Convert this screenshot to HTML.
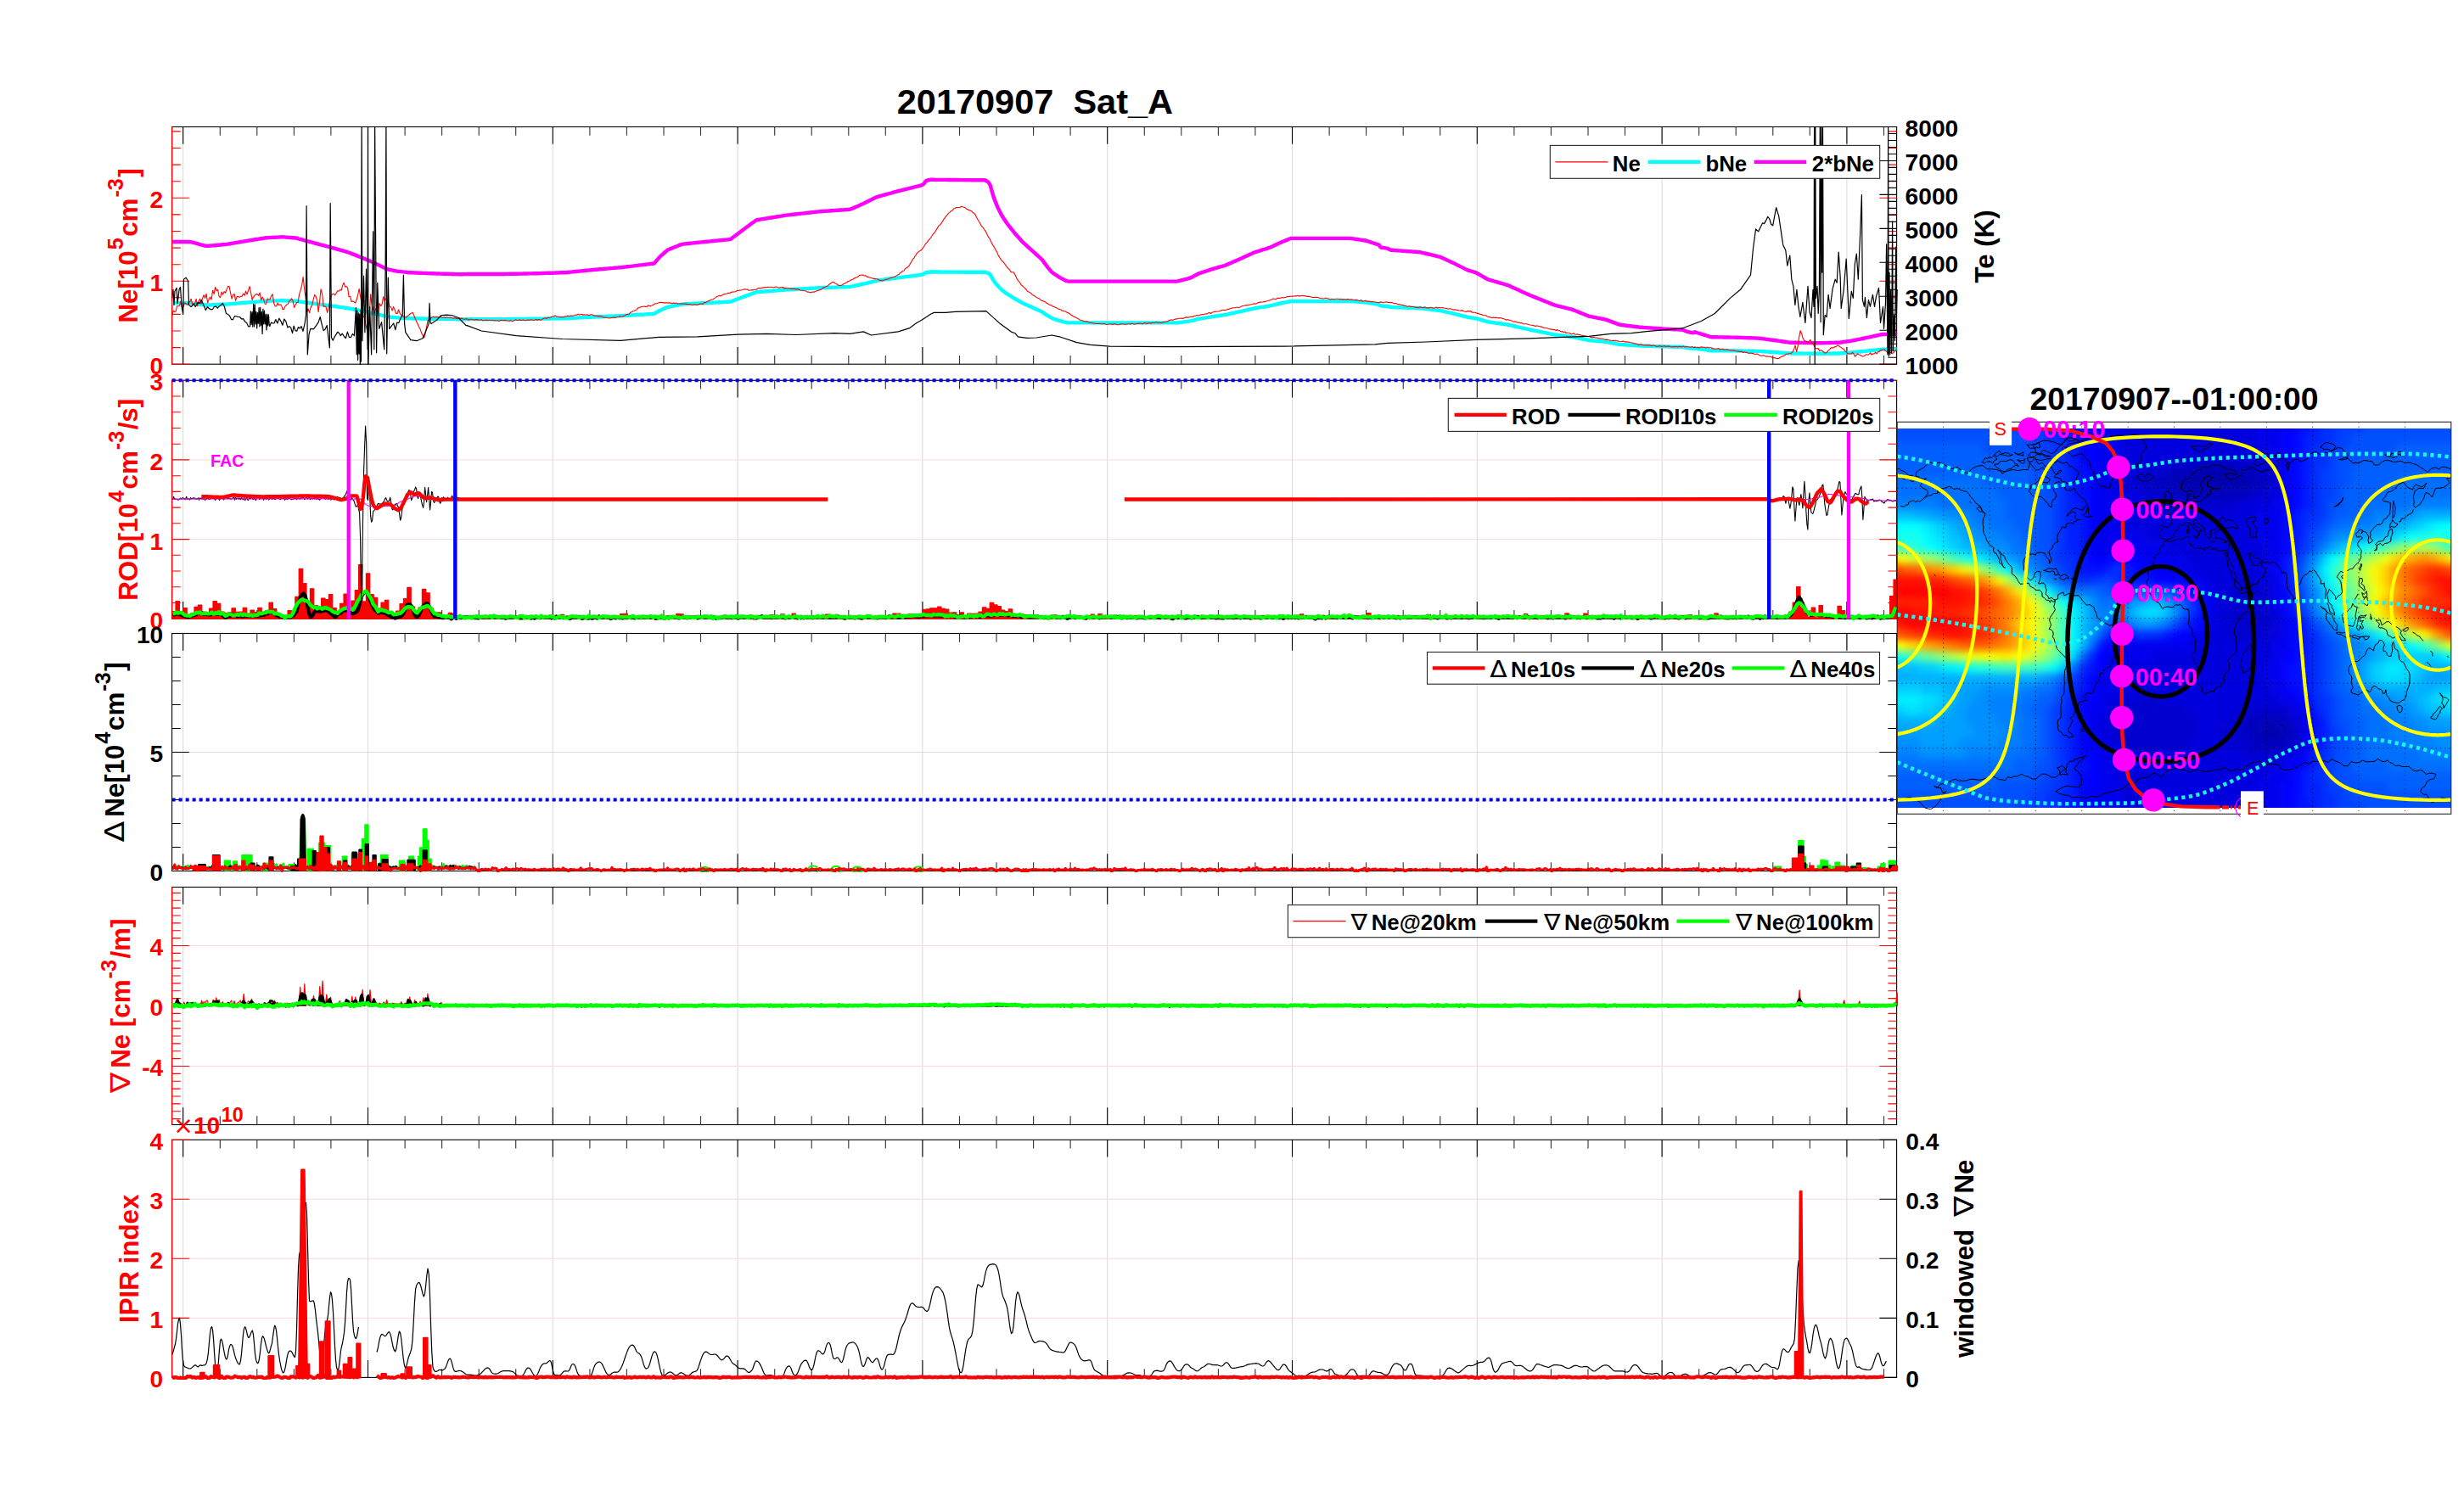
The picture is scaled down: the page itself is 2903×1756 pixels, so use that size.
<!DOCTYPE html>
<html><head><meta charset="utf-8"><title>20170907 Sat_A</title><style>
html,body{margin:0;padding:0;background:#fff;}
svg{display:block}
text{font-family:"Liberation Sans", "DejaVu Sans", sans-serif;font-weight:bold;}
.tk{font-size:28.2px}
.yl{font-size:31.3px}
.sp{font-size:25.2px}
.sp2{font-size:23.3px}
.lg{font-size:25.8px}
.ti{font-size:41.5px}
.mt{font-size:37.3px}
.tm{font-family:"DejaVu Sans", "Liberation Sans", sans-serif;font-weight:normal}
.nb{font-family:"DejaVu Sans", "Liberation Sans", sans-serif;font-weight:normal;font-size:32px}
.nb2{font-family:"DejaVu Sans", "Liberation Sans", sans-serif;font-weight:normal;font-size:26.4px}
.dl{font-family:"DejaVu Sans", "Liberation Sans", sans-serif;font-weight:normal;font-size:32.1px}
.dl2{font-family:"DejaVu Sans", "Liberation Sans", sans-serif;font-weight:normal;font-size:26.5px}
.ml{font-size:28.6px;fill:#ff00ff}
.se{font-weight:normal;font-size:21.6px;fill:#ff0000}
.fac{font-size:19.8px;fill:#ff00ff}
</style></head><body>
<svg width="2903" height="1756" viewBox="0 0 2903 1756">
<rect width="2903" height="1756" fill="#fff"/>
<defs>
<clipPath id="c0"><rect x="202.6" y="149.5" width="2033.5" height="280.2"/></clipPath>
<clipPath id="c1"><rect x="202.6" y="448.3" width="2033.5" height="283.5"/></clipPath>
<clipPath id="c2"><rect x="202.6" y="746.5" width="2033.5" height="281.6"/></clipPath>
<clipPath id="c3"><rect x="202.6" y="1045.5" width="2033.5" height="280.5"/></clipPath>
<clipPath id="c4"><rect x="202.6" y="1343.3" width="2033.5" height="282.7"/></clipPath>
<clipPath id="mc"><rect x="2235.2" y="505.1" width="652.6" height="447"/></clipPath>
<clipPath id="mf"><rect x="2235.2" y="497.3" width="652.6" height="462"/></clipPath>
<clipPath id="me"><rect x="2235.2" y="477.3" width="652.6" height="485.4"/></clipPath>
<filter id="bl" x="-5%" y="-5%" width="110%" height="110%" color-interpolation-filters="sRGB"><feGaussianBlur stdDeviation="4.2 4.2"/></filter>
</defs>
<path d="M215.7 149.5V429.2M433.5 149.5V429.2M651.3 149.5V429.2M869.1 149.5V429.2M1086.9 149.5V429.2M1304.7 149.5V429.2M1522.5 149.5V429.2M1740.3 149.5V429.2M1958.1 149.5V429.2M2175.9 149.5V429.2" stroke="#d9d9d9" stroke-width="1" fill="none"/>
<path d="M215.7 448.3V729.2M433.5 448.3V729.2M651.3 448.3V729.2M869.1 448.3V729.2M1086.9 448.3V729.2M1304.7 448.3V729.2M1522.5 448.3V729.2M1740.3 448.3V729.2M1958.1 448.3V729.2M2175.9 448.3V729.2" stroke="#d9d9d9" stroke-width="1" fill="none"/>
<path d="M215.7 746.5V1026.5M433.5 746.5V1026.5M651.3 746.5V1026.5M869.1 746.5V1026.5M1086.9 746.5V1026.5M1304.7 746.5V1026.5M1522.5 746.5V1026.5M1740.3 746.5V1026.5M1958.1 746.5V1026.5M2175.9 746.5V1026.5" stroke="#d9d9d9" stroke-width="1" fill="none"/>
<path d="M215.7 1045.5V1325.5M433.5 1045.5V1325.5M651.3 1045.5V1325.5M869.1 1045.5V1325.5M1086.9 1045.5V1325.5M1304.7 1045.5V1325.5M1522.5 1045.5V1325.5M1740.3 1045.5V1325.5M1958.1 1045.5V1325.5M2175.9 1045.5V1325.5" stroke="#d9d9d9" stroke-width="1" fill="none"/>
<path d="M215.7 1343.3V1623.4M433.5 1343.3V1623.4M651.3 1343.3V1623.4M869.1 1343.3V1623.4M1086.9 1343.3V1623.4M1304.7 1343.3V1623.4M1522.5 1343.3V1623.4M1740.3 1343.3V1623.4M1958.1 1343.3V1623.4M2175.9 1343.3V1623.4" stroke="#d9d9d9" stroke-width="1" fill="none"/>
<path d="M202.6 635.6H2234.6M202.6 541.9H2234.6" stroke="#ffd9d9" stroke-width="1" fill="none"/>
<path d="M202.6 886.5H2234.6" stroke="#d9d9d9" stroke-width="1" fill="none"/>
<path d="M202.6 1114.5H2234.6M202.6 1185.5H2234.6M202.6 1256.5H2234.6" stroke="#ffd9d9" stroke-width="1" fill="none"/>
<path d="M202.6 1553.4H2234.6M202.6 1483.3H2234.6M202.6 1413.3H2234.6" stroke="#ffd9d9" stroke-width="1" fill="none"/>
<rect x="202.6" y="149.5" width="2032" height="279.7" fill="none" stroke="#000" stroke-width="1.1"/>
<line x1="202.6" y1="149.5" x2="202.6" y2="429.2" stroke="#ff0000" stroke-width="1.3" />
<rect x="202.6" y="448.3" width="2032" height="280.9" fill="none" stroke="#000" stroke-width="1.1"/>
<line x1="202.6" y1="448.3" x2="202.6" y2="729.2" stroke="#ff0000" stroke-width="1.3" />
<rect x="202.6" y="746.5" width="2032" height="280" fill="none" stroke="#000" stroke-width="1.1"/>
<rect x="202.6" y="1045.5" width="2032" height="280" fill="none" stroke="#000" stroke-width="1.1"/>
<line x1="202.6" y1="1045.5" x2="202.6" y2="1325.5" stroke="#ff0000" stroke-width="1.3" />
<rect x="202.6" y="1343.3" width="2032" height="280.1" fill="none" stroke="#000" stroke-width="1.1"/>
<line x1="202.6" y1="1343.3" x2="202.6" y2="1623.4" stroke="#ff0000" stroke-width="1.3" />
<path d="M215.7 149.5v20.3 M215.7 429.2v-20.3M433.5 149.5v20.3 M433.5 429.2v-20.3M651.3 149.5v20.3 M651.3 429.2v-20.3M869.1 149.5v20.3 M869.1 429.2v-20.3M1086.9 149.5v20.3 M1086.9 429.2v-20.3M1304.7 149.5v20.3 M1304.7 429.2v-20.3M1522.5 149.5v20.3 M1522.5 429.2v-20.3M1740.3 149.5v20.3 M1740.3 429.2v-20.3M1958.1 149.5v20.3 M1958.1 429.2v-20.3M2175.9 149.5v20.3 M2175.9 429.2v-20.3" stroke="#000" stroke-width="1.1" fill="none"/>
<path d="M259.3 149.5v10.2 M259.3 429.2v-10.2M302.8 149.5v10.2 M302.8 429.2v-10.2M346.4 149.5v10.2 M346.4 429.2v-10.2M389.9 149.5v10.2 M389.9 429.2v-10.2M477.1 149.5v10.2 M477.1 429.2v-10.2M520.6 149.5v10.2 M520.6 429.2v-10.2M564.2 149.5v10.2 M564.2 429.2v-10.2M607.7 149.5v10.2 M607.7 429.2v-10.2M694.9 149.5v10.2 M694.9 429.2v-10.2M738.4 149.5v10.2 M738.4 429.2v-10.2M782 149.5v10.2 M782 429.2v-10.2M825.5 149.5v10.2 M825.5 429.2v-10.2M912.7 149.5v10.2 M912.7 429.2v-10.2M956.2 149.5v10.2 M956.2 429.2v-10.2M999.8 149.5v10.2 M999.8 429.2v-10.2M1043.3 149.5v10.2 M1043.3 429.2v-10.2M1130.5 149.5v10.2 M1130.5 429.2v-10.2M1174 149.5v10.2 M1174 429.2v-10.2M1217.6 149.5v10.2 M1217.6 429.2v-10.2M1261.1 149.5v10.2 M1261.1 429.2v-10.2M1348.3 149.5v10.2 M1348.3 429.2v-10.2M1391.8 149.5v10.2 M1391.8 429.2v-10.2M1435.4 149.5v10.2 M1435.4 429.2v-10.2M1478.9 149.5v10.2 M1478.9 429.2v-10.2M1566.1 149.5v10.2 M1566.1 429.2v-10.2M1609.6 149.5v10.2 M1609.6 429.2v-10.2M1653.2 149.5v10.2 M1653.2 429.2v-10.2M1696.7 149.5v10.2 M1696.7 429.2v-10.2M1783.9 149.5v10.2 M1783.9 429.2v-10.2M1827.4 149.5v10.2 M1827.4 429.2v-10.2M1871 149.5v10.2 M1871 429.2v-10.2M1914.5 149.5v10.2 M1914.5 429.2v-10.2M2001.7 149.5v10.2 M2001.7 429.2v-10.2M2045.2 149.5v10.2 M2045.2 429.2v-10.2M2088.8 149.5v10.2 M2088.8 429.2v-10.2M2132.3 149.5v10.2 M2132.3 429.2v-10.2M2219.5 149.5v10.2 M2219.5 429.2v-10.2" stroke="#333" stroke-width="1.1" fill="none"/>
<path d="M215.7 448.3v20.3 M215.7 729.2v-20.3M433.5 448.3v20.3 M433.5 729.2v-20.3M651.3 448.3v20.3 M651.3 729.2v-20.3M869.1 448.3v20.3 M869.1 729.2v-20.3M1086.9 448.3v20.3 M1086.9 729.2v-20.3M1304.7 448.3v20.3 M1304.7 729.2v-20.3M1522.5 448.3v20.3 M1522.5 729.2v-20.3M1740.3 448.3v20.3 M1740.3 729.2v-20.3M1958.1 448.3v20.3 M1958.1 729.2v-20.3M2175.9 448.3v20.3 M2175.9 729.2v-20.3" stroke="#000" stroke-width="1.1" fill="none"/>
<path d="M259.3 448.3v10.2 M259.3 729.2v-10.2M302.8 448.3v10.2 M302.8 729.2v-10.2M346.4 448.3v10.2 M346.4 729.2v-10.2M389.9 448.3v10.2 M389.9 729.2v-10.2M477.1 448.3v10.2 M477.1 729.2v-10.2M520.6 448.3v10.2 M520.6 729.2v-10.2M564.2 448.3v10.2 M564.2 729.2v-10.2M607.7 448.3v10.2 M607.7 729.2v-10.2M694.9 448.3v10.2 M694.9 729.2v-10.2M738.4 448.3v10.2 M738.4 729.2v-10.2M782 448.3v10.2 M782 729.2v-10.2M825.5 448.3v10.2 M825.5 729.2v-10.2M912.7 448.3v10.2 M912.7 729.2v-10.2M956.2 448.3v10.2 M956.2 729.2v-10.2M999.8 448.3v10.2 M999.8 729.2v-10.2M1043.3 448.3v10.2 M1043.3 729.2v-10.2M1130.5 448.3v10.2 M1130.5 729.2v-10.2M1174 448.3v10.2 M1174 729.2v-10.2M1217.6 448.3v10.2 M1217.6 729.2v-10.2M1261.1 448.3v10.2 M1261.1 729.2v-10.2M1348.3 448.3v10.2 M1348.3 729.2v-10.2M1391.8 448.3v10.2 M1391.8 729.2v-10.2M1435.4 448.3v10.2 M1435.4 729.2v-10.2M1478.9 448.3v10.2 M1478.9 729.2v-10.2M1566.1 448.3v10.2 M1566.1 729.2v-10.2M1609.6 448.3v10.2 M1609.6 729.2v-10.2M1653.2 448.3v10.2 M1653.2 729.2v-10.2M1696.7 448.3v10.2 M1696.7 729.2v-10.2M1783.9 448.3v10.2 M1783.9 729.2v-10.2M1827.4 448.3v10.2 M1827.4 729.2v-10.2M1871 448.3v10.2 M1871 729.2v-10.2M1914.5 448.3v10.2 M1914.5 729.2v-10.2M2001.7 448.3v10.2 M2001.7 729.2v-10.2M2045.2 448.3v10.2 M2045.2 729.2v-10.2M2088.8 448.3v10.2 M2088.8 729.2v-10.2M2132.3 448.3v10.2 M2132.3 729.2v-10.2M2219.5 448.3v10.2 M2219.5 729.2v-10.2" stroke="#333" stroke-width="1.1" fill="none"/>
<path d="M215.7 746.5v20.3 M215.7 1026.5v-20.3M433.5 746.5v20.3 M433.5 1026.5v-20.3M651.3 746.5v20.3 M651.3 1026.5v-20.3M869.1 746.5v20.3 M869.1 1026.5v-20.3M1086.9 746.5v20.3 M1086.9 1026.5v-20.3M1304.7 746.5v20.3 M1304.7 1026.5v-20.3M1522.5 746.5v20.3 M1522.5 1026.5v-20.3M1740.3 746.5v20.3 M1740.3 1026.5v-20.3M1958.1 746.5v20.3 M1958.1 1026.5v-20.3M2175.9 746.5v20.3 M2175.9 1026.5v-20.3" stroke="#000" stroke-width="1.1" fill="none"/>
<path d="M259.3 746.5v10.2 M259.3 1026.5v-10.2M302.8 746.5v10.2 M302.8 1026.5v-10.2M346.4 746.5v10.2 M346.4 1026.5v-10.2M389.9 746.5v10.2 M389.9 1026.5v-10.2M477.1 746.5v10.2 M477.1 1026.5v-10.2M520.6 746.5v10.2 M520.6 1026.5v-10.2M564.2 746.5v10.2 M564.2 1026.5v-10.2M607.7 746.5v10.2 M607.7 1026.5v-10.2M694.9 746.5v10.2 M694.9 1026.5v-10.2M738.4 746.5v10.2 M738.4 1026.5v-10.2M782 746.5v10.2 M782 1026.5v-10.2M825.5 746.5v10.2 M825.5 1026.5v-10.2M912.7 746.5v10.2 M912.7 1026.5v-10.2M956.2 746.5v10.2 M956.2 1026.5v-10.2M999.8 746.5v10.2 M999.8 1026.5v-10.2M1043.3 746.5v10.2 M1043.3 1026.5v-10.2M1130.5 746.5v10.2 M1130.5 1026.5v-10.2M1174 746.5v10.2 M1174 1026.5v-10.2M1217.6 746.5v10.2 M1217.6 1026.5v-10.2M1261.1 746.5v10.2 M1261.1 1026.5v-10.2M1348.3 746.5v10.2 M1348.3 1026.5v-10.2M1391.8 746.5v10.2 M1391.8 1026.5v-10.2M1435.4 746.5v10.2 M1435.4 1026.5v-10.2M1478.9 746.5v10.2 M1478.9 1026.5v-10.2M1566.1 746.5v10.2 M1566.1 1026.5v-10.2M1609.6 746.5v10.2 M1609.6 1026.5v-10.2M1653.2 746.5v10.2 M1653.2 1026.5v-10.2M1696.7 746.5v10.2 M1696.7 1026.5v-10.2M1783.9 746.5v10.2 M1783.9 1026.5v-10.2M1827.4 746.5v10.2 M1827.4 1026.5v-10.2M1871 746.5v10.2 M1871 1026.5v-10.2M1914.5 746.5v10.2 M1914.5 1026.5v-10.2M2001.7 746.5v10.2 M2001.7 1026.5v-10.2M2045.2 746.5v10.2 M2045.2 1026.5v-10.2M2088.8 746.5v10.2 M2088.8 1026.5v-10.2M2132.3 746.5v10.2 M2132.3 1026.5v-10.2M2219.5 746.5v10.2 M2219.5 1026.5v-10.2" stroke="#333" stroke-width="1.1" fill="none"/>
<path d="M215.7 1045.5v20.3 M215.7 1325.5v-20.3M433.5 1045.5v20.3 M433.5 1325.5v-20.3M651.3 1045.5v20.3 M651.3 1325.5v-20.3M869.1 1045.5v20.3 M869.1 1325.5v-20.3M1086.9 1045.5v20.3 M1086.9 1325.5v-20.3M1304.7 1045.5v20.3 M1304.7 1325.5v-20.3M1522.5 1045.5v20.3 M1522.5 1325.5v-20.3M1740.3 1045.5v20.3 M1740.3 1325.5v-20.3M1958.1 1045.5v20.3 M1958.1 1325.5v-20.3M2175.9 1045.5v20.3 M2175.9 1325.5v-20.3" stroke="#000" stroke-width="1.1" fill="none"/>
<path d="M259.3 1045.5v10.2 M259.3 1325.5v-10.2M302.8 1045.5v10.2 M302.8 1325.5v-10.2M346.4 1045.5v10.2 M346.4 1325.5v-10.2M389.9 1045.5v10.2 M389.9 1325.5v-10.2M477.1 1045.5v10.2 M477.1 1325.5v-10.2M520.6 1045.5v10.2 M520.6 1325.5v-10.2M564.2 1045.5v10.2 M564.2 1325.5v-10.2M607.7 1045.5v10.2 M607.7 1325.5v-10.2M694.9 1045.5v10.2 M694.9 1325.5v-10.2M738.4 1045.5v10.2 M738.4 1325.5v-10.2M782 1045.5v10.2 M782 1325.5v-10.2M825.5 1045.5v10.2 M825.5 1325.5v-10.2M912.7 1045.5v10.2 M912.7 1325.5v-10.2M956.2 1045.5v10.2 M956.2 1325.5v-10.2M999.8 1045.5v10.2 M999.8 1325.5v-10.2M1043.3 1045.5v10.2 M1043.3 1325.5v-10.2M1130.5 1045.5v10.2 M1130.5 1325.5v-10.2M1174 1045.5v10.2 M1174 1325.5v-10.2M1217.6 1045.5v10.2 M1217.6 1325.5v-10.2M1261.1 1045.5v10.2 M1261.1 1325.5v-10.2M1348.3 1045.5v10.2 M1348.3 1325.5v-10.2M1391.8 1045.5v10.2 M1391.8 1325.5v-10.2M1435.4 1045.5v10.2 M1435.4 1325.5v-10.2M1478.9 1045.5v10.2 M1478.9 1325.5v-10.2M1566.1 1045.5v10.2 M1566.1 1325.5v-10.2M1609.6 1045.5v10.2 M1609.6 1325.5v-10.2M1653.2 1045.5v10.2 M1653.2 1325.5v-10.2M1696.7 1045.5v10.2 M1696.7 1325.5v-10.2M1783.9 1045.5v10.2 M1783.9 1325.5v-10.2M1827.4 1045.5v10.2 M1827.4 1325.5v-10.2M1871 1045.5v10.2 M1871 1325.5v-10.2M1914.5 1045.5v10.2 M1914.5 1325.5v-10.2M2001.7 1045.5v10.2 M2001.7 1325.5v-10.2M2045.2 1045.5v10.2 M2045.2 1325.5v-10.2M2088.8 1045.5v10.2 M2088.8 1325.5v-10.2M2132.3 1045.5v10.2 M2132.3 1325.5v-10.2M2219.5 1045.5v10.2 M2219.5 1325.5v-10.2" stroke="#333" stroke-width="1.1" fill="none"/>
<path d="M215.7 1343.3v20.3 M215.7 1623.4v-20.3M433.5 1343.3v20.3 M433.5 1623.4v-20.3M651.3 1343.3v20.3 M651.3 1623.4v-20.3M869.1 1343.3v20.3 M869.1 1623.4v-20.3M1086.9 1343.3v20.3 M1086.9 1623.4v-20.3M1304.7 1343.3v20.3 M1304.7 1623.4v-20.3M1522.5 1343.3v20.3 M1522.5 1623.4v-20.3M1740.3 1343.3v20.3 M1740.3 1623.4v-20.3M1958.1 1343.3v20.3 M1958.1 1623.4v-20.3M2175.9 1343.3v20.3 M2175.9 1623.4v-20.3" stroke="#000" stroke-width="1.1" fill="none"/>
<path d="M259.3 1343.3v10.2 M259.3 1623.4v-10.2M302.8 1343.3v10.2 M302.8 1623.4v-10.2M346.4 1343.3v10.2 M346.4 1623.4v-10.2M389.9 1343.3v10.2 M389.9 1623.4v-10.2M477.1 1343.3v10.2 M477.1 1623.4v-10.2M520.6 1343.3v10.2 M520.6 1623.4v-10.2M564.2 1343.3v10.2 M564.2 1623.4v-10.2M607.7 1343.3v10.2 M607.7 1623.4v-10.2M694.9 1343.3v10.2 M694.9 1623.4v-10.2M738.4 1343.3v10.2 M738.4 1623.4v-10.2M782 1343.3v10.2 M782 1623.4v-10.2M825.5 1343.3v10.2 M825.5 1623.4v-10.2M912.7 1343.3v10.2 M912.7 1623.4v-10.2M956.2 1343.3v10.2 M956.2 1623.4v-10.2M999.8 1343.3v10.2 M999.8 1623.4v-10.2M1043.3 1343.3v10.2 M1043.3 1623.4v-10.2M1130.5 1343.3v10.2 M1130.5 1623.4v-10.2M1174 1343.3v10.2 M1174 1623.4v-10.2M1217.6 1343.3v10.2 M1217.6 1623.4v-10.2M1261.1 1343.3v10.2 M1261.1 1623.4v-10.2M1348.3 1343.3v10.2 M1348.3 1623.4v-10.2M1391.8 1343.3v10.2 M1391.8 1623.4v-10.2M1435.4 1343.3v10.2 M1435.4 1623.4v-10.2M1478.9 1343.3v10.2 M1478.9 1623.4v-10.2M1566.1 1343.3v10.2 M1566.1 1623.4v-10.2M1609.6 1343.3v10.2 M1609.6 1623.4v-10.2M1653.2 1343.3v10.2 M1653.2 1623.4v-10.2M1696.7 1343.3v10.2 M1696.7 1623.4v-10.2M1783.9 1343.3v10.2 M1783.9 1623.4v-10.2M1827.4 1343.3v10.2 M1827.4 1623.4v-10.2M1871 1343.3v10.2 M1871 1623.4v-10.2M1914.5 1343.3v10.2 M1914.5 1623.4v-10.2M2001.7 1343.3v10.2 M2001.7 1623.4v-10.2M2045.2 1343.3v10.2 M2045.2 1623.4v-10.2M2088.8 1343.3v10.2 M2088.8 1623.4v-10.2M2132.3 1343.3v10.2 M2132.3 1623.4v-10.2M2219.5 1343.3v10.2 M2219.5 1623.4v-10.2" stroke="#333" stroke-width="1.1" fill="none"/>
<path d="M202.6 429.2h20.3M202.6 331.2h20.3M202.6 233.3h20.3M202.6 409.6h10.2M202.6 390h10.2M202.6 370.4h10.2M202.6 350.8h10.2M202.6 311.7h10.2M202.6 292.1h10.2M202.6 272.5h10.2M202.6 252.9h10.2M202.6 213.7h10.2M202.6 194.1h10.2M202.6 174.5h10.2M202.6 154.9h10.2" stroke="#ff0000" stroke-width="1.1" fill="none"/>
<path d="M2234.6 429.2h-20.3M2234.6 331.2h-20.3M2234.6 233.3h-20.3M2234.6 409.6h-10.2M2234.6 390h-10.2M2234.6 370.4h-10.2M2234.6 350.8h-10.2M2234.6 311.7h-10.2M2234.6 292.1h-10.2M2234.6 272.5h-10.2M2234.6 252.9h-10.2M2234.6 213.7h-10.2M2234.6 194.1h-10.2M2234.6 174.5h-10.2M2234.6 154.9h-10.2" stroke="#ff0000" stroke-width="1.1" fill="none"/>
<path d="M2234.6 429.2h-20.3M2234.6 389.2h-20.3M2234.6 349.3h-20.3M2234.6 309.3h-20.3M2234.6 269.4h-20.3M2234.6 229.4h-20.3M2234.6 189.5h-20.3M2234.6 149.5h-20.3M2234.6 421.2h-10.2M2234.6 413.2h-10.2M2234.6 405.2h-10.2M2234.6 397.2h-10.2M2234.6 381.3h-10.2M2234.6 373.3h-10.2M2234.6 365.3h-10.2M2234.6 357.3h-10.2M2234.6 341.3h-10.2M2234.6 333.3h-10.2M2234.6 325.3h-10.2M2234.6 317.3h-10.2M2234.6 301.3h-10.2M2234.6 293.3h-10.2M2234.6 285.4h-10.2M2234.6 277.4h-10.2M2234.6 261.4h-10.2M2234.6 253.4h-10.2M2234.6 245.4h-10.2M2234.6 237.4h-10.2M2234.6 221.4h-10.2M2234.6 213.4h-10.2M2234.6 205.4h-10.2M2234.6 197.4h-10.2M2234.6 181.5h-10.2M2234.6 173.5h-10.2M2234.6 165.5h-10.2M2234.6 157.5h-10.2" stroke="#000" stroke-width="1.1" fill="none"/>
<text x="192.3" y="441.1" fill="#ff0000" text-anchor="end" class="tk">0</text>
<text x="192.3" y="343.1" fill="#ff0000" text-anchor="end" class="tk">1</text>
<text x="192.3" y="245.2" fill="#ff0000" text-anchor="end" class="tk">2</text>
<text x="2244.6" y="441.1" fill="#000" text-anchor="start" class="tk">1000</text>
<text x="2244.6" y="401.1" fill="#000" text-anchor="start" class="tk">2000</text>
<text x="2244.6" y="361.2" fill="#000" text-anchor="start" class="tk">3000</text>
<text x="2244.6" y="321.2" fill="#000" text-anchor="start" class="tk">4000</text>
<text x="2244.6" y="281.3" fill="#000" text-anchor="start" class="tk">5000</text>
<text x="2244.6" y="241.3" fill="#000" text-anchor="start" class="tk">6000</text>
<text x="2244.6" y="201.4" fill="#000" text-anchor="start" class="tk">7000</text>
<text x="2244.6" y="161.4" fill="#000" text-anchor="start" class="tk">8000</text>
<text transform="translate(161.6,289.4) rotate(-90)" fill="#ff0000" text-anchor="middle" class="yl">Ne[10<tspan dy="-16.5" dx="1" class="sp">5</tspan><tspan dy="16.5" dx="1.5">&#8203;</tspan>cm<tspan dy="-16.5" dx="1" class="sp">-3</tspan><tspan dy="16.5" dx="1.5">&#8203;</tspan>]</text>
<text transform="translate(2348.6,290.4) rotate(-90)" fill="#000" text-anchor="middle" class="yl">Te (K)</text>
<path d="M202.6 729.2h20.3M202.6 635.6h20.3M202.6 541.9h20.3M202.6 448.3h20.3M202.6 710.5h10.2M202.6 691.7h10.2M202.6 673h10.2M202.6 654.3h10.2M202.6 616.8h10.2M202.6 598.1h10.2M202.6 579.4h10.2M202.6 560.7h10.2M202.6 523.2h10.2M202.6 504.5h10.2M202.6 485.8h10.2M202.6 467h10.2" stroke="#ff0000" stroke-width="1.1" fill="none"/>
<path d="M2234.6 729.2h-20.3M2234.6 635.6h-20.3M2234.6 541.9h-20.3M2234.6 448.3h-20.3M2234.6 710.5h-10.2M2234.6 691.7h-10.2M2234.6 673h-10.2M2234.6 654.3h-10.2M2234.6 616.8h-10.2M2234.6 598.1h-10.2M2234.6 579.4h-10.2M2234.6 560.7h-10.2M2234.6 523.2h-10.2M2234.6 504.5h-10.2M2234.6 485.8h-10.2M2234.6 467h-10.2" stroke="#ff0000" stroke-width="1.1" fill="none"/>
<text x="192.3" y="741.1" fill="#ff0000" text-anchor="end" class="tk">0</text>
<text x="192.3" y="647.5" fill="#ff0000" text-anchor="end" class="tk">1</text>
<text x="192.3" y="553.8" fill="#ff0000" text-anchor="end" class="tk">2</text>
<text x="192.3" y="460.2" fill="#ff0000" text-anchor="end" class="tk">3</text>
<text transform="translate(162.4,588.8) rotate(-90)" fill="#ff0000" text-anchor="middle" class="yl">ROD[10<tspan dy="-16.5" dx="1" class="sp">4</tspan><tspan dy="16.5" dx="1.5">&#8203;</tspan>cm<tspan dy="-16.5" dx="1" class="sp">-3</tspan><tspan dy="16.5" dx="1.5">&#8203;</tspan>/s]</text>
<path d="M202.6 1026.5h20.3M202.6 886.5h20.3M202.6 746.5h20.3M202.6 998.5h10.2M202.6 970.5h10.2M202.6 942.5h10.2M202.6 914.5h10.2M202.6 858.5h10.2M202.6 830.5h10.2M202.6 802.5h10.2M202.6 774.5h10.2" stroke="#000" stroke-width="1.1" fill="none"/>
<path d="M2234.6 1026.5h-20.3M2234.6 886.5h-20.3M2234.6 746.5h-20.3M2234.6 998.5h-10.2M2234.6 970.5h-10.2M2234.6 942.5h-10.2M2234.6 914.5h-10.2M2234.6 858.5h-10.2M2234.6 830.5h-10.2M2234.6 802.5h-10.2M2234.6 774.5h-10.2" stroke="#000" stroke-width="1.1" fill="none"/>
<text x="192.3" y="1038.4" fill="#000" text-anchor="end" class="tk">0</text>
<text x="192.3" y="898.4" fill="#000" text-anchor="end" class="tk">5</text>
<text x="192.3" y="758.4" fill="#000" text-anchor="end" class="tk">10</text>
<text transform="translate(146.4,886.5) rotate(-90)" fill="#000" text-anchor="middle" class="yl"><tspan class="dl" textLength="24.9" lengthAdjust="spacingAndGlyphs">&#916;</tspan><tspan dx="5">&#8203;</tspan>Ne[10<tspan dy="-16.5" dx="1" class="sp">4</tspan><tspan dy="16.5" dx="1.5">&#8203;</tspan>cm<tspan dy="-16.5" dx="1" class="sp">-3</tspan><tspan dy="16.5" dx="1.5">&#8203;</tspan>]</text>
<path d="M202.6 1114.5h20.3M202.6 1185.5h20.3M202.6 1256.5h20.3M202.6 1052.4h10.2M202.6 1061.2h10.2M202.6 1070.1h10.2M202.6 1079h10.2M202.6 1087.9h10.2M202.6 1096.8h10.2M202.6 1105.6h10.2M202.6 1123.4h10.2M202.6 1132.2h10.2M202.6 1141.1h10.2M202.6 1150h10.2M202.6 1158.9h10.2M202.6 1167.8h10.2M202.6 1176.6h10.2M202.6 1194.4h10.2M202.6 1203.2h10.2M202.6 1212.1h10.2M202.6 1221h10.2M202.6 1229.9h10.2M202.6 1238.8h10.2M202.6 1247.6h10.2M202.6 1265.4h10.2M202.6 1274.2h10.2M202.6 1283.1h10.2M202.6 1292h10.2M202.6 1300.9h10.2M202.6 1309.8h10.2M202.6 1318.6h10.2" stroke="#ff0000" stroke-width="1.1" fill="none"/>
<path d="M2234.6 1114.5h-20.3M2234.6 1185.5h-20.3M2234.6 1256.5h-20.3M2234.6 1052.4h-10.2M2234.6 1061.2h-10.2M2234.6 1070.1h-10.2M2234.6 1079h-10.2M2234.6 1087.9h-10.2M2234.6 1096.8h-10.2M2234.6 1105.6h-10.2M2234.6 1123.4h-10.2M2234.6 1132.2h-10.2M2234.6 1141.1h-10.2M2234.6 1150h-10.2M2234.6 1158.9h-10.2M2234.6 1167.8h-10.2M2234.6 1176.6h-10.2M2234.6 1194.4h-10.2M2234.6 1203.2h-10.2M2234.6 1212.1h-10.2M2234.6 1221h-10.2M2234.6 1229.9h-10.2M2234.6 1238.8h-10.2M2234.6 1247.6h-10.2M2234.6 1265.4h-10.2M2234.6 1274.2h-10.2M2234.6 1283.1h-10.2M2234.6 1292h-10.2M2234.6 1300.9h-10.2M2234.6 1309.8h-10.2M2234.6 1318.6h-10.2" stroke="#ff0000" stroke-width="1.1" fill="none"/>
<text x="192.3" y="1126.4" fill="#ff0000" text-anchor="end" class="tk">4</text>
<text x="192.3" y="1197.4" fill="#ff0000" text-anchor="end" class="tk">0</text>
<text x="192.3" y="1268.4" fill="#ff0000" text-anchor="end" class="tk">-4</text>
<text transform="translate(153.3,1185.5) rotate(-90)" fill="#ff0000" text-anchor="middle" class="yl"><tspan class="nb" textLength="24.5" lengthAdjust="spacingAndGlyphs">&#8711;</tspan><tspan dx="5">&#8203;</tspan>Ne [cm<tspan dy="-16.5" dx="1" class="sp">-3</tspan><tspan dy="16.5" dx="1.5">&#8203;</tspan>/m]</text>
<path d="M202.6 1623.4h20.3M202.6 1553.4h20.3M202.6 1483.3h20.3M202.6 1413.3h20.3M202.6 1343.3h20.3" stroke="#ff0000" stroke-width="1.1" fill="none"/>
<path d="M2234.6 1623.4h-20.3M2234.6 1553.4h-20.3M2234.6 1483.3h-20.3M2234.6 1413.3h-20.3M2234.6 1343.3h-20.3" stroke="#000" stroke-width="1.1" fill="none"/>
<text x="192.3" y="1635.3" fill="#ff0000" text-anchor="end" class="tk">0</text>
<text x="192.3" y="1565.3" fill="#ff0000" text-anchor="end" class="tk">1</text>
<text x="192.3" y="1495.2" fill="#ff0000" text-anchor="end" class="tk">2</text>
<text x="192.3" y="1425.2" fill="#ff0000" text-anchor="end" class="tk">3</text>
<text x="192.3" y="1355.2" fill="#ff0000" text-anchor="end" class="tk">4</text>
<text x="2245.2" y="1635.3" fill="#000" text-anchor="start" class="tk">0</text>
<text x="2245.2" y="1565.3" fill="#000" text-anchor="start" class="tk">0.1</text>
<text x="2245.2" y="1495.2" fill="#000" text-anchor="start" class="tk">0.2</text>
<text x="2245.2" y="1425.2" fill="#000" text-anchor="start" class="tk">0.3</text>
<text x="2245.2" y="1355.2" fill="#000" text-anchor="start" class="tk">0.4</text>
<text transform="translate(162.7,1483.3) rotate(-90)" fill="#ff0000" text-anchor="middle" class="yl">IPIR index</text>
<text transform="translate(2325.3,1483.3) rotate(-90)" fill="#000" text-anchor="middle" class="yl">windowed <tspan class="nb" dx="6" textLength="24.5" lengthAdjust="spacingAndGlyphs">&#8711;</tspan><tspan dx="3">&#8203;</tspan>Ne</text>
<text x="204.3" y="1336.3" fill="#ff0000" class="tk"><tspan class="tm">&#215;</tspan>10<tspan dy="-14" dx="1.5" class="sp2">10</tspan></text>
<g clip-path="url(#c0)">
<polyline points="202.6,357.1 204.6,357.1 206.6,357.1 208.6,357.1 210.6,357.1 212.6,357.1 214.6,357.1 216.6,357.1 218.6,357.1 220.6,357.1 222.6,357.1 224.6,357.2 226.6,357.4 228.6,357.7 230.6,358 232.6,358.2 234.6,358.5 236.6,358.7 238.6,359 240.6,359.2 242.6,359.5 244.6,359.5 246.6,359.5 248.6,359.4 250.6,359.3 252.6,359.2 254.6,359.1 256.6,359 258.6,358.9 260.6,358.8 262.6,358.8 264.6,358.7 266.6,358.6 268.6,358.4 270.6,358.2 272.6,358.1 274.6,357.9 276.6,357.7 278.6,357.6 280.6,357.4 282.6,357.2 284.6,357.1 286.6,356.9 288.6,356.7 290.6,356.6 292.6,356.4 294.6,356.2 296.6,356.1 298.6,355.9 300.6,355.8 302.6,355.6 304.6,355.4 306.6,355.3 308.6,355.1 310.6,354.9 312.6,354.8 314.6,354.7 316.6,354.7 318.6,354.6 320.6,354.6 322.6,354.5 324.6,354.5 326.6,354.4 328.6,354.4 330.6,354.3 332.6,354.3 334.6,354.3 336.6,354.4 338.6,354.5 340.6,354.5 342.6,354.6 344.6,354.7 346.6,354.8 348.6,354.8 350.6,355.1 352.6,355.4 354.6,355.7 356.6,355.9 358.6,356.2 360.6,356.5 362.6,356.8 364.6,357 366.6,357.3 368.6,357.6 370.6,357.8 372.6,358.1 374.6,358.4 376.6,358.6 378.6,358.9 380.6,359.2 382.6,359.4 384.6,359.7 386.6,359.9 388.6,360.2 390.6,360.5 392.6,360.8 394.6,361 396.6,361.3 398.6,361.6 400.6,361.9 402.6,362.2 404.6,362.4 406.6,362.7 408.6,363 410.6,363.4 412.6,363.7 414.6,364.1 416.6,364.5 418.6,364.9 420.6,365.3 422.6,365.7 424.6,366.1 426.6,366.5 428.6,366.9 430.6,367.3 432.6,367.7 434.6,368.2 436.6,368.6 438.6,369 440.6,369.4 442.6,369.9 444.6,370.4 446.6,370.9 448.6,371.4 450.6,371.9 452.6,372.4 454.6,372.9 456.6,373.3 458.6,373.5 460.6,373.7 462.6,373.9 464.6,374.1 466.6,374.3 468.6,374.4 470.6,374.6 472.6,374.7 474.6,374.8 476.6,374.9 478.6,375 480.6,375.1 482.6,375.2 484.6,375.3 486.6,375.3 488.6,375.3 490.6,375.4 492.6,375.4 494.6,375.5 496.6,375.5 498.6,375.5 500.6,375.6 502.6,375.6 504.6,375.7 506.6,375.7 508.6,375.7 510.6,375.8 512.6,375.8 514.6,375.8 516.6,375.9 518.6,375.9 520.6,375.9 522.6,375.9 524.6,376 526.6,376 528.6,376 530.6,376 532.6,376.1 534.6,376.1 536.6,376.1 538.6,376.2 540.6,376.2 542.6,376.2 544.6,376.2 546.6,376.2 548.6,376.1 550.6,376.1 552.6,376.1 554.6,376.1 556.6,376.1 558.6,376.1 560.6,376.1 562.6,376.1 564.6,376.1 566.6,376.1 568.6,376.1 570.6,376.1 572.6,376.1 574.6,376.1 576.6,376.1 578.6,376.1 580.6,376.1 582.6,376.1 584.6,376.1 586.6,376.1 588.6,376.1 590.6,376.1 592.6,376.1 594.6,376.1 596.6,376.1 598.6,376 600.6,376 602.6,376 604.6,376 606.6,376 608.6,375.9 610.6,375.9 612.6,375.9 614.6,375.9 616.6,375.9 618.6,375.9 620.6,375.8 622.6,375.8 624.6,375.8 626.6,375.8 628.6,375.8 630.6,375.7 632.6,375.7 634.6,375.7 636.6,375.6 638.6,375.6 640.6,375.6 642.6,375.6 644.6,375.5 646.6,375.5 648.6,375.5 650.6,375.4 652.6,375.4 654.6,375.4 656.6,375.3 658.6,375.3 660.6,375.3 662.6,375.2 664.6,375.2 666.6,375.2 668.6,375.1 670.6,375 672.6,374.9 674.6,374.8 676.6,374.7 678.6,374.6 680.6,374.5 682.6,374.4 684.6,374.3 686.6,374.2 688.6,374.1 690.6,374 692.6,373.9 694.6,373.8 696.6,373.7 698.6,373.6 700.6,373.5 702.6,373.4 704.6,373.3 706.6,373.3 708.6,373.2 710.6,373.1 712.6,373 714.6,372.9 716.6,372.8 718.6,372.7 720.6,372.6 722.6,372.6 724.6,372.5 726.6,372.4 728.6,372.3 730.6,372.2 732.6,372.1 734.6,372 736.6,371.9 738.6,371.8 740.6,371.7 742.6,371.5 744.6,371.4 746.6,371.3 748.6,371.2 750.6,371 752.6,370.9 754.6,370.8 756.6,370.7 758.6,370.6 760.6,370.4 762.6,370.3 764.6,370.2 766.6,370.1 768.6,370 770.6,369.8 772.6,368.7 774.6,367.5 776.6,366.4 778.6,365.4 780.6,364.5 782.6,363.6 784.6,362.7 786.6,361.9 788.6,361.5 790.6,361.1 792.6,360.7 794.6,360.3 796.6,359.9 798.6,359.5 800.6,359.1 802.6,358.7 804.6,358.4 806.6,358.3 808.6,358.2 810.6,358.1 812.6,358 814.6,357.9 816.6,357.8 818.6,357.7 820.6,357.6 822.6,357.5 824.6,357.4 826.6,357.3 828.6,357.2 830.6,357.1 832.6,357 834.6,356.9 836.6,356.8 838.6,356.7 840.6,356.6 842.6,356.5 844.6,356.4 846.6,356.3 848.6,356.2 850.6,356.1 852.6,356 854.6,355.9 856.6,355.8 858.6,355.7 860.6,355.6 862.6,354.8 864.6,354.1 866.6,353.3 868.6,352.6 870.6,351.8 872.6,351.1 874.6,350.3 876.6,349.6 878.6,348.9 880.6,348.1 882.6,347.4 884.6,346.7 886.6,345.9 888.6,345.2 890.6,344.5 892.6,344.1 894.6,344 896.6,343.8 898.6,343.7 900.6,343.5 902.6,343.3 904.6,343.2 906.6,343 908.6,342.9 910.6,342.7 912.6,342.5 914.6,342.4 916.6,342.2 918.6,342 920.6,341.9 922.6,341.7 924.6,341.6 926.6,341.4 928.6,341.3 930.6,341.2 932.6,341.1 934.6,341 936.6,340.8 938.6,340.7 940.6,340.6 942.6,340.5 944.6,340.4 946.6,340.3 948.6,340.2 950.6,340.1 952.6,340 954.6,339.8 956.6,339.7 958.6,339.6 960.6,339.5 962.6,339.4 964.6,339.3 966.6,339.2 968.6,339.1 970.6,339 972.6,339 974.6,338.9 976.6,338.8 978.6,338.8 980.6,338.7 982.6,338.6 984.6,338.6 986.6,338.5 988.6,338.4 990.6,338.4 992.6,338.3 994.6,338.2 996.6,338.2 998.6,338.1 1000.6,338 1002.6,337.7 1004.6,337.3 1006.6,336.9 1008.6,336.5 1010.6,336 1012.6,335.6 1014.6,335.2 1016.6,334.7 1018.6,334.3 1020.6,333.8 1022.6,333.3 1024.6,332.8 1026.6,332.3 1028.6,331.8 1030.6,331.3 1032.6,330.8 1034.6,330.4 1036.6,330.2 1038.6,329.9 1040.6,329.6 1042.6,329.3 1044.6,329.1 1046.6,328.8 1048.6,328.5 1050.6,328.2 1052.6,328 1054.6,327.7 1056.6,327.4 1058.6,327.2 1060.6,326.9 1062.6,326.7 1064.6,326.4 1066.6,326.2 1068.6,325.9 1070.6,325.7 1072.6,325.4 1074.6,325.2 1076.6,324.9 1078.6,324.7 1080.6,324.4 1082.6,324.2 1084.6,323.9 1086.6,323.5 1088.6,322.8 1090.6,321.3 1092.6,320.8 1094.6,320.7 1096.6,320.5 1098.6,320.5 1100.6,320.5 1102.6,320.5 1104.6,320.5 1106.6,320.5 1108.6,320.6 1110.6,320.6 1112.6,320.6 1114.6,320.6 1116.6,320.6 1118.6,320.6 1120.6,320.6 1122.6,320.6 1124.6,320.6 1126.6,320.6 1128.6,320.6 1130.6,320.6 1132.6,320.6 1134.6,320.6 1136.6,320.7 1138.6,320.7 1140.6,320.7 1142.6,320.7 1144.6,320.7 1146.6,320.7 1148.6,320.7 1150.6,320.7 1152.6,320.7 1154.6,320.7 1156.6,320.7 1158.6,320.7 1160.6,320.7 1162.6,321.4 1164.6,322 1166.6,323.6 1168.6,327.2 1170.6,330.6 1172.6,333.3 1174.6,335.8 1176.6,338 1178.6,340 1180.6,341.9 1182.6,343.4 1184.6,344.9 1186.6,346.4 1188.6,347.6 1190.6,348.9 1192.6,350.1 1194.6,351.4 1196.6,352.6 1198.6,353.7 1200.6,354.9 1202.6,356 1204.6,357.1 1206.6,358 1208.6,358.9 1210.6,359.8 1212.6,360.7 1214.6,361.6 1216.6,362.5 1218.6,363.4 1220.6,364.3 1222.6,365.2 1224.6,366.1 1226.6,367 1228.6,368.2 1230.6,369.6 1232.6,371 1234.6,372.2 1236.6,373.4 1238.6,374.6 1240.6,375.5 1242.6,376.1 1244.6,376.8 1246.6,377.5 1248.6,378.1 1250.6,378.6 1252.6,379.2 1254.6,379.7 1256.6,380.2 1258.6,380.4 1260.6,380.4 1262.6,380.4 1264.6,380.4 1266.6,380.4 1268.6,380.4 1270.6,380.4 1272.6,380.4 1274.6,380.4 1276.6,380.4 1278.6,380.4 1280.6,380.4 1282.6,380.4 1284.6,380.4 1286.6,380.4 1288.6,380.4 1290.6,380.4 1292.6,380.4 1294.6,380.4 1296.6,380.4 1298.6,380.4 1300.6,380.4 1302.6,380.4 1304.6,380.4 1306.6,380.4 1308.6,380.4 1310.6,380.4 1312.6,380.4 1314.6,380.4 1316.6,380.4 1318.6,380.4 1320.6,380.4 1322.6,380.4 1324.6,380.4 1326.6,380.4 1328.6,380.4 1330.6,380.4 1332.6,380.4 1334.6,380.4 1336.6,380.4 1338.6,380.4 1340.6,380.4 1342.6,380.4 1344.6,380.4 1346.6,380.4 1348.6,380.4 1350.6,380.4 1352.6,380.4 1354.6,380.4 1356.6,380.4 1358.6,380.4 1360.6,380.4 1362.6,380.4 1364.6,380.4 1366.6,380.4 1368.6,380.4 1370.6,380.4 1372.6,380.4 1374.6,380.4 1376.6,380.4 1378.6,380.4 1380.6,380.4 1382.6,380.4 1384.6,380.4 1386.6,380.4 1388.6,380.2 1390.6,379.9 1392.6,379.7 1394.6,379.4 1396.6,379.1 1398.6,378.9 1400.6,378.6 1402.6,378.4 1404.6,377.8 1406.6,377.3 1408.6,376.7 1410.6,376.2 1412.6,375.7 1414.6,375.4 1416.6,375.1 1418.6,374.7 1420.6,374.4 1422.6,374.1 1424.6,373.8 1426.6,373.4 1428.6,373.1 1430.6,372.8 1432.6,372.5 1434.6,372.3 1436.6,372 1438.6,371.7 1440.6,371.4 1442.6,371.1 1444.6,370.8 1446.6,370.3 1448.6,369.9 1450.6,369.4 1452.6,369 1454.6,368.6 1456.6,368.1 1458.6,367.7 1460.6,367.3 1462.6,366.8 1464.6,366.4 1466.6,365.9 1468.6,365.4 1470.6,365 1472.6,364.5 1474.6,364.1 1476.6,363.6 1478.6,363.2 1480.6,362.9 1482.6,362.6 1484.6,362.3 1486.6,362 1488.6,361.7 1490.6,361.3 1492.6,361 1494.6,360.7 1496.6,360.3 1498.6,359.9 1500.6,359.4 1502.6,358.9 1504.6,358.5 1506.6,358 1508.6,357.5 1510.6,357.1 1512.6,356.7 1514.6,356.3 1516.6,355.9 1518.6,355.5 1520.6,355.1 1522.6,355.1 1524.6,355.1 1526.6,355.1 1528.6,355.1 1530.6,355.1 1532.6,355.1 1534.6,355.1 1536.6,355.1 1538.6,355.1 1540.6,355.1 1542.6,355.1 1544.6,355.1 1546.6,355.1 1548.6,355.1 1550.6,355.1 1552.6,355.1 1554.6,355.1 1556.6,355.1 1558.6,355.1 1560.6,355.1 1562.6,355.1 1564.6,355.1 1566.6,355.1 1568.6,355.1 1570.6,355.1 1572.6,355.1 1574.6,355.1 1576.6,355.1 1578.6,355.1 1580.6,355.1 1582.6,355.1 1584.6,355.1 1586.6,355.1 1588.6,355.1 1590.6,355.1 1592.6,355.1 1594.6,355.3 1596.6,355.4 1598.6,355.6 1600.6,355.7 1602.6,355.9 1604.6,356 1606.6,356.2 1608.6,356.3 1610.6,356.6 1612.6,356.9 1614.6,357.2 1616.6,357.6 1618.6,357.9 1620.6,358.2 1622.6,358.6 1624.6,358.9 1626.6,360.4 1628.6,360.5 1630.6,360.7 1632.6,360.8 1634.6,361 1636.6,361.5 1638.6,361.9 1640.6,362 1642.6,362.1 1644.6,362.2 1646.6,362.2 1648.6,362.3 1650.6,362.4 1652.6,362.5 1654.6,362.5 1656.6,362.6 1658.6,362.7 1660.6,362.7 1662.6,362.8 1664.6,362.9 1666.6,362.9 1668.6,363 1670.6,363.1 1672.6,363.2 1674.6,363.4 1676.6,363.6 1678.6,363.9 1680.6,364.1 1682.6,364.3 1684.6,364.6 1686.6,364.8 1688.6,365 1690.6,365.3 1692.6,365.5 1694.6,365.7 1696.6,366 1698.6,366.4 1700.6,366.9 1702.6,367.4 1704.6,367.8 1706.6,368.3 1708.6,368.7 1710.6,369.2 1712.6,369.7 1714.6,370.2 1716.6,370.7 1718.6,371.2 1720.6,371.7 1722.6,372.2 1724.6,372.7 1726.6,373.2 1728.6,373.7 1730.6,374 1732.6,374.3 1734.6,374.6 1736.6,374.9 1738.6,375.2 1740.6,375.7 1742.6,376.3 1744.6,376.9 1746.6,377.4 1748.6,378 1750.6,378.6 1752.6,379.2 1754.6,379.5 1756.6,379.8 1758.6,380.1 1760.6,380.4 1762.6,380.7 1764.6,380.9 1766.6,381.2 1768.6,381.5 1770.6,381.8 1772.6,382.1 1774.6,382.4 1776.6,382.7 1778.6,383.1 1780.6,383.6 1782.6,384 1784.6,384.5 1786.6,385 1788.6,385.4 1790.6,385.9 1792.6,386.3 1794.6,386.8 1796.6,387.2 1798.6,387.7 1800.6,388.2 1802.6,388.6 1804.6,389 1806.6,389.4 1808.6,389.8 1810.6,390.2 1812.6,390.6 1814.6,391 1816.6,391.4 1818.6,391.8 1820.6,392.2 1822.6,392.6 1824.6,393 1826.6,393.4 1828.6,393.8 1830.6,394.2 1832.6,394.5 1834.6,394.7 1836.6,395 1838.6,395.2 1840.6,395.5 1842.6,395.7 1844.6,396 1846.6,396.2 1848.6,396.5 1850.6,396.7 1852.6,397.1 1854.6,397.5 1856.6,397.9 1858.6,398.3 1860.6,398.7 1862.6,399.1 1864.6,399.5 1866.6,399.9 1868.6,400.3 1870.6,400.7 1872.6,401 1874.6,401.2 1876.6,401.4 1878.6,401.6 1880.6,401.8 1882.6,402 1884.6,402.2 1886.6,402.4 1888.6,402.6 1890.6,402.8 1892.6,403 1894.6,403.4 1896.6,403.8 1898.6,404.2 1900.6,404.5 1902.6,404.9 1904.6,405.3 1906.6,405.7 1908.6,406 1910.6,406.1 1912.6,406.2 1914.6,406.3 1916.6,406.5 1918.6,406.6 1920.6,406.7 1922.6,406.8 1924.6,407 1926.6,407.1 1928.6,407.2 1930.6,407.3 1932.6,407.5 1934.6,407.5 1936.6,407.6 1938.6,407.7 1940.6,407.7 1942.6,407.8 1944.6,407.9 1946.6,407.9 1948.6,408 1950.6,408.1 1952.6,408.1 1954.6,408.2 1956.6,408.3 1958.6,408.3 1960.6,408.4 1962.6,408.4 1964.6,408.5 1966.6,408.5 1968.6,408.6 1970.6,408.6 1972.6,408.7 1974.6,408.7 1976.6,408.8 1978.6,408.8 1980.6,408.9 1982.6,409 1984.6,409.4 1986.6,409.8 1988.6,410.2 1990.6,410.4 1992.6,410.6 1994.6,410.8 1996.6,410.3 1998.6,410.6 2000.6,410.9 2002.6,411.2 2004.6,411.5 2006.6,411.8 2008.6,412.1 2010.6,412.4 2012.6,412.7 2014.6,413 2016.6,413.2 2018.6,413.2 2020.6,413.3 2022.6,413.3 2024.6,413.3 2026.6,413.3 2028.6,413.3 2030.6,413.3 2032.6,413.3 2034.6,413.4 2036.6,413.4 2038.6,413.4 2040.6,413.4 2042.6,413.4 2044.6,413.4 2046.6,413.5 2048.6,413.5 2050.6,413.5 2052.6,413.6 2054.6,413.6 2056.6,413.6 2058.6,413.7 2060.6,413.7 2062.6,413.7 2064.6,413.8 2066.6,413.8 2068.6,413.9 2070.6,413.9 2072.6,413.9 2074.6,414.1 2076.6,414.2 2078.6,414.3 2080.6,414.4 2082.6,414.6 2084.6,414.7 2086.6,414.8 2088.6,415 2090.6,415.1 2092.6,415.2 2094.6,415.4 2096.6,415.5 2098.6,415.7 2100.6,415.8 2102.6,416 2104.6,416.1 2106.6,416.3 2108.6,416.4 2110.6,416.5 2112.6,416.5 2114.6,416.5 2116.6,416.5 2118.6,416.5 2120.6,416.5 2122.6,416.6 2124.6,416.6 2126.6,416.6 2128.6,416.6 2130.6,416.6 2132.6,416.6 2134.6,416.7 2136.6,416.7 2138.6,416.7 2140.6,416.7 2142.6,416.7 2144.6,416.7 2146.6,416.7 2148.6,416.7 2150.6,416.7 2152.6,416.6 2154.6,416.6 2156.6,416.6 2158.6,416.6 2160.6,416.5 2162.6,416.5 2164.6,416.5 2166.6,416.5 2168.6,416.3 2170.6,416.2 2172.6,416.1 2174.6,415.9 2176.6,415.8 2178.6,415.6 2180.6,415.5 2182.6,415.3 2184.6,415.1 2186.6,414.9 2188.6,414.7 2190.6,414.5 2192.6,414.3 2194.6,414.1 2196.6,413.9 2198.6,413.7 2200.6,413.4 2202.6,413.2 2204.6,413 2206.6,412.8 2208.6,412.6 2210.6,412.4 2212.6,412.1 2214.6,411.9 2216.6,411.7 2218.6,411.6 2220.6,411.6 2222.6,411.6 2224.6,411.5 2226.6,411.5 2228.6,411.5 2230.6,411.5 2232.6,411.4 2234.6,411.4" fill="none" stroke="#00ffff" stroke-width="4.4" stroke-linejoin="round"/>
<polyline points="202.6,285 204.6,285 206.6,285 208.6,285 210.6,285 212.6,285 214.6,285 216.6,285 218.6,285 220.6,285 222.6,285 224.6,285.2 226.6,285.7 228.6,286.2 230.6,286.7 232.6,287.2 234.6,287.8 236.6,288.3 238.6,288.8 240.6,289.3 242.6,289.8 244.6,289.9 246.6,289.7 248.6,289.5 250.6,289.4 252.6,289.2 254.6,289 256.6,288.8 258.6,288.7 260.6,288.5 262.6,288.3 264.6,288.1 266.6,287.9 268.6,287.6 270.6,287.3 272.6,286.9 274.6,286.6 276.6,286.3 278.6,285.9 280.6,285.6 282.6,285.3 284.6,284.9 286.6,284.6 288.6,284.3 290.6,283.9 292.6,283.6 294.6,283.3 296.6,283 298.6,282.6 300.6,282.3 302.6,282 304.6,281.7 306.6,281.3 308.6,281 310.6,280.7 312.6,280.3 314.6,280.2 316.6,280.1 318.6,280 320.6,279.9 322.6,279.8 324.6,279.7 326.6,279.6 328.6,279.5 330.6,279.4 332.6,279.3 334.6,279.4 336.6,279.6 338.6,279.7 340.6,279.9 342.6,280 344.6,280.2 346.6,280.3 348.6,280.5 350.6,281 352.6,281.6 354.6,282.1 356.6,282.7 358.6,283.3 360.6,283.8 362.6,284.4 364.6,284.9 366.6,285.4 368.6,285.9 370.6,286.5 372.6,287 374.6,287.5 376.6,288.1 378.6,288.6 380.6,289.1 382.6,289.6 384.6,290.2 386.6,290.7 388.6,291.2 390.6,291.8 392.6,292.3 394.6,292.9 396.6,293.5 398.6,294 400.6,294.6 402.6,295.1 404.6,295.7 406.6,296.3 408.6,296.8 410.6,297.5 412.6,298.3 414.6,299.1 416.6,299.8 418.6,300.6 420.6,301.4 422.6,302.2 424.6,303 426.6,303.7 428.6,304.6 430.6,305.4 432.6,306.3 434.6,307.1 436.6,308 438.6,308.8 440.6,309.7 442.6,310.6 444.6,311.6 446.6,312.6 448.6,313.6 450.6,314.6 452.6,315.6 454.6,316.6 456.6,317.4 458.6,317.8 460.6,318.2 462.6,318.6 464.6,319 466.6,319.4 468.6,319.7 470.6,319.9 472.6,320.1 474.6,320.4 476.6,320.6 478.6,320.8 480.6,321.1 482.6,321.2 484.6,321.3 486.6,321.4 488.6,321.5 490.6,321.5 492.6,321.6 494.6,321.7 496.6,321.8 498.6,321.9 500.6,321.9 502.6,322 504.6,322.1 506.6,322.2 508.6,322.3 510.6,322.3 512.6,322.4 514.6,322.5 516.6,322.5 518.6,322.6 520.6,322.6 522.6,322.7 524.6,322.7 526.6,322.8 528.6,322.8 530.6,322.9 532.6,323 534.6,323 536.6,323.1 538.6,323.1 540.6,323.2 542.6,323.2 544.6,323.2 546.6,323.1 548.6,323.1 550.6,323 552.6,323 554.6,323 556.6,323 558.6,323 560.6,323 562.6,323 564.6,323 566.6,323 568.6,323 570.6,323 572.6,323 574.6,323 576.6,323 578.6,323 580.6,323 582.6,323 584.6,323 586.6,323 588.6,323 590.6,323 592.6,323 594.6,323 596.6,322.9 598.6,322.9 600.6,322.8 602.6,322.8 604.6,322.8 606.6,322.7 608.6,322.7 610.6,322.7 612.6,322.6 614.6,322.6 616.6,322.5 618.6,322.5 620.6,322.5 622.6,322.4 624.6,322.4 626.6,322.4 628.6,322.3 630.6,322.3 632.6,322.2 634.6,322.2 636.6,322.1 638.6,322 640.6,322 642.6,321.9 644.6,321.8 646.6,321.8 648.6,321.7 650.6,321.7 652.6,321.6 654.6,321.5 656.6,321.5 658.6,321.4 660.6,321.3 662.6,321.3 664.6,321.2 666.6,321.2 668.6,321 670.6,320.8 672.6,320.6 674.6,320.4 676.6,320.2 678.6,320 680.6,319.8 682.6,319.6 684.6,319.4 686.6,319.2 688.6,319 690.6,318.8 692.6,318.6 694.6,318.4 696.6,318.2 698.6,318 700.6,317.8 702.6,317.7 704.6,317.5 706.6,317.3 708.6,317.1 710.6,317 712.6,316.8 714.6,316.6 716.6,316.4 718.6,316.3 720.6,316.1 722.6,315.9 724.6,315.7 726.6,315.6 728.6,315.4 730.6,315.2 732.6,315.1 734.6,314.8 736.6,314.6 738.6,314.3 740.6,314.1 742.6,313.9 744.6,313.6 746.6,313.4 748.6,313.1 750.6,312.9 752.6,312.6 754.6,312.4 756.6,312.2 758.6,311.9 760.6,311.7 762.6,311.4 764.6,311.2 766.6,310.9 768.6,310.7 770.6,310.5 772.6,308.2 774.6,305.9 776.6,303.5 778.6,301.5 780.6,299.8 782.6,298 784.6,296.3 786.6,294.5 788.6,293.7 790.6,292.9 792.6,292.1 794.6,291.3 796.6,290.5 798.6,289.7 800.6,288.9 802.6,288.1 804.6,287.6 806.6,287.4 808.6,287.2 810.6,287 812.6,286.8 814.6,286.6 816.6,286.4 818.6,286.2 820.6,286 822.6,285.8 824.6,285.6 826.6,285.4 828.6,285.2 830.6,285 832.6,284.8 834.6,284.6 836.6,284.4 838.6,284.2 840.6,284 842.6,283.8 844.6,283.6 846.6,283.4 848.6,283.2 850.6,283 852.6,282.8 854.6,282.6 856.6,282.4 858.6,282.2 860.6,281.9 862.6,280.4 864.6,278.9 866.6,277.4 868.6,275.9 870.6,274.4 872.6,272.9 874.6,271.4 876.6,270 878.6,268.5 880.6,267 882.6,265.6 884.6,264.1 886.6,262.6 888.6,261.2 890.6,259.7 892.6,259.1 894.6,258.8 896.6,258.4 898.6,258.1 900.6,257.8 902.6,257.5 904.6,257.1 906.6,256.8 908.6,256.5 910.6,256.2 912.6,255.9 914.6,255.5 916.6,255.2 918.6,254.9 920.6,254.6 922.6,254.2 924.6,253.9 926.6,253.6 928.6,253.4 930.6,253.2 932.6,252.9 934.6,252.7 936.6,252.5 938.6,252.3 940.6,252.1 942.6,251.8 944.6,251.6 946.6,251.4 948.6,251.2 950.6,250.9 952.6,250.7 954.6,250.5 956.6,250.3 958.6,250.1 960.6,249.8 962.6,249.6 964.6,249.4 966.6,249.2 968.6,249 970.6,248.9 972.6,248.7 974.6,248.6 976.6,248.5 978.6,248.3 980.6,248.2 982.6,248.1 984.6,247.9 986.6,247.8 988.6,247.7 990.6,247.5 992.6,247.4 994.6,247.3 996.6,247.1 998.6,247 1000.6,246.9 1002.6,246.3 1004.6,245.4 1006.6,244.6 1008.6,243.7 1010.6,242.9 1012.6,242 1014.6,241.1 1016.6,240.3 1018.6,239.3 1020.6,238.3 1022.6,237.3 1024.6,236.3 1026.6,235.3 1028.6,234.3 1030.6,233.3 1032.6,232.3 1034.6,231.7 1036.6,231.1 1038.6,230.6 1040.6,230 1042.6,229.5 1044.6,228.9 1046.6,228.4 1048.6,227.8 1050.6,227.3 1052.6,226.7 1054.6,226.2 1056.6,225.7 1058.6,225.1 1060.6,224.6 1062.6,224.1 1064.6,223.6 1066.6,223.1 1068.6,222.6 1070.6,222.1 1072.6,221.6 1074.6,221.1 1076.6,220.6 1078.6,220.1 1080.6,219.6 1082.6,219.1 1084.6,218.6 1086.6,217.9 1088.6,216.4 1090.6,213.5 1092.6,212.5 1094.6,212.1 1096.6,211.8 1098.6,211.8 1100.6,211.8 1102.6,211.9 1104.6,211.9 1106.6,211.9 1108.6,211.9 1110.6,211.9 1112.6,211.9 1114.6,211.9 1116.6,212 1118.6,212 1120.6,212 1122.6,212 1124.6,212 1126.6,212 1128.6,212 1130.6,212.1 1132.6,212.1 1134.6,212.1 1136.6,212.1 1138.6,212.1 1140.6,212.1 1142.6,212.1 1144.6,212.2 1146.6,212.2 1148.6,212.2 1150.6,212.2 1152.6,212.2 1154.6,212.2 1156.6,212.2 1158.6,212.3 1160.6,212.3 1162.6,213.5 1164.6,214.8 1166.6,218.1 1168.6,225.1 1170.6,232.1 1172.6,237.4 1174.6,242.4 1176.6,246.8 1178.6,250.8 1180.6,254.5 1182.6,257.5 1184.6,260.5 1186.6,263.5 1188.6,266.1 1190.6,268.6 1192.6,271.1 1194.6,273.6 1196.6,276 1198.6,278.3 1200.6,280.5 1202.6,282.8 1204.6,285 1206.6,286.9 1208.6,288.7 1210.6,290.5 1212.6,292.3 1214.6,294.1 1216.6,295.9 1218.6,297.7 1220.6,299.5 1222.6,301.3 1224.6,303.1 1226.6,304.9 1228.6,307.1 1230.6,309.9 1232.6,312.7 1234.6,315.3 1236.6,317.7 1238.6,320.1 1240.6,321.7 1242.6,323.1 1244.6,324.4 1246.6,325.8 1248.6,327 1250.6,328.1 1252.6,329.1 1254.6,330.2 1256.6,331.2 1258.6,331.6 1260.6,331.6 1262.6,331.6 1264.6,331.6 1266.6,331.6 1268.6,331.6 1270.6,331.6 1272.6,331.6 1274.6,331.6 1276.6,331.6 1278.6,331.6 1280.6,331.6 1282.6,331.6 1284.6,331.6 1286.6,331.6 1288.6,331.6 1290.6,331.6 1292.6,331.6 1294.6,331.6 1296.6,331.6 1298.6,331.6 1300.6,331.6 1302.6,331.6 1304.6,331.6 1306.6,331.6 1308.6,331.6 1310.6,331.6 1312.6,331.6 1314.6,331.6 1316.6,331.6 1318.6,331.6 1320.6,331.6 1322.6,331.6 1324.6,331.6 1326.6,331.6 1328.6,331.6 1330.6,331.6 1332.6,331.6 1334.6,331.6 1336.6,331.6 1338.6,331.6 1340.6,331.6 1342.6,331.6 1344.6,331.6 1346.6,331.6 1348.6,331.6 1350.6,331.6 1352.6,331.6 1354.6,331.6 1356.6,331.6 1358.6,331.6 1360.6,331.6 1362.6,331.6 1364.6,331.6 1366.6,331.6 1368.6,331.6 1370.6,331.6 1372.6,331.6 1374.6,331.6 1376.6,331.6 1378.6,331.6 1380.6,331.6 1382.6,331.6 1384.6,331.6 1386.6,331.6 1388.6,331.1 1390.6,330.6 1392.6,330.1 1394.6,329.6 1396.6,329.1 1398.6,328.6 1400.6,328 1402.6,327.5 1404.6,326.5 1406.6,325.4 1408.6,324.3 1410.6,323.2 1412.6,322.2 1414.6,321.6 1416.6,320.9 1418.6,320.3 1420.6,319.6 1422.6,319 1424.6,318.3 1426.6,317.6 1428.6,317 1430.6,316.5 1432.6,315.9 1434.6,315.3 1436.6,314.7 1438.6,314.2 1440.6,313.6 1442.6,313 1444.6,312.3 1446.6,311.4 1448.6,310.6 1450.6,309.7 1452.6,308.8 1454.6,307.9 1456.6,307.1 1458.6,306.2 1460.6,305.3 1462.6,304.4 1464.6,303.5 1466.6,302.6 1468.6,301.7 1470.6,300.8 1472.6,299.8 1474.6,298.9 1476.6,298 1478.6,297.2 1480.6,296.6 1482.6,296 1484.6,295.4 1486.6,294.7 1488.6,294.1 1490.6,293.5 1492.6,292.9 1494.6,292.2 1496.6,291.5 1498.6,290.6 1500.6,289.6 1502.6,288.7 1504.6,287.8 1506.6,286.8 1508.6,285.9 1510.6,285 1512.6,284.2 1514.6,283.4 1516.6,282.6 1518.6,281.8 1520.6,281 1522.6,280.9 1524.6,280.9 1526.6,280.9 1528.6,280.9 1530.6,280.9 1532.6,280.9 1534.6,280.9 1536.6,280.9 1538.6,280.9 1540.6,280.9 1542.6,280.9 1544.6,280.9 1546.6,280.9 1548.6,280.9 1550.6,280.9 1552.6,280.9 1554.6,280.9 1556.6,280.9 1558.6,280.9 1560.6,280.9 1562.6,280.9 1564.6,280.9 1566.6,280.9 1568.6,280.9 1570.6,280.9 1572.6,280.9 1574.6,280.9 1576.6,280.9 1578.6,280.9 1580.6,280.9 1582.6,280.9 1584.6,280.9 1586.6,280.9 1588.6,280.9 1590.6,280.9 1592.6,281.1 1594.6,281.4 1596.6,281.7 1598.6,282 1600.6,282.3 1602.6,282.6 1604.6,282.9 1606.6,283.2 1608.6,283.5 1610.6,284 1612.6,284.6 1614.6,285.3 1616.6,286 1618.6,286.6 1620.6,287.3 1622.6,287.9 1624.6,288.6 1626.6,291.5 1628.6,291.8 1630.6,292.1 1632.6,292.4 1634.6,292.8 1636.6,293.8 1638.6,294.7 1640.6,294.8 1642.6,295 1644.6,295.1 1646.6,295.3 1648.6,295.4 1650.6,295.6 1652.6,295.7 1654.6,295.9 1656.6,296 1658.6,296.2 1660.6,296.3 1662.6,296.4 1664.6,296.6 1666.6,296.7 1668.6,296.8 1670.6,297 1672.6,297.1 1674.6,297.6 1676.6,298.1 1678.6,298.5 1680.6,299 1682.6,299.5 1684.6,299.9 1686.6,300.4 1688.6,300.9 1690.6,301.3 1692.6,301.8 1694.6,302.3 1696.6,302.7 1698.6,303.7 1700.6,304.6 1702.6,305.5 1704.6,306.4 1706.6,307.4 1708.6,308.3 1710.6,309.2 1712.6,310.1 1714.6,311.1 1716.6,312.1 1718.6,313.1 1720.6,314.1 1722.6,315.1 1724.6,316.1 1726.6,317.1 1728.6,318.1 1730.6,318.8 1732.6,319.4 1734.6,320 1736.6,320.6 1738.6,321.2 1740.6,322.3 1742.6,323.4 1744.6,324.5 1746.6,325.7 1748.6,326.8 1750.6,328 1752.6,329.1 1754.6,329.8 1756.6,330.4 1758.6,330.9 1760.6,331.5 1762.6,332.1 1764.6,332.7 1766.6,333.3 1768.6,333.9 1770.6,334.4 1772.6,335 1774.6,335.6 1776.6,336.2 1778.6,337 1780.6,338 1782.6,338.9 1784.6,339.8 1786.6,340.7 1788.6,341.6 1790.6,342.5 1792.6,343.5 1794.6,344.4 1796.6,345.3 1798.6,346.2 1800.6,347.1 1802.6,348 1804.6,348.8 1806.6,349.6 1808.6,350.4 1810.6,351.2 1812.6,352 1814.6,352.8 1816.6,353.6 1818.6,354.4 1820.6,355.2 1822.6,356 1824.6,356.8 1826.6,357.6 1828.6,358.4 1830.6,359.2 1832.6,359.8 1834.6,360.3 1836.6,360.8 1838.6,361.3 1840.6,361.8 1842.6,362.3 1844.6,362.8 1846.6,363.3 1848.6,363.8 1850.6,364.3 1852.6,364.9 1854.6,365.7 1856.6,366.5 1858.6,367.3 1860.6,368.1 1862.6,368.9 1864.6,369.7 1866.6,370.5 1868.6,371.3 1870.6,372.1 1872.6,372.8 1874.6,373.2 1876.6,373.6 1878.6,374 1880.6,374.4 1882.6,374.8 1884.6,375.2 1886.6,375.6 1888.6,376 1890.6,376.4 1892.6,376.9 1894.6,377.6 1896.6,378.4 1898.6,379.1 1900.6,379.9 1902.6,380.6 1904.6,381.4 1906.6,382.1 1908.6,382.7 1910.6,383 1912.6,383.2 1914.6,383.5 1916.6,383.7 1918.6,384 1920.6,384.2 1922.6,384.5 1924.6,384.7 1926.6,385 1928.6,385.2 1930.6,385.5 1932.6,385.7 1934.6,385.8 1936.6,386 1938.6,386.1 1940.6,386.2 1942.6,386.4 1944.6,386.5 1946.6,386.6 1948.6,386.8 1950.6,386.9 1952.6,387 1954.6,387.2 1956.6,387.3 1958.6,387.4 1960.6,387.6 1962.6,387.7 1964.6,387.8 1966.6,387.9 1968.6,388 1970.6,388.1 1972.6,388.2 1974.6,388.3 1976.6,388.4 1978.6,388.5 1980.6,388.6 1982.6,388.7 1984.6,389.6 1986.6,390.4 1988.6,391.1 1990.6,391.5 1992.6,391.9 1994.6,392.3 1996.6,391.3 1998.6,391.9 2000.6,392.5 2002.6,393.1 2004.6,393.7 2006.6,394.3 2008.6,394.9 2010.6,395.5 2012.6,396.2 2014.6,396.8 2016.6,397.3 2018.6,397.3 2020.6,397.3 2022.6,397.3 2024.6,397.4 2026.6,397.4 2028.6,397.4 2030.6,397.5 2032.6,397.5 2034.6,397.5 2036.6,397.5 2038.6,397.6 2040.6,397.6 2042.6,397.6 2044.6,397.7 2046.6,397.7 2048.6,397.8 2050.6,397.9 2052.6,397.9 2054.6,398 2056.6,398.1 2058.6,398.2 2060.6,398.2 2062.6,398.3 2064.6,398.4 2066.6,398.4 2068.6,398.5 2070.6,398.6 2072.6,398.7 2074.6,398.9 2076.6,399.2 2078.6,399.4 2080.6,399.7 2082.6,400 2084.6,400.2 2086.6,400.5 2088.6,400.7 2090.6,401 2092.6,401.3 2094.6,401.6 2096.6,401.9 2098.6,402.2 2100.6,402.5 2102.6,402.8 2104.6,403.1 2106.6,403.4 2108.6,403.7 2110.6,403.7 2112.6,403.8 2114.6,403.8 2116.6,403.8 2118.6,403.9 2120.6,403.9 2122.6,403.9 2124.6,404 2126.6,404 2128.6,404 2130.6,404.1 2132.6,404.1 2134.6,404.1 2136.6,404.2 2138.6,404.2 2140.6,404.2 2142.6,404.3 2144.6,404.3 2146.6,404.2 2148.6,404.2 2150.6,404.1 2152.6,404.1 2154.6,404 2156.6,404 2158.6,403.9 2160.6,403.9 2162.6,403.8 2164.6,403.8 2166.6,403.7 2168.6,403.5 2170.6,403.2 2172.6,402.9 2174.6,402.6 2176.6,402.3 2178.6,402.1 2180.6,401.8 2182.6,401.4 2184.6,401 2186.6,400.6 2188.6,400.2 2190.6,399.8 2192.6,399.4 2194.6,399 2196.6,398.5 2198.6,398.1 2200.6,397.7 2202.6,397.3 2204.6,396.8 2206.6,396.4 2208.6,396 2210.6,395.5 2212.6,395.1 2214.6,394.7 2216.6,394.2 2218.6,394 2220.6,394 2222.6,393.9 2224.6,393.9 2226.6,393.8 2228.6,393.8 2230.6,393.7 2232.6,393.7 2234.6,393.6" fill="none" stroke="#ff00ff" stroke-width="4.4" stroke-linejoin="round"/>
<polyline points="202.6,372.6 204.1,366.1 205.6,367.6 207.1,366.9 208.6,360.7 210.1,360.5 211.6,360.2 213.1,354.7 214.6,362.8 216.1,361.3 217.6,357 219.1,357.8 220.6,359.3 222.1,356.4 223.6,355.9 225.1,352.2 226.6,358.5 228.1,357.5 229.6,358.2 231.1,352.2 232.6,360.6 234.1,355 235.6,352.2 237.1,358.3 238.6,351.4 240.1,347.7 241.6,351.4 243.1,346.3 244.6,356.9 246.1,353.1 247.6,350 249.1,353 250.6,342.3 252.1,346.4 253.6,338.3 255.1,342.7 256.6,341.3 258.1,349.5 259.6,350.6 261.1,344.1 262.6,347.1 264.1,343.6 265.6,345.3 267.1,340.9 268.6,337.5 270.1,337.5 271.6,345.3 273.1,352.2 274.6,347.6 276.1,346.5 277.6,354.3 279.1,349.6 280.6,349.5 282.1,350.3 283.6,349.4 285.1,349.2 286.6,346 288.1,348.3 289.6,343.1 291.1,346.9 292.6,342.2 294.1,337.6 295.6,345 297.1,353.4 298.6,350.1 300.1,348.2 301.6,346.7 303.1,346.6 304.6,348.3 306.1,345.1 307.6,353.8 309.1,349.9 310.6,352.6 312.1,358.1 313.6,358.3 315.1,352.1 316.6,352.7 318.1,352.8 319.6,348.9 321.1,346.7 322.6,357 324.1,360.7 325.6,360.9 327.1,357.1 328.6,359.6 330.1,358.7 331.6,359.9 333.1,364.8 334.6,364.3 336.1,360.6 337.6,359.1 339.1,358.4 340.6,355.2 342.1,353.8 343.6,351.8 345.1,354.6 346.6,362.5 348.1,359.2 349.6,356.5 351.1,356.4 352.6,346.8 354.1,342.1 355.6,336.7 357.1,326.3 358.6,340.3 360.1,351.2 361.6,367.8 363.1,363.9 364.6,368.6 366.1,362.1 367.6,359.9 369.1,353.4 370.6,347.4 372.1,349.3 373.6,353.7 375.1,367.7 376.6,355.1 378.1,340.7 379.6,346.5 381.1,361.2 382.6,360.9 384.1,361.8 385.6,368.5 387.1,363.1 388.6,354.2 390.1,348.6 391.6,346.7 393.1,346.1 394.6,347.8 396.1,345.6 397.6,342.7 399.1,343.3 400.6,341.5 402.1,342.2 403.6,336.8 405.1,333.1 406.6,338.1 408.1,337.5 409.6,339.2 411.1,349.8 412.6,349.3 414.1,355.5 415.6,355 417.1,355.8 418.6,357.1 420.1,353.3 421.6,348 423.1,340.4 424.6,349.5 426.1,357.7 427.6,373.8 429.1,372.4 430.6,381.2 432.1,387.9 433.6,392.2 435.1,375 436.6,346.9 438.1,358.6 439.6,364.7 441.1,368.9 442.6,363.7 444.1,366.2 445.6,369.1 447.1,357.5 448.6,360.5 450.1,358.6 451.6,349.5 453.1,354.9 454.6,351.9 456.1,354.5 457.6,356.4 459.1,361.3 460.6,361.9 462.1,366.1 463.6,361.6 465.1,365.1 466.6,369.5 468.1,369.4 469.6,364.8 471.1,369.2 472.6,371 474.1,372.4 475.6,373 477.1,373.9 478.6,374 480.1,372.4 481.6,371.5 483.1,369.9 484.6,369.1 486.1,368.2 487.6,371.2 489.1,375.2 490.6,378.8 492.1,381.8 493.6,385.2 495.1,387.9 496.6,392.4 498.1,395.3 499.6,398.1 501.1,392.9 502.6,385.2 504.1,377.8 505.6,376.5 507.1,375.7 508.6,374.1 510.1,373.1 511.6,373.9 513.1,373.7 514.6,373.5 516.1,374 517.6,373.2 519.1,373.4 520.6,373.9 522.1,374.2 523.6,373.7 525.1,374.4 526.6,373.8 528.1,374.3 529.6,374.2 531.1,373.9 532.6,374.7 534.1,375.1 535.6,374.8 537.1,375 538.6,375.7 540.1,374.9 541.6,375 543.1,375.4 544.6,375.3 546.1,376.3 547.6,376.1 549.1,375.8 550.6,375.9 552.1,377.3 553.6,376.2 555.1,376.2 556.6,376.7 558.1,376.9 559.6,376.9 561.1,376.6 562.6,376.6 564.1,377.3 565.6,377.1 567.1,376.6 568.6,377.7 570.1,377.6 571.6,377.3 573.1,377.4 574.6,377.6 576.1,377.3 577.6,377.2 579.1,377.8 580.6,377.3 582.1,378 583.6,377.4 585.1,377.9 586.6,377.9 588.1,378.5 589.6,377.5 591.1,377.4 592.6,377.6 594.1,377.4 595.6,377.6 597.1,377.9 598.6,378 600.1,378.3 601.6,377.4 603.1,378.6 604.6,378.3 606.1,377.5 607.6,376.7 609.1,377.5 610.6,377.5 612.1,376.7 613.6,377.5 615.1,377.3 616.6,377.1 618.1,377.6 619.6,377.7 621.1,377.1 622.6,377.4 624.1,377 625.6,376.9 627.1,377.2 628.6,377.4 630.1,376.9 631.6,376.3 633.1,377.3 634.6,376.5 636.1,376.9 637.6,377.1 639.1,376.1 640.6,375.3 642.1,374.8 643.6,375.4 645.1,374.6 646.6,374.4 648.1,374.1 649.6,373.4 651.1,372.9 652.6,372.7 654.1,372 655.6,372.7 657.1,373.3 658.6,373.3 660.1,373.6 661.6,373.5 663.1,373.6 664.6,373.6 666.1,372.8 667.6,372.7 669.1,372 670.6,372.7 672.1,372.1 673.6,372 675.1,372.2 676.6,371.8 678.1,371.1 679.6,371.2 681.1,370.2 682.6,370.9 684.1,370.8 685.6,370.2 687.1,371.3 688.6,370.7 690.1,371.2 691.6,370.8 693.1,371.4 694.6,371.5 696.1,370.8 697.6,370.8 699.1,371.5 700.6,372.2 702.1,372.1 703.6,372.3 705.1,373 706.6,372.1 708.1,373.2 709.6,373.2 711.1,374.1 712.6,374 714.1,374.2 715.6,374.8 717.1,374.7 718.6,375 720.1,374.5 721.6,374.4 723.1,374 724.6,374.4 726.1,373.8 727.6,373.7 729.1,373.5 730.6,372.8 732.1,373 733.6,372.7 735.1,372.4 736.6,371.5 738.1,370.7 739.6,370.4 741.1,370.1 742.6,368.3 744.1,367.9 745.6,366.8 747.1,366.5 748.6,365.6 750.1,365 751.6,362.9 753.1,362.8 754.6,361.9 756.1,361.5 757.6,361.2 759.1,361 760.6,361.4 762.1,361.6 763.6,359.8 765.1,360.6 766.6,360.6 768.1,360.1 769.6,359.3 771.1,358.3 772.6,357.7 774.1,357.6 775.6,357.1 777.1,356.4 778.6,356.2 780.1,356.6 781.6,356.6 783.1,356.9 784.6,356.9 786.1,356.7 787.6,357.1 789.1,356.7 790.6,357.4 792.1,357.7 793.6,356.9 795.1,357.6 796.6,357.1 798.1,358 799.6,358 801.1,357.8 802.6,358.3 804.1,357.9 805.6,358 807.1,358.1 808.6,358.4 810.1,358.4 811.6,358.7 813.1,358.6 814.6,359.2 816.1,359.4 817.6,359 819.1,358.8 820.6,359.4 822.1,359.3 823.6,358.6 825.1,357.9 826.6,358.2 828.1,358.4 829.6,356.6 831.1,356.7 832.6,355.7 834.1,354.8 835.6,354.6 837.1,353.3 838.6,353.1 840.1,352.7 841.6,351.6 843.1,350.6 844.6,349.5 846.1,349 847.6,348.2 849.1,349 850.6,347.9 852.1,347.1 853.6,346.6 855.1,346.2 856.6,346 858.1,345.3 859.6,345.8 861.1,344.5 862.6,344.1 864.1,344 865.6,344 867.1,343.5 868.6,342.4 870.1,342.3 871.6,342.1 873.1,342 874.6,341.7 876.1,341.1 877.6,340.8 879.1,341.3 880.6,341 882.1,342.2 883.6,342 885.1,341.9 886.6,341.9 888.1,341.5 889.6,341.2 891.1,341.2 892.6,340 894.1,339.5 895.6,339.9 897.1,339.4 898.6,339.1 900.1,338.9 901.6,338.4 903.1,338.7 904.6,338.2 906.1,338.5 907.6,338.3 909.1,338.2 910.6,338.8 912.1,338.8 913.6,338 915.1,338.3 916.6,338.8 918.1,339.2 919.6,338.6 921.1,338.8 922.6,338.4 924.1,340 925.6,339.4 927.1,339.7 928.6,339.8 930.1,340 931.6,340.1 933.1,339.9 934.6,340.4 936.1,340.3 937.6,340.9 939.1,340.5 940.6,340.9 942.1,341.7 943.6,342.2 945.1,342.2 946.6,342.2 948.1,342.7 949.6,343 951.1,344.1 952.6,344.1 954.1,344.6 955.6,344.6 957.1,344 958.6,344.1 960.1,343.9 961.6,343 963.1,342.4 964.6,342.3 966.1,341.4 967.6,341.2 969.1,339.8 970.6,338.7 972.1,338.4 973.6,337.4 975.1,337 976.6,335.3 978.1,334.5 979.6,333.1 981.1,332.2 982.6,332.8 984.1,334.2 985.6,334.3 987.1,335.8 988.6,336.5 990.1,336.4 991.6,336.3 993.1,335.1 994.6,334.6 996.1,333.4 997.6,333 999.1,331.5 1000.6,331.3 1002.1,330.2 1003.6,329.5 1005.1,329 1006.6,328 1008.1,327.2 1009.6,326.7 1011.1,325.9 1012.6,324.4 1014.1,324.3 1015.6,324.1 1017.1,324.1 1018.6,325 1020.1,324.9 1021.6,326.4 1023.1,326.3 1024.6,326.9 1026.1,327.8 1027.6,327.8 1029.1,328.4 1030.6,328.2 1032.1,328.7 1033.6,328.8 1035.1,329.6 1036.6,330.4 1038.1,330.5 1039.6,331.1 1041.1,330.2 1042.6,329.7 1044.1,329.3 1045.6,329.1 1047.1,328.5 1048.6,327.8 1050.1,327.5 1051.6,326.7 1053.1,326.2 1054.6,326.2 1056.1,324.9 1057.6,324 1059.1,323.4 1060.6,321.7 1062.1,320.8 1063.6,319.2 1065.1,319 1066.6,316.4 1068.1,315.7 1069.6,314.5 1071.1,313.2 1072.6,310.5 1074.1,308 1075.6,305.3 1077.1,303.6 1078.6,301.3 1080.1,298.8 1081.6,297.2 1083.1,296.1 1084.6,295.3 1086.1,293.8 1087.6,291.8 1089.1,289.7 1090.6,287.2 1092.1,285.9 1093.6,283.6 1095.1,282 1096.6,280.2 1098.1,277.7 1099.6,275.5 1101.1,274.1 1102.6,271.8 1104.1,269.4 1105.6,266.5 1107.1,265.4 1108.6,263.6 1110.1,261.6 1111.6,258.9 1113.1,256.8 1114.6,254.8 1116.1,253.2 1117.6,251.1 1119.1,250.2 1120.6,248.7 1122.1,247.9 1123.6,246 1125.1,245.4 1126.6,244.6 1128.1,244.5 1129.6,244.5 1131.1,244.4 1132.6,243.2 1134.1,243.8 1135.6,244.2 1137.1,244.8 1138.6,246.2 1140.1,246.7 1141.6,247.9 1143.1,248.1 1144.6,248.8 1146.1,250.3 1147.6,251.4 1149.1,253.1 1150.6,256.3 1152.1,259 1153.6,261.3 1155.1,263.9 1156.6,266.8 1158.1,267.9 1159.6,270.6 1161.1,272.3 1162.6,275.6 1164.1,278.6 1165.6,280.7 1167.1,283.8 1168.6,287.1 1170.1,289.4 1171.6,291.8 1173.1,294.6 1174.6,297.1 1176.1,300.9 1177.6,303.1 1179.1,305.7 1180.6,307.5 1182.1,308.9 1183.6,310.8 1185.1,313.1 1186.6,314.8 1188.1,316.7 1189.6,317.9 1191.1,320.7 1192.6,320.8 1194.1,320.8 1195.6,323.1 1197.1,326.2 1198.6,329.4 1200.1,331.3 1201.6,332.9 1203.1,335.8 1204.6,336.8 1206.1,338.3 1207.6,339.7 1209.1,341.4 1210.6,343.5 1212.1,344 1213.6,344.9 1215.1,346 1216.6,347.8 1218.1,348.1 1219.6,349.5 1221.1,350.4 1222.6,351.3 1224.1,351.7 1225.6,353.1 1227.1,354.3 1228.6,354.6 1230.1,355.2 1231.6,355.9 1233.1,357.3 1234.6,358 1236.1,358.9 1237.6,359.7 1239.1,359.8 1240.6,361.3 1242.1,361.7 1243.6,362.3 1245.1,363.1 1246.6,364 1248.1,364.4 1249.6,364.7 1251.1,366.1 1252.6,366.2 1254.1,366.7 1255.6,367.1 1257.1,368.3 1258.6,368.8 1260.1,369.8 1261.6,371 1263.1,371.8 1264.6,373 1266.1,373.6 1267.6,374.2 1269.1,375.1 1270.6,375.8 1272.1,377.1 1273.6,377.6 1275.1,377.8 1276.6,378.6 1278.1,378.7 1279.6,378.9 1281.1,378.9 1282.6,379.9 1284.1,380.2 1285.6,380.5 1287.1,380.7 1288.6,381 1290.1,381.3 1291.6,381.5 1293.1,381.5 1294.6,381.5 1296.1,381.5 1297.6,381.8 1299.1,381.8 1300.6,381.5 1302.1,382.1 1303.6,382.2 1305.1,382.3 1306.6,382 1308.1,382 1309.6,381.7 1311.1,382.5 1312.6,381.5 1314.1,382.2 1315.6,382.3 1317.1,382.7 1318.6,382.5 1320.1,382.1 1321.6,381.8 1323.1,382 1324.6,382.2 1326.1,382.1 1327.6,382 1329.1,381.7 1330.6,381.8 1332.1,382.1 1333.6,381.3 1335.1,381.7 1336.6,382.1 1338.1,381.7 1339.6,381.2 1341.1,381.6 1342.6,381 1344.1,381.2 1345.6,381.6 1347.1,381.7 1348.6,380.3 1350.1,381.1 1351.6,381.5 1353.1,380.5 1354.6,380.7 1356.1,381.1 1357.6,380.3 1359.1,380.5 1360.6,380.3 1362.1,379.6 1363.6,380.3 1365.1,380 1366.6,380.3 1368.1,380.7 1369.6,380.1 1371.1,379.6 1372.6,379.5 1374.1,379 1375.6,379 1377.1,377.7 1378.6,377.4 1380.1,376.8 1381.6,377.3 1383.1,376.7 1384.6,376.1 1386.1,375.9 1387.6,375.7 1389.1,375.3 1390.6,375.3 1392.1,375 1393.6,375.4 1395.1,374.7 1396.6,374.1 1398.1,373.9 1399.6,374.3 1401.1,373.8 1402.6,373.5 1404.1,373.4 1405.6,373.5 1407.1,372.2 1408.6,372.2 1410.1,371.5 1411.6,372 1413.1,371.4 1414.6,371 1416.1,370.6 1417.6,370.8 1419.1,370.2 1420.6,369.7 1422.1,370 1423.6,368.9 1425.1,368.5 1426.6,369.5 1428.1,368.2 1429.6,367.8 1431.1,367.4 1432.6,367.3 1434.1,367.3 1435.6,367 1437.1,366.6 1438.6,366 1440.1,365.2 1441.6,365.5 1443.1,365.6 1444.6,365.2 1446.1,364.4 1447.6,364.5 1449.1,363.7 1450.6,363.5 1452.1,362.8 1453.6,362.8 1455.1,362.7 1456.6,362.3 1458.1,362.3 1459.6,362.4 1461.1,361.9 1462.6,361 1464.1,360.5 1465.6,360.2 1467.1,359.8 1468.6,359.9 1470.1,359.7 1471.6,359.3 1473.1,359 1474.6,358.7 1476.1,358.3 1477.6,357.7 1479.1,358.3 1480.6,357.8 1482.1,356.8 1483.6,356.4 1485.1,356.1 1486.6,356 1488.1,356 1489.6,355.6 1491.1,355.2 1492.6,354.8 1494.1,354.5 1495.6,354 1497.1,353.5 1498.6,352.9 1500.1,352 1501.6,352.3 1503.1,352.7 1504.6,351.6 1506.1,351.3 1507.6,351.6 1509.1,351.1 1510.6,350.6 1512.1,351.1 1513.6,350.5 1515.1,350.3 1516.6,349.6 1518.1,349.7 1519.6,349.4 1521.1,349.3 1522.6,349.1 1524.1,349 1525.6,348.7 1527.1,348.9 1528.6,348.2 1530.1,348.9 1531.6,348.9 1533.1,348.5 1534.6,348.4 1536.1,348.8 1537.6,348.6 1539.1,349.3 1540.6,349.4 1542.1,349.2 1543.6,349.7 1545.1,350.2 1546.6,350.4 1548.1,350.5 1549.6,350.3 1551.1,350.4 1552.6,350.5 1554.1,351.1 1555.6,351.8 1557.1,351.7 1558.6,351.9 1560.1,352 1561.6,351.1 1563.1,351.8 1564.6,351.9 1566.1,352.6 1567.6,353 1569.1,352.3 1570.6,352.5 1572.1,352.7 1573.6,352.3 1575.1,352.3 1576.6,352.3 1578.1,352.8 1579.6,352.2 1581.1,352.9 1582.6,352.5 1584.1,352.8 1585.6,353.1 1587.1,352.5 1588.6,352.6 1590.1,353.2 1591.6,352.8 1593.1,353.1 1594.6,353.5 1596.1,353.7 1597.6,353.4 1599.1,353.8 1600.6,354.3 1602.1,354.7 1603.6,353.7 1605.1,355 1606.6,355 1608.1,354.4 1609.6,354.4 1611.1,355.2 1612.6,355 1614.1,355.4 1615.6,355.8 1617.1,355.5 1618.6,355.8 1620.1,356 1621.6,356.2 1623.1,356.5 1624.6,356.5 1626.1,356.1 1627.6,355.9 1629.1,356.9 1630.6,356.3 1632.1,356.2 1633.6,355.7 1635.1,356.5 1636.6,356.2 1638.1,356.6 1639.6,356.5 1641.1,357.1 1642.6,357.7 1644.1,357.5 1645.6,358 1647.1,358.7 1648.6,358.6 1650.1,359 1651.6,359.5 1653.1,359.5 1654.6,360.5 1656.1,360.2 1657.6,361 1659.1,361.3 1660.6,360.8 1662.1,361.5 1663.6,361.5 1665.1,361.5 1666.6,362 1668.1,362.1 1669.6,362.4 1671.1,362.6 1672.6,361.9 1674.1,362.2 1675.6,362.5 1677.1,362.8 1678.6,361.6 1680.1,362.9 1681.6,362.5 1683.1,363.1 1684.6,362.5 1686.1,362.3 1687.6,362.7 1689.1,363.1 1690.6,362.8 1692.1,362 1693.6,363.1 1695.1,362.3 1696.6,362.6 1698.1,362.7 1699.6,362.6 1701.1,363 1702.6,363.2 1704.1,363.5 1705.6,363.9 1707.1,364 1708.6,363.7 1710.1,364.3 1711.6,364.9 1713.1,365.1 1714.6,365 1716.1,365.3 1717.6,365.6 1719.1,366 1720.6,366.3 1722.1,365.9 1723.6,366.1 1725.1,367 1726.6,367.2 1728.1,367.4 1729.6,366.3 1731.1,367.3 1732.6,366.5 1734.1,368.1 1735.6,368.1 1737.1,368.3 1738.6,368.5 1740.1,369.4 1741.6,369.3 1743.1,370.3 1744.6,370.5 1746.1,370.9 1747.6,371.5 1749.1,371.8 1750.6,371.8 1752.1,372.9 1753.6,373.4 1755.1,373.6 1756.6,374.3 1758.1,374.6 1759.6,373.9 1761.1,374.4 1762.6,374.4 1764.1,374.4 1765.6,374.9 1767.1,374.6 1768.6,374.8 1770.1,375.4 1771.6,375.8 1773.1,376.2 1774.6,377.2 1776.1,376.6 1777.6,377.3 1779.1,377.2 1780.6,378.1 1782.1,378.7 1783.6,379.2 1785.1,378.9 1786.6,379.4 1788.1,380.3 1789.6,380.1 1791.1,380.8 1792.6,380.4 1794.1,381.5 1795.6,381.7 1797.1,381.8 1798.6,381.7 1800.1,382.2 1801.6,382.7 1803.1,383 1804.6,383.2 1806.1,383.5 1807.6,383.9 1809.1,384.6 1810.6,383.8 1812.1,384.3 1813.6,384.5 1815.1,385.1 1816.6,385.1 1818.1,386.2 1819.6,386.3 1821.1,386.5 1822.6,386.7 1824.1,387.3 1825.6,387.7 1827.1,388.1 1828.6,388 1830.1,388.8 1831.6,388.4 1833.1,389.7 1834.6,388.5 1836.1,389.7 1837.6,389.8 1839.1,390.9 1840.6,390.4 1842.1,391.9 1843.6,391 1845.1,392.5 1846.6,392.2 1848.1,392.3 1849.6,392.8 1851.1,393.7 1852.6,393.5 1854.1,392.7 1855.6,394.2 1857.1,394.1 1858.6,393.7 1860.1,394.8 1861.6,394.4 1863.1,395.2 1864.6,395.5 1866.1,395.5 1867.6,396.2 1869.1,395.9 1870.6,396.6 1872.1,396.6 1873.6,397 1875.1,398 1876.6,397.6 1878.1,397.4 1879.6,398 1881.1,398 1882.6,398.6 1884.1,398.9 1885.6,399.1 1887.1,399.3 1888.6,399.4 1890.1,400 1891.6,400.4 1893.1,400.1 1894.6,400.5 1896.1,400.8 1897.6,401.5 1899.1,401.7 1900.6,401.3 1902.1,401.8 1903.6,401.4 1905.1,401.7 1906.6,402.1 1908.1,402.5 1909.6,402.7 1911.1,402.4 1912.6,402.1 1914.1,402.9 1915.6,402.8 1917.1,403.1 1918.6,403.1 1920.1,403.5 1921.6,403.8 1923.1,404.3 1924.6,404.2 1926.1,405.1 1927.6,405 1929.1,405.6 1930.6,406.5 1932.1,406.1 1933.6,405.7 1935.1,406.8 1936.6,406.7 1938.1,406.9 1939.6,406.7 1941.1,406.9 1942.6,406.9 1944.1,406.8 1945.6,407.8 1947.1,407.2 1948.6,407.3 1950.1,407.5 1951.6,408.4 1953.1,408.2 1954.6,407.8 1956.1,407.9 1957.6,408.2 1959.1,408.4 1960.6,407.5 1962.1,408.5 1963.6,408.1 1965.1,408 1966.6,408.1 1968.1,408.6 1969.6,409 1971.1,408.5 1972.6,408.7 1974.1,408.2 1975.6,408.7 1977.1,408.9 1978.6,408.2 1980.1,408.5 1981.6,408.9 1983.1,408 1984.6,408.6 1986.1,409 1987.6,408.2 1989.1,408.8 1990.6,409 1992.1,409.3 1993.6,408.6 1995.1,409.5 1996.6,409.3 1998.1,409.7 1999.6,409.7 2001.1,409.5 2002.6,409.6 2004.1,408.9 2005.6,409.1 2007.1,409.3 2008.6,409.5 2010.1,410 2011.6,409.2 2013.1,409.9 2014.6,409.7 2016.1,409.8 2017.6,411 2019.1,410.7 2020.6,411.3 2022.1,411.3 2023.6,410.7 2025.1,410.6 2026.6,412.1 2028.1,411.4 2029.6,411.3 2031.1,412.1 2032.6,412 2034.1,411.9 2035.6,412.1 2037.1,412.5 2038.6,412.6 2040.1,413 2041.6,412.8 2043.1,413.1 2044.6,413.7 2046.1,413.8 2047.6,414.3 2049.1,414.1 2050.6,414.4 2052.1,414.3 2053.6,415.5 2055.1,414.7 2056.6,415.5 2058.1,415.4 2059.6,416.1 2061.1,416.5 2062.6,415.9 2064.1,416.6 2065.6,416.3 2067.1,417.7 2068.6,417.3 2070.1,417.1 2071.6,417.7 2073.1,418.7 2074.6,419.1 2076.1,419.3 2077.6,418.8 2079.1,419.4 2080.6,420.3 2082.1,419.7 2083.6,420.2 2085.1,420.2 2086.6,420.4 2088.1,421.6 2089.6,421.6 2091.1,421.9 2092.6,422.2 2094.1,422.6 2095.6,422.5 2097.1,421.3 2098.6,420.5 2100.1,419.6 2101.6,419.6 2103.1,418.4 2104.6,417.3 2106.1,417.2 2107.6,416.7 2109.1,416.5 2110.6,416.1 2112.1,414.7 2113.6,411.7 2115.1,407 2116.6,414.5 2118.1,408.1 2119.6,397.6 2121.1,389.7 2122.6,392.9 2124.1,398.6 2125.6,401.2 2127.1,402.1 2128.6,402.7 2130.1,404.1 2131.6,402 2133.1,400.4 2134.6,404.6 2136.1,404.3 2137.6,408.3 2139.1,410.5 2140.6,410.9 2142.1,410.4 2143.6,413.6 2145.1,412.6 2146.6,413.2 2148.1,414.5 2149.6,415.9 2151.1,416 2152.6,415.2 2154.1,412.9 2155.6,411.9 2157.1,409.9 2158.6,409.9 2160.1,409.9 2161.6,408.6 2163.1,408.6 2164.6,407.1 2166.1,407.3 2167.6,408.7 2169.1,409.3 2170.6,410.8 2172.1,411.3 2173.6,413.7 2175.1,414.4 2176.6,416.6 2178.1,416.7 2179.6,417 2181.1,417 2182.6,415.4 2184.1,417.3 2185.6,420.2 2187.1,418.3 2188.6,416.9 2190.1,418 2191.6,418.3 2193.1,419.5 2194.6,420.1 2196.1,419.8 2197.6,418.3 2199.1,417.8 2200.6,418.2 2202.1,417.5 2203.6,415.8 2205.1,418.1 2206.6,416.8 2208.1,417 2209.6,415.2 2211.1,416.9 2212.6,414.7 2214.1,414.4 2215.6,412.6 2217.1,412.8 2218.6,412 2220.1,412 2221.6,413.6 2223.1,414.5 2224.6,415.9 2226.1,415.2 2227.6,415.3 2229.1,416.6 2230.6,415.9 2232.1,414.4 2233.6,412" fill="none" stroke="#ff0000" stroke-width="1.1" stroke-linejoin="round"/>
<polyline points="202.4,351.4 204,341.3 205,359.4 206,343.3 208.1,339.3 209.1,357.4 211.1,341.3 212.5,338.3 214.1,361.5 215.7,370.5 216.5,329.2 219.1,327.2 221.7,331.3 222.5,359.4 225.2,361.5 228.2,358.4 230.2,361.5 233.2,356.4 235.2,357.5 237.2,353.4 240.3,360.5 242.3,365.6 244.3,361.7 246.3,363.5 248.3,364.6 250.3,364.7 252.3,361.5 254.4,361.2 256.4,363 258.4,360.9 260.4,359.4 262.4,357.5 264.4,361.5 266.4,369.3 268.5,370.5 270.5,372.1 272.5,376.6 274.5,376.6 276.5,372.6 278.5,372.7 280.5,373.5 282.5,373.5 284.6,376 286.6,375.6 288.6,379.1 290.6,380.6 292.6,384.8 294.6,384.6 295.4,366.9 296.2,382.5 297,367.6 297.8,385.1 298.7,358.3 299.5,385 300.3,358.9 301.1,382 301.9,367.3 302.7,387 303.5,368.6 304.3,381.3 305.1,362.5 305.9,384.9 306.7,362.3 307.5,383.3 308.3,367.3 309.1,393.5 309.9,364 310.7,382 311.5,366.1 312.3,381.9 313.1,370.6 314,389 314.8,370.2 315.6,383.9 316.4,370.8 317.2,382.5 317.8,384.6 319.5,380 321.3,381 323.1,380.8 324.8,376.6 326.8,381 328.9,375.2 330.9,378.6 332.9,383.2 334.9,376 336.9,378.9 338.9,386 340.9,384.6 342.7,386.1 344.5,392.6 346.2,384.2 348,389.6 349.7,390.2 351.5,385.5 353.3,387 355,384.6 357,390.3 359,381.6 360.5,371.5 361.1,242.7 362.3,417.8 364.1,393.7 365.8,387.3 367.6,387.6 369.4,387.9 371.1,385.6 373.1,382.8 375.2,379.6 377.2,373.5 379.2,382.3 381.2,389.6 383.2,388.1 385.2,383.6 388.4,409.8 389.2,239.7 390.5,397.7 392.3,401.2 394.1,397.1 395.9,394.4 397.7,391.2 399.5,392.5 401.3,395.7 403.3,393.1 405.4,396.5 407.4,398.7 409.4,391.1 411.4,397.7 413.4,397.4 415.4,393.4 417.4,395.7 419.4,362.7 420.2,417.8 420.9,365.9 421.6,424.3 422.3,368.9 423,417.1 423.7,370 424.4,436.5 425.1,365.1 425.5,425.9 426.1,144 426.9,401.7 428.5,325.2 429.9,391.7 431.5,317.2 433.1,411.8 433.5,144 433.9,429.9 435.6,361.5 437.6,417.8 439.6,272.9 440.8,411.8 441.6,144 442.4,254.8 443.6,415.8 444.8,333.3 446.6,387.6 449.6,379.6 452.7,411.8 454.1,317.2 454.9,144 455.7,416.8 457.3,327.2 458.7,387.6 461.7,383.6 463.7,381 465.8,388.6 467.8,380.1 469.8,380.6 472,375 474.2,371.5 475.4,324.2 476.6,381.6 477.8,391.7 483.9,400.7 490.9,401.7 498,398.7 502,389.6 505.2,381.6 506,357.4 507,379.6 508,381.6 514.1,377.6 520.1,371.5 526.2,371.1 532.2,371.5 540.2,374.5 549.1,383.6 550.3,383.6 567.3,390 608.2,395.7 662.7,399.5 730.9,401.4 776.4,397.3 821.8,396.8 869.5,394.1 903.6,393.4 937.7,394.5 983.2,392.7 1001.4,393.4 1017.3,390.9 1026.4,395 1058.2,390.9 1071.8,386.6 1080,380.5 1085.5,377.5 1096.8,370 1100.5,368.4 1114.1,368.4 1125.5,367.3 1161.8,366.6 1177.7,380.9 1191.4,391.1 1195.9,392.7 1199.3,396.8 1209.5,398.4 1220.9,398 1239.1,395 1248.2,396.8 1268.6,403.6 1284.5,406.4 1307.3,408.2 1375.5,408.6 1511.8,408.2 1620,405.8 1634.5,404.3 1680.4,403 1738.8,400.4 1801.2,398.8 1841.5,397.3 1871.7,396.3 1897.9,393.3 1922.1,392.7 1942.2,390.3 1962.3,388.7 1980,387.2 1982.5,386.7 2004.2,378.5 2020.3,369.5 2038.4,351.4 2050.5,341.3 2062.5,324.2 2065.5,293 2068.6,269.8 2071.6,272.9 2076.6,262.8 2078.6,263.6 2080.6,259.9 2082.7,255.4 2084.7,257.8 2086.7,264.3 2088.7,265.8 2090.7,254.9 2092.7,244.7 2095.7,254.7 2098.3,272.4 2100.8,289 2103.8,295 2105.8,313.1 2108.8,301 2110.8,329.2 2112.9,337.3 2114.9,359.4 2116.9,341.3 2118.9,361.2 2120.9,373.5 2123.9,356.4 2126.9,380.5 2130,337.3 2132,367.5 2134,374.5 2136,341.3 2137,361.4 2137.6,144 2138.2,429.9 2138.8,144 2139.4,351.4 2141,337.3 2142.2,369.5 2143.4,341.3 2144.3,144 2145.1,379.5 2145.9,144 2146.7,321.2 2147.5,144 2148.3,394.6 2150.1,371.5 2152.1,373.5 2154.1,347.3 2156.1,363.4 2159.1,340.3 2162.2,329.2 2164.2,333.2 2166.2,297 2168.2,327.2 2169.2,363.4 2172.2,341.3 2175.2,305.1 2178.3,375.5 2181.3,343.3 2183.3,351.4 2185.3,311.1 2187.3,299 2189.3,329.2 2191.4,280.9 2193.4,229.6 2194.4,353.4 2196.4,361.4 2197.4,350.3 2199.4,374.5 2201.4,353.4 2203.4,361.4 2206.4,347.3 2208.5,361.4 2210.5,349.3 2213.5,339.3 2215.5,380.5 2218.5,361.4 2219.5,387.6 2221.5,357.4 2222.6,287.9 2224,417.8 2224.6,144 2225.2,419.8 2226,321.2 2226.8,417.8 2227.6,341.3 2228.6,415.8 2229.6,260.8 2230.4,413.8 2231.6,371.5 2232.6,401.7 2233.6,291 2234.4,371.5 2235.2,341.3" fill="none" stroke="#000" stroke-width="1.2" stroke-linejoin="round"/>
</g>
<g clip-path="url(#c1)">
<path d="M202.6 729.2V720.5H207V708.7H211.4V721.5H215.8V716.5H220.2V728.2H224.6V722.8H229V715.3H233.4V713.1H237.8V721.2H242.2V723.5H246.6V717H251V708.5H255.4V711.4H259.8V721.2H264.2V722.5H268.6V721.7H273V716.8H277.4V721.3H281.8V721.2H286.2V716.3H290.6V723H295V719H299.4V721.6H303.8V716.3H308.2V724.6H312.6V719.8H317V710.2H321.4V717.5H325.8V724H330.2V725.7H334.6V725.4H339V719.7H343.4V725.2H347.8V703.3H352.2V670.3H356.6V687.6H361V708.5H365.4V693.8H369.8V713.5H374.2V716.6H378.6V705.1H383V706.6H387.4V700.7H391.8V716.5H396.2V723.5H400.6V711.3H405V700H409.4V715.5H413.8V708H418.2V695.5H422.6V665.6H427V708.9H431.4V675.9H435.8V700.7H440.2V704.4H444.6V717.2H449V710.2H453.4V707.3H457.8V721.9H462.2V726.5H466.6V720.1H471V711.7H475.4V705.5H479.8V692.4H484.2V715.2H488.6V724.6H493V716H497.4V694.4H501.8V698.8H506.2V717H510.6V725.8H515V721.9H519.4V725.6H523.8V726H528.2V722.3H532.6V723.7H537V725.6H541.4V727.9H545.8V726.7H550.2V727.9H554.6V726.7H559V727.8H563.4V728H567.8V726.7H572.2V728.3H576.6V727.9H581V727.1H585.4V727.8H589.8V728.5H594.2V727.3H598.6V728.4H603V726.7H607.4V727H611.8V724.6H616.2V728.1H620.6V728.5H625V728.4H629.4V727.5H633.8V728.1H638.2V728.4H642.6V728.5H647V728.1H651.4V727.8H655.8V727.6H660.2V724.3H664.6V728.3H669V728.1H673.4V728.4H677.8V728.3H682.2V727H686.6V728.1H691V728.4H695.4V728.2H699.8V728.5H704.2V728.1H708.6V728.3H713V727.6H717.4V727.9H721.8V727.4H726.2V727.8H730.6V723.6H735V723.3H739.4V727.9H743.8V726.7H748.2V728.5H752.6V727.6H757V728.2H761.4V728.1H765.8V728.3H770.2V728.4H774.6V727.1H779V727.1H783.4V728.5H787.8V727H792.2V727H796.6V723.7H801V723.9H805.4V726.4H809.8V728.2H814.2V727H818.6V726.9H823V726.8H827.4V727.4H831.8V727.2H836.2V727.2H840.6V727.4H845V727H849.4V728.6H853.8V728.2H858.2V728.2H862.6V728.2H867V726.4H871.4V728.2H875.8V727H880.2V727.9H884.6V728.3H889V727.9H893.4V727.5H897.8V727.6H902.2V727.9H906.6V724.7H911V728.4H915.4V727.8H919.8V723.8H924.2V727.6H928.6V727.8H933V723.2H937.4V728.5H941.8V726.2H946.2V727.7H950.6V728.1H955V725.8H959.4V728.3H963.8V727H968.2V726.8H972.6V724.2H977V726.5H981.4V726.6H985.8V728H990.2V726.9H994.6V728H999V727.6H1003.4V726.2H1007.8V728.5H1012.2V727.7H1016.6V725.9H1021V726.9H1025.4V727.1H1029.8V728H1034.2V726H1038.6V728H1043V726.7H1047.4V724.6H1051.8V723.1H1056.2V723.2H1060.6V724.3H1065V725.1H1069.4V723.9H1073.8V725.4H1078.2V724.2H1082.6V723.4H1087V718.4H1091.4V717.9H1095.8V716.8H1100.2V716.8H1104.6V715.2H1109V717.4H1113.4V718.1H1117.8V722.2H1122.2V721.8H1126.6V725.5H1131V721.8H1135.4V726.9H1139.8V723H1144.2V723.4H1148.6V723.2H1153V721H1157.4V715.8H1161.8V717.4H1166.2V710.3H1170.6V712.9H1175V714.7H1179.4V719H1183.8V720.6H1188.2V717.9H1192.6V723.4H1197V723.6H1201.4V723.7H1205.8V725H1210.2V724.6H1214.6V724.6H1219V724.9H1223.4V727.6H1227.8V726.8H1232.2V727.2H1236.6V727.4H1241V724.9H1245.4V727.8H1249.8V728.1H1254.2V726.9H1258.6V727.4H1263V727.9H1267.4V727H1271.8V728.3H1276.2V728.5H1280.6V728H1285V724.1H1289.4V728.3H1293.8V723.6H1298.2V728.1H1302.6V728.6H1307V727.9H1311.4V725.1H1315.8V728.5H1320.2V728H1324.6V727.9H1329V728.1H1333.4V727.9H1337.8V725.5H1342.2V728.6H1346.6V727.5H1351V728.6H1355.4V727.6H1359.8V727.2H1364.2V728.3H1368.6V727.3H1373V727.7H1377.4V727.2H1381.8V726.9H1386.2V728.3H1390.6V728.2H1395V727.4H1399.4V728.2H1403.8V728.3H1408.2V727.7H1412.6V726.8H1417V727.5H1421.4V728.5H1425.8V728.5H1430.2V727.4H1434.6V727.8H1439V727.4H1443.4V727.6H1447.8V728.5H1452.2V727.9H1456.6V727H1461V728.1H1465.4V728.4H1469.8V728.3H1474.2V728.3H1478.6V727.7H1483V728.4H1487.4V726.7H1491.8V728.4H1496.2V727.5H1500.6V728.3H1505V727.7H1509.4V728H1513.8V728.2H1518.2V728.3H1522.6V727H1527V725H1531.4V723.9H1535.8V728.1H1540.2V727.7H1544.6V728.2H1549V728.5H1553.4V725.8H1557.8V728.4H1562.2V727.7H1566.6V728.1H1571V728.5H1575.4V727.5H1579.8V728.3H1584.2V728H1588.6V727.7H1593V725.9H1597.4V728.3H1601.8V727.1H1606.2V726.5H1610.6V722.6H1615V728H1619.4V727.3H1623.8V728.1H1628.2V726.9H1632.6V728.1H1637V728.5H1641.4V727.3H1645.8V728.5H1650.2V726.1H1654.6V728.1H1659V727.6H1663.4V727.6H1667.8V728.1H1672.2V726.9H1676.6V727.4H1681V724.4H1685.4V727.3H1689.8V728.2H1694.2V728.1H1698.6V728.3H1703V728.5H1707.4V727.7H1711.8V726.3H1716.2V728.4H1720.6V728H1725V727.5H1729.4V728.1H1733.8V727.8H1738.2V728.1H1742.6V728.1H1747V728.4H1751.4V728.3H1755.8V727.9H1760.2V728H1764.6V726.5H1769V728.4H1773.4V728.2H1777.8V727.8H1782.2V728.3H1786.6V728.5H1791V727.9H1795.4V723.6H1799.8V728.6H1804.2V728.6H1808.6V728.4H1813V727.9H1817.4V727.6H1821.8V727.8H1826.2V727.9H1830.6V728.1H1835V727.3H1839.4V727.6H1843.8V722.9H1848.2V727.8H1852.6V727.9H1857V727.3H1861.4V727.1H1865.8V723H1870.2V727.2H1874.6V728.5H1879V727.2H1883.4V727.9H1887.8V727.9H1892.2V728.3H1896.6V728.5H1901V726.8H1905.4V727.8H1909.8V728H1914.2V728H1918.6V728.3H1923V727.8H1927.4V727.8H1931.8V727.8H1936.2V728.2H1940.6V727H1945V727.6H1949.4V728.3H1953.8V727.9H1958.2V727.9H1962.6V728.5H1967V728H1971.4V728.4H1975.8V727.6H1980.2V727.8H1984.6V728.3H1989V724.5H1993.4V728.6H1997.8V728.3H2002.2V727.8H2006.6V728.4H2011V728.6H2015.4V726.2H2019.8V722.9H2024.2V728.5H2028.6V727.5H2033V726.5H2037.4V728.6H2041.8V728.3H2046.2V727.8H2050.6V727.8H2055V727.3H2059.4V727.4H2063.8V728.4H2068.2V727.9H2072.6V726.9H2077V728.3H2081.4V726.4H2085.8V728.1H2090.2V726.2H2094.6V727.7H2099V727.7H2103.4V725.8H2107.8V721H2112.2V710H2116.6V691.7H2121V710H2125.4V721H2129.8V727.4H2134.2V716.1H2138.6V727.9H2143V713.7H2147.4V726.8H2151.8V725.9H2156.2V727.2H2160.6V727.1H2165V714.4H2169.4V719.7H2173.8V726.9H2178.2V727.6H2182.6V726.8H2187V725.8H2191.4V726.8H2195.8V727.1H2200.2V728H2204.6V725.7H2209V728.1H2213.4V727.6H2217.8V727.4H2222.2V725.9H2226.6V702.7H2231V683.2H2235.4V729.2Z" fill="#ff0000" stroke="#ff0000" stroke-width="1.2" stroke-linejoin="round"/>
<polyline points="203.6,725.5 205.6,724.3 207.6,723.6 209.6,722.7 211.6,724.2 213.6,724.9 215.6,725.7 217.6,725.9 219.6,726.8 221.6,727.1 223.6,725.9 225.6,726.1 227.6,725.2 229.6,724.8 231.6,723.6 233.6,722.9 235.6,722.5 237.6,722.1 239.6,724 241.6,723.5 243.6,724.1 245.6,724.3 247.6,724.7 249.6,723.7 251.6,722.8 253.6,723 255.6,723.8 257.6,723.5 259.6,723.7 261.6,724.9 263.6,726.3 265.6,727.9 267.6,726.1 269.6,726.1 271.6,725.7 273.6,724.6 275.6,725.1 277.6,725.1 279.6,726.3 281.6,725.8 283.6,725.1 285.6,726.4 287.6,726 289.6,725.3 291.6,725.9 293.6,725.9 295.6,725.8 297.6,726.2 299.6,725 301.6,725.7 303.6,725.9 305.6,725.5 307.6,725.2 309.6,724.8 311.6,724.6 313.6,722.8 315.6,723.3 317.6,721.4 319.6,721.6 321.6,721.8 323.6,724.2 325.6,725.4 327.6,725.3 329.6,727 331.6,726.4 333.6,727.5 335.6,728.2 337.6,727.3 339.6,727.6 341.6,727.9 343.6,725.9 345.6,725.7 347.6,723.2 349.6,720.5 351.6,711.8 353.6,704.3 355.6,701.1 357.6,699.4 359.6,701.8 361.6,710.2 363.6,720.9 365.6,727.1 367.6,726.4 369.6,722.7 371.6,720.2 373.6,720.1 375.6,720.5 377.6,721.1 379.6,719.7 381.6,719.7 383.6,718.9 385.6,719.8 387.6,721 389.6,723.2 391.6,724.6 393.6,726.9 395.6,726.9 397.6,724.4 399.6,723 401.6,722.5 403.6,720.2 405.6,718.5 407.6,719.6 409.6,720.4 411.6,721.7 413.6,722.4 415.6,723.3 417.6,722.5 419.6,721.4 421.6,719.5 423.6,712 425.6,703.4 427.6,700.1 429.6,697.9 431.6,696.9 433.6,701.3 435.6,706.1 437.6,711 439.6,715.5 441.6,718.9 443.6,720.1 445.6,722.8 447.6,722 449.6,721.3 451.6,722.1 453.6,722.5 455.6,723.7 457.6,725.2 459.6,726 461.6,727.3 463.6,727.6 465.6,728.6 467.6,728 469.6,726.7 471.6,726.7 473.6,725.6 475.6,722.7 477.6,717.7 479.6,712.8 481.6,712.2 483.6,712.6 485.6,715.4 487.6,722.2 489.6,726.7 491.6,726.9 493.6,724.9 495.6,720.3 497.6,715.5 499.6,713.4 501.6,711.2 503.6,711.1 505.6,714.4 507.6,717.9 509.6,723.9 511.6,726.4 513.6,726.8 515.6,726.5 517.6,727.1 519.6,727.4 521.6,728.2 523.6,727.4 525.6,727.9 527.6,727.8 529.6,727.4 531.6,729.5 533.6,728.2 535.6,727.5 537.6,729 539.6,727.7 541.6,727.9 543.6,728.1 545.6,727.4 547.6,727.5 549.6,727.4 551.6,727.6 553.6,726.9 555.6,727.1 557.6,727.6 559.6,728.2 561.6,728 563.6,728.6 565.6,728 567.6,727.4 569.6,727.6 571.6,726.7 573.6,727.2 575.6,727.2 577.6,727.8 579.6,728 581.6,727.4 583.6,727.4 585.6,726.9 587.6,727.6 589.6,727.8 591.6,727.9 593.6,727.3 595.6,728.7 597.6,728.3 599.6,727.7 601.6,727.4 603.6,727.5 605.6,727.8 607.6,727.7 609.6,727.9 611.6,728.1 613.6,728.4 615.6,728.3 617.6,727.6 619.6,727.9 621.6,727.5 623.6,727.4 625.6,728.7 627.6,727.5 629.6,728.7 631.6,727.5 633.6,727.8 635.6,728.2 637.6,727.7 639.6,727.9 641.6,727.6 643.6,727.5 645.6,727.6 647.6,727.4 649.6,728.5 651.6,727.6 653.6,728.6 655.6,726.4 657.6,727.7 659.6,728 661.6,727.6 663.6,728.2 665.6,728 667.6,727.6 669.6,727.9 671.6,729.1 673.6,727.8 675.6,727.8 677.6,727.5 679.6,727.8 681.6,727.1 683.6,727.6 685.6,728.9 687.6,728.2 689.6,728 691.6,728.3 693.6,728.6 695.6,728 697.6,728.7 699.6,728.2 701.6,727.8 703.6,728.6 705.6,726.5 707.6,727.4 709.6,727.8 711.6,727.2 713.6,727.6 715.6,727.4 717.6,727.4 719.6,729.1 721.6,728 723.6,727.7 725.6,728.4 727.6,727.6 729.6,728.1 731.6,727.9 733.6,728.5 735.6,727 737.6,728.1 739.6,727.8 741.6,727.1 743.6,728.2 745.6,727.3 747.6,728.5 749.6,728 751.6,728 753.6,727.7 755.6,728.2 757.6,726.8 759.6,727.7 761.6,727.4 763.6,727.8 765.6,727.7 767.6,728 769.6,727.3 771.6,728.6 773.6,728.9 775.6,727.6 777.6,727.7 779.6,727.8 781.6,728.3 783.6,728.6 785.6,727.1 787.6,727.4 789.6,727.2 791.6,727.1 793.6,726.9 795.6,727.9 797.6,727.1 799.6,728.5 801.6,728.2 803.6,727.2 805.6,727.2 807.6,727.4 809.6,728.4 811.6,727.3 813.6,727 815.6,727.7 817.6,727.9 819.6,727.4 821.6,728.5 823.6,727.8 825.6,727.9 827.6,727.3 829.6,727.7 831.6,727.6 833.6,726.6 835.6,727.8 837.6,726.8 839.6,727.7 841.6,727 843.6,728.7 845.6,727.9 847.6,728.1 849.6,728.2 851.6,727 853.6,726.6 855.6,727.5 857.6,728.1 859.6,727.7 861.6,728.1 863.6,728.2 865.6,727 867.6,727.8 869.6,728.7 871.6,727.4 873.6,726.7 875.6,727.6 877.6,727.5 879.6,727.9 881.6,727.3 883.6,727.7 885.6,726.6 887.6,728.1 889.6,728.5 891.6,728.3 893.6,726.9 895.6,727.9 897.6,726.2 899.6,727.8 901.6,727.7 903.6,727.2 905.6,727.9 907.6,727.8 909.6,728.2 911.6,727.8 913.6,727.8 915.6,726.7 917.6,727.1 919.6,727.5 921.6,727.8 923.6,727.7 925.6,728.5 927.6,727.3 929.6,727.6 931.6,727.8 933.6,727.6 935.6,727.9 937.6,727.4 939.6,728.4 941.6,727.5 943.6,728.3 945.6,727.7 947.6,728.4 949.6,727 951.6,728 953.6,727.5 955.6,727.8 957.6,728.3 959.6,727.1 961.6,727 963.6,727.2 965.6,727.8 967.6,726.8 969.6,727.7 971.6,727.1 973.6,727.1 975.6,727.5 977.6,727.9 979.6,727.4 981.6,727.5 983.6,727.7 985.6,727.6 987.6,726.4 989.6,727.5 991.6,727.7 993.6,728.2 995.6,728.7 997.6,728 999.6,727.7 1001.6,727.2 1003.6,727.7 1005.6,728.1 1007.6,728.3 1009.6,727.3 1011.6,727.8 1013.6,728.1 1015.6,728.6 1017.6,727.8 1019.6,727.4 1021.6,727.4 1023.6,727.5 1025.6,727.4 1027.6,728.1 1029.6,728.2 1031.6,728 1033.6,728.3 1035.6,727.4 1037.6,727.8 1039.6,727.4 1041.6,727.6 1043.6,728.2 1045.6,727.6 1047.6,726.6 1049.6,727.4 1051.6,727.1 1053.6,726.7 1055.6,727 1057.6,727.8 1059.6,728 1061.6,726.9 1063.6,727.5 1065.6,727.5 1067.6,726.2 1069.6,726.6 1071.6,726.5 1073.6,726.4 1075.6,725.4 1077.6,725.9 1079.6,726.4 1081.6,726.4 1083.6,726.6 1085.6,725.3 1087.6,726.3 1089.6,725.6 1091.6,724.5 1093.6,725.5 1095.6,724.9 1097.6,725.4 1099.6,725.1 1101.6,725.7 1103.6,725.3 1105.6,725.1 1107.6,725.8 1109.6,725.6 1111.6,725.4 1113.6,726.3 1115.6,725.6 1117.6,725.7 1119.6,725.9 1121.6,725.5 1123.6,726.1 1125.6,727.5 1127.6,726.2 1129.6,726.8 1131.6,726.3 1133.6,726.6 1135.6,727.7 1137.6,727.5 1139.6,726.7 1141.6,727 1143.6,726.6 1145.6,726.5 1147.6,726.4 1149.6,726.3 1151.6,726.8 1153.6,726.8 1155.6,726.6 1157.6,726 1159.6,725.3 1161.6,725.7 1163.6,725.1 1165.6,725.8 1167.6,725.4 1169.6,725.3 1171.6,724.6 1173.6,723.8 1175.6,725.1 1177.6,725.1 1179.6,723.8 1181.6,724.6 1183.6,725.2 1185.6,724.1 1187.6,725.6 1189.6,724.7 1191.6,724.5 1193.6,726 1195.6,725.6 1197.6,725.3 1199.6,726.3 1201.6,725.1 1203.6,727.2 1205.6,726.1 1207.6,726.8 1209.6,726.6 1211.6,727.2 1213.6,727.5 1215.6,726.8 1217.6,727.7 1219.6,727.2 1221.6,727.1 1223.6,727.4 1225.6,727.1 1227.6,727.2 1229.6,728.1 1231.6,727.6 1233.6,728.2 1235.6,727.9 1237.6,727.2 1239.6,726.7 1241.6,727.3 1243.6,727.8 1245.6,727.7 1247.6,727.3 1249.6,728.2 1251.6,726.8 1253.6,727.1 1255.6,727.8 1257.6,728.8 1259.6,727.9 1261.6,727.2 1263.6,728 1265.6,728 1267.6,728.2 1269.6,727.5 1271.6,727.3 1273.6,727.8 1275.6,727.9 1277.6,728.5 1279.6,728.7 1281.6,727.3 1283.6,727.4 1285.6,727.7 1287.6,727.6 1289.6,727.9 1291.6,727.9 1293.6,727.8 1295.6,728.4 1297.6,727.6 1299.6,727.2 1301.6,726.9 1303.6,727.2 1305.6,727.2 1307.6,726.8 1309.6,728 1311.6,727.8 1313.6,727.5 1315.6,727.3 1317.6,726.9 1319.6,727.2 1321.6,728.6 1323.6,726.6 1325.6,727.8 1327.6,728.1 1329.6,727.8 1331.6,727.5 1333.6,728.1 1335.6,727.1 1337.6,728 1339.6,728.4 1341.6,727.2 1343.6,727.3 1345.6,727.8 1347.6,728.2 1349.6,728.4 1351.6,728 1353.6,727.4 1355.6,727.1 1357.6,727.8 1359.6,727.9 1361.6,727.1 1363.6,727.7 1365.6,727.9 1367.6,728.2 1369.6,727.2 1371.6,728 1373.6,727.1 1375.6,727.5 1377.6,727.7 1379.6,728.5 1381.6,729.4 1383.6,727.8 1385.6,727.9 1387.6,728.2 1389.6,727 1391.6,728.1 1393.6,727.1 1395.6,728.5 1397.6,728.4 1399.6,728 1401.6,727.3 1403.6,728.5 1405.6,727.8 1407.6,727.8 1409.6,728 1411.6,726.8 1413.6,727.9 1415.6,728.2 1417.6,727.9 1419.6,727.8 1421.6,727.2 1423.6,728 1425.6,727.8 1427.6,727.7 1429.6,727.4 1431.6,728.1 1433.6,728.3 1435.6,727.9 1437.6,728.1 1439.6,728.4 1441.6,728.5 1443.6,727.8 1445.6,727.6 1447.6,727.5 1449.6,727.7 1451.6,728 1453.6,728.2 1455.6,727.5 1457.6,727.8 1459.6,727.2 1461.6,728.3 1463.6,727.5 1465.6,727.9 1467.6,727.3 1469.6,727.6 1471.6,727.4 1473.6,728.6 1475.6,727.9 1477.6,727.6 1479.6,727.2 1481.6,727.4 1483.6,728 1485.6,728.5 1487.6,727 1489.6,727.2 1491.6,727.6 1493.6,727.4 1495.6,726.9 1497.6,727.7 1499.6,728.1 1501.6,726.9 1503.6,727.8 1505.6,728.2 1507.6,728.2 1509.6,727.5 1511.6,728.9 1513.6,728 1515.6,727.3 1517.6,728.2 1519.6,727.1 1521.6,728.1 1523.6,727.1 1525.6,728.1 1527.6,727.4 1529.6,728.3 1531.6,728.1 1533.6,727.9 1535.6,727.7 1537.6,728.2 1539.6,726.8 1541.6,727.9 1543.6,727.9 1545.6,728 1547.6,728.1 1549.6,729.6 1551.6,727.8 1553.6,728.1 1555.6,727.8 1557.6,728.5 1559.6,726.7 1561.6,728.5 1563.6,727.4 1565.6,726.6 1567.6,727.2 1569.6,727.6 1571.6,727.8 1573.6,727.7 1575.6,728.1 1577.6,727.7 1579.6,727.7 1581.6,726.6 1583.6,727.9 1585.6,728.2 1587.6,727.5 1589.6,726.8 1591.6,727 1593.6,728.5 1595.6,727.4 1597.6,727.4 1599.6,727.3 1601.6,728 1603.6,727.4 1605.6,727.3 1607.6,726.9 1609.6,727.6 1611.6,728.2 1613.6,727.6 1615.6,728.1 1617.6,727.8 1619.6,727.8 1621.6,727.8 1623.6,727.7 1625.6,728.2 1627.6,727.9 1629.6,727.4 1631.6,727.8 1633.6,727.7 1635.6,727.9 1637.6,727.8 1639.6,727.9 1641.6,727 1643.6,727.9 1645.6,728.4 1647.6,727 1649.6,728.5 1651.6,727.8 1653.6,727.6 1655.6,726.8 1657.6,728.2 1659.6,727.2 1661.6,727.4 1663.6,728 1665.6,727.2 1667.6,727.2 1669.6,727.1 1671.6,727.6 1673.6,728 1675.6,727.9 1677.6,727.9 1679.6,727.5 1681.6,727.8 1683.6,727.4 1685.6,728.7 1687.6,727.8 1689.6,726.7 1691.6,727.2 1693.6,728.5 1695.6,727 1697.6,727.5 1699.6,727.9 1701.6,727.2 1703.6,728.2 1705.6,728.5 1707.6,727.3 1709.6,728.3 1711.6,727.3 1713.6,727.2 1715.6,727.8 1717.6,727.8 1719.6,727.4 1721.6,728.1 1723.6,727 1725.6,727.3 1727.6,727.2 1729.6,728.1 1731.6,728.1 1733.6,728 1735.6,727.1 1737.6,727.8 1739.6,727.9 1741.6,726.9 1743.6,727.3 1745.6,728 1747.6,728.1 1749.6,727.8 1751.6,728 1753.6,727.9 1755.6,727.8 1757.6,727.6 1759.6,727.3 1761.6,727.6 1763.6,727.5 1765.6,728.9 1767.6,727.8 1769.6,727.7 1771.6,727.6 1773.6,727.6 1775.6,727.6 1777.6,728 1779.6,727.7 1781.6,728.1 1783.6,727.4 1785.6,727.9 1787.6,728.1 1789.6,727.1 1791.6,727.8 1793.6,727.8 1795.6,727.5 1797.6,727.5 1799.6,726.8 1801.6,728.3 1803.6,727.2 1805.6,727.1 1807.6,728 1809.6,726.8 1811.6,728.2 1813.6,727.9 1815.6,728 1817.6,727.6 1819.6,727.1 1821.6,726.8 1823.6,728.4 1825.6,727.5 1827.6,727.4 1829.6,728.5 1831.6,727.4 1833.6,727.6 1835.6,727.6 1837.6,727.6 1839.6,727.2 1841.6,727.4 1843.6,728.3 1845.6,728.1 1847.6,726.2 1849.6,726.7 1851.6,727.9 1853.6,727.6 1855.6,727.5 1857.6,728.2 1859.6,726.8 1861.6,728.3 1863.6,727.8 1865.6,728 1867.6,727.8 1869.6,728.1 1871.6,727.6 1873.6,727.4 1875.6,728.1 1877.6,727.8 1879.6,727.1 1881.6,728.4 1883.6,728.3 1885.6,728.4 1887.6,727.7 1889.6,727.9 1891.6,727.5 1893.6,727.2 1895.6,727.7 1897.6,727.8 1899.6,727.4 1901.6,728.6 1903.6,726.9 1905.6,727.3 1907.6,727.4 1909.6,728.3 1911.6,727.6 1913.6,727.5 1915.6,727.3 1917.6,727.3 1919.6,727 1921.6,728.2 1923.6,728 1925.6,728.2 1927.6,727.4 1929.6,729 1931.6,727.2 1933.6,726.7 1935.6,727.6 1937.6,727.8 1939.6,728.1 1941.6,727.2 1943.6,728 1945.6,728.6 1947.6,727.3 1949.6,727.3 1951.6,726.8 1953.6,727.8 1955.6,728.1 1957.6,728.1 1959.6,728.1 1961.6,728.4 1963.6,727.8 1965.6,728.2 1967.6,727.2 1969.6,727.3 1971.6,727.8 1973.6,727.3 1975.6,728 1977.6,728.4 1979.6,727.9 1981.6,727.3 1983.6,727.3 1985.6,728.4 1987.6,727.3 1989.6,727.7 1991.6,727.6 1993.6,727.7 1995.6,728.2 1997.6,727.4 1999.6,727 2001.6,728.4 2003.6,727.8 2005.6,728.1 2007.6,727.7 2009.6,728.1 2011.6,728.3 2013.6,728.4 2015.6,727.6 2017.6,727.5 2019.6,727.9 2021.6,727.8 2023.6,728 2025.6,727.3 2027.6,726.5 2029.6,727.9 2031.6,728.1 2033.6,728 2035.6,728.5 2037.6,728.1 2039.6,727.5 2041.6,728.2 2043.6,727.7 2045.6,728.3 2047.6,727.8 2049.6,727.9 2051.6,727.8 2053.6,727.7 2055.6,727 2057.6,727.7 2059.6,726.6 2061.6,727.9 2063.6,728.2 2065.6,728.7 2067.6,727.9 2069.6,727.3 2071.6,726.9 2073.6,728.7 2075.6,727 2077.6,728.1 2079.6,726.5 2081.6,727.7 2083.6,728 2085.6,727.9 2087.6,727.7 2089.6,727.3 2091.6,727.2 2093.6,728.2 2095.6,727.9 2097.6,727.6 2099.6,727.7 2101.6,727.1 2103.6,727.9 2105.6,727.7 2107.6,725.9 2109.6,724.8 2111.6,722.5 2113.6,717.3 2115.6,713 2117.6,707.4 2119.6,704 2121.6,706.3 2123.6,711.4 2125.6,715.2 2127.6,720.3 2129.6,722.5 2131.6,723.8 2133.6,724.8 2135.6,724.4 2137.6,724 2139.6,724 2141.6,724.7 2143.6,725.1 2145.6,724.9 2147.6,725 2149.6,725.3 2151.6,726.2 2153.6,726.1 2155.6,725.7 2157.6,726.2 2159.6,727.2 2161.6,726.5 2163.6,726.8 2165.6,727.1 2167.6,726.7 2169.6,727.8 2171.6,726.4 2173.6,728.2 2175.6,727.4 2177.6,727 2179.6,727.8 2181.6,726.8 2183.6,727.9 2185.6,728.1 2187.6,727.4 2189.6,727.5 2191.6,728.2 2193.6,727.4 2195.6,727.7 2197.6,727.9 2199.6,728.5 2201.6,727.4 2203.6,727.7 2205.6,728.3 2207.6,726.4 2209.6,727.6 2211.6,726.7 2213.6,726.8 2215.6,728.7 2217.6,727.8 2219.6,728.4 2221.6,727.6 2223.6,727.9 2225.6,727.3 2227.6,726.6 2229.6,724.9 2231.6,721.3 2233.6,717.3" fill="none" stroke="#000" stroke-width="4.2" stroke-linejoin="round"/>
<polyline points="203.6,723.2 205.6,723 207.6,721.4 209.6,722.5 211.6,722.2 213.6,721.9 215.6,723.2 217.6,724.9 219.6,725.5 221.6,725.3 223.6,725.9 225.6,724.5 227.6,724 229.6,723.2 231.6,721.8 233.6,722.5 235.6,721.5 237.6,723.2 239.6,723.1 241.6,723.1 243.6,722.8 245.6,723.3 247.6,722.9 249.6,721.6 251.6,723.7 253.6,722.3 255.6,723.1 257.6,721.1 259.6,723.5 261.6,722.4 263.6,723.9 265.6,725.8 267.6,725.2 269.6,723.3 271.6,723.9 273.6,724.9 275.6,725.5 277.6,724.8 279.6,724 281.6,724.9 283.6,723.7 285.6,725 287.6,723.8 289.6,724.8 291.6,724.8 293.6,725.5 295.6,724.7 297.6,725.8 299.6,724.8 301.6,725.1 303.6,724.7 305.6,722.4 307.6,723.3 309.6,722.9 311.6,721.9 313.6,722 315.6,720.4 317.6,721.3 319.6,720.8 321.6,721.2 323.6,723.5 325.6,722.8 327.6,723.6 329.6,724 331.6,725.7 333.6,725.9 335.6,728.4 337.6,726.5 339.6,726.2 341.6,726.7 343.6,725.3 345.6,721.6 347.6,716.9 349.6,712.6 351.6,709.8 353.6,708 355.6,706.5 357.6,707 359.6,708.2 361.6,708.2 363.6,709.8 365.6,713 367.6,714.5 369.6,716.1 371.6,715.5 373.6,717.4 375.6,716.2 377.6,716.1 379.6,717.7 381.6,716.5 383.6,716.1 385.6,716.9 387.6,717.9 389.6,718.5 391.6,720.6 393.6,721.5 395.6,721.9 397.6,722.9 399.6,720.5 401.6,719.6 403.6,718.1 405.6,717 407.6,716.8 409.6,716 411.6,717.7 413.6,717.4 415.6,718.6 417.6,716 419.6,712.3 421.6,708 423.6,705.6 425.6,701.2 427.6,698.3 429.6,697.6 431.6,696.7 433.6,700.3 435.6,703.2 437.6,706.6 439.6,712 441.6,714.2 443.6,717.3 445.6,720.8 447.6,719.2 449.6,718.4 451.6,719.5 453.6,719.7 455.6,720.8 457.6,722 459.6,721.8 461.6,721.6 463.6,724.3 465.6,723.9 467.6,723.8 469.6,722.6 471.6,723 473.6,721.1 475.6,719.2 477.6,716.6 479.6,715.5 481.6,715.2 483.6,715.4 485.6,716.1 487.6,719.1 489.6,721.2 491.6,722.3 493.6,719.4 495.6,717.2 497.6,715.9 499.6,715.5 501.6,714.6 503.6,713.9 505.6,715.3 507.6,716.6 509.6,720.1 511.6,723 513.6,723.2 515.6,724.8 517.6,724.7 519.6,725.5 521.6,726.4 523.6,726.2 525.6,727.3 527.6,725.8 529.6,726.6 531.6,727.3 533.6,726.8 535.6,727.9 537.6,726.6 539.6,727.7 541.6,726 543.6,726.9 545.6,727.4 547.6,728.5 549.6,727.8 551.6,728.1 553.6,727 555.6,728.5 557.6,726.8 559.6,726.8 561.6,726.1 563.6,727.2 565.6,727.7 567.6,726.6 569.6,726.7 571.6,726.7 573.6,726.8 575.6,726.6 577.6,726.1 579.6,728 581.6,725.6 583.6,726.4 585.6,727.2 587.6,727.7 589.6,726.9 591.6,726.8 593.6,727 595.6,726.8 597.6,727.6 599.6,726.7 601.6,726.3 603.6,726.7 605.6,727.1 607.6,727.9 609.6,728.1 611.6,726.7 613.6,726 615.6,726 617.6,728.5 619.6,726.7 621.6,727.3 623.6,728.3 625.6,726.5 627.6,726.9 629.6,726.6 631.6,726.2 633.6,727.6 635.6,727.7 637.6,725.7 639.6,727.7 641.6,726.8 643.6,727.1 645.6,727.1 647.6,726.1 649.6,726.8 651.6,726.3 653.6,728.3 655.6,728.5 657.6,727.1 659.6,726.2 661.6,727.8 663.6,726.9 665.6,728.2 667.6,728.4 669.6,728.2 671.6,726.7 673.6,726.3 675.6,726.5 677.6,726.9 679.6,726.4 681.6,727.8 683.6,727.5 685.6,727 687.6,726.7 689.6,727.5 691.6,728 693.6,725.6 695.6,727.2 697.6,726.8 699.6,726.5 701.6,726.8 703.6,727.1 705.6,728.3 707.6,727 709.6,726.7 711.6,726.1 713.6,727.5 715.6,726.5 717.6,726.9 719.6,727.5 721.6,727 723.6,726.7 725.6,726.9 727.6,727.6 729.6,727 731.6,727.2 733.6,727.3 735.6,726.8 737.6,727.2 739.6,726.8 741.6,727.8 743.6,727.4 745.6,725.8 747.6,726.9 749.6,727.8 751.6,726.9 753.6,726.7 755.6,727.7 757.6,726.2 759.6,727 761.6,727.4 763.6,727.6 765.6,726.3 767.6,726.1 769.6,728 771.6,726.5 773.6,726.9 775.6,728.7 777.6,726.7 779.6,725.5 781.6,729 783.6,727.7 785.6,727.3 787.6,728.9 789.6,726.9 791.6,728 793.6,727 795.6,726.8 797.6,727.4 799.6,727.6 801.6,727.9 803.6,727.8 805.6,726.7 807.6,726.9 809.6,728.4 811.6,727.4 813.6,727.1 815.6,727.9 817.6,728 819.6,727.9 821.6,726.6 823.6,726.7 825.6,727.5 827.6,727.8 829.6,726.2 831.6,726.7 833.6,726.8 835.6,727.7 837.6,726.2 839.6,728.9 841.6,727.1 843.6,727.4 845.6,728.6 847.6,727.4 849.6,727.5 851.6,726.9 853.6,727.3 855.6,726.3 857.6,727 859.6,727 861.6,726.3 863.6,727.7 865.6,727.3 867.6,725.7 869.6,727.6 871.6,726.4 873.6,727.4 875.6,726.4 877.6,726.8 879.6,727.3 881.6,728.4 883.6,725.9 885.6,726.8 887.6,726.8 889.6,727.8 891.6,726.8 893.6,727.3 895.6,727.9 897.6,727.5 899.6,726.7 901.6,726.7 903.6,726.8 905.6,727.1 907.6,726.4 909.6,727 911.6,727.4 913.6,726.7 915.6,726.7 917.6,727.2 919.6,727.6 921.6,726.1 923.6,726.3 925.6,727.9 927.6,727 929.6,726.2 931.6,727.1 933.6,728.1 935.6,726.6 937.6,726.3 939.6,726.8 941.6,728.1 943.6,726.5 945.6,727.4 947.6,727.7 949.6,727.4 951.6,726.8 953.6,727.5 955.6,727.1 957.6,727.6 959.6,727.3 961.6,727.1 963.6,725.8 965.6,727.5 967.6,726.9 969.6,725.6 971.6,727 973.6,727.2 975.6,726.9 977.6,725.3 979.6,726.5 981.6,726.3 983.6,726.8 985.6,725.4 987.6,727.2 989.6,727.4 991.6,727.4 993.6,727 995.6,726.9 997.6,727.7 999.6,727.3 1001.6,726.7 1003.6,727.2 1005.6,727.5 1007.6,727.8 1009.6,727.3 1011.6,726.5 1013.6,726.7 1015.6,727.2 1017.6,727.2 1019.6,727.7 1021.6,725.7 1023.6,726.5 1025.6,726.2 1027.6,727.7 1029.6,727.5 1031.6,727.2 1033.6,727.5 1035.6,726.6 1037.6,727.3 1039.6,727 1041.6,727 1043.6,726.8 1045.6,727.6 1047.6,727.6 1049.6,725.8 1051.6,726.4 1053.6,726.8 1055.6,727.1 1057.6,725.5 1059.6,725.9 1061.6,726.2 1063.6,727.5 1065.6,725.6 1067.6,725.8 1069.6,725.9 1071.6,725.7 1073.6,725.8 1075.6,725.5 1077.6,725.2 1079.6,725.4 1081.6,725.3 1083.6,725.2 1085.6,725.1 1087.6,723.9 1089.6,724.7 1091.6,724.6 1093.6,725 1095.6,724.9 1097.6,725.5 1099.6,723.9 1101.6,724.4 1103.6,724.6 1105.6,724.1 1107.6,724.5 1109.6,724.5 1111.6,724.6 1113.6,726.6 1115.6,725.1 1117.6,726.3 1119.6,724.9 1121.6,725.8 1123.6,725.3 1125.6,726.1 1127.6,727.1 1129.6,727.4 1131.6,726.7 1133.6,726.6 1135.6,726.3 1137.6,726.6 1139.6,727.3 1141.6,725.2 1143.6,726.1 1145.6,725.6 1147.6,726.9 1149.6,725.2 1151.6,726.5 1153.6,725 1155.6,724.9 1157.6,726.5 1159.6,726 1161.6,724.4 1163.6,723.6 1165.6,724 1167.6,724.9 1169.6,724.3 1171.6,723.5 1173.6,724.4 1175.6,724.9 1177.6,723.1 1179.6,723.8 1181.6,723.3 1183.6,724.6 1185.6,724 1187.6,723.6 1189.6,723.1 1191.6,724.9 1193.6,724.4 1195.6,724.9 1197.6,724.9 1199.6,725.5 1201.6,724.2 1203.6,725 1205.6,726 1207.6,727.2 1209.6,726.4 1211.6,726.2 1213.6,726 1215.6,726.1 1217.6,726.5 1219.6,726.2 1221.6,726.9 1223.6,726.8 1225.6,728.2 1227.6,726.8 1229.6,727.7 1231.6,726.7 1233.6,727.6 1235.6,728.7 1237.6,726.6 1239.6,726.2 1241.6,727.8 1243.6,727.1 1245.6,726.8 1247.6,727.3 1249.6,727.2 1251.6,727.9 1253.6,727.3 1255.6,726.6 1257.6,726.3 1259.6,725.8 1261.6,726.3 1263.6,727.8 1265.6,726 1267.6,727.1 1269.6,727.9 1271.6,727.4 1273.6,728.1 1275.6,727.5 1277.6,728.1 1279.6,726.6 1281.6,726.5 1283.6,728.4 1285.6,727.3 1287.6,727.1 1289.6,726.6 1291.6,728.1 1293.6,727.4 1295.6,727.4 1297.6,726.6 1299.6,727.1 1301.6,726.7 1303.6,727 1305.6,727.3 1307.6,726.7 1309.6,726.4 1311.6,727.6 1313.6,726.3 1315.6,728 1317.6,728.1 1319.6,726.1 1321.6,728.1 1323.6,726.5 1325.6,727.9 1327.6,726.6 1329.6,727.6 1331.6,726.3 1333.6,727.5 1335.6,727.1 1337.6,728.1 1339.6,727.5 1341.6,726.4 1343.6,727.2 1345.6,726.6 1347.6,727.2 1349.6,728.1 1351.6,728.1 1353.6,727.1 1355.6,726.5 1357.6,727.1 1359.6,728.5 1361.6,726.9 1363.6,726 1365.6,726.1 1367.6,726.2 1369.6,727.8 1371.6,726.8 1373.6,726.5 1375.6,727.3 1377.6,727.7 1379.6,726.9 1381.6,726.5 1383.6,727.2 1385.6,727.6 1387.6,725.9 1389.6,726.1 1391.6,728.4 1393.6,727.3 1395.6,727.3 1397.6,726.1 1399.6,726.3 1401.6,726.8 1403.6,727.9 1405.6,727.1 1407.6,725.9 1409.6,728.1 1411.6,728.1 1413.6,727.6 1415.6,726.3 1417.6,726.6 1419.6,726.8 1421.6,727.1 1423.6,728.3 1425.6,726.1 1427.6,726.5 1429.6,727 1431.6,726.6 1433.6,726.7 1435.6,726 1437.6,727 1439.6,726.8 1441.6,727.1 1443.6,727.6 1445.6,726.8 1447.6,726.9 1449.6,727.2 1451.6,726.7 1453.6,727.1 1455.6,725.8 1457.6,726.4 1459.6,727.4 1461.6,727.1 1463.6,727.6 1465.6,726.1 1467.6,726.6 1469.6,726.9 1471.6,726.9 1473.6,726.8 1475.6,728 1477.6,726.7 1479.6,726.8 1481.6,727.4 1483.6,727.3 1485.6,727.1 1487.6,728.2 1489.6,727.4 1491.6,726.8 1493.6,726.3 1495.6,727.8 1497.6,726.6 1499.6,727.3 1501.6,726.6 1503.6,728.5 1505.6,727.5 1507.6,725.8 1509.6,727.2 1511.6,726 1513.6,726.6 1515.6,727.6 1517.6,726.1 1519.6,727.2 1521.6,726.9 1523.6,727.5 1525.6,726.3 1527.6,727.4 1529.6,726.7 1531.6,727.7 1533.6,727 1535.6,727.4 1537.6,727.9 1539.6,727.7 1541.6,727 1543.6,727.5 1545.6,727 1547.6,727.3 1549.6,728.1 1551.6,726.4 1553.6,726.2 1555.6,727.3 1557.6,726.6 1559.6,727.8 1561.6,727.6 1563.6,727.4 1565.6,727 1567.6,726.7 1569.6,726.4 1571.6,726.6 1573.6,727 1575.6,726.3 1577.6,727.7 1579.6,727.4 1581.6,726.1 1583.6,725.1 1585.6,727.7 1587.6,726.1 1589.6,725 1591.6,725.8 1593.6,727.1 1595.6,727.9 1597.6,727.6 1599.6,728 1601.6,728.2 1603.6,728.3 1605.6,726.3 1607.6,726.9 1609.6,726.6 1611.6,727 1613.6,726.8 1615.6,727.2 1617.6,728.3 1619.6,726.5 1621.6,727.5 1623.6,726.3 1625.6,726.1 1627.6,727.7 1629.6,726.9 1631.6,727 1633.6,728 1635.6,726.1 1637.6,727.1 1639.6,728 1641.6,726.3 1643.6,727.2 1645.6,727.6 1647.6,727.6 1649.6,727.5 1651.6,727.7 1653.6,727.3 1655.6,727.5 1657.6,727.3 1659.6,726.4 1661.6,727.1 1663.6,726.9 1665.6,727.8 1667.6,727.4 1669.6,727.4 1671.6,727.1 1673.6,727.5 1675.6,726.6 1677.6,727.2 1679.6,726.5 1681.6,726.8 1683.6,726.2 1685.6,728.6 1687.6,727.4 1689.6,726.3 1691.6,726.8 1693.6,727.2 1695.6,726.7 1697.6,727.5 1699.6,727.3 1701.6,727.8 1703.6,725 1705.6,727.5 1707.6,727.2 1709.6,727.7 1711.6,726.6 1713.6,726.5 1715.6,726.2 1717.6,727.3 1719.6,727.1 1721.6,725.8 1723.6,726.6 1725.6,727 1727.6,726.2 1729.6,726.8 1731.6,726.9 1733.6,726.6 1735.6,725.9 1737.6,727.8 1739.6,727.2 1741.6,727.2 1743.6,726.6 1745.6,727.1 1747.6,726.5 1749.6,726.9 1751.6,727.1 1753.6,727.4 1755.6,726.6 1757.6,726.5 1759.6,727.9 1761.6,726 1763.6,727.1 1765.6,726.9 1767.6,727.5 1769.6,726.7 1771.6,726.3 1773.6,727.1 1775.6,726.1 1777.6,726.3 1779.6,727 1781.6,727.1 1783.6,726 1785.6,727.9 1787.6,727 1789.6,727.9 1791.6,727.8 1793.6,727 1795.6,726.7 1797.6,726 1799.6,727.7 1801.6,728.1 1803.6,727.1 1805.6,727 1807.6,726.4 1809.6,726.3 1811.6,726.9 1813.6,727.8 1815.6,726.8 1817.6,727.6 1819.6,727.3 1821.6,726.9 1823.6,726.4 1825.6,726.8 1827.6,726.2 1829.6,727.6 1831.6,727.4 1833.6,726.3 1835.6,726.5 1837.6,726.1 1839.6,727.1 1841.6,727.4 1843.6,726.4 1845.6,726.7 1847.6,727.3 1849.6,725.9 1851.6,727.2 1853.6,728.1 1855.6,728.1 1857.6,726.9 1859.6,727 1861.6,727.5 1863.6,727.5 1865.6,728 1867.6,727.2 1869.6,727.3 1871.6,727.3 1873.6,728.2 1875.6,726.4 1877.6,727.9 1879.6,727.2 1881.6,727.3 1883.6,726.5 1885.6,727.1 1887.6,726.5 1889.6,725.3 1891.6,727.2 1893.6,726.2 1895.6,727.1 1897.6,726.2 1899.6,726.8 1901.6,726.8 1903.6,725.9 1905.6,727.1 1907.6,726.7 1909.6,725.4 1911.6,728.3 1913.6,727.4 1915.6,727.3 1917.6,727.1 1919.6,727.7 1921.6,726.7 1923.6,727.6 1925.6,727.7 1927.6,726.7 1929.6,727.1 1931.6,727.2 1933.6,726.1 1935.6,727.3 1937.6,727 1939.6,727.9 1941.6,727.2 1943.6,726.5 1945.6,727.2 1947.6,726.7 1949.6,725.5 1951.6,726.9 1953.6,726.2 1955.6,727.9 1957.6,727.3 1959.6,727.7 1961.6,727.3 1963.6,726.9 1965.6,727.5 1967.6,726 1969.6,727.6 1971.6,727 1973.6,725.7 1975.6,726.9 1977.6,727.5 1979.6,726.7 1981.6,728 1983.6,727.9 1985.6,726.6 1987.6,726.5 1989.6,726.9 1991.6,726.7 1993.6,727.5 1995.6,727.8 1997.6,727.5 1999.6,727.5 2001.6,727 2003.6,727 2005.6,726.6 2007.6,728.7 2009.6,727.7 2011.6,727.5 2013.6,726.6 2015.6,726 2017.6,726.5 2019.6,726.8 2021.6,726.8 2023.6,727.5 2025.6,726.8 2027.6,727.5 2029.6,727.4 2031.6,727.5 2033.6,727 2035.6,727.6 2037.6,727.2 2039.6,727.2 2041.6,726.9 2043.6,727 2045.6,727.2 2047.6,727.5 2049.6,726.6 2051.6,726.8 2053.6,727.1 2055.6,727.8 2057.6,727.1 2059.6,727.5 2061.6,727.7 2063.6,727.1 2065.6,728.1 2067.6,726.4 2069.6,726.1 2071.6,726.3 2073.6,726.5 2075.6,726.6 2077.6,726.9 2079.6,727.3 2081.6,726.7 2083.6,726.7 2085.6,727.4 2087.6,726.9 2089.6,727.2 2091.6,726.7 2093.6,726.1 2095.6,727 2097.6,726.9 2099.6,727.2 2101.6,726.9 2103.6,726.2 2105.6,727.4 2107.6,724.8 2109.6,722.9 2111.6,721.3 2113.6,718.1 2115.6,715.2 2117.6,711.4 2119.6,710.4 2121.6,711.3 2123.6,714.1 2125.6,715.7 2127.6,720 2129.6,721.1 2131.6,724 2133.6,723.3 2135.6,723.5 2137.6,724.3 2139.6,724 2141.6,723.9 2143.6,724.6 2145.6,723.9 2147.6,724 2149.6,725.3 2151.6,724.5 2153.6,725.2 2155.6,724.5 2157.6,725.6 2159.6,725.6 2161.6,726.3 2163.6,727.8 2165.6,725.1 2167.6,725.9 2169.6,726.4 2171.6,726.8 2173.6,725.8 2175.6,726.8 2177.6,726.3 2179.6,727 2181.6,726.3 2183.6,728.9 2185.6,727.1 2187.6,727.5 2189.6,725.4 2191.6,726.4 2193.6,726.9 2195.6,728.2 2197.6,726.4 2199.6,727.3 2201.6,726.4 2203.6,726.9 2205.6,725.7 2207.6,725.7 2209.6,726.5 2211.6,727.6 2213.6,727.6 2215.6,726.9 2217.6,726.1 2219.6,727.8 2221.6,726.7 2223.6,726.3 2225.6,726.5 2227.6,726 2229.6,725.5 2231.6,720.5 2233.6,715.5" fill="none" stroke="#00ff00" stroke-width="4.4" stroke-linejoin="round"/>
<polyline points="202.6,587.1 203.6,588.4 204.6,585.5 205.6,588.5 206.6,587.9 207.6,588.3 208.6,588.4 209.6,589.1 210.6,589 211.6,588.4 212.6,587.1 213.6,588.2 214.6,587 215.6,586.5 216.6,588 217.6,587.9 218.6,588.7 219.6,585.3 220.6,588.1 221.6,588.2 222.6,587.6 223.6,589 224.6,586.6 225.6,587.9 226.6,587.2 227.6,587.5 228.6,586.5 229.6,587.4 230.6,588.2 231.6,587.7 232.6,587.9 233.6,586.8 234.6,589.2 235.6,586.8 236.6,587.6 237.6,588.1 238.6,587.4 239.6,588.3 240.6,587.7 241.6,589.3 242.6,588.1 243.6,587.9 244.6,586.7 245.6,588 246.6,588.6 247.6,588 248.6,586.6 249.6,587 250.6,587.3 251.6,587.6 252.6,586.1 253.6,589.4 254.6,587.4 255.6,587.6 256.6,587.1 257.6,587.5 258.6,589.5 259.6,586.6 260.6,587 261.6,586.5 262.6,587 263.6,589.1 264.6,586.9 265.6,587.1 266.6,585.7 267.6,587.2 268.6,587.7 269.6,587 270.6,587.1 271.6,588.3 272.6,588.1 273.6,587.4 274.6,586.7 275.6,586 276.6,589.2 277.6,586 278.6,588.2 279.6,587.3 280.6,586.8 281.6,588.4 282.6,586.8 283.6,588.8 284.6,586.5 285.6,588 286.6,588.8 287.6,586.5 288.6,589.6 289.6,588.4 290.6,585.3 291.6,588.9 292.6,589.4 293.6,587.3 294.6,587.3 295.6,587.9 296.6,585.6 297.6,587.7 298.6,588.5 299.6,587 300.6,588.6 301.6,589.7 302.6,585.6 303.6,585.7 304.6,586.8 305.6,588.2 306.6,587.9 307.6,586.6 308.6,586.4 309.6,586.8 310.6,589.2 311.6,586.6 312.6,586.9 313.6,588.5 314.6,587.2 315.6,586.5 316.6,589 317.6,587.9 318.6,586.8 319.6,587.1 320.6,588.5 321.6,587.2 322.6,587.8 323.6,588.4 324.6,588.5 325.6,585.7 326.6,587 327.6,587.2 328.6,587.6 329.6,588.3 330.6,588.7 331.6,587.1 332.6,586.4 333.6,587.7 334.6,586.9 335.6,589.3 336.6,587.9 337.6,587.6 338.6,588.6 339.6,586.9 340.6,587.2 341.6,587.4 342.6,588.2 343.6,588.9 344.6,588.3 345.6,588.3 346.6,587.3 347.6,587.9 348.6,587.3 349.6,588.7 350.6,586.9 351.6,587.5 352.6,587.8 353.6,588.3 354.6,586.8 355.6,587.3 356.6,586.7 357.6,586.2 358.6,588.6 359.6,588 360.6,586 361.6,586.6 362.6,588.1 363.6,586.9 364.6,586.5 365.6,588.8 366.6,587.1 367.6,587.2 368.6,588.1 369.6,586.8 370.6,587.6 371.6,587.7 372.6,588.3 373.6,586.8 374.6,588.6 375.6,587.9 376.6,589.3 377.6,587.8 378.6,587 379.6,587 380.6,586.4 381.6,587.5 382.6,587.5 383.6,588.4 384.6,587.6 385.6,586.7 386.6,588.6 387.6,587.1 388.6,587.8 389.6,589 390.6,588.8 391.6,586.8 392.6,587.4 393.6,588.9 394.6,588.5 395.6,588.1 396.6,588.4 397.6,585.3 398.6,587.2 399.6,586.1 400.6,586.9 401.6,587.1 402.6,588 403.6,587.1 404.6,586.5 405.6,585 406.6,583.7 407.6,582.2 408.6,578.9 409.6,581.9 410.6,584.3 411.6,587.3 412.6,588.5 413.6,588.3 414.6,586.6 415.6,588.8 416.6,589 417.6,592.2 418.6,595.7 419.6,597.2 420.6,596.3 421.6,594.4 422.6,600.5 423.6,604.5 424.6,635.3 425.6,709.2 426.6,672.4 427.6,609.5 428.6,554.5 429.6,526.4 430.6,502.1 431.6,521.9 432.6,587.8 433.6,589.5 434.6,562.1 435.6,581.6 436.6,607.6 437.6,615.2 438.6,613.5 439.6,602.7 440.6,601.9 441.6,600.5 442.6,599.8 443.6,598.3 444.6,594.9 445.6,593.4 446.6,593.9 447.6,594 448.6,594 449.6,593.5 450.6,593.1 451.6,591.6 452.6,590.7 453.6,587.9 454.6,586.7 455.6,589.3 456.6,591 457.6,590.6 458.6,590.8 459.6,586.2 460.6,591 461.6,599 462.6,600.9 463.6,599.9 464.6,595.5 465.6,594.1 466.6,594.4 467.6,593.3 468.6,596.7 469.6,597.9 470.6,605.2 471.6,613.3 472.6,610.3 473.6,602.2 474.6,594.3 475.6,592.7 476.6,588.1 477.6,586.2 478.6,582.4 479.6,582.2 480.6,580.7 481.6,577.8 482.6,577.8 483.6,581.7 484.6,589.5 485.6,587.6 486.6,584.8 487.6,579 488.6,577 489.6,574.1 490.6,575.7 491.6,584.9 492.6,587.5 493.6,581.4 494.6,581 495.6,586 496.6,591.2 497.6,595.4 498.6,598.4 499.6,591.3 500.6,574.4 501.6,582.7 502.6,591.7 503.6,584.2 504.6,574.6 505.6,587.7 506.6,601 507.6,590.9 508.6,579.2 509.6,580.7 510.6,590.8 511.6,592.4 512.6,590.5 513.6,587.3 514.6,587.3 515.6,585.2 516.6,585.4 517.6,590.5 518.6,593.2 519.6,591.4 520.6,586.7 521.6,587.6 522.6,585.9 523.6,587.6 524.6,587.3 525.6,588.8 526.6,587.7 527.6,586.2 528.6,589.1 529.6,587.8 530.6,588.6 531.6,586.6 532.6,584.1 533.6,586.7 534.6,586.4 535.6,587.7 536.6,585.9 537.6,586.6 538.6,586.1 539.6,587.6 540.6,586.5 541.6,588.9" fill="none" stroke="#000" stroke-width="1.1" stroke-linejoin="round"/>
<polyline points="202.4,588.1 391.3,587.7 412.1,589.8 418.4,587.7 424.6,588.1 430.8,594.4 435,596.5 453.7,596.5 466.2,595.4 470.4,591.9 480.8,588.1 487,585 493.3,584.4 499.5,587.7 524.5,588.6" fill="none" stroke="#ff00ff" stroke-width="1.1" />
<polyline points="237.3,585 238.8,585.1 240.3,585.1 241.8,585.2 243.3,585.3 244.8,585.3 246.3,585.4 247.8,585.5 249.3,585.5 250.8,585.6 252.3,585.6 253.8,585.7 255.3,585.8 256.8,585.8 258.3,585.9 259.8,586 261.3,586 262.8,585.9 264.3,585.6 265.8,585.3 267.3,585 268.8,584.6 270.3,584.3 271.8,584 273.3,583.7 274.8,583.4 276.3,583.5 277.8,583.6 279.3,583.7 280.8,583.9 282.3,584 283.8,584.1 285.3,584.2 286.8,584.4 288.3,584.4 289.8,584.5 291.3,584.6 292.8,584.7 294.3,584.7 295.8,584.8 297.3,584.9 298.8,585 300.3,585 301.8,585.1 303.3,585.2 304.8,585.3 306.3,585.3 307.8,585.4 309.3,585.4 310.8,585.4 312.3,585.4 313.8,585.3 315.3,585.3 316.8,585.3 318.3,585.3 319.8,585.2 321.3,585.2 322.8,585.2 324.3,585.2 325.8,585.1 327.3,585.1 328.8,585.1 330.3,585.1 331.8,585 333.3,585 334.8,585 336.3,584.9 337.8,584.9 339.3,584.9 340.8,584.8 342.3,584.8 343.8,584.7 345.3,584.7 346.8,584.7 348.3,584.6 349.8,584.6 351.3,584.6 352.8,584.5 354.3,584.5 355.8,584.4 357.3,584.4 358.8,584.4 360.3,584.4 361.8,584.5 363.3,584.5 364.8,584.5 366.3,584.6 367.8,584.6 369.3,584.6 370.8,584.7 372.3,584.7 373.8,584.7 375.3,584.8 376.8,584.8 378.3,584.8 379.8,584.9 381.3,584.9 382.8,584.9 384.3,585 385.8,585 387.3,585.1 388.8,585.4 390.3,585.8 391.8,586.2 393.3,586.6 394.8,586.9 396.3,587.4 397.8,587.9 399.3,588.4 400.8,588.9 402.3,589 403.8,588.7 405.3,588.3 406.8,588 408.3,587.4 409.8,586.2 411.3,585 412.8,584.4 414.3,584.4 415.8,584.4 417.3,584.4 418.8,584.4 420.3,584.4 421.8,589.7 423.3,595.6 424.8,600 426.3,596.1 427.8,586.8 429.3,570.5 430.8,561.1 432.3,562.6 433.8,567.7 435.3,575.8 436.8,583.5 438.3,590.5 439.8,595.2 441.3,597.1 442.8,599 444.3,599 445.8,598.1 447.3,597.2 448.8,596.3 450.3,595.4 451.8,594.5 453.3,593.6 454.8,593.5 456.3,593.8 457.8,594 459.3,594.3 460.8,595.1 462.3,596.5 463.8,597.8 465.3,599.1 466.8,600 468.3,601 469.8,601.2 471.3,599.7 472.8,597.8 474.3,594.8 475.8,591.8 477.3,588.8 478.8,585.8 480.3,582.8 481.8,581.2 483.3,580.2 484.8,580.5 486.3,581.6 487.8,582.8 489.3,582.4 490.8,581.8 492.3,581.2 493.8,581.4 495.3,582.9 496.8,584.4 498.3,585.9 499.8,587.1 501.3,587 502.8,586.8 504.3,586.7 505.8,586.6 507.3,586.5 508.8,586.8 510.3,587.3 511.8,587.8 513.3,588.3 514.8,588.7 516.3,589.2 517.8,589 519.3,588.9 520.8,588.8 522.3,588.7 523.8,588.6 525.3,588.6 526.8,588.6 528.3,588.6 529.8,588.6 531.3,588.6 532.8,588.6 534.3,588.6 535.8,588.6" fill="none" stroke="#ff0000" stroke-width="4.4" stroke-linejoin="round" stroke-linecap="butt"/>
<line x1="536.3" y1="588.5" x2="975.3" y2="588.5" stroke="#ff0000" stroke-width="4.4" />
<line x1="1324.8" y1="588.5" x2="2084.2" y2="588.3" stroke="#ff0000" stroke-width="4.4" />
<polyline points="2084.9,589.2 2085.9,590.3 2086.9,589.7 2087.9,589.6 2088.9,590.1 2089.9,589.2 2090.9,588.7 2091.9,589.7 2092.9,588.6 2093.9,587.9 2094.9,587.5 2095.9,588.6 2096.9,589.5 2097.9,588.7 2098.9,587.7 2099.9,587.4 2100.9,584.8 2101.9,584.9 2102.9,589.1 2103.9,593.2 2104.9,588.9 2105.9,586.9 2106.9,589.7 2107.9,594.2 2108.9,599.2 2109.9,593.8 2110.9,584.8 2111.9,573.8 2112.9,576.5 2113.9,597.2 2114.9,614 2115.9,600.5 2116.9,588 2117.9,586.6 2118.9,592.2 2119.9,595.5 2120.9,589.1 2121.9,582.6 2122.9,589.8 2123.9,598.9 2124.9,582.5 2125.9,567.3 2126.9,581.6 2127.9,602.8 2128.9,617.6 2129.9,624.1 2130.9,590.8 2131.9,580.8 2132.9,594.6 2133.9,603.8 2134.9,605 2135.9,605.4 2136.9,602.4 2137.9,598.2 2138.9,594.3 2139.9,589.7 2140.9,588.9 2141.9,587.5 2142.9,586 2143.9,583.6 2144.9,580.8 2145.9,576.4 2146.9,572 2147.9,571.2 2148.9,584.1 2149.9,594.7 2150.9,601.2 2151.9,607.5 2152.9,606.8 2153.9,600.5 2154.9,594.6 2155.9,589.1 2156.9,588.4 2157.9,587.5 2158.9,586.4 2159.9,585.7 2160.9,583.5 2161.9,584 2162.9,583.9 2163.9,581.2 2164.9,576.5 2165.9,571.9 2166.9,567.5 2167.9,568.2 2168.9,588 2169.9,607 2170.9,596.7 2171.9,587.3 2172.9,583.1 2173.9,579.6 2174.9,581.6 2175.9,582.4 2176.9,584.5 2177.9,586.1 2178.9,588.1 2179.9,588.6 2180.9,589.2 2181.9,588.6 2182.9,586.4 2183.9,584.7 2184.9,583.4 2185.9,581.2 2186.9,581.7 2187.9,582.7 2188.9,582.6 2189.9,582.4 2190.9,577.6 2191.9,575.2 2192.9,572.9 2193.9,586.9 2194.9,612.4 2195.9,600 2196.9,585.3 2197.9,587.5 2198.9,588.5 2199.9,590.5 2200.9,590 2201.9,590.1 2202.9,589.3 2203.9,588.7 2204.9,589.2 2205.9,588.1 2206.9,588.6 2207.9,591 2208.9,590 2209.9,590.4 2210.9,590.8 2211.9,589.7 2212.9,590.3 2213.9,589.1 2214.9,589.3 2215.9,589.5 2216.9,591.2 2217.9,591.2 2218.9,592.5 2219.9,592.9 2220.9,590.9 2221.9,590.8 2222.9,589.5 2223.9,588.6 2224.9,589 2225.9,589.6 2226.9,589.3 2227.9,590 2228.9,590.4 2229.9,590.9 2230.9,590.7 2231.9,589.6 2232.9,590.4 2233.9,589.4 2234.9,588.8" fill="none" stroke="#000" stroke-width="1.1" stroke-linejoin="round"/>
<polyline points="2084.9,589.5 2122.6,588.8 2132.4,588.3 2144.5,585.8 2154.3,582.2 2164,583.4 2173.8,585.8 2183.5,585.8 2193.2,587 2203,589.5 2220,590 2235.1,590" fill="none" stroke="#ff00ff" stroke-width="1.1" />
<polyline points="2084.2,589.5 2085.7,589.7 2087.2,590 2088.7,590.2 2090.2,589.8 2091.7,589.4 2093.2,589 2094.7,588.6 2096.2,588.3 2097.7,588.2 2099.2,588.1 2100.7,588.1 2102.2,588 2103.7,588 2105.2,587.9 2106.7,587.8 2108.2,587.8 2109.7,588.2 2111.2,588.5 2112.7,588.9 2114.2,589.2 2115.7,589.4 2117.2,589 2118.7,588.7 2120.2,588.3 2121.7,589 2123.2,589.7 2124.7,590.5 2126.2,592.5 2127.7,595 2129.2,596.9 2130.7,597.4 2132.2,597.9 2133.7,595.9 2135.2,593.4 2136.7,590.5 2138.2,587.1 2139.7,583.7 2141.2,580.7 2142.7,579.2 2144.2,577.7 2145.7,576.2 2147.2,578.4 2148.7,580.9 2150.2,583.9 2151.7,587.4 2153.2,590.8 2154.7,591.6 2156.2,592.4 2157.7,590.9 2159.2,588.1 2160.7,585.4 2162.2,582.9 2163.7,580.4 2165.2,578.9 2166.7,578.7 2168.2,579.3 2169.7,581.8 2171.2,584.3 2172.7,585.9 2174.2,587.4 2175.7,588.9 2177.2,590 2178.7,590.7 2180.2,591.5 2181.7,591.5 2183.2,590.3 2184.7,589.2 2186.2,588.2 2187.7,588 2189.2,587.8 2190.7,588.7 2192.2,590 2193.7,591.2 2195.2,592.2 2196.7,592.9 2198.2,593.6 2199.7,592.4 2201.2,591.2" fill="none" stroke="#ff0000" stroke-width="4.4" stroke-linejoin="round"/>
<line x1="410.7" y1="448.3" x2="410.7" y2="729.2" stroke="#ff00ff" stroke-width="4.2" />
<line x1="536.3" y1="448.3" x2="536.3" y2="729.2" stroke="#0000ff" stroke-width="4.4" />
<line x1="2084.2" y1="448.3" x2="2084.2" y2="729.2" stroke="#0000ff" stroke-width="4.4" />
<line x1="2178.1" y1="448.3" x2="2178.1" y2="729.2" stroke="#ff00ff" stroke-width="4.2" />
</g>
<g clip-path="url(#c2)">
<polyline points="202.6,1023.4 204.2,1023.3 205.8,1021.4 207.4,1021 209,1022 210.6,1020.1 212.2,1023.1 213.8,1023 215.4,1021.2 217,1023.5 218.6,1022.3 220.2,1020.8 221.8,1020.3 223.4,1022.1 225,1022.1 226.6,1022.6 228.2,1023.2 229.8,1023 231.4,1020.9 233,1023.4 234.6,1021.4 236.2,1021.5 237.8,1022.6 239.4,1019.5 241,1020.5 242.6,1023 244.2,1022.2 245.8,1021.8 247.4,1022.6 249,1022.1 250.6,1020.4 252.2,1021.1 253.8,1020.7 255.4,1020 257,1022.7 258.6,1021 260.2,1023.5 261.8,1021.6 263.4,1023 265,1023.1 266.6,1022.9 268.2,1023.1 269.8,1022.7 271.4,1019.8 273,1021.7 274.6,1022.4 276.2,1022.9 277.8,1021.4 279.4,1022.5 281,1020.6 282.6,1022.8 284.2,1022 285.8,1022.4 287.4,1022.4 289,1021.1 290.6,1022 292.2,1023.2 293.8,1020.9 295.4,1022.9 297,1020.1 298.6,1022.7 300.2,1022 301.8,1022.7 303.4,1022.7 305,1022.7 306.6,1021.5 308.2,1022.6 309.8,1023.3 311.4,1021.2 313,1022.5 314.6,1023 316.2,1022.9 317.8,1020.7 319.4,1020.5 321,1022.6 322.6,1018 324.2,1019.5 325.8,1018.5 327.4,1022.4 329,1022.4 330.6,1021.4 332.2,1021.1 333.8,1017.8 335.4,1022.7 337,1021.4 338.6,1022.1 340.2,1020.4 341.8,1022 343.4,1022.8 345,1021.4 346.6,1023.2 348.2,1021.1 349.8,1022.8 351.4,1019.7 353,1023.1 354.6,1022.7 356.2,1022.1 357.8,1018.3 359.4,1019.5 361,1021.6 362.6,1021.6 364.2,1022 365.8,1021.9 367.4,1022.5 369,1022 370.6,1022.1 372.2,1021.8 373.8,1022 375.4,1021.1 377,1021.7 378.6,1021.5 380.2,1022.8 381.8,1022.8 383.4,1021.6 385,1023.4 386.6,1021.5 388.2,1022.5 389.8,1022.9 391.4,1022.4 393,1021.5 394.6,1021 396.2,1021.3 397.8,1019.4 399.4,1022.9 401,1021.9 402.6,1022.1 404.2,1019.9 405.8,1023.4 407.4,1022.4 409,1021.4 410.6,1022.4 412.2,1021.3 413.8,1021.1 415.4,1021.6 417,1022.4 418.6,1022.8 420.2,1020.2 421.8,1023 423.4,1022.9 425,1022.5 426.6,1021.3 428.2,1023.3 429.8,1021.2 431.4,1022.3 433,1022.2 434.6,1023.3 436.2,1021.3 437.8,1022.1 439.4,1022.4 441,1023.3 442.6,1021.2 444.2,1022.1 445.8,1020.1 447.4,1017.3 449,1023.3 450.6,1022.5 452.2,1020.1 453.8,1021.4 455.4,1020.5 457,1020.2 458.6,1021.2 460.2,1023.1 461.8,1022.7 463.4,1021.6 465,1021.4 466.6,1023.2 468.2,1022.8 469.8,1023.2 471.4,1022.3 473,1021.6 474.6,1022.9 476.2,1022.7 477.8,1023.4 479.4,1020.4 481,1019.8 482.6,1022.8 484.2,1020.7 485.8,1021.9 487.4,1023.1 489,1022.8 490.6,1021.9 492.2,1021.7 493.8,1023.4 495.4,1020.6 497,1020.1 498.6,1023 500.2,1021.6 501.8,1023 503.4,1022.3 505,1023.4 506.6,1022.7 508.2,1021.5 509.8,1020.3 511.4,1021.8 513,1022.9 514.6,1022.6 516.2,1023 517.8,1022.7 519.4,1021.7 521,1022.6 522.6,1018.4 524.2,1022.2 525.8,1022.8 527.4,1020.6 529,1022.3 530.6,1023 532.2,1023.2 533.8,1021.2 535.4,1019.6 537,1022.7 538.6,1021.8 540.2,1020.8 541.8,1022.8 543.4,1022.5 545,1020 546.6,1022.3 548.2,1021.4 549.8,1020.4 551.4,1023.1 553,1023.3 554.6,1023.3 556.2,1022.9 557.8,1022.9 559.4,1020.9" fill="none" stroke="#00ff00" stroke-width="2.5" stroke-linejoin="round"/>
<path d="M264.8 1025.5V1014.6H271.1V1025.5ZM275 1025.5V1015.3H279.1V1025.5ZM285.2 1025.5V1008H296.7V1025.5ZM310.1 1025.5V1017.5H314.9V1025.5ZM340.8 1025.5V1019H348.5V1025.5ZM353.2 1025.5L354.3 966Q356.7 955 359.1 966L360.2 1025.5ZM362.7 1025.5V1000.7H369V1025.5ZM375.8 1025.5V993.4H382.1V1025.5ZM383.1 1025.5V997H389.4V1025.5ZM403.6 1025.5V1009.5H408.4V1025.5ZM414.6 1025.5V1006.5H421.6V1025.5ZM426.7 1025.5V989H429.6V1025.5ZM430.2 1025.5V972.2H433.7V1025.5ZM448.9 1025.5V1008H456.7V1025.5ZM470.8 1025.5V1014.6H476.4V1025.5ZM481.8 1025.5V1009.5H487.3V1025.5ZM492.7 1025.5V1009.5H494.6V1025.5ZM494.9 1025.5V999.2H497.6V1025.5ZM498.6 1025.5V977.3H502.7V1025.5ZM503 1025.5V990.5H504.9V1025.5ZM505.9 1025.5V1012.4H507.8V1025.5Z" fill="#00ff00" stroke="#00ff00" stroke-width="2.0" stroke-linejoin="round"/>
<polyline points="202.6,1023.9 204.2,1021.7 205.8,1022.3 207.4,1023.6 209,1023.2 210.6,1022.4 212.2,1022.5 213.8,1022.2 215.4,1023 217,1023.1 218.6,1024 220.2,1023.6 221.8,1023.1 223.4,1022.8 225,1022.3 226.6,1022.3 228.2,1022.8 229.8,1022.3 231.4,1021.6 233,1021.6 234.6,1021 236.2,1021.4 237.8,1023 239.4,1023.5 241,1022.3 242.6,1023 244.2,1023.4 245.8,1023.1 247.4,1022.3 249,1024 250.6,1020 252.2,1020 253.8,1023.6 255.4,1023.8 257,1022.6 258.6,1023.8 260.2,1023.8 261.8,1023.6 263.4,1023.9 265,1022.3 266.6,1023 268.2,1023 269.8,1022.2 271.4,1020.6 273,1023.1 274.6,1023.2 276.2,1020.9 277.8,1023.4 279.4,1022.3 281,1022.9 282.6,1022.8 284.2,1023.1 285.8,1022.8 287.4,1023.1 289,1023.3 290.6,1023.8 292.2,1022.5 293.8,1023.2 295.4,1021.5 297,1023.4 298.6,1024 300.2,1022 301.8,1022.3 303.4,1020 305,1020.7 306.6,1023.8 308.2,1023.5 309.8,1023.2 311.4,1023.4 313,1022.5 314.6,1022.8 316.2,1024 317.8,1021.8 319.4,1023.6 321,1023.1 322.6,1023.1 324.2,1022.1 325.8,1023.7 327.4,1022.1 329,1023.1 330.6,1023.6 332.2,1022.4 333.8,1022.4 335.4,1022.7 337,1022 338.6,1023.3 340.2,1023.1 341.8,1023.5 343.4,1022.6 345,1022 346.6,1023 348.2,1019.6 349.8,1023.2 351.4,1023.9 353,1023.4 354.6,1022.6 356.2,1023.7 357.8,1024 359.4,1022.9 361,1022.6 362.6,1021.6 364.2,1023 365.8,1023 367.4,1023.7 369,1023.3 370.6,1023.8 372.2,1023.5 373.8,1023.3 375.4,1020.5 377,1022.4 378.6,1024 380.2,1022.2 381.8,1023.2 383.4,1022.3 385,1021.5 386.6,1023.6 388.2,1023.9 389.8,1022 391.4,1022.7 393,1023.9 394.6,1021 396.2,1023.4 397.8,1023.3 399.4,1023.9 401,1022.1 402.6,1021 404.2,1022.7 405.8,1023.1 407.4,1023.8 409,1024 410.6,1020.6 412.2,1023.8 413.8,1022.6 415.4,1019.5 417,1023.6 418.6,1022.3 420.2,1023.1 421.8,1023.6 423.4,1022.6 425,1022.6 426.6,1021.9 428.2,1022 429.8,1023.2 431.4,1022.7 433,1021.8 434.6,1023.2 436.2,1021.5 437.8,1022.3 439.4,1023.4 441,1023.5 442.6,1023.8 444.2,1022 445.8,1022.9 447.4,1019.1 449,1023.9 450.6,1023.1 452.2,1021.8 453.8,1023.3 455.4,1023.6 457,1021.6 458.6,1021.4 460.2,1021.9 461.8,1023.7 463.4,1021.8 465,1023.1 466.6,1021 468.2,1023.9 469.8,1023 471.4,1023.4 473,1022.5 474.6,1024 476.2,1023.2 477.8,1023.6 479.4,1022 481,1022.7 482.6,1023.9 484.2,1023.3 485.8,1021.3 487.4,1023.8 489,1023.6 490.6,1022.6 492.2,1023.4 493.8,1022.3 495.4,1020.7 497,1022.5 498.6,1023.5 500.2,1023 501.8,1023.7 503.4,1020.7 505,1020.6 506.6,1023.1 508.2,1021.8 509.8,1023.1 511.4,1021.4 513,1022.8 514.6,1022.4 516.2,1023.2 517.8,1021.7 519.4,1023.4 521,1022.7 522.6,1023.5 524.2,1022 525.8,1020.6 527.4,1023.5 529,1022 530.6,1020.2 532.2,1021.5 533.8,1020.2 535.4,1022.5 537,1022.6 538.6,1022.7 540.2,1023.6 541.8,1021.6 543.4,1023.5 545,1022.9 546.6,1023.7 548.2,1023.7 549.8,1022.8 551.4,1022.3 553,1021.1 554.6,1021.7 556.2,1021.8 557.8,1023.7 559.4,1022.7" fill="none" stroke="#000" stroke-width="2.5" stroke-linejoin="round"/>
<path d="M250.9 1025.5V1008H258.7V1025.5ZM234.1 1025.5V1019H241.9V1025.5ZM295.5 1025.5V1017.5H299.6V1025.5ZM317.4 1025.5V1010.2H321.5V1025.5ZM343 1025.5V1021.2H350V1025.5ZM351 1025.5V1012.4H352.6V1025.5ZM353.6 1025.5L354.7 965.3Q356.8 954.3 358.8 965.3L359.9 1025.5ZM368.5 1025.5V1002.9H371.9V1025.5ZM383.9 1025.5V999.2H388V1025.5ZM405.1 1025.5V1014.6H408.4V1025.5ZM415.3 1025.5V1004.4H420.1V1025.5ZM423.3 1025.5V1001.4H426V1025.5ZM430.6 1025.5V994.9H434V1025.5ZM439.4 1025.5V1008H442.8V1025.5ZM446 1025.5V1018.2H448.6V1025.5ZM450.4 1025.5V1013.1H456.7V1025.5ZM480.3 1025.5V1013.8H488.8V1025.5ZM498.6 1025.5V1002.2H502.7V1025.5Z" fill="#000" stroke="#000" stroke-width="2.0" stroke-linejoin="round"/>
<path d="M2089.8 1025.5V1021.4H2098.1V1025.5ZM2119.1 1025.5V991H2124.7V1025.5ZM2125.7 1025.5V1009.8H2127V1025.5ZM2128 1025.5V1019.1H2128.9V1025.5ZM2141.5 1025.5V1020.6H2144.3V1025.5ZM2145.3 1025.5V1013.7H2148.9V1025.5ZM2149.9 1025.5V1014.5H2153.2V1025.5ZM2154.2 1025.5V1019.9H2155.9V1025.5ZM2158.4 1025.5V1021.4H2161.3V1025.5ZM2162.3 1025.5V1016.4H2167.4V1025.5ZM2168.4 1025.5V1020.6H2173.6V1025.5ZM2181.5 1025.5V1020.6H2185.9V1025.5ZM2193.1 1025.5V1023H2198.3V1025.5ZM2212.4 1025.5V1021.4H2215.2V1025.5ZM2216.2 1025.5V1017.9H2220.6V1025.5ZM2225.5 1025.5V1014.5H2233V1025.5Z" fill="#00ff00" stroke="#00ff00" stroke-width="2.0" stroke-linejoin="round"/>
<path d="M2119.1 1025.5V997.5H2124.7V1025.5ZM2125.7 1025.5V1017.6H2127.3V1025.5ZM2147.6 1025.5V1021.4H2152.8V1025.5ZM2180.8 1025.5V1021.8H2185.9V1025.5ZM2187.7 1025.5V1017.6H2192.1V1025.5ZM2226.3 1025.5V1019.9H2232.2V1025.5Z" fill="#000" stroke="#000" stroke-width="2.0" stroke-linejoin="round"/>
<ellipse cx="958" cy="1025" rx="6" ry="4.5" fill="none" stroke="#00ff00" stroke-width="2"/>
<ellipse cx="985" cy="1025" rx="6" ry="4" fill="none" stroke="#00ff00" stroke-width="2"/>
<ellipse cx="1010" cy="1025" rx="6" ry="3.5" fill="none" stroke="#00ff00" stroke-width="2"/>
<ellipse cx="1082" cy="1025" rx="6" ry="3.5" fill="none" stroke="#00ff00" stroke-width="2"/>
<ellipse cx="830" cy="1025" rx="6" ry="3" fill="none" stroke="#00ff00" stroke-width="2"/>
<path d="M250.9 1025.5V1009H258.7V1025.5ZM227.5 1025.5V1021.2H233.8V1025.5ZM235.6 1025.5V1020.9H241.9V1025.5ZM276.5 1025.5V1019H279.1V1025.5ZM285.2 1025.5V1014.6H288.6V1025.5ZM295.5 1025.5V1019.7H298.9V1025.5ZM302.8 1025.5V1021.9H306.2V1025.5ZM317.4 1025.5V1014.6H321.5V1025.5ZM352.5 1025.5V1012.4H360.2V1025.5ZM368.5 1025.5V1021.9H371.9V1025.5ZM373.6 1025.5V1005.1H376.3V1025.5ZM377.3 1025.5V985.4H380.7V1025.5ZM381.7 1025.5V999.2H384.3V1025.5ZM385.3 1025.5V1006.5H388V1025.5ZM389 1025.5V1021.2H390.9V1025.5ZM397.8 1025.5V1015.3H401.1V1025.5ZM404.3 1025.5V1016.8H408.4V1025.5ZM415.3 1025.5V1012.4H421.6V1025.5ZM423.3 1025.5V1005.1H426V1025.5ZM430.6 1025.5V1009.5H433.3V1025.5ZM435.7 1025.5V1016.8H438.4V1025.5ZM439.4 1025.5V1013.8H442.8V1025.5ZM450.4 1025.5V1018.2H456.7V1025.5ZM472.3 1025.5V1019H476.4V1025.5ZM480.3 1025.5V1018.2H485.9V1025.5ZM498.6 1025.5V1013.8H503.4V1025.5ZM504.4 1025.5V1018.2H507.8V1025.5Z" fill="#ff0000" stroke="#ff0000" stroke-width="2.0" stroke-linejoin="round"/>
<path d="M2111.8 1025.5V1011.4H2118.1V1025.5ZM2119.1 1025.5V1006.8H2124.7V1025.5ZM2132.2 1025.5V1020.6H2136.6V1025.5ZM2163 1025.5V1021.8H2178.2V1025.5ZM2188.1 1025.5V1019.9H2191.7V1025.5ZM2217 1025.5V1023.3H2220.6V1025.5ZM2230.1 1025.5V1021H2236.8V1025.5Z" fill="#ff0000" stroke="#ff0000" stroke-width="2.0" stroke-linejoin="round"/>
<polyline points="202.6,1023.3 204.2,1023.6 205.8,1019 207.4,1023.7 209,1024.1 210.6,1020.8 212.2,1022.3 213.8,1023 215.4,1023.9 217,1023.6 218.6,1021.7 220.2,1023.8 221.8,1023.5 223.4,1023 225,1020.6 226.6,1022.8 228.2,1021.8 229.8,1020.2 231.4,1021 233,1025.9 234.6,1022.1 236.2,1022.4 237.8,1022.4 239.4,1023.4 241,1022.1 242.6,1022.7 244.2,1024.2 245.8,1023.5 247.4,1024.3 249,1024.1 250.6,1022.6 252.2,1022.9 253.8,1024.3 255.4,1024.1 257,1024.2 258.6,1023.8 260.2,1023.9 261.8,1021.4 263.4,1024.1 265,1020.9 266.6,1023.6 268.2,1023.2 269.8,1024.1 271.4,1023.5 273,1023.7 274.6,1021.5 276.2,1021.8 277.8,1023.2 279.4,1023.6 281,1024.1 282.6,1021.2 284.2,1023.8 285.8,1021.4 287.4,1022.8 289,1023 290.6,1021.8 292.2,1024.1 293.8,1019.3 295.4,1022.9 297,1024 298.6,1023.3 300.2,1022.2 301.8,1023.8 303.4,1022.5 305,1023.1 306.6,1024.3 308.2,1021.7 309.8,1024.1 311.4,1018 313,1022.6 314.6,1020.2 316.2,1020.9 317.8,1020.3 319.4,1023.4 321,1021.7 322.6,1021.2 324.2,1022.4 325.8,1023.9 327.4,1023 329,1023.8 330.6,1019.7 332.2,1026.5 333.8,1022.7 335.4,1022.6 337,1022.1 338.6,1022 340.2,1022.7 341.8,1023.8 343.4,1022.6 345,1022.7 346.6,1021.8 348.2,1023.2 349.8,1024.1 351.4,1022.8 353,1023 354.6,1022.6 356.2,1023.3 357.8,1023.2 359.4,1023.2 361,1023.2 362.6,1022.6 364.2,1023.9 365.8,1020.4 367.4,1022.9 369,1023.2 370.6,1022.1 372.2,1022.4 373.8,1018.8 375.4,1024.6 377,1025.7 378.6,1024.2 380.2,1023.2 381.8,1022.5 383.4,1023.7 385,1019.2 386.6,1021.7 388.2,1023.3 389.8,1019.4 391.4,1021 393,1024.3 394.6,1021.1 396.2,1023 397.8,1023.5 399.4,1021.2 401,1020.4 402.6,1022.7 404.2,1023.5 405.8,1019.4 407.4,1020.6 409,1023.6 410.6,1023.4 412.2,1022.6 413.8,1023.4 415.4,1022.5 417,1022.3 418.6,1020.7 420.2,1019.7 421.8,1022.7 423.4,1022.7 425,1021.1 426.6,1020.5 428.2,1021.1 429.8,1024.6 431.4,1022.9 433,1020.8 434.6,1022.4 436.2,1024.1 437.8,1024.2 439.4,1022.3 441,1021.4 442.6,1021.2 444.2,1023.3 445.8,1022 447.4,1023.4 449,1023.6 450.6,1023.2 452.2,1019.4 453.8,1024.2 455.4,1021.5 457,1024.2 458.6,1022.9 460.2,1026.1 461.8,1023.8 463.4,1023.5 465,1023.1 466.6,1023.4 468.2,1023.2 469.8,1023.2 471.4,1023.6 473,1021.8 474.6,1023.2 476.2,1022.7 477.8,1021.1 479.4,1023.3 481,1023.3 482.6,1024.1 484.2,1024.2 485.8,1019 487.4,1021.6 489,1022.5 490.6,1022.2 492.2,1022.9 493.8,1024 495.4,1026.8 497,1022 498.6,1023.9 500.2,1023.3 501.8,1023.4 503.4,1021.5 505,1023 506.6,1023.8 508.2,1021.8 509.8,1022.5 511.4,1023.7 513,1022.1 514.6,1022.3 516.2,1024.2 517.8,1023.8 519.4,1022.3 521,1023.3 522.6,1023.5 524.2,1022.5 525.8,1023.3 527.4,1021.6 529,1024 530.6,1024.3 532.2,1022.8 533.8,1024 535.4,1023.7 537,1020.9 538.6,1022.7 540.2,1022.2 541.8,1023.3 543.4,1023.5 545,1023.7 546.6,1023.6 548.2,1022.5 549.8,1021.9 551.4,1023.3 553,1022.6 554.6,1024.1 556.2,1023 557.8,1023.9 559.4,1022.2 561,1024.8 562.6,1025.4 564.2,1027.9 565.8,1025.2 567.4,1024.2 569,1024.6 570.6,1025 572.2,1024 573.8,1025.3 575.4,1024.2 577,1025.5 578.6,1025.3 580.2,1022.6 581.8,1023.9 583.4,1023.1 585,1023.4 586.6,1027.9 588.2,1025.4 589.8,1025.4 591.4,1024.3 593,1025 594.6,1024.5 596.2,1022.6 597.8,1025.1 599.4,1024.4 601,1024.8 602.6,1025.3 604.2,1024 605.8,1024.4 607.4,1024.1 609,1023.6 610.6,1024.4 612.2,1025.2 613.8,1023.3 615.4,1024 617,1025.4 618.6,1024.1 620.2,1025.2 621.8,1024.8 623.4,1024.7 625,1025 626.6,1025 628.2,1024.8 629.8,1024.3 631.4,1025.4 633,1025.2 634.6,1024.9 636.2,1025 637.8,1024.2 639.4,1024.9 641,1024.1 642.6,1024.3 644.2,1024.9 645.8,1025.1 647.4,1024.5 649,1024.7 650.6,1025.5 652.2,1023.5 653.8,1025.5 655.4,1024.4 657,1024 658.6,1024.3 660.2,1024.8 661.8,1025.4 663.4,1022.7 665,1024.4 666.6,1024.6 668.2,1025 669.8,1027.2 671.4,1024.5 673,1024.4 674.6,1025 676.2,1024.6 677.8,1025.3 679.4,1025.2 681,1025 682.6,1025.1 684.2,1022.9 685.8,1024.8 687.4,1025 689,1025 690.6,1024.5 692.2,1024.1 693.8,1023.8 695.4,1024.1 697,1023.4 698.6,1025.1 700.2,1025.4 701.8,1024.9 703.4,1024.4 705,1024.7 706.6,1025.3 708.2,1026.4 709.8,1025.5 711.4,1024.6 713,1024.9 714.6,1025.4 716.2,1025.1 717.8,1025.3 719.4,1025.2 721,1022.2 722.6,1024.7 724.2,1024.5 725.8,1024.9 727.4,1024.8 729,1024.9 730.6,1024.4 732.2,1025.3 733.8,1025 735.4,1026.6 737,1025.1 738.6,1024.8 740.2,1025.5 741.8,1025.4 743.4,1024.6 745,1024.7 746.6,1024.2 748.2,1024.4 749.8,1025.2 751.4,1024.3 753,1025.3 754.6,1025.5 756.2,1023.9 757.8,1024.4 759.4,1025.3 761,1024.3 762.6,1024.6 764.2,1024.6 765.8,1023.2 767.4,1025.3 769,1024.9 770.6,1025 772.2,1028.4 773.8,1025.3 775.4,1025.4 777,1024.9 778.6,1025.1 780.2,1025.1 781.8,1024.6 783.4,1024.7 785,1025.3 786.6,1022.9 788.2,1025.3 789.8,1024.8 791.4,1025 793,1025.1 794.6,1024.8 796.2,1024.2 797.8,1023.9 799.4,1024.3 801,1027 802.6,1025.4 804.2,1024.4 805.8,1023.8 807.4,1028.3 809,1024.5 810.6,1025.4 812.2,1024.2 813.8,1024.8 815.4,1024.7 817,1023.7 818.6,1025.3 820.2,1025.1 821.8,1025.3 823.4,1024 825,1025.4 826.6,1023.9 828.2,1023.8 829.8,1024.2 831.4,1025.2 833,1024.6 834.6,1025.4 836.2,1023.7 837.8,1024.9 839.4,1024.7 841,1027.4 842.6,1024.6 844.2,1024.9 845.8,1025 847.4,1025 849,1024.8 850.6,1025.1 852.2,1024.9 853.8,1024.3 855.4,1025.1 857,1025.1 858.6,1024.9 860.2,1024.4 861.8,1024.1 863.4,1024.7 865,1024.8 866.6,1024.7 868.2,1024.1 869.8,1028.1 871.4,1025.3 873,1024.3 874.6,1023.5 876.2,1024.1 877.8,1025 879.4,1023.8 881,1025.3 882.6,1024.8 884.2,1025.5 885.8,1024.6 887.4,1024.1 889,1024.9 890.6,1024.4 892.2,1024.8 893.8,1025.3 895.4,1024.2 897,1025.3 898.6,1023.3 900.2,1024.4 901.8,1027.3 903.4,1024.6 905,1025.2 906.6,1025.4 908.2,1024 909.8,1025.4 911.4,1024.2 913,1024.8 914.6,1024.8 916.2,1024.7 917.8,1025.4 919.4,1025.3 921,1027.8 922.6,1024.2 924.2,1024.5 925.8,1023.8 927.4,1025.2 929,1025.2 930.6,1024.3 932.2,1028.4 933.8,1025.3 935.4,1024.3 937,1025.2 938.6,1025.4 940.2,1025.1 941.8,1024.7 943.4,1024.5 945,1027.6 946.6,1025.3 948.2,1025.1 949.8,1023.7 951.4,1025.4 953,1025.4 954.6,1024.6 956.2,1024.3 957.8,1024.1 959.4,1024.4 961,1024.2 962.6,1024.9 964.2,1024.7 965.8,1023.3 967.4,1024.3 969,1025.3 970.6,1025.3 972.2,1025 973.8,1025.3 975.4,1024.7 977,1025 978.6,1025.5 980.2,1024.6 981.8,1025.2 983.4,1027.6 985,1024.3 986.6,1025.4 988.2,1023.5 989.8,1024.8 991.4,1023.9 993,1024.3 994.6,1023.7 996.2,1025.3 997.8,1024.8 999.4,1024.9 1001,1024.7 1002.6,1024.4 1004.2,1025 1005.8,1024.7 1007.4,1025.4 1009,1025.5 1010.6,1023.7 1012.2,1025.3 1013.8,1024.2 1015.4,1024.8 1017,1024.3 1018.6,1025.4 1020.2,1027.4 1021.8,1024.3 1023.4,1024 1025,1025 1026.6,1024.8 1028.2,1025.2 1029.8,1023.2 1031.4,1024.6 1033,1025.1 1034.6,1025.3 1036.2,1025.3 1037.8,1024.5 1039.4,1025 1041,1025 1042.6,1024.8 1044.2,1024.8 1045.8,1025.4 1047.4,1024.8 1049,1024.6 1050.6,1024.9 1052.2,1025.5 1053.8,1024.8 1055.4,1024.6 1057,1024.3 1058.6,1023.8 1060.2,1025.5 1061.8,1024.7 1063.4,1023.9 1065,1024.1 1066.6,1025.2 1068.2,1024.8 1069.8,1025.1 1071.4,1023.9 1073,1024.5 1074.6,1025.2 1076.2,1025.4 1077.8,1023.8 1079.4,1027.1 1081,1024.9 1082.6,1024.4 1084.2,1023.6 1085.8,1025.5 1087.4,1025.1 1089,1025.1 1090.6,1025.5 1092.2,1024.8 1093.8,1025.1 1095.4,1023.9 1097,1024.3 1098.6,1025 1100.2,1024.9 1101.8,1024.8 1103.4,1025.4 1105,1024.9 1106.6,1025.2 1108.2,1024.7 1109.8,1023.2 1111.4,1028.3 1113,1024.9 1114.6,1025.4 1116.2,1024.7 1117.8,1024.2 1119.4,1025.1 1121,1025.2 1122.6,1023.2 1124.2,1025.2 1125.8,1024.7 1127.4,1025.2 1129,1025.4 1130.6,1027.3 1132.2,1025.3 1133.8,1024.9 1135.4,1024.5 1137,1024.5 1138.6,1024.2 1140.2,1025.2 1141.8,1024.7 1143.4,1023.5 1145,1025.2 1146.6,1023.8 1148.2,1025 1149.8,1023 1151.4,1024.5 1153,1025 1154.6,1025.5 1156.2,1025 1157.8,1024.6 1159.4,1024.6 1161,1024 1162.6,1025 1164.2,1025.4 1165.8,1023.6 1167.4,1023.8 1169,1023.4 1170.6,1024.5 1172.2,1025.1 1173.8,1027.4 1175.4,1025.5 1177,1025.4 1178.6,1023.9 1180.2,1025.3 1181.8,1024.1 1183.4,1024.8 1185,1025.3 1186.6,1023.3 1188.2,1024.7 1189.8,1025.3 1191.4,1028.2 1193,1025.4 1194.6,1024.8 1196.2,1024 1197.8,1024.4 1199.4,1024 1201,1025 1202.6,1025.2 1204.2,1028 1205.8,1024.5 1207.4,1027.3 1209,1024.6 1210.6,1028.2 1212.2,1025 1213.8,1025.3 1215.4,1024.7 1217,1024.4 1218.6,1025.2 1220.2,1024.5 1221.8,1025 1223.4,1024.9 1225,1025.1 1226.6,1025.3 1228.2,1025.1 1229.8,1024.6 1231.4,1025.4 1233,1025 1234.6,1025.3 1236.2,1024.5 1237.8,1024.8 1239.4,1025.4 1241,1024.4 1242.6,1027.3 1244.2,1024.8 1245.8,1025.2 1247.4,1023.8 1249,1025.4 1250.6,1025.1 1252.2,1025.1 1253.8,1025.2 1255.4,1023.3 1257,1025.5 1258.6,1025.4 1260.2,1024.5 1261.8,1024.1 1263.4,1025.1 1265,1024.6 1266.6,1023.1 1268.2,1025 1269.8,1024.4 1271.4,1024.6 1273,1025.3 1274.6,1025.1 1276.2,1025.1 1277.8,1025.5 1279.4,1025.1 1281,1024.9 1282.6,1025.4 1284.2,1024.2 1285.8,1023.7 1287.4,1024.6 1289,1022.8 1290.6,1024.1 1292.2,1024.5 1293.8,1025.3 1295.4,1024.5 1297,1025.1 1298.6,1024.7 1300.2,1025.4 1301.8,1024.3 1303.4,1024.9 1305,1024.6 1306.6,1025.3 1308.2,1024.4 1309.8,1027.9 1311.4,1025 1313,1023.4 1314.6,1024.4 1316.2,1025 1317.8,1024.5 1319.4,1024.6 1321,1024.4 1322.6,1023.9 1324.2,1025 1325.8,1022.9 1327.4,1025.3 1329,1025.3 1330.6,1025.2 1332.2,1024.6 1333.8,1025.1 1335.4,1025 1337,1025.4 1338.6,1027.9 1340.2,1025.5 1341.8,1025.4 1343.4,1025.2 1345,1024.9 1346.6,1025.5 1348.2,1024.1 1349.8,1025.2 1351.4,1025.1 1353,1025.1 1354.6,1025.3 1356.2,1024.8 1357.8,1024.2 1359.4,1025.1 1361,1025.4 1362.6,1027.7 1364.2,1024.7 1365.8,1025.4 1367.4,1024.5 1369,1024.8 1370.6,1025.3 1372.2,1025.5 1373.8,1024.4 1375.4,1025.3 1377,1025.3 1378.6,1024.7 1380.2,1024.1 1381.8,1025.5 1383.4,1024.4 1385,1025.1 1386.6,1025.5 1388.2,1025.5 1389.8,1027.7 1391.4,1025.5 1393,1024 1394.6,1025.1 1396.2,1025.1 1397.8,1024.8 1399.4,1024.9 1401,1024.7 1402.6,1024.9 1404.2,1023.1 1405.8,1024.6 1407.4,1024.2 1409,1023.9 1410.6,1025.3 1412.2,1025.2 1413.8,1026.9 1415.4,1025 1417,1024.2 1418.6,1025.3 1420.2,1028.5 1421.8,1024.3 1423.4,1024.9 1425,1023.7 1426.6,1024.1 1428.2,1024.7 1429.8,1025.5 1431.4,1024.3 1433,1025.2 1434.6,1028.3 1436.2,1024.9 1437.8,1024.9 1439.4,1023.3 1441,1028 1442.6,1024.4 1444.2,1025.2 1445.8,1024.8 1447.4,1025.3 1449,1025.4 1450.6,1025 1452.2,1025.3 1453.8,1025.1 1455.4,1024.2 1457,1024.6 1458.6,1025.4 1460.2,1025.1 1461.8,1027.3 1463.4,1024.6 1465,1025.2 1466.6,1025 1468.2,1024.3 1469.8,1025.3 1471.4,1022.5 1473,1025.2 1474.6,1025.2 1476.2,1023.2 1477.8,1025 1479.4,1023.3 1481,1022.4 1482.6,1024.9 1484.2,1024 1485.8,1023.9 1487.4,1025 1489,1024.9 1490.6,1025.4 1492.2,1024.7 1493.8,1025.1 1495.4,1024.5 1497,1024.8 1498.6,1024.6 1500.2,1024.2 1501.8,1022.3 1503.4,1024.7 1505,1024.7 1506.6,1024.7 1508.2,1024.2 1509.8,1023.3 1511.4,1025 1513,1023.4 1514.6,1025.5 1516.2,1023.1 1517.8,1025.2 1519.4,1025.4 1521,1025.2 1522.6,1023.7 1524.2,1024.2 1525.8,1023.9 1527.4,1024.8 1529,1025.1 1530.6,1024.5 1532.2,1024.3 1533.8,1024.5 1535.4,1024.2 1537,1025.2 1538.6,1025.2 1540.2,1024.1 1541.8,1024.7 1543.4,1023.8 1545,1024.3 1546.6,1024.6 1548.2,1023.4 1549.8,1025.3 1551.4,1024.9 1553,1024.9 1554.6,1023 1556.2,1025.4 1557.8,1024.5 1559.4,1024.5 1561,1025.5 1562.6,1023.7 1564.2,1025.4 1565.8,1025.3 1567.4,1024.6 1569,1024.4 1570.6,1024.4 1572.2,1025.1 1573.8,1025 1575.4,1024.2 1577,1024.9 1578.6,1025.1 1580.2,1023.9 1581.8,1024.4 1583.4,1025.3 1585,1025.1 1586.6,1025.1 1588.2,1025.5 1589.8,1024.7 1591.4,1024.5 1593,1023.2 1594.6,1025.5 1596.2,1026.8 1597.8,1025.2 1599.4,1028.2 1601,1025.5 1602.6,1025.3 1604.2,1024.5 1605.8,1024.3 1607.4,1023 1609,1024.6 1610.6,1028.1 1612.2,1023.7 1613.8,1024.7 1615.4,1025.3 1617,1024.2 1618.6,1024.5 1620.2,1023.9 1621.8,1024.8 1623.4,1024.9 1625,1024.9 1626.6,1024.2 1628.2,1025 1629.8,1024.5 1631.4,1025.1 1633,1024.2 1634.6,1025 1636.2,1025.2 1637.8,1025 1639.4,1025.2 1641,1025.1 1642.6,1026.9 1644.2,1023.7 1645.8,1024.5 1647.4,1024.5 1649,1024.9 1650.6,1024.4 1652.2,1025.4 1653.8,1024.9 1655.4,1028.3 1657,1025.5 1658.6,1024.9 1660.2,1024.5 1661.8,1024.6 1663.4,1024.4 1665,1025.4 1666.6,1024.8 1668.2,1024.3 1669.8,1025.3 1671.4,1025.4 1673,1024.8 1674.6,1025.5 1676.2,1024.5 1677.8,1024.8 1679.4,1025.1 1681,1024 1682.6,1025.3 1684.2,1024.7 1685.8,1025.5 1687.4,1024.8 1689,1025.2 1690.6,1024.9 1692.2,1025.4 1693.8,1024.9 1695.4,1025.3 1697,1025.5 1698.6,1024.5 1700.2,1024.1 1701.8,1025.3 1703.4,1024.3 1705,1024.9 1706.6,1024.4 1708.2,1024.6 1709.8,1027.4 1711.4,1024.8 1713,1024.4 1714.6,1025.2 1716.2,1024.6 1717.8,1024.7 1719.4,1025.3 1721,1023.7 1722.6,1028.1 1724.2,1024.8 1725.8,1025.1 1727.4,1024.3 1729,1024.9 1730.6,1025.3 1732.2,1024.9 1733.8,1025 1735.4,1024.5 1737,1025.2 1738.6,1025.1 1740.2,1028.4 1741.8,1025 1743.4,1024.6 1745,1025.3 1746.6,1024.7 1748.2,1023.8 1749.8,1025.3 1751.4,1021.9 1753,1028.2 1754.6,1025.4 1756.2,1025 1757.8,1025.5 1759.4,1025.3 1761,1025.2 1762.6,1024.6 1764.2,1024.2 1765.8,1025.2 1767.4,1027.3 1769,1025.2 1770.6,1024.3 1772.2,1025.3 1773.8,1022.3 1775.4,1024.2 1777,1024 1778.6,1025.4 1780.2,1024.1 1781.8,1025.3 1783.4,1024.8 1785,1025.2 1786.6,1025.1 1788.2,1024.9 1789.8,1024.4 1791.4,1025.2 1793,1024.7 1794.6,1024.7 1796.2,1024.7 1797.8,1025.4 1799.4,1025.2 1801,1025.4 1802.6,1025 1804.2,1025.1 1805.8,1024.8 1807.4,1025.5 1809,1025.5 1810.6,1024 1812.2,1024.1 1813.8,1023.5 1815.4,1025.1 1817,1025.1 1818.6,1024.6 1820.2,1023.4 1821.8,1023.9 1823.4,1025.1 1825,1025.4 1826.6,1024.4 1828.2,1027.4 1829.8,1024.5 1831.4,1024.9 1833,1024.7 1834.6,1024.3 1836.2,1025.3 1837.8,1023.2 1839.4,1024.6 1841,1024.4 1842.6,1025.1 1844.2,1024.5 1845.8,1025.5 1847.4,1024.6 1849,1024.3 1850.6,1025.3 1852.2,1024.8 1853.8,1024.7 1855.4,1024.9 1857,1024.3 1858.6,1024.8 1860.2,1024.1 1861.8,1025.2 1863.4,1024.5 1865,1025.4 1866.6,1024.9 1868.2,1025.2 1869.8,1025 1871.4,1024 1873,1025.3 1874.6,1023.6 1876.2,1024.2 1877.8,1025.3 1879.4,1025.4 1881,1023.4 1882.6,1023.9 1884.2,1025.2 1885.8,1025.4 1887.4,1025 1889,1025.4 1890.6,1025.2 1892.2,1024.2 1893.8,1025.4 1895.4,1023.9 1897,1025 1898.6,1027.9 1900.2,1025.3 1901.8,1025 1903.4,1024.2 1905,1025 1906.6,1025 1908.2,1024.9 1909.8,1025.2 1911.4,1028.4 1913,1025.1 1914.6,1025.4 1916.2,1025.2 1917.8,1024.3 1919.4,1025.4 1921,1024 1922.6,1025.5 1924.2,1023.7 1925.8,1024 1927.4,1025.3 1929,1025.3 1930.6,1024.9 1932.2,1025.2 1933.8,1024.5 1935.4,1024.8 1937,1025.2 1938.6,1025.5 1940.2,1025.3 1941.8,1023.3 1943.4,1025.2 1945,1024.5 1946.6,1023.4 1948.2,1025.3 1949.8,1025.2 1951.4,1025.3 1953,1025.3 1954.6,1023.7 1956.2,1024.4 1957.8,1025.4 1959.4,1025 1961,1024.7 1962.6,1023.6 1964.2,1025 1965.8,1023.9 1967.4,1025.1 1969,1025.4 1970.6,1025.3 1972.2,1024.9 1973.8,1025.1 1975.4,1024.2 1977,1024.2 1978.6,1025.2 1980.2,1025.5 1981.8,1024.4 1983.4,1025.1 1985,1024.2 1986.6,1024.8 1988.2,1024.8 1989.8,1024.2 1991.4,1024.1 1993,1024.6 1994.6,1023.7 1996.2,1023.8 1997.8,1025 1999.4,1023.2 2001,1025.4 2002.6,1025.2 2004.2,1024.5 2005.8,1028.2 2007.4,1024.3 2009,1025.1 2010.6,1024.6 2012.2,1027.6 2013.8,1025.2 2015.4,1025.2 2017,1025.3 2018.6,1023.3 2020.2,1025.5 2021.8,1025.4 2023.4,1025.3 2025,1028.2 2026.6,1023.3 2028.2,1024.7 2029.8,1024.2 2031.4,1023.5 2033,1025.4 2034.6,1024.3 2036.2,1025.3 2037.8,1024.4 2039.4,1025.5 2041,1024.5 2042.6,1025.4 2044.2,1023.5 2045.8,1025.4 2047.4,1026.7 2049,1024 2050.6,1024.3 2052.2,1027.6 2053.8,1024.2 2055.4,1024.9 2057,1024.9 2058.6,1025.3 2060.2,1023.9 2061.8,1028.1 2063.4,1025.2 2065,1025 2066.6,1025.4 2068.2,1025 2069.8,1025.2 2071.4,1023.9 2073,1025.5 2074.6,1024.1 2076.2,1024.6 2077.8,1024.5 2079.4,1023.6 2081,1023.6 2082.6,1024.4 2084.2,1024.4 2085.8,1025.3 2087.4,1028.4 2089,1025.4 2090.6,1023.6 2092.2,1023.8 2093.8,1025 2095.4,1025.1 2097,1024 2098.6,1024.8 2100.2,1025.4 2101.8,1025 2103.4,1027.8 2105,1024.8 2106.6,1025.2 2108.2,1025.3 2109.8,1024.4 2111.4,1025.4 2113,1025.1 2114.6,1024 2116.2,1025.2 2117.8,1025 2119.4,1024.2 2121,1024.4 2122.6,1024.9 2124.2,1024.3 2125.8,1025 2127.4,1025.3 2129,1024.7 2130.6,1024.6 2132.2,1024.7 2133.8,1025.1 2135.4,1025.2 2137,1025.1 2138.6,1024.7 2140.2,1024.6 2141.8,1024.9 2143.4,1025.2 2145,1025.1 2146.6,1025.3 2148.2,1025.4 2149.8,1024.6 2151.4,1023.9 2153,1024.7 2154.6,1024.4 2156.2,1025.3 2157.8,1025.4 2159.4,1025.5 2161,1025 2162.6,1024.6 2164.2,1023.8 2165.8,1024.4 2167.4,1025 2169,1024.8 2170.6,1025.1 2172.2,1023.8 2173.8,1024 2175.4,1028 2177,1022.9 2178.6,1024 2180.2,1025.1 2181.8,1024.6 2183.4,1025 2185,1023.9 2186.6,1025.4 2188.2,1025.1 2189.8,1024.3 2191.4,1024.2 2193,1024.4 2194.6,1025.3 2196.2,1025.4 2197.8,1025.5 2199.4,1025.1 2201,1023.7 2202.6,1024 2204.2,1024.7 2205.8,1024.8 2207.4,1025.3 2209,1024.6 2210.6,1025.1 2212.2,1024.7 2213.8,1026.7 2215.4,1023.1 2217,1025 2218.6,1028.2 2220.2,1025.5 2221.8,1024.5 2223.4,1024.3 2225,1028.2 2226.6,1025.3 2228.2,1024.6 2229.8,1022.6 2231.4,1025 2233,1025.5" fill="none" stroke="#ff0000" stroke-width="3.0" stroke-linejoin="round"/>
<line x1="202.6" y1="942.5" x2="2234.6" y2="942.5" stroke="#0000ff" stroke-width="4.1" stroke-dasharray="4.1 3.9"/>
</g>
<g clip-path="url(#c3)">
<polyline points="202.6,1184.9 203.9,1184.3 205.2,1182.4 206.5,1184.9 207.8,1184.1 209.1,1183.8 210.4,1181.6 211.7,1183.8 213,1184.4 214.3,1183.5 215.6,1183.5 216.9,1181.1 218.2,1184.2 219.5,1183.3 220.8,1180.9 222.1,1184 223.4,1181.5 224.7,1182.9 226,1184.6 227.3,1182 228.6,1183.4 229.9,1184.8 231.2,1182.9 232.5,1184.1 233.8,1183.8 235.1,1184.1 236.4,1184.4 237.7,1184.2 239,1183.8 240.3,1180.3 241.6,1184.7 242.9,1179.5 244.2,1179 245.5,1182.9 246.8,1184.4 248.1,1184.3 249.4,1182.4 250.7,1182.6 252,1182 253.3,1181.8 254.6,1183.5 255.9,1184.8 257.2,1183.8 258.5,1183.9 259.8,1184.1 261.1,1182.9 262.4,1180.7 263.7,1184.6 265,1183.5 266.3,1183.1 267.6,1182.2 268.9,1183.8 270.2,1183.4 271.5,1180.6 272.8,1179.1 274.1,1184.8 275.4,1183.5 276.7,1183.4 278,1183.2 279.3,1182.9 280.6,1181.2 281.9,1181.2 283.2,1178.8 284.5,1184.4 285.8,1184 287.1,1181.2 288.4,1183.8 289.7,1184.1 291,1184.5 292.3,1179.6 293.6,1180.9 294.9,1184.2 296.2,1184.8 297.5,1182.8 298.8,1184.1 300.1,1184.7 301.4,1183 302.7,1184.9 304,1183.4 305.3,1183.3 306.6,1183.9 307.9,1184.3 309.2,1184.8 310.5,1183 311.8,1184.5 313.1,1182.2 314.4,1183.8 315.7,1181.4 317,1182.6 318.3,1183.5 319.6,1183.7 320.9,1184.9 322.2,1182.9 323.5,1184.8 324.8,1184.6 326.1,1181.3 327.4,1181.9 328.7,1184.8 330,1184 331.3,1182.1 332.6,1183.7 333.9,1184.4 335.2,1183.8 336.5,1184.8 337.8,1182.5 339.1,1182.1 340.4,1182.9 341.7,1182.6 343,1183.7 344.3,1184.2 345.6,1182.8 346.9,1182.4 348.2,1184 349.5,1182.7 350.8,1183 352.1,1183.7 353.4,1183.1 354.7,1182.7 356,1179.9 357.3,1183.4 358.6,1184 359.9,1180.6 361.2,1182.2 362.5,1182.8 363.8,1184.4 365.1,1184.3 366.4,1182.5 367.7,1179.6 369,1184.3 370.3,1180.4 371.6,1184.7 372.9,1182.2 374.2,1183.1 375.5,1182 376.8,1183.6 378.1,1184.7 379.4,1181.8 380.7,1182.5 382,1182.7 383.3,1184.3 384.6,1181.5 385.9,1183.7 387.2,1182.8 388.5,1184.4 389.8,1182.2 391.1,1184.2 392.4,1183.6 393.7,1184.6 395,1183.2 396.3,1183.5 397.6,1184.8 398.9,1182.9 400.2,1182.5 401.5,1184.5 402.8,1182.6 404.1,1182.2 405.4,1182.7 406.7,1183 408,1183.3 409.3,1183.9 410.6,1183.5 411.9,1184.3 413.2,1183.3 414.5,1183.9 415.8,1183.2 417.1,1184.3 418.4,1183.1 419.7,1181.6 421,1182.5 422.3,1182.3 423.6,1182.6 424.9,1181.4 426.2,1180.4 427.5,1180.7 428.8,1183.1 430.1,1180.9 431.4,1183.2 432.7,1183.5 434,1183.8 435.3,1184.1 436.6,1182.6 437.9,1184.6 439.2,1184.1 440.5,1184.1 441.8,1184.1 443.1,1183.6 444.4,1184.5 445.7,1183.4 447,1182 448.3,1182.8 449.6,1183.9 450.9,1182.9 452.2,1180.9 453.5,1184 454.8,1183.7 456.1,1182.5 457.4,1184.6 458.7,1182.6 460,1183.1 461.3,1183 462.6,1182.3 463.9,1182.6 465.2,1182.9 466.5,1183.1 467.8,1183.3 469.1,1183 470.4,1182.8 471.7,1182.3 473,1180.7 474.3,1183.7 475.6,1184.6 476.9,1182.1 478.2,1183.9 479.5,1184.9 480.8,1182 482.1,1183.5 483.4,1181.4 484.7,1181.5 486,1184.3 487.3,1184.1 488.6,1184.9 489.9,1183.2 491.2,1182.5 492.5,1183.7 493.8,1183.8 495.1,1179.9 496.4,1183.4 497.7,1181.3 499,1182.2 500.3,1181.3 501.6,1181.6 502.9,1182.5 504.2,1181.4 505.5,1184 506.8,1182.1 508.1,1184.4 509.4,1183.5 510.7,1182.7 512,1183.7 513.3,1182.8 514.6,1184.5 515.9,1184.8 517.2,1183 518.5,1183.1 519.8,1181.2 521.1,1184.5 522.4,1184.8 523.7,1184.1 525,1184.4 526.3,1184.5 527.6,1184.6 528.9,1184.5 530.2,1184.2 531.5,1184.9 532.8,1184.4 534.1,1184.4 535.4,1184.4 536.7,1184.7 538,1184.4 539.3,1183.8 540.6,1184.8 541.9,1184.8 543.2,1183.8 544.5,1183.8 545.8,1184.4 547.1,1184.4 548.4,1184.8 549.7,1184.8 551,1184.2 552.3,1184.8 553.6,1184.7 554.9,1184.6 556.2,1184.6 557.5,1184.8 558.8,1184 560.1,1184.5 561.4,1184.7 562.7,1184.8 564,1184.7 565.3,1184.4 566.6,1184.6 567.9,1184.5 569.2,1184.9 570.5,1184.8 571.8,1183.9 573.1,1184.5 574.4,1184.5 575.7,1184.7 577,1184.9 578.3,1184.8 579.6,1184.5 580.9,1184.4 582.2,1184.8 583.5,1184.3 584.8,1184.3 586.1,1184.8 587.4,1184.6 588.7,1184.7 590,1184.7 591.3,1184.3 592.6,1184.3 593.9,1184.7 595.2,1184.8 596.5,1184.7 597.8,1184.6 599.1,1184.6 600.4,1183.8 601.7,1184.7 603,1184.9 604.3,1184.7 605.6,1184.1 606.9,1184.4 608.2,1184.6 609.5,1184.4 610.8,1184.4 612.1,1184.4 613.4,1184.4 614.7,1184.8 616,1184 617.3,1184.2 618.6,1184.7 619.9,1184.9 621.2,1184.9 622.5,1184.8 623.8,1184.7 625.1,1184.8 626.4,1184.8 627.7,1184 629,1184.6 630.3,1184.8 631.6,1184.7 632.9,1184.6 634.2,1184 635.5,1184.2 636.8,1183.3 638.1,1184.7 639.4,1184.8 640.7,1184.6 642,1184.2 643.3,1184.9 644.6,1184.9 645.9,1184.6 647.2,1184.8 648.5,1184.6 649.8,1184.9 651.1,1184.1 652.4,1184.6 653.7,1184.4 655,1184 656.3,1184.5 657.6,1184.6 658.9,1184.8 660.2,1184.4 661.5,1184.1 662.8,1184.6 664.1,1184.9 665.4,1184.1 666.7,1184.1 668,1184.5 669.3,1184.9 670.6,1184.7 671.9,1184.6 673.2,1184.1 674.5,1184.3 675.8,1184.4 677.1,1184.8 678.4,1184.4 679.7,1184.8 681,1184.3 682.3,1184.7 683.6,1184.6 684.9,1184.8 686.2,1184.7 687.5,1184.2 688.8,1184.6 690.1,1184.8 691.4,1184.7 692.7,1184.6 694,1184.6 695.3,1184.9 696.6,1184.8 697.9,1184.6 699.2,1184.7 700.5,1184.1 701.8,1184.6 703.1,1184.5 704.4,1184.3 705.7,1184.1 707,1184.6 708.3,1184.6 709.6,1184.3 710.9,1184.8 712.2,1184.8 713.5,1184.7 714.8,1184.7 716.1,1183.8 717.4,1184.2 718.7,1184.7 720,1184.7 721.3,1184.6 722.6,1184.7 723.9,1184.8 725.2,1184.6 726.5,1184.7 727.8,1184.1 729.1,1184.6 730.4,1184.8 731.7,1184.9 733,1184.4 734.3,1183.9 735.6,1184.8 736.9,1184.9 738.2,1184.5 739.5,1184.7 740.8,1184.4 742.1,1184.3 743.4,1184.4 744.7,1184.2 746,1184.9 747.3,1184.7 748.6,1184.6 749.9,1184.8 751.2,1184.7 752.5,1184.6 753.8,1184.8 755.1,1184.5 756.4,1184.8 757.7,1184 759,1184.4 760.3,1184.5 761.6,1184.8 762.9,1184.6 764.2,1184.7 765.5,1184.6 766.8,1184.5 768.1,1184.7 769.4,1184.1 770.7,1184.8 772,1184.5 773.3,1184.6 774.6,1184.1 775.9,1184.2 777.2,1184.7 778.5,1183.8 779.8,1184.3 781.1,1184.6 782.4,1183.9 783.7,1184.8 785,1184.7 786.3,1184.2 787.6,1184.3 788.9,1184.5 790.2,1184.8 791.5,1184.2 792.8,1184.5 794.1,1184.7 795.4,1184.2 796.7,1183.9 798,1184.5 799.3,1184.7 800.6,1184.6 801.9,1184.9 803.2,1183.8 804.5,1184.4 805.8,1184.5 807.1,1184.2 808.4,1184.7 809.7,1184.9 811,1184.7 812.3,1184.4 813.6,1184.6 814.9,1183.8 816.2,1184.4 817.5,1184.1 818.8,1184.7 820.1,1184.7 821.4,1184.3 822.7,1184.4 824,1183.9 825.3,1184.3 826.6,1184.7 827.9,1183.8 829.2,1184.2 830.5,1184.4 831.8,1184.9 833.1,1184.7 834.4,1184.5 835.7,1184 837,1184.7 838.3,1184.7 839.6,1184.8 840.9,1184.8 842.2,1184.6 843.5,1184.8 844.8,1184.7 846.1,1184.6 847.4,1184.5 848.7,1184.8 850,1184.8 851.3,1183.6 852.6,1184.9 853.9,1184.5 855.2,1184.4 856.5,1184.4 857.8,1184.5 859.1,1184.9 860.4,1184.1 861.7,1184.5 863,1184.9 864.3,1184.7 865.6,1184.9 866.9,1183.5 868.2,1184.5 869.5,1184.9 870.8,1184.2 872.1,1184.5 873.4,1184.6 874.7,1183.6 876,1184.7 877.3,1184.7 878.6,1184.7 879.9,1183.6 881.2,1184.7 882.5,1183.6 883.8,1184.9 885.1,1184.9 886.4,1184.5 887.7,1184.9 889,1184.5 890.3,1184.3 891.6,1184.8 892.9,1184.7 894.2,1184.1 895.5,1184.1 896.8,1184.7 898.1,1184.7 899.4,1184.9 900.7,1183.6 902,1184.3 903.3,1184.3 904.6,1184.9 905.9,1184.2 907.2,1184.9 908.5,1184.8 909.8,1184.5 911.1,1184.7 912.4,1184.8 913.7,1184.5 915,1184.5 916.3,1184.8 917.6,1184.8 918.9,1184.5 920.2,1183.9 921.5,1184.6 922.8,1184.9 924.1,1184.7 925.4,1184.4 926.7,1184.5 928,1184.5 929.3,1184.9 930.6,1184.4 931.9,1183.7 933.2,1184.4 934.5,1184.3 935.8,1184.2 937.1,1184.6 938.4,1184.9 939.7,1184.1 941,1184.8 942.3,1184.6 943.6,1184.8 944.9,1184 946.2,1184.5 947.5,1184.3 948.8,1184.8 950.1,1184 951.4,1184.7 952.7,1184.8 954,1184.2 955.3,1184.3 956.6,1184.4 957.9,1184 959.2,1183.6 960.5,1184.3 961.8,1184 963.1,1184.3 964.4,1184.2 965.7,1184.4 967,1184.5 968.3,1184.3 969.6,1184.9 970.9,1184.1 972.2,1184.5 973.5,1184.9 974.8,1183.9 976.1,1184.6 977.4,1184.6 978.7,1184.3 980,1183.7 981.3,1184.6 982.6,1184.5 983.9,1184.7 985.2,1184.5 986.5,1184.1 987.8,1183.6 989.1,1184.7 990.4,1184.9 991.7,1184.1 993,1184.6 994.3,1184.5 995.6,1184.5 996.9,1184.6 998.2,1184.5 999.5,1184.1 1000.8,1184.2 1002.1,1184.5 1003.4,1183.9 1004.7,1184.6 1006,1184.8 1007.3,1184 1008.6,1184.1 1009.9,1184.6 1011.2,1184.6 1012.5,1184.8 1013.8,1184.4 1015.1,1184.7 1016.4,1184.8 1017.7,1184.5 1019,1184.9 1020.3,1184.8 1021.6,1184.1 1022.9,1183.8 1024.2,1184.5 1025.5,1184 1026.8,1184.6 1028.1,1184.4 1029.4,1184.2 1030.7,1184.1 1032,1184.4 1033.3,1184.5 1034.6,1183.7 1035.9,1184.4 1037.2,1184.9 1038.5,1184.6 1039.8,1184.5 1041.1,1184.8 1042.4,1184.6 1043.7,1184.3 1045,1184.2 1046.3,1184.3 1047.6,1183.9 1048.9,1183.9 1050.2,1184.4 1051.5,1184.2 1052.8,1184.8 1054.1,1184.5 1055.4,1184.8 1056.7,1184.1 1058,1184.4 1059.3,1184.7 1060.6,1184.4 1061.9,1184.7 1063.2,1184.1 1064.5,1184.7 1065.8,1184.7 1067.1,1184.3 1068.4,1184.4 1069.7,1184.9 1071,1184.8 1072.3,1184 1073.6,1184.6 1074.9,1184.3 1076.2,1184.8 1077.5,1184.1 1078.8,1184.3 1080.1,1184 1081.4,1184.9 1082.7,1184.5 1084,1184.6 1085.3,1184.7 1086.6,1184.8 1087.9,1184.8 1089.2,1184.7 1090.5,1184.4 1091.8,1184.4 1093.1,1184.9 1094.4,1184.5 1095.7,1184.6 1097,1184.8 1098.3,1184.7 1099.6,1184.5 1100.9,1184.8 1102.2,1184.1 1103.5,1184.2 1104.8,1183.4 1106.1,1184.2 1107.4,1184.6 1108.7,1184.6 1110,1184.6 1111.3,1184.8 1112.6,1184.9 1113.9,1184.6 1115.2,1184.6 1116.5,1184.9 1117.8,1184.8 1119.1,1184.7 1120.4,1184.5 1121.7,1184.9 1123,1184.2 1124.3,1184.4 1125.6,1184.8 1126.9,1184.1 1128.2,1184.9 1129.5,1184.8 1130.8,1184.6 1132.1,1184.4 1133.4,1184.2 1134.7,1184.9 1136,1184.3 1137.3,1184.7 1138.6,1184 1139.9,1184.1 1141.2,1184.6 1142.5,1184.8 1143.8,1184.9 1145.1,1184.3 1146.4,1184.7 1147.7,1184 1149,1184.4 1150.3,1184.1 1151.6,1184.2 1152.9,1184.6 1154.2,1184.5 1155.5,1184.6 1156.8,1184.6 1158.1,1184.8 1159.4,1184.3 1160.7,1184.5 1162,1184.7 1163.3,1184.8 1164.6,1184.8 1165.9,1184.1 1167.2,1184.4 1168.5,1184 1169.8,1184.5 1171.1,1184.8 1172.4,1184.2 1173.7,1184.5 1175,1184.2 1176.3,1184.1 1177.6,1184.4 1178.9,1184.4 1180.2,1184.7 1181.5,1184 1182.8,1184.2 1184.1,1184.8 1185.4,1184.3 1186.7,1184.4 1188,1184.3 1189.3,1184.3 1190.6,1184.4 1191.9,1184.8 1193.2,1184.9 1194.5,1184.6 1195.8,1184.4 1197.1,1184.1 1198.4,1184 1199.7,1184.8 1201,1184.1 1202.3,1184.5 1203.6,1184.2 1204.9,1184.4 1206.2,1184.7 1207.5,1184.5 1208.8,1184.6 1210.1,1184.7 1211.4,1184.6 1212.7,1184.7 1214,1184.9 1215.3,1184.5 1216.6,1184.6 1217.9,1184.6 1219.2,1184.7 1220.5,1184.8 1221.8,1184.7 1223.1,1184.6 1224.4,1184.4 1225.7,1184.8 1227,1184.9 1228.3,1184.7 1229.6,1184.7 1230.9,1184.3 1232.2,1184.5 1233.5,1184.6 1234.8,1184.9 1236.1,1184.5 1237.4,1184.8 1238.7,1184 1240,1184.7 1241.3,1184.2 1242.6,1184.1 1243.9,1184.5 1245.2,1184.4 1246.5,1184.8 1247.8,1184.8 1249.1,1184.3 1250.4,1184.1 1251.7,1184.3 1253,1184.5 1254.3,1184.8 1255.6,1184.9 1256.9,1184.4 1258.2,1184.7 1259.5,1184.9 1260.8,1184.3 1262.1,1184.3 1263.4,1184.7 1264.7,1184.2 1266,1184.7 1267.3,1184.2 1268.6,1184.2 1269.9,1184.6 1271.2,1184.5 1272.5,1184.8 1273.8,1184.6 1275.1,1184.3 1276.4,1184.7 1277.7,1184.5 1279,1184.3 1280.3,1184.6 1281.6,1184.6 1282.9,1183.8 1284.2,1183.8 1285.5,1184 1286.8,1184.2 1288.1,1184.7 1289.4,1184 1290.7,1184.2 1292,1184.4 1293.3,1184.2 1294.6,1184.8 1295.9,1184.6 1297.2,1184.8 1298.5,1184.7 1299.8,1184.6 1301.1,1184.5 1302.4,1184.6 1303.7,1184.4 1305,1184.9 1306.3,1184.4 1307.6,1184.1 1308.9,1184.8 1310.2,1183.9 1311.5,1184.2 1312.8,1184.6 1314.1,1184.6 1315.4,1184.9 1316.7,1184.8 1318,1184.8 1319.3,1184.6 1320.6,1184.8 1321.9,1184.5 1323.2,1184.7 1324.5,1184.4 1325.8,1184.5 1327.1,1184.8 1328.4,1184.7 1329.7,1184.5 1331,1184.2 1332.3,1184.9 1333.6,1184.9 1334.9,1184.8 1336.2,1184.3 1337.5,1184.8 1338.8,1184.7 1340.1,1184.6 1341.4,1184.9 1342.7,1184.6 1344,1184.7 1345.3,1184.9 1346.6,1184.4 1347.9,1184.7 1349.2,1184.6 1350.5,1184.5 1351.8,1184.6 1353.1,1184.4 1354.4,1184.3 1355.7,1184.8 1357,1184.7 1358.3,1184.3 1359.6,1184.3 1360.9,1184.2 1362.2,1184.3 1363.5,1184.6 1364.8,1184.2 1366.1,1183.9 1367.4,1184.4 1368.7,1184.4 1370,1184.6 1371.3,1184.7 1372.6,1183.5 1373.9,1184.8 1375.2,1184.9 1376.5,1184.2 1377.8,1184.8 1379.1,1184.1 1380.4,1184.4 1381.7,1183.9 1383,1184.6 1384.3,1184.5 1385.6,1184.9 1386.9,1184.1 1388.2,1184.5 1389.5,1184.6 1390.8,1184.6 1392.1,1184.7 1393.4,1183.7 1394.7,1184.8 1396,1184.8 1397.3,1184.5 1398.6,1184 1399.9,1184.8 1401.2,1184.6 1402.5,1184 1403.8,1184.8 1405.1,1184 1406.4,1184.5 1407.7,1184.4 1409,1184.7 1410.3,1184.8 1411.6,1184.8 1412.9,1184.6 1414.2,1184.3 1415.5,1184.8 1416.8,1184.6 1418.1,1184.3 1419.4,1183.5 1420.7,1184.8 1422,1184.8 1423.3,1184.8 1424.6,1184.6 1425.9,1184.8 1427.2,1184.4 1428.5,1184 1429.8,1184.5 1431.1,1184.4 1432.4,1184.3 1433.7,1184.3 1435,1184.6 1436.3,1184.4 1437.6,1184.8 1438.9,1184.6 1440.2,1184.5 1441.5,1184.1 1442.8,1184.7 1444.1,1184.5 1445.4,1184.9 1446.7,1184.7 1448,1184.4 1449.3,1184.2 1450.6,1184.4 1451.9,1184.5 1453.2,1184.7 1454.5,1184.8 1455.8,1184.2 1457.1,1184.8 1458.4,1184.8 1459.7,1184.1 1461,1184.1 1462.3,1184.2 1463.6,1184.9 1464.9,1184.9 1466.2,1183.6 1467.5,1184.3 1468.8,1184.6 1470.1,1184.7 1471.4,1184.6 1472.7,1184.8 1474,1184.4 1475.3,1184.1 1476.6,1183.8 1477.9,1184.2 1479.2,1184.4 1480.5,1184.8 1481.8,1184.9 1483.1,1184.7 1484.4,1184.5 1485.7,1184.1 1487,1184.6 1488.3,1184.5 1489.6,1184.2 1490.9,1184.2 1492.2,1184.9 1493.5,1184.3 1494.8,1184.6 1496.1,1184.6 1497.4,1184.8 1498.7,1184.9 1500,1184.4 1501.3,1184.6 1502.6,1184.8 1503.9,1184.8 1505.2,1184.8 1506.5,1184.6 1507.8,1184.4 1509.1,1184.8 1510.4,1183.7 1511.7,1184.2 1513,1184.8 1514.3,1184.3 1515.6,1184.8 1516.9,1184.8 1518.2,1184.4 1519.5,1183.8 1520.8,1184.9 1522.1,1184.2 1523.4,1184.7 1524.7,1184.3 1526,1184.5 1527.3,1184.3 1528.6,1184.4 1529.9,1184.4 1531.2,1184.9 1532.5,1184.7 1533.8,1184.3 1535.1,1184 1536.4,1184.3 1537.7,1184.8 1539,1184.3 1540.3,1184.3 1541.6,1184.1 1542.9,1184.3 1544.2,1184.5 1545.5,1184.8 1546.8,1183.8 1548.1,1184 1549.4,1184.6 1550.7,1184.9 1552,1184.6 1553.3,1184.5 1554.6,1184.6 1555.9,1184.7 1557.2,1184.9 1558.5,1184.5 1559.8,1184.7 1561.1,1184.6 1562.4,1184.7 1563.7,1184.6 1565,1184.7 1566.3,1184.7 1567.6,1184.6 1568.9,1184.3 1570.2,1184.7 1571.5,1184.8 1572.8,1184.2 1574.1,1184.6 1575.4,1184.7 1576.7,1184.2 1578,1184.7 1579.3,1184.8 1580.6,1184.4 1581.9,1184.5 1583.2,1184.9 1584.5,1184.4 1585.8,1184.8 1587.1,1184.8 1588.4,1184.6 1589.7,1184.3 1591,1184.6 1592.3,1184.9 1593.6,1184.5 1594.9,1184.5 1596.2,1184.8 1597.5,1184.2 1598.8,1184.8 1600.1,1184.7 1601.4,1184.4 1602.7,1184.4 1604,1184.6 1605.3,1184.6 1606.6,1184.2 1607.9,1184.7 1609.2,1184.5 1610.5,1184.9 1611.8,1183.9 1613.1,1184.5 1614.4,1184.9 1615.7,1184.7 1617,1184.7 1618.3,1184.9 1619.6,1184.4 1620.9,1184.7 1622.2,1184.7 1623.5,1184.7 1624.8,1184.6 1626.1,1184.5 1627.4,1184.5 1628.7,1184.9 1630,1184.8 1631.3,1184.9 1632.6,1184.8 1633.9,1184.5 1635.2,1184.9 1636.5,1184.9 1637.8,1184.9 1639.1,1184.9 1640.4,1184.7 1641.7,1184.5 1643,1184.8 1644.3,1184.3 1645.6,1184.8 1646.9,1184.7 1648.2,1184.6 1649.5,1184.3 1650.8,1184.4 1652.1,1184 1653.4,1184.6 1654.7,1184.8 1656,1184.1 1657.3,1184.5 1658.6,1184.5 1659.9,1183.6 1661.2,1184.5 1662.5,1184.6 1663.8,1184.7 1665.1,1183.9 1666.4,1184.6 1667.7,1184.7 1669,1184.8 1670.3,1184 1671.6,1184.5 1672.9,1184.5 1674.2,1184.9 1675.5,1183.9 1676.8,1184.1 1678.1,1184.6 1679.4,1184.7 1680.7,1184.2 1682,1184.8 1683.3,1184.4 1684.6,1184.7 1685.9,1184.6 1687.2,1184.9 1688.5,1184.1 1689.8,1184.3 1691.1,1184.5 1692.4,1184.7 1693.7,1184.3 1695,1184.8 1696.3,1184.4 1697.6,1184.8 1698.9,1184.9 1700.2,1184.6 1701.5,1184.1 1702.8,1183.9 1704.1,1184.3 1705.4,1184.5 1706.7,1184.6 1708,1184.4 1709.3,1184.9 1710.6,1184.5 1711.9,1184.7 1713.2,1184.4 1714.5,1184.5 1715.8,1184.8 1717.1,1184.9 1718.4,1184.8 1719.7,1184 1721,1183.7 1722.3,1184.9 1723.6,1184.6 1724.9,1184.2 1726.2,1184.2 1727.5,1184.6 1728.8,1184.4 1730.1,1184.2 1731.4,1184.9 1732.7,1184.5 1734,1184.5 1735.3,1184.1 1736.6,1184.6 1737.9,1184.6 1739.2,1184.1 1740.5,1183.7 1741.8,1184.8 1743.1,1184.2 1744.4,1184.8 1745.7,1184.7 1747,1184.5 1748.3,1184.5 1749.6,1184.8 1750.9,1184.7 1752.2,1184.5 1753.5,1184.7 1754.8,1184.2 1756.1,1184.8 1757.4,1183.9 1758.7,1184.5 1760,1184 1761.3,1184.7 1762.6,1184.3 1763.9,1184.8 1765.2,1183.4 1766.5,1184.8 1767.8,1184.6 1769.1,1184.7 1770.4,1184.1 1771.7,1184.2 1773,1184.7 1774.3,1184.9 1775.6,1184.5 1776.9,1184.2 1778.2,1184 1779.5,1184.1 1780.8,1184.3 1782.1,1184.2 1783.4,1184.7 1784.7,1184.6 1786,1184.8 1787.3,1184.7 1788.6,1184.7 1789.9,1184.7 1791.2,1184.4 1792.5,1184.7 1793.8,1184.7 1795.1,1184.5 1796.4,1184.2 1797.7,1184.4 1799,1184.7 1800.3,1184.1 1801.6,1184.6 1802.9,1184.4 1804.2,1184.8 1805.5,1184.3 1806.8,1184.6 1808.1,1184.7 1809.4,1184.6 1810.7,1184.1 1812,1184.2 1813.3,1183.9 1814.6,1184.3 1815.9,1184.9 1817.2,1184.7 1818.5,1183.9 1819.8,1184.7 1821.1,1184.8 1822.4,1184.8 1823.7,1183.9 1825,1184.2 1826.3,1184.7 1827.6,1184.5 1828.9,1184.5 1830.2,1184.2 1831.5,1184.1 1832.8,1184.5 1834.1,1184.7 1835.4,1184.6 1836.7,1184.5 1838,1184.4 1839.3,1184.4 1840.6,1184.4 1841.9,1184.3 1843.2,1184.5 1844.5,1184.8 1845.8,1184.6 1847.1,1184.9 1848.4,1183.9 1849.7,1184.8 1851,1184.5 1852.3,1184.7 1853.6,1184.9 1854.9,1184.8 1856.2,1184.8 1857.5,1184.6 1858.8,1184.2 1860.1,1184.9 1861.4,1184.8 1862.7,1184.8 1864,1184.6 1865.3,1184.2 1866.6,1184.6 1867.9,1184.2 1869.2,1184.7 1870.5,1184.8 1871.8,1184.3 1873.1,1184.3 1874.4,1184.5 1875.7,1184.8 1877,1184.7 1878.3,1184.5 1879.6,1184.7 1880.9,1184.1 1882.2,1183.9 1883.5,1184.9 1884.8,1184.3 1886.1,1184.3 1887.4,1184.4 1888.7,1184.8 1890,1184 1891.3,1183.7 1892.6,1184.7 1893.9,1184.7 1895.2,1184.7 1896.5,1184.5 1897.8,1184.6 1899.1,1184.7 1900.4,1184.5 1901.7,1184.8 1903,1184.5 1904.3,1183.8 1905.6,1184.6 1906.9,1184.8 1908.2,1184.6 1909.5,1184 1910.8,1184.9 1912.1,1184.7 1913.4,1184.3 1914.7,1184.5 1916,1183.8 1917.3,1184.8 1918.6,1184.2 1919.9,1184.8 1921.2,1184.6 1922.5,1184.2 1923.8,1183.8 1925.1,1184.1 1926.4,1184.7 1927.7,1184.7 1929,1184.6 1930.3,1184.3 1931.6,1184.2 1932.9,1184.4 1934.2,1184.9 1935.5,1184.9 1936.8,1184 1938.1,1184.9 1939.4,1184.9 1940.7,1184.8 1942,1184.2 1943.3,1184.9 1944.6,1184.8 1945.9,1183.7 1947.2,1184.3 1948.5,1184.2 1949.8,1184.4 1951.1,1184.8 1952.4,1184.7 1953.7,1184.4 1955,1184.9 1956.3,1184.8 1957.6,1184.2 1958.9,1184.8 1960.2,1184.5 1961.5,1184.1 1962.8,1184.4 1964.1,1184.2 1965.4,1184.6 1966.7,1184.3 1968,1184.3 1969.3,1184.2 1970.6,1184.2 1971.9,1184.4 1973.2,1184.7 1974.5,1184.7 1975.8,1184.8 1977.1,1184.6 1978.4,1184.5 1979.7,1184.5 1981,1184.8 1982.3,1184.8 1983.6,1184.7 1984.9,1184.5 1986.2,1184.6 1987.5,1184.2 1988.8,1184.3 1990.1,1183.7 1991.4,1184.6 1992.7,1184.6 1994,1184.7 1995.3,1184.6 1996.6,1183.8 1997.9,1184.8 1999.2,1184.3 2000.5,1184.6 2001.8,1184.3 2003.1,1184.6 2004.4,1184.7 2005.7,1184.7 2007,1184.8 2008.3,1184.8 2009.6,1184.4 2010.9,1184.3 2012.2,1184.8 2013.5,1183.8 2014.8,1184.4 2016.1,1184.9 2017.4,1184.7 2018.7,1184.6 2020,1184.3 2021.3,1184.7 2022.6,1184.6 2023.9,1184.3 2025.2,1184.4 2026.5,1184.4 2027.8,1184.5 2029.1,1184.6 2030.4,1184.8 2031.7,1184.3 2033,1184.7 2034.3,1184.8 2035.6,1184.5 2036.9,1184.8 2038.2,1184.4 2039.5,1184.7 2040.8,1184.2 2042.1,1184.6 2043.4,1184.8 2044.7,1184.8 2046,1184.5 2047.3,1184 2048.6,1184.5 2049.9,1184.5 2051.2,1184.7 2052.5,1184.4 2053.8,1184.7 2055.1,1184.6 2056.4,1183.6 2057.7,1184.2 2059,1184.6 2060.3,1184.5 2061.6,1184.3 2062.9,1184.6 2064.2,1184.6 2065.5,1184.1 2066.8,1183.8 2068.1,1184.6 2069.4,1183.9 2070.7,1184.2 2072,1184.9 2073.3,1184.8 2074.6,1184.5 2075.9,1184.6 2077.2,1184.7 2078.5,1184.6 2079.8,1184.3 2081.1,1184.8 2082.4,1184.5 2083.7,1184.1 2085,1183.1 2086.3,1184.3 2087.6,1184.6 2088.9,1184.5 2090.2,1184.4 2091.5,1184.2 2092.8,1184.6 2094.1,1184.8 2095.4,1184.9 2096.7,1184.4 2098,1184.6 2099.3,1184.5 2100.6,1184.9 2101.9,1183.2 2103.2,1184.8 2104.5,1184.4 2105.8,1184.3 2107.1,1184.6 2108.4,1184.8 2109.7,1184.7 2111,1184.4 2112.3,1184.9 2113.6,1184.8 2114.9,1184.4 2116.2,1184.5 2117.5,1184.9 2118.8,1184.7 2120.1,1184.5 2121.4,1184.1 2122.7,1184.1 2124,1184.7 2125.3,1184.3 2126.6,1184.9 2127.9,1184.7 2129.2,1184.4 2130.5,1184.5 2131.8,1184.9 2133.1,1184.9 2134.4,1184.7 2135.7,1184.3 2137,1184.6 2138.3,1184.8 2139.6,1184.7 2140.9,1184.3 2142.2,1184.7 2143.5,1184.4 2144.8,1184.2 2146.1,1184 2147.4,1184.4 2148.7,1184.5 2150,1184.5 2151.3,1184.8 2152.6,1184.9 2153.9,1184.7 2155.2,1184.5 2156.5,1183.8 2157.8,1184.7 2159.1,1184.5 2160.4,1184.3 2161.7,1183.5 2163,1184.2 2164.3,1184.3 2165.6,1184.1 2166.9,1184.7 2168.2,1184.7 2169.5,1184.9 2170.8,1184.2 2172.1,1184.4 2173.4,1184.7 2174.7,1183.4 2176,1184.8 2177.3,1184.7 2178.6,1184.5 2179.9,1184.7 2181.2,1184.8 2182.5,1184.9 2183.8,1183.6 2185.1,1184.6 2186.4,1184.2 2187.7,1183.8 2189,1184.5 2190.3,1184.7 2191.6,1184.8 2192.9,1184.2 2194.2,1184 2195.5,1184.4 2196.8,1184.6 2198.1,1184.4 2199.4,1184.5 2200.7,1184.8 2202,1184.3 2203.3,1184.4 2204.6,1184.5 2205.9,1184.6 2207.2,1184.1 2208.5,1184.3 2209.8,1183.9 2211.1,1184.1 2212.4,1184.2 2213.7,1184.4 2215,1184.4 2216.3,1184.9 2217.6,1184.6 2218.9,1184.4 2220.2,1184.8 2221.5,1184.4 2222.8,1184.3 2224.1,1184.7 2225.4,1183.5 2226.7,1183.9 2228,1184.7 2229.3,1184.6 2230.6,1184.7 2231.9,1184.6 2233.2,1184 2234.5,1184.9" fill="none" stroke="#ff0000" stroke-width="1.1" stroke-linejoin="round"/>
<path d="M285.6 1185.5L287.2 1171.4L288.8 1185.5M352.1 1185.5L353.7 1163.4L355.3 1185.5M357.2 1185.5L358.8 1159.7L360.4 1185.5M367.9 1185.5L369.5 1173.6L371.1 1185.5M375.2 1185.5L376.8 1162.6L378.4 1185.5M378.4 1185.5L380 1156.1L381.6 1185.5M383.2 1185.5L384.8 1172.1L386.4 1185.5M387.9 1185.5L389.5 1175.1L391.1 1185.5M413.2 1185.5L414.8 1174.3L416.4 1185.5M417.1 1185.5L418.7 1175.1L420.3 1185.5M425.6 1185.5L427.2 1166.3L428.8 1185.5M434.4 1185.5L436 1166.7L437.6 1185.5M438 1185.5L439.6 1177.3L441.2 1185.5M481.1 1185.5L482.7 1175.1L484.3 1185.5M502.3 1185.5L503.9 1171.1L505.5 1185.5M253.2 1185.5L254.8 1175.8L256.4 1185.5M249.5 1185.5L251.1 1178.3L252.7 1185.5M256.6 1185.5L258.2 1178.3L259.8 1185.5M236 1185.5L237.6 1179.2L239.2 1185.5M294.8 1185.5L296.4 1177.3L298 1185.5M316.5 1185.5L318.1 1178.3L319.7 1185.5M321.9 1185.5L323.5 1179.2L325.1 1185.5M207.9 1185.5L209.5 1178.3L211.1 1185.5M274.4 1185.5L276 1179.7L277.6 1185.5M398.6 1185.5L400.2 1179.5L401.8 1185.5M407.3 1185.5L408.9 1178.3L410.5 1185.5M454.1 1185.5L455.7 1178.3L457.3 1185.5M487 1185.5L488.6 1178.7L490.2 1185.5M497.2 1185.5L498.8 1175.8L500.4 1185.5M2118.5 1185.5L2120.1 1166.8L2121.7 1185.5M2171 1185.5L2172.6 1178.8L2174.2 1185.5M2189.1 1185.5L2190.7 1180L2192.3 1185.5M2233.4 1185.5L2235 1169.3L2236.6 1185.5" fill="#ff0000" stroke="#ff0000" stroke-width="1.2" stroke-linejoin="round"/>
<polyline points="202.6,1184.9 203.9,1185 205.2,1185.3 206.5,1184.1 207.8,1180.4 209.1,1177.5 210.4,1181.6 211.7,1182.3 213,1183.6 214.3,1184.5 215.6,1185.7 216.9,1185.2 218.2,1185.5 219.5,1185.5 220.8,1181.9 222.1,1185.4 223.4,1182.6 224.7,1182.2 226,1183.5 227.3,1182.1 228.6,1185 229.9,1184.5 231.2,1185.2 232.5,1184.8 233.8,1184.8 235.1,1183.7 236.4,1184.5 237.7,1184.1 239,1184.6 240.3,1184.9 241.6,1185.7 242.9,1183 244.2,1184.2 245.5,1185.1 246.8,1184.4 248.1,1182.9 249.4,1185.1 250.7,1185.1 252,1179.8 253.3,1180.1 254.6,1180.3 255.9,1179.8 257.2,1179.8 258.5,1183.9 259.8,1183.9 261.1,1185 262.4,1185.2 263.7,1184.6 265,1184.7 266.3,1183.8 267.6,1184.4 268.9,1181.9 270.2,1184.1 271.5,1185 272.8,1184.2 274.1,1184.5 275.4,1184.9 276.7,1184.4 278,1186.1 279.3,1185.7 280.6,1184.9 281.9,1185.1 283.2,1184.4 284.5,1184.6 285.8,1180.3 287.1,1179.7 288.4,1181.4 289.7,1182.7 291,1184.7 292.3,1183.2 293.6,1184.7 294.9,1181 296.2,1179.6 297.5,1180.8 298.8,1182.7 300.1,1184.5 301.4,1184.3 302.7,1184.9 304,1184 305.3,1183.6 306.6,1184.9 307.9,1184.1 309.2,1184.9 310.5,1185.3 311.8,1182.3 313.1,1184.4 314.4,1184.8 315.7,1184.5 317,1182 318.3,1179.7 319.6,1179.4 320.9,1179.7 322.2,1181.3 323.5,1181.3 324.8,1184.7 326.1,1183 327.4,1183.6 328.7,1183.9 330,1185.3 331.3,1185 332.6,1184 333.9,1184.7 335.2,1183.6 336.5,1186.4 337.8,1185.7 339.1,1185.5 340.4,1185.1 341.7,1184.5 343,1184.7 344.3,1182.8 345.6,1186.2 346.9,1185.1 348.2,1184.5 349.5,1184.8 350.8,1185.2 352.1,1181.1 353.4,1174.5 354.7,1170.9 356,1170.4 357.3,1171.6 358.6,1172.2 359.9,1173 361.2,1180.7 362.5,1183.3 363.8,1182.3 365.1,1184.2 366.4,1183.4 367.7,1178.4 369,1177.8 370.3,1177.8 371.6,1179.6 372.9,1184.3 374.2,1184.7 375.5,1180 376.8,1175.1 378.1,1173 379.4,1173.7 380.7,1175.5 382,1181.8 383.3,1184.3 384.6,1182.5 385.9,1179.5 387.2,1178.3 388.5,1177.1 389.8,1180.3 391.1,1183.8 392.4,1184.8 393.7,1185.1 395,1186 396.3,1184.7 397.6,1184.3 398.9,1182.8 400.2,1185.1 401.5,1184 402.8,1185.1 404.1,1184.5 405.4,1184.6 406.7,1181.6 408,1178.2 409.3,1179 410.6,1179.7 411.9,1182.4 413.2,1184.5 414.5,1182.3 415.8,1180.1 417.1,1180.1 418.4,1178.8 419.7,1179.2 421,1183.1 422.3,1185 423.6,1183.3 424.9,1174.6 426.2,1171.9 427.5,1177.3 428.8,1185.1 430.1,1184.1 431.4,1183.8 432.7,1175 434,1173 435.3,1179.3 436.6,1183.9 437.9,1185.3 439.2,1181.1 440.5,1177.4 441.8,1180.5 443.1,1182.8 444.4,1184.8 445.7,1185.2 447,1184.4 448.3,1184.7 449.6,1184.4 450.9,1183.6 452.2,1183.9 453.5,1183.8 454.8,1184.5 456.1,1184.4 457.4,1183.8 458.7,1185 460,1185.7 461.3,1185.6 462.6,1184.5 463.9,1184.5 465.2,1185.4 466.5,1185.5 467.8,1185.2 469.1,1185 470.4,1185 471.7,1185.5 473,1183.3 474.3,1185.2 475.6,1184.8 476.9,1184.8 478.2,1184.1 479.5,1182.6 480.8,1178.1 482.1,1179.6 483.4,1179.4 484.7,1183 486,1185.4 487.3,1184.9 488.6,1185.2 489.9,1181 491.2,1183.4 492.5,1184.2 493.8,1185.2 495.1,1183.5 496.4,1183.6 497.7,1185.3 499,1185.4 500.3,1181.1 501.6,1176.5 502.9,1178.2 504.2,1176.2 505.5,1180.7 506.8,1185.4 508.1,1183.4 509.4,1184.2 510.7,1184.3 512,1183.5 513.3,1183.7 514.6,1184.6 515.9,1184.5 517.2,1184.2 518.5,1183.4 519.8,1184.1 521.1,1185.9 522.4,1185.6 523.7,1185.3 525,1185.7 526.3,1185.4 527.6,1185.1 528.9,1185 530.2,1185.3 531.5,1185.7 532.8,1185.3 534.1,1185.7 535.4,1185.7 536.7,1185.7 538,1186.1 539.3,1185.2 540.6,1184.4 541.9,1185 543.2,1184.2 544.5,1185.2 545.8,1184.9 547.1,1185.5 548.4,1184.9 549.7,1185.4 551,1186.2 552.3,1184.9 553.6,1184.7 554.9,1185.7 556.2,1185.5 557.5,1185.6 558.8,1184.9 560.1,1185.3 561.4,1185 562.7,1185.8 564,1185.4 565.3,1184.7 566.6,1184.8 567.9,1185.3 569.2,1185.4 570.5,1185.3 571.8,1185.7 573.1,1185.2 574.4,1184.8 575.7,1185.2 577,1184.8 578.3,1184.9 579.6,1185.2 580.9,1185.5 582.2,1185.2 583.5,1186.1 584.8,1185.4 586.1,1185.3 587.4,1185.5 588.7,1185.8 590,1185.2 591.3,1184.7 592.6,1185.2 593.9,1185.1 595.2,1185.5 596.5,1185.2 597.8,1185.6 599.1,1185.5 600.4,1185.1 601.7,1185 603,1185.6 604.3,1184.9 605.6,1186 606.9,1184.6 608.2,1185.5 609.5,1185.3 610.8,1185.3 612.1,1184.7 613.4,1185.3 614.7,1185.6 616,1185.9 617.3,1185.9 618.6,1185.8 619.9,1186 621.2,1184.8 622.5,1185.1 623.8,1185.2 625.1,1186.1 626.4,1185.3 627.7,1184.8 629,1185.5 630.3,1185.9 631.6,1185.9 632.9,1185.1 634.2,1185.6 635.5,1185.6 636.8,1185.2 638.1,1185.4 639.4,1185.3 640.7,1184.4 642,1186.3 643.3,1185.3 644.6,1184.2 645.9,1185.8 647.2,1185.6 648.5,1185.5 649.8,1184 651.1,1185.7 652.4,1184.9 653.7,1185.5 655,1184.8 656.3,1184.9 657.6,1185.4 658.9,1185.1 660.2,1184.9 661.5,1185.6 662.8,1184.8 664.1,1184.7 665.4,1185.7 666.7,1185.2 668,1185.7 669.3,1185.3 670.6,1185.1 671.9,1185.3 673.2,1185.2 674.5,1185.1 675.8,1185.7 677.1,1185.5 678.4,1184.3 679.7,1184.7 681,1185.3 682.3,1185.3 683.6,1184.9 684.9,1186.6 686.2,1185.7 687.5,1185 688.8,1185.6 690.1,1185.4 691.4,1185.2 692.7,1185.6 694,1185.3 695.3,1185.2 696.6,1184.5 697.9,1185.3 699.2,1185.5 700.5,1184.9 701.8,1185 703.1,1185.4 704.4,1184.7 705.7,1185.4 707,1185.1 708.3,1184.6 709.6,1185.5 710.9,1185.2 712.2,1185.1 713.5,1185.9 714.8,1185.6 716.1,1185.5 717.4,1185.2 718.7,1185.2 720,1184.9 721.3,1184.8 722.6,1185.3 723.9,1185 725.2,1184.8 726.5,1184.7 727.8,1185.1 729.1,1185.1 730.4,1185.2 731.7,1184.9 733,1185.5 734.3,1184.5 735.6,1185.6 736.9,1185.3 738.2,1184.6 739.5,1185.3 740.8,1185.9 742.1,1185.7 743.4,1185.6 744.7,1185.2 746,1186.4 747.3,1184.2 748.6,1185.7 749.9,1185.3 751.2,1184.7 752.5,1185.5 753.8,1184.6 755.1,1185.5 756.4,1186.2 757.7,1184.8 759,1185.5 760.3,1185.9 761.6,1184.7 762.9,1185.4 764.2,1185 765.5,1185 766.8,1185.1 768.1,1185.3 769.4,1185.2 770.7,1185.5 772,1185.5 773.3,1184.8 774.6,1185.3 775.9,1185.5 777.2,1186.7 778.5,1185.3 779.8,1185.3 781.1,1185.4 782.4,1185 783.7,1185.3 785,1185.4 786.3,1184.9 787.6,1185.5 788.9,1185.3 790.2,1185.5 791.5,1185.5 792.8,1185.1 794.1,1185.2 795.4,1185.2 796.7,1185.6 798,1185.1 799.3,1185.2 800.6,1185.2 801.9,1185 803.2,1184.9 804.5,1184.9 805.8,1185.3 807.1,1184.9 808.4,1185.4 809.7,1185.1 811,1184.7 812.3,1185 813.6,1185.6 814.9,1185.5 816.2,1185.6 817.5,1185.1 818.8,1185.2 820.1,1185.4 821.4,1185.4 822.7,1185.4 824,1185.8 825.3,1184.9 826.6,1186.1 827.9,1185.5 829.2,1186.1 830.5,1185.4 831.8,1184.8 833.1,1185.2 834.4,1184.3 835.7,1185.2 837,1185.7 838.3,1186.2 839.6,1185.3 840.9,1185.6 842.2,1185.7 843.5,1185.5 844.8,1184.8 846.1,1186 847.4,1185.2 848.7,1184.5 850,1185.4 851.3,1185.1 852.6,1184.8 853.9,1184.7 855.2,1184.7 856.5,1185.8 857.8,1186 859.1,1185.4 860.4,1185.1 861.7,1184.9 863,1185.5 864.3,1185.5 865.6,1184.8 866.9,1185.3 868.2,1185.3 869.5,1184.6 870.8,1185.6 872.1,1185.3 873.4,1184.6 874.7,1185.4 876,1185.5 877.3,1184.1 878.6,1185.8 879.9,1184.9 881.2,1185.6 882.5,1185.3 883.8,1184.6 885.1,1185.6 886.4,1185.1 887.7,1185.2 889,1185.3 890.3,1184.7 891.6,1185.2 892.9,1185.1 894.2,1185 895.5,1185.4 896.8,1185.8 898.1,1185.2 899.4,1184.5 900.7,1184.9 902,1185.2 903.3,1185.8 904.6,1185.1 905.9,1184.7 907.2,1184.9 908.5,1185.1 909.8,1185.1 911.1,1185 912.4,1185.4 913.7,1185.5 915,1185.7 916.3,1185.8 917.6,1185.7 918.9,1185.3 920.2,1185.4 921.5,1185.6 922.8,1185.3 924.1,1185.1 925.4,1185 926.7,1185 928,1185.2 929.3,1185.1 930.6,1185 931.9,1185.1 933.2,1185.8 934.5,1185 935.8,1185.2 937.1,1185.5 938.4,1185 939.7,1185.5 941,1185.6 942.3,1185.1 943.6,1185 944.9,1184.9 946.2,1184.7 947.5,1185.2 948.8,1185.3 950.1,1185.4 951.4,1185.5 952.7,1185 954,1185.4 955.3,1186.3 956.6,1185.3 957.9,1185.5 959.2,1185.8 960.5,1185.2 961.8,1185.9 963.1,1185.1 964.4,1185.6 965.7,1185.4 967,1184.1 968.3,1185.2 969.6,1184.9 970.9,1185.4 972.2,1184.7 973.5,1185 974.8,1185.3 976.1,1185.2 977.4,1185.1 978.7,1185.4 980,1185 981.3,1185.4 982.6,1185.3 983.9,1185.3 985.2,1184.9 986.5,1185.8 987.8,1184.4 989.1,1185.7 990.4,1185.3 991.7,1185.7 993,1185.3 994.3,1184.8 995.6,1185.2 996.9,1185.1 998.2,1184.6 999.5,1185.1 1000.8,1185.4 1002.1,1185.8 1003.4,1185.4 1004.7,1186 1006,1185.3 1007.3,1184.1 1008.6,1185.3 1009.9,1185.3 1011.2,1185.1 1012.5,1185.2 1013.8,1185.5 1015.1,1184.9 1016.4,1185.1 1017.7,1185.4 1019,1185.1 1020.3,1185 1021.6,1185.1 1022.9,1185 1024.2,1185.5 1025.5,1185.1 1026.8,1185.1 1028.1,1185.5 1029.4,1185.5 1030.7,1185.6 1032,1184.7 1033.3,1185.1 1034.6,1185 1035.9,1185.4 1037.2,1185.4 1038.5,1185.9 1039.8,1185.3 1041.1,1185 1042.4,1185.8 1043.7,1185.2 1045,1185.5 1046.3,1184.9 1047.6,1185.2 1048.9,1185.6 1050.2,1185.9 1051.5,1184.9 1052.8,1185.3 1054.1,1185.2 1055.4,1185.7 1056.7,1185.6 1058,1185.5 1059.3,1185.2 1060.6,1184.4 1061.9,1185.6 1063.2,1185.6 1064.5,1185 1065.8,1185 1067.1,1185.2 1068.4,1184.9 1069.7,1186 1071,1185.2 1072.3,1185.5 1073.6,1185.1 1074.9,1185.5 1076.2,1184.6 1077.5,1185 1078.8,1185.6 1080.1,1185 1081.4,1185.9 1082.7,1185.8 1084,1185.3 1085.3,1185.1 1086.6,1185.8 1087.9,1184.5 1089.2,1185.2 1090.5,1185.4 1091.8,1185.7 1093.1,1185.5 1094.4,1185 1095.7,1185.3 1097,1185.1 1098.3,1184.8 1099.6,1184.5 1100.9,1185.5 1102.2,1184.8 1103.5,1185.2 1104.8,1185.4 1106.1,1185.2 1107.4,1185.5 1108.7,1185.1 1110,1185.1 1111.3,1186 1112.6,1186.2 1113.9,1185.7 1115.2,1185.1 1116.5,1185.7 1117.8,1185.3 1119.1,1185.9 1120.4,1185.4 1121.7,1185.5 1123,1185.4 1124.3,1185.2 1125.6,1185 1126.9,1185.2 1128.2,1186.2 1129.5,1184.8 1130.8,1185.5 1132.1,1185.7 1133.4,1185.5 1134.7,1185 1136,1185.1 1137.3,1186.1 1138.6,1185.9 1139.9,1185.1 1141.2,1185.7 1142.5,1185.5 1143.8,1185 1145.1,1185.1 1146.4,1185.1 1147.7,1185.1 1149,1185.5 1150.3,1185.4 1151.6,1185 1152.9,1185 1154.2,1185.5 1155.5,1185.1 1156.8,1185.5 1158.1,1185.9 1159.4,1185.4 1160.7,1184.9 1162,1185.6 1163.3,1185.4 1164.6,1185.5 1165.9,1185.6 1167.2,1185.3 1168.5,1185.4 1169.8,1184.9 1171.1,1185.2 1172.4,1185.5 1173.7,1185.4 1175,1185.6 1176.3,1185.2 1177.6,1185.5 1178.9,1185.1 1180.2,1185.6 1181.5,1185.5 1182.8,1185.3 1184.1,1184.9 1185.4,1185.8 1186.7,1184.5 1188,1185.8 1189.3,1184.9 1190.6,1185.2 1191.9,1185.2 1193.2,1185.3 1194.5,1185 1195.8,1184.9 1197.1,1185.1 1198.4,1185.6 1199.7,1184.4 1201,1184.9 1202.3,1185.4 1203.6,1184.8 1204.9,1185.4 1206.2,1185.2 1207.5,1184.2 1208.8,1185.1 1210.1,1185.4 1211.4,1184.8 1212.7,1184.5 1214,1185 1215.3,1185.5 1216.6,1185.8 1217.9,1185.1 1219.2,1185.7 1220.5,1185.5 1221.8,1185.4 1223.1,1185.3 1224.4,1185.2 1225.7,1184.6 1227,1184.6 1228.3,1185.5 1229.6,1185.4 1230.9,1185.7 1232.2,1185.5 1233.5,1185.2 1234.8,1184.9 1236.1,1185.4 1237.4,1185.1 1238.7,1185.3 1240,1185.3 1241.3,1184.9 1242.6,1184.7 1243.9,1185.3 1245.2,1184.8 1246.5,1184.8 1247.8,1185.6 1249.1,1185.3 1250.4,1185.3 1251.7,1185.5 1253,1185.3 1254.3,1186.5 1255.6,1185.2 1256.9,1185.4 1258.2,1185.2 1259.5,1185.3 1260.8,1184.1 1262.1,1185.1 1263.4,1185.3 1264.7,1184.6 1266,1185 1267.3,1185.2 1268.6,1185.5 1269.9,1185.6 1271.2,1185.8 1272.5,1185.6 1273.8,1185.6 1275.1,1185.2 1276.4,1185.5 1277.7,1183.9 1279,1185 1280.3,1185.5 1281.6,1185.3 1282.9,1185.1 1284.2,1185.3 1285.5,1185.1 1286.8,1184.9 1288.1,1185.6 1289.4,1184.9 1290.7,1184.8 1292,1186 1293.3,1184.9 1294.6,1184.9 1295.9,1185.2 1297.2,1184.8 1298.5,1184.9 1299.8,1184.6 1301.1,1186.4 1302.4,1184.3 1303.7,1185.4 1305,1185.6 1306.3,1185.2 1307.6,1185.4 1308.9,1184.9 1310.2,1185.7 1311.5,1185.1 1312.8,1184.9 1314.1,1185.1 1315.4,1185.4 1316.7,1185.3 1318,1186.1 1319.3,1184.5 1320.6,1185 1321.9,1185.1 1323.2,1184.4 1324.5,1185.4 1325.8,1185.7 1327.1,1184.5 1328.4,1186 1329.7,1185.4 1331,1184.7 1332.3,1185.5 1333.6,1186.5 1334.9,1185.5 1336.2,1185.2 1337.5,1186 1338.8,1185.5 1340.1,1185.2 1341.4,1185.1 1342.7,1184.9 1344,1185.4 1345.3,1185.1 1346.6,1185.6 1347.9,1185.3 1349.2,1186.1 1350.5,1185.6 1351.8,1185.2 1353.1,1184.8 1354.4,1185.2 1355.7,1185 1357,1185.8 1358.3,1185.1 1359.6,1185.7 1360.9,1184.8 1362.2,1185.4 1363.5,1185.3 1364.8,1185.4 1366.1,1185 1367.4,1184.9 1368.7,1185.6 1370,1185 1371.3,1184.9 1372.6,1185 1373.9,1185.3 1375.2,1184.9 1376.5,1184.9 1377.8,1186.9 1379.1,1184.9 1380.4,1185.5 1381.7,1185.4 1383,1185.1 1384.3,1185.4 1385.6,1184.6 1386.9,1184.9 1388.2,1185.4 1389.5,1185.1 1390.8,1186.3 1392.1,1185.3 1393.4,1185.3 1394.7,1185.3 1396,1185.3 1397.3,1184.5 1398.6,1185.4 1399.9,1185 1401.2,1185.2 1402.5,1185.6 1403.8,1185.3 1405.1,1185.4 1406.4,1185 1407.7,1185.4 1409,1185.1 1410.3,1185.5 1411.6,1185.9 1412.9,1185.5 1414.2,1184.8 1415.5,1185.3 1416.8,1185.2 1418.1,1184.8 1419.4,1185.6 1420.7,1185.3 1422,1186.1 1423.3,1185.6 1424.6,1185.1 1425.9,1186.1 1427.2,1185.4 1428.5,1185.4 1429.8,1184.6 1431.1,1185.6 1432.4,1185.6 1433.7,1185.2 1435,1184.9 1436.3,1185.9 1437.6,1184.6 1438.9,1185.4 1440.2,1185.6 1441.5,1185.4 1442.8,1185.5 1444.1,1185.6 1445.4,1184.8 1446.7,1185.6 1448,1185.6 1449.3,1184.7 1450.6,1185.3 1451.9,1184.8 1453.2,1185.7 1454.5,1185 1455.8,1185.3 1457.1,1185.1 1458.4,1185.3 1459.7,1185 1461,1185.3 1462.3,1185 1463.6,1185.4 1464.9,1184.7 1466.2,1185.1 1467.5,1185.7 1468.8,1186.3 1470.1,1184.9 1471.4,1185.5 1472.7,1185.3 1474,1184.4 1475.3,1184.7 1476.6,1184.7 1477.9,1185 1479.2,1185.1 1480.5,1185.7 1481.8,1185.4 1483.1,1185.9 1484.4,1185.7 1485.7,1185.7 1487,1185 1488.3,1184.8 1489.6,1185 1490.9,1185 1492.2,1185.1 1493.5,1185.4 1494.8,1184.9 1496.1,1185.3 1497.4,1185.9 1498.7,1185.3 1500,1185.7 1501.3,1185.2 1502.6,1185.2 1503.9,1185.7 1505.2,1184.6 1506.5,1185 1507.8,1185 1509.1,1184.9 1510.4,1185.3 1511.7,1186.3 1513,1185.8 1514.3,1185 1515.6,1185.2 1516.9,1185.3 1518.2,1185.5 1519.5,1185.4 1520.8,1184.8 1522.1,1185.7 1523.4,1185.1 1524.7,1185.3 1526,1185.8 1527.3,1185.2 1528.6,1184.7 1529.9,1185.3 1531.2,1185.9 1532.5,1185.3 1533.8,1184.8 1535.1,1185.5 1536.4,1185.1 1537.7,1185.1 1539,1185.1 1540.3,1185.8 1541.6,1185 1542.9,1185.3 1544.2,1185.1 1545.5,1185.7 1546.8,1186.1 1548.1,1185.4 1549.4,1185.6 1550.7,1185.4 1552,1185 1553.3,1185.1 1554.6,1185.8 1555.9,1185.2 1557.2,1184.6 1558.5,1185.1 1559.8,1185.5 1561.1,1184.8 1562.4,1185.5 1563.7,1184.5 1565,1185.4 1566.3,1184.6 1567.6,1185.5 1568.9,1185.3 1570.2,1185.2 1571.5,1185.3 1572.8,1185.4 1574.1,1185.7 1575.4,1185 1576.7,1185.1 1578,1185.3 1579.3,1185 1580.6,1185.9 1581.9,1184.9 1583.2,1185 1584.5,1185.2 1585.8,1185.1 1587.1,1185.6 1588.4,1184.9 1589.7,1185.4 1591,1184.8 1592.3,1185.2 1593.6,1185.3 1594.9,1185.2 1596.2,1184.3 1597.5,1185.5 1598.8,1185.2 1600.1,1185.9 1601.4,1184.4 1602.7,1186.4 1604,1185.7 1605.3,1185.4 1606.6,1185.2 1607.9,1185 1609.2,1185 1610.5,1184.8 1611.8,1185.3 1613.1,1186.4 1614.4,1185.5 1615.7,1185 1617,1185.7 1618.3,1185.1 1619.6,1184.9 1620.9,1184.9 1622.2,1185.6 1623.5,1185.3 1624.8,1185.1 1626.1,1185.1 1627.4,1185.1 1628.7,1184.9 1630,1184.4 1631.3,1184.6 1632.6,1184.8 1633.9,1186.5 1635.2,1185.7 1636.5,1185.6 1637.8,1185.3 1639.1,1184.8 1640.4,1185.2 1641.7,1184.5 1643,1185.5 1644.3,1184.9 1645.6,1184.7 1646.9,1184.7 1648.2,1186 1649.5,1185.1 1650.8,1185.1 1652.1,1185.3 1653.4,1185.3 1654.7,1185.5 1656,1184.6 1657.3,1185.3 1658.6,1184.1 1659.9,1185.6 1661.2,1184.7 1662.5,1185 1663.8,1184.8 1665.1,1185.2 1666.4,1185 1667.7,1184.6 1669,1185.2 1670.3,1185.5 1671.6,1185.3 1672.9,1185.7 1674.2,1185.4 1675.5,1185.5 1676.8,1185 1678.1,1185.8 1679.4,1185.1 1680.7,1184.7 1682,1185.1 1683.3,1185.4 1684.6,1185 1685.9,1184.3 1687.2,1185.8 1688.5,1184.8 1689.8,1185.1 1691.1,1184.8 1692.4,1186.2 1693.7,1184.5 1695,1184.5 1696.3,1185.4 1697.6,1185.7 1698.9,1184.9 1700.2,1185.3 1701.5,1185.3 1702.8,1185.1 1704.1,1186 1705.4,1185.7 1706.7,1185.9 1708,1185.1 1709.3,1185.2 1710.6,1185.3 1711.9,1185.7 1713.2,1185.1 1714.5,1185.2 1715.8,1185.6 1717.1,1185.1 1718.4,1184.8 1719.7,1184.5 1721,1185.4 1722.3,1185 1723.6,1185.1 1724.9,1185 1726.2,1185.2 1727.5,1185 1728.8,1184.9 1730.1,1184.8 1731.4,1185.6 1732.7,1185.4 1734,1185.1 1735.3,1185.5 1736.6,1184.9 1737.9,1184.5 1739.2,1185.2 1740.5,1185.4 1741.8,1185.3 1743.1,1185.1 1744.4,1185.1 1745.7,1185.4 1747,1185.3 1748.3,1185.2 1749.6,1185.6 1750.9,1185.2 1752.2,1185.1 1753.5,1185.3 1754.8,1184.8 1756.1,1185.5 1757.4,1185 1758.7,1185.1 1760,1184.9 1761.3,1184.7 1762.6,1185 1763.9,1185 1765.2,1184.4 1766.5,1184.8 1767.8,1185.7 1769.1,1185 1770.4,1185.3 1771.7,1184.6 1773,1185 1774.3,1184.9 1775.6,1185.7 1776.9,1185.5 1778.2,1184.7 1779.5,1185.1 1780.8,1185 1782.1,1185.3 1783.4,1184.6 1784.7,1185.8 1786,1185.3 1787.3,1185.1 1788.6,1185.4 1789.9,1185.6 1791.2,1185.4 1792.5,1185.4 1793.8,1184.6 1795.1,1185.4 1796.4,1185.2 1797.7,1185 1799,1185.2 1800.3,1184.9 1801.6,1185.4 1802.9,1186.1 1804.2,1184.9 1805.5,1185.2 1806.8,1185.7 1808.1,1185.2 1809.4,1185.5 1810.7,1185.3 1812,1186 1813.3,1184.5 1814.6,1185.5 1815.9,1185.3 1817.2,1185.5 1818.5,1185 1819.8,1184.8 1821.1,1185.5 1822.4,1185.3 1823.7,1184.4 1825,1185.9 1826.3,1185.6 1827.6,1185.5 1828.9,1185 1830.2,1184.8 1831.5,1185.1 1832.8,1185.2 1834.1,1185 1835.4,1185.3 1836.7,1185.3 1838,1184.9 1839.3,1185.1 1840.6,1186 1841.9,1185 1843.2,1185.3 1844.5,1184.9 1845.8,1186 1847.1,1184.8 1848.4,1185.1 1849.7,1185.5 1851,1185.1 1852.3,1185.3 1853.6,1185.4 1854.9,1184.9 1856.2,1185.7 1857.5,1185.3 1858.8,1185.3 1860.1,1184.9 1861.4,1184.8 1862.7,1185.4 1864,1185.5 1865.3,1185.3 1866.6,1184.9 1867.9,1185 1869.2,1184.8 1870.5,1185.3 1871.8,1185.3 1873.1,1184.9 1874.4,1185.7 1875.7,1185.5 1877,1184.5 1878.3,1185 1879.6,1185.4 1880.9,1185.5 1882.2,1185.2 1883.5,1185.4 1884.8,1185.6 1886.1,1185.1 1887.4,1186.1 1888.7,1184.9 1890,1185.1 1891.3,1185.3 1892.6,1185.2 1893.9,1185.8 1895.2,1185.1 1896.5,1185.6 1897.8,1185.2 1899.1,1184.8 1900.4,1185.4 1901.7,1184.5 1903,1185.7 1904.3,1186.2 1905.6,1185.2 1906.9,1185.4 1908.2,1185.6 1909.5,1185.1 1910.8,1185.5 1912.1,1185.3 1913.4,1185.4 1914.7,1185.4 1916,1185.5 1917.3,1185.7 1918.6,1185.2 1919.9,1184.7 1921.2,1184.5 1922.5,1185 1923.8,1185.9 1925.1,1185.7 1926.4,1184.6 1927.7,1185.1 1929,1185.3 1930.3,1185.1 1931.6,1184.8 1932.9,1186 1934.2,1185.1 1935.5,1184.9 1936.8,1186.4 1938.1,1185.3 1939.4,1185.5 1940.7,1186.2 1942,1184.8 1943.3,1185.6 1944.6,1185.1 1945.9,1185.8 1947.2,1185 1948.5,1185.8 1949.8,1185.1 1951.1,1185.4 1952.4,1185.3 1953.7,1184.9 1955,1185.6 1956.3,1185.2 1957.6,1185.4 1958.9,1185.5 1960.2,1185.6 1961.5,1185.7 1962.8,1184.9 1964.1,1185.1 1965.4,1186.5 1966.7,1185 1968,1185.7 1969.3,1185.6 1970.6,1184.7 1971.9,1185.7 1973.2,1185.4 1974.5,1185.2 1975.8,1185.8 1977.1,1184.8 1978.4,1185.5 1979.7,1185.5 1981,1185.2 1982.3,1185.7 1983.6,1185.1 1984.9,1185.6 1986.2,1185.2 1987.5,1186 1988.8,1184.9 1990.1,1184.6 1991.4,1185 1992.7,1185.5 1994,1185.8 1995.3,1185 1996.6,1185.1 1997.9,1185.3 1999.2,1185.5 2000.5,1185.5 2001.8,1186 2003.1,1185.2 2004.4,1185.5 2005.7,1185.3 2007,1185.2 2008.3,1185.4 2009.6,1184.8 2010.9,1186.2 2012.2,1185.3 2013.5,1185.3 2014.8,1185.8 2016.1,1184.8 2017.4,1185.1 2018.7,1185.1 2020,1186.2 2021.3,1185.5 2022.6,1185 2023.9,1185.5 2025.2,1185.5 2026.5,1184.8 2027.8,1185.4 2029.1,1184.8 2030.4,1185.1 2031.7,1185.2 2033,1185.3 2034.3,1184.8 2035.6,1185 2036.9,1185.4 2038.2,1185.2 2039.5,1184.7 2040.8,1184.9 2042.1,1184.5 2043.4,1185.2 2044.7,1185.3 2046,1185.8 2047.3,1185.5 2048.6,1185.8 2049.9,1185.1 2051.2,1184.6 2052.5,1185.7 2053.8,1185 2055.1,1186.1 2056.4,1184.7 2057.7,1185.3 2059,1185 2060.3,1185.2 2061.6,1185.8 2062.9,1184.9 2064.2,1185.2 2065.5,1185 2066.8,1185.1 2068.1,1185.6 2069.4,1184.7 2070.7,1186.2 2072,1185.8 2073.3,1184.9 2074.6,1185.2 2075.9,1184.8 2077.2,1185.6 2078.5,1185.3 2079.8,1185.5 2081.1,1185.3 2082.4,1185.3 2083.7,1184.8 2085,1185.2 2086.3,1185.3 2087.6,1185.2 2088.9,1185.2 2090.2,1184.8 2091.5,1185.3 2092.8,1185.5 2094.1,1184.9 2095.4,1185.9 2096.7,1185 2098,1185.2 2099.3,1185.2 2100.6,1185.9 2101.9,1185.4 2103.2,1185.8 2104.5,1185.5 2105.8,1185.5 2107.1,1185.5 2108.4,1185.5 2109.7,1184.1 2111,1184.3 2112.3,1185.2 2113.6,1185.3 2114.9,1186.1 2116.2,1184.7 2117.5,1182.5 2118.8,1178.9 2120.1,1176.8 2121.4,1179.4 2122.7,1181.7 2124,1184.3 2125.3,1185 2126.6,1185.3 2127.9,1185.3 2129.2,1185.8 2130.5,1185.3 2131.8,1185 2133.1,1185.1 2134.4,1185.8 2135.7,1184.7 2137,1185.9 2138.3,1184.6 2139.6,1185.7 2140.9,1185.3 2142.2,1185 2143.5,1184.8 2144.8,1184.6 2146.1,1185.5 2147.4,1186.3 2148.7,1185.3 2150,1184.9 2151.3,1185.6 2152.6,1185.1 2153.9,1185.1 2155.2,1185 2156.5,1185.3 2157.8,1185.7 2159.1,1185 2160.4,1184.9 2161.7,1185.1 2163,1184.9 2164.3,1186.2 2165.6,1185.3 2166.9,1185.2 2168.2,1186 2169.5,1185.4 2170.8,1185.1 2172.1,1185.3 2173.4,1185.3 2174.7,1185.4 2176,1185.5 2177.3,1185.2 2178.6,1185 2179.9,1184.8 2181.2,1184.9 2182.5,1185.2 2183.8,1185.3 2185.1,1184.6 2186.4,1185.7 2187.7,1185 2189,1185.1 2190.3,1185 2191.6,1185.6 2192.9,1185.1 2194.2,1185.6 2195.5,1185.1 2196.8,1185.4 2198.1,1186.4 2199.4,1185.2 2200.7,1185.3 2202,1185.9 2203.3,1185.6 2204.6,1185.1 2205.9,1185.2 2207.2,1185.6 2208.5,1186.4 2209.8,1185.4 2211.1,1185.1 2212.4,1186.1 2213.7,1185.1 2215,1185 2216.3,1184.9 2217.6,1185.2 2218.9,1185.2 2220.2,1185.2 2221.5,1185 2222.8,1185.4 2224.1,1184.9 2225.4,1185.3 2226.7,1185.2 2228,1185.7 2229.3,1185 2230.6,1185.2 2231.9,1184.6 2233.2,1184.1 2234.5,1183.5" fill="none" stroke="#000" stroke-width="2.4" stroke-linejoin="round"/>
<path d="M207.8 1185.5L207.8 1181.9L209.1 1181.5L210.4 1181.5L211.7 1182.6L211.7 1185.5ZM252 1185.5L252 1181.9L253.3 1180.4L254.6 1180.2L255.9 1180.2L257.2 1181.2L258.5 1184L258.5 1185.5ZM285.8 1185.5L285.8 1181L287.1 1180.2L288.4 1182.2L288.4 1185.5ZM294.9 1185.5L294.9 1181.9L296.2 1181.2L297.5 1181.4L298.8 1184L298.8 1185.5ZM317 1185.5L317 1182.9L318.3 1181.6L319.6 1181.5L320.9 1181.5L322.2 1182.3L322.2 1185.5ZM352.1 1185.5L352.1 1181.3L353.4 1175.3L354.7 1172L356 1171.4L357.3 1171.4L358.6 1171.9L359.9 1174.9L361.2 1180.8L361.2 1185.5ZM367.7 1185.5L367.7 1180.7L369 1178.7L370.3 1178.8L371.6 1182L371.6 1185.5ZM375.5 1185.5L375.5 1180.9L376.8 1175.4L378.1 1174.3L379.4 1174.4L380.7 1176.1L382 1182.2L382 1185.5ZM384.6 1185.5L384.6 1183.8L385.9 1179.7L387.2 1178.7L388.5 1178.7L389.8 1180.2L389.8 1185.5ZM406.7 1185.5L406.7 1182.8L408 1179.3L409.3 1179.2L410.6 1180.6L410.6 1185.5ZM414.5 1185.5L414.5 1183.2L415.8 1181.3L417.1 1180.9L418.4 1180.9L419.7 1181.4L421 1183.4L421 1185.5ZM424.9 1185.5L424.9 1175.6L426.2 1175.1L427.5 1181.7L427.5 1185.5ZM432.7 1185.5L432.7 1176.5L434 1175.1L435.3 1179.6L435.3 1185.5ZM439.2 1185.5L439.2 1182.7L440.5 1181.2L441.8 1181.2L443.1 1183L443.1 1185.5ZM480.8 1185.5L480.8 1181.2L482.1 1180.9L483.4 1181.5L483.4 1185.5ZM500.3 1185.5L500.3 1182.3L501.6 1178.3L502.9 1178L504.2 1178.5L505.5 1182.9L505.5 1185.5ZM2117.5 1185.5L2117.5 1182.4L2118.8 1178.9L2120.1 1177L2121.4 1178.9L2122.7 1182.4L2122.7 1185.5ZM2233.2 1185.5L2233.2 1183.9L2234.5 1183L2234.5 1185.5Z" fill="#000"/>
<polyline points="202.6,1185.1 204.1,1184.3 205.6,1186.1 207.1,1184.2 208.6,1184.6 210.1,1185.8 211.6,1185.5 213.1,1185.7 214.6,1185 216.1,1186.9 217.6,1186.2 219.1,1185.1 220.6,1184.7 222.1,1185.6 223.6,1183.3 225.1,1185.9 226.6,1185.1 228.1,1184.5 229.6,1182.8 231.1,1184.1 232.6,1185.8 234.1,1185.7 235.6,1184.6 237.1,1185.2 238.6,1185.3 240.1,1184.9 241.6,1184 243.1,1184 244.6,1183.9 246.1,1184.5 247.6,1184.6 249.1,1184.1 250.6,1183.9 252.1,1183.6 253.6,1183.9 255.1,1184.6 256.6,1184.2 258.1,1185.2 259.6,1183.3 261.1,1185 262.6,1184.6 264.1,1184.6 265.6,1183.9 267.1,1184.3 268.6,1184.1 270.1,1185 271.6,1185.2 273.1,1184 274.6,1186.1 276.1,1184.7 277.6,1185.7 279.1,1186.1 280.6,1184.9 282.1,1184.5 283.6,1183.8 285.1,1184.8 286.6,1185.4 288.1,1187 289.6,1185.2 291.1,1184.3 292.6,1186.1 294.1,1185.7 295.6,1184.6 297.1,1186 298.6,1184 300.1,1185.9 301.6,1185.5 303.1,1188 304.6,1184.9 306.1,1185.2 307.6,1186.1 309.1,1185.9 310.6,1184.6 312.1,1185 313.6,1185.2 315.1,1185.8 316.6,1184.3 318.1,1185.3 319.6,1185.6 321.1,1186.6 322.6,1186.2 324.1,1186.4 325.6,1184.5 327.1,1184.5 328.6,1185.6 330.1,1183.6 331.6,1184.5 333.1,1185.3 334.6,1184.6 336.1,1183.7 337.6,1185.3 339.1,1184.3 340.6,1185.8 342.1,1184.6 343.6,1184.1 345.1,1184.8 346.6,1183.4 348.1,1183.8 349.6,1182.5 351.1,1182.6 352.6,1182.2 354.1,1182.3 355.6,1180.4 357.1,1182 358.6,1180.7 360.1,1182.1 361.6,1182.5 363.1,1180.7 364.6,1182 366.1,1182.6 367.6,1183.2 369.1,1182.4 370.6,1183.4 372.1,1184 373.6,1181.1 375.1,1182.3 376.6,1183 378.1,1183.3 379.6,1183.5 381.1,1185 382.6,1185.1 384.1,1184.6 385.6,1183.8 387.1,1184.1 388.6,1184.5 390.1,1184.3 391.6,1186.1 393.1,1185.6 394.6,1184.7 396.1,1184.2 397.6,1185.2 399.1,1183 400.6,1183.5 402.1,1185.2 403.6,1183.6 405.1,1183.1 406.6,1183.3 408.1,1183.3 409.6,1183.5 411.1,1183.7 412.6,1185.8 414.1,1183.1 415.6,1184.1 417.1,1186 418.6,1183.7 420.1,1184.6 421.6,1184.8 423.1,1183 424.6,1184.8 426.1,1182.7 427.6,1183.7 429.1,1181.9 430.6,1182.8 432.1,1183 433.6,1182.4 435.1,1184.9 436.6,1183.7 438.1,1184.8 439.6,1184.1 441.1,1184.4 442.6,1183.7 444.1,1184.5 445.6,1185.1 447.1,1185.4 448.6,1185.6 450.1,1185.2 451.6,1184.3 453.1,1185.6 454.6,1185.7 456.1,1184.7 457.6,1184.8 459.1,1184.3 460.6,1185.2 462.1,1185.1 463.6,1186.3 465.1,1184.9 466.6,1184.4 468.1,1184.9 469.6,1184.9 471.1,1184.5 472.6,1185.3 474.1,1185.9 475.6,1185.1 477.1,1185.3 478.6,1185.7 480.1,1185.1 481.6,1186.1 483.1,1184.6 484.6,1185.3 486.1,1185 487.6,1184.2 489.1,1184.9 490.6,1184.5 492.1,1184.1 493.6,1184.3 495.1,1184 496.6,1183.4 498.1,1182.8 499.6,1182.4 501.1,1182.5 502.6,1182.6 504.1,1182.8 505.6,1182.3 507.1,1182.5 508.6,1183.4 510.1,1183.8 511.6,1185.8 513.1,1184 514.6,1183.7 516.1,1185 517.6,1185.6 519.1,1185.8 520.6,1185.1 522.1,1185.2 523.6,1185.6 525.1,1184.8 526.6,1185 528.1,1184.8 529.6,1185.4 531.1,1184.9 532.6,1185 534.1,1185.2 535.6,1184.9 537.1,1184.3 538.6,1185.3 540.1,1185.1 541.6,1185.3 543.1,1184.8 544.6,1184.8 546.1,1185.1 547.6,1185.3 549.1,1185.5 550.6,1184.9 552.1,1184.6 553.6,1184.9 555.1,1185.4 556.6,1184.6 558.1,1185.5 559.6,1185 561.1,1185.1 562.6,1185.1 564.1,1185.3 565.6,1185.3 567.1,1185.1 568.6,1185 570.1,1185.3 571.6,1185.2 573.1,1184.5 574.6,1185.6 576.1,1185.5 577.6,1185 579.1,1185.9 580.6,1185 582.1,1185.1 583.6,1184.9 585.1,1185.2 586.6,1184.7 588.1,1184.8 589.6,1185.4 591.1,1184.4 592.6,1184.9 594.1,1184.8 595.6,1185 597.1,1184.7 598.6,1185.3 600.1,1185 601.6,1184.7 603.1,1185.2 604.6,1186.1 606.1,1185.4 607.6,1185.1 609.1,1185.5 610.6,1185.5 612.1,1184.4 613.6,1185.4 615.1,1184.8 616.6,1185.9 618.1,1184.8 619.6,1184.9 621.1,1185.4 622.6,1185 624.1,1185.6 625.6,1184.7 627.1,1185.3 628.6,1185.3 630.1,1185.1 631.6,1185.2 633.1,1185 634.6,1184.7 636.1,1185.1 637.6,1186 639.1,1185.2 640.6,1185.3 642.1,1184.9 643.6,1184.6 645.1,1185.3 646.6,1184.4 648.1,1184.9 649.6,1184.9 651.1,1185.5 652.6,1185.6 654.1,1185.4 655.6,1184.8 657.1,1184.5 658.6,1185.3 660.1,1184.7 661.6,1185.1 663.1,1184.8 664.6,1185.1 666.1,1185.1 667.6,1184.4 669.1,1185 670.6,1185.2 672.1,1185.3 673.6,1185.3 675.1,1185.1 676.6,1185 678.1,1184.7 679.6,1185.9 681.1,1185.2 682.6,1185 684.1,1185 685.6,1185 687.1,1184.9 688.6,1185.7 690.1,1184.8 691.6,1185.5 693.1,1185.3 694.6,1185.1 696.1,1184.3 697.6,1185.2 699.1,1185.4 700.6,1185.2 702.1,1184.4 703.6,1185.5 705.1,1184.8 706.6,1184.8 708.1,1185.4 709.6,1185 711.1,1184.9 712.6,1185.5 714.1,1185.2 715.6,1185.1 717.1,1185 718.6,1185.3 720.1,1185.3 721.6,1185.9 723.1,1185.5 724.6,1185.3 726.1,1184.5 727.6,1185.3 729.1,1185.1 730.6,1184.5 732.1,1185.1 733.6,1185.5 735.1,1184.8 736.6,1185.1 738.1,1185.1 739.6,1185.3 741.1,1185.8 742.6,1184.4 744.1,1185.3 745.6,1184.9 747.1,1184.9 748.6,1185.5 750.1,1185.4 751.6,1185.9 753.1,1184.1 754.6,1185.2 756.1,1185.1 757.6,1184.7 759.1,1184.7 760.6,1185.4 762.1,1184.6 763.6,1185.5 765.1,1185.1 766.6,1185.2 768.1,1184.8 769.6,1185.1 771.1,1184.8 772.6,1184.6 774.1,1185 775.6,1185.2 777.1,1185.3 778.6,1184.6 780.1,1184.7 781.6,1184.9 783.1,1185.6 784.6,1185.1 786.1,1185.6 787.6,1185 789.1,1185.1 790.6,1185 792.1,1186 793.6,1184.6 795.1,1185.2 796.6,1185.2 798.1,1185.7 799.6,1185.5 801.1,1185.2 802.6,1185.5 804.1,1184.8 805.6,1185.6 807.1,1185.1 808.6,1185 810.1,1185.4 811.6,1185.3 813.1,1185.2 814.6,1184.9 816.1,1185.5 817.6,1185.4 819.1,1185.2 820.6,1185.8 822.1,1185.2 823.6,1184.8 825.1,1185.2 826.6,1185.1 828.1,1184.3 829.6,1185.2 831.1,1184.8 832.6,1185.1 834.1,1185.1 835.6,1185.1 837.1,1184.7 838.6,1185.5 840.1,1184.4 841.6,1184.5 843.1,1184.4 844.6,1185.4 846.1,1185.1 847.6,1185.2 849.1,1184.8 850.6,1185.1 852.1,1185 853.6,1185.3 855.1,1185.5 856.6,1184.9 858.1,1185.4 859.6,1185.4 861.1,1185.1 862.6,1184.8 864.1,1185.1 865.6,1185.1 867.1,1185.1 868.6,1184.6 870.1,1184.8 871.6,1185.4 873.1,1185.7 874.6,1185 876.1,1185.7 877.6,1185.3 879.1,1184.9 880.6,1185.4 882.1,1185.1 883.6,1184.8 885.1,1185.5 886.6,1184.9 888.1,1185.3 889.6,1185.5 891.1,1185.1 892.6,1184.6 894.1,1184.9 895.6,1184.8 897.1,1184.7 898.6,1185.1 900.1,1185.2 901.6,1185.2 903.1,1184.7 904.6,1185 906.1,1185.7 907.6,1184.5 909.1,1185.2 910.6,1185.5 912.1,1185 913.6,1185.5 915.1,1185 916.6,1185.5 918.1,1184.7 919.6,1185.1 921.1,1186 922.6,1185.1 924.1,1185.5 925.6,1184.4 927.1,1184.8 928.6,1185.4 930.1,1185.5 931.6,1184.8 933.1,1185.5 934.6,1185.4 936.1,1184.9 937.6,1185 939.1,1185 940.6,1185.2 942.1,1185 943.6,1184.6 945.1,1184.6 946.6,1185.2 948.1,1185.3 949.6,1184.8 951.1,1184.6 952.6,1185 954.1,1185.3 955.6,1184.8 957.1,1185.1 958.6,1185.1 960.1,1185.1 961.6,1184.9 963.1,1185.3 964.6,1185.2 966.1,1185.7 967.6,1184.3 969.1,1185.2 970.6,1185 972.1,1185.6 973.6,1185 975.1,1185.1 976.6,1185 978.1,1184.9 979.6,1185 981.1,1184.9 982.6,1185 984.1,1184.7 985.6,1184.9 987.1,1185.7 988.6,1184.1 990.1,1185.4 991.6,1184.8 993.1,1184.7 994.6,1185.3 996.1,1185.5 997.6,1185.3 999.1,1185.5 1000.6,1184.8 1002.1,1184.9 1003.6,1185.3 1005.1,1185.4 1006.6,1185 1008.1,1185.1 1009.6,1185.1 1011.1,1185.5 1012.6,1184.8 1014.1,1185.2 1015.6,1185 1017.1,1184.9 1018.6,1184.8 1020.1,1184.3 1021.6,1184.9 1023.1,1184.7 1024.6,1185.2 1026.1,1185 1027.6,1184.9 1029.1,1185.1 1030.6,1185.3 1032.1,1185.5 1033.6,1185.1 1035.1,1185.6 1036.6,1184.4 1038.1,1185.3 1039.6,1185 1041.1,1185 1042.6,1185.2 1044.1,1184.9 1045.6,1185.2 1047.1,1184.8 1048.6,1184.8 1050.1,1184.8 1051.6,1185.1 1053.1,1185.3 1054.6,1184.6 1056.1,1184.8 1057.6,1184.9 1059.1,1184.8 1060.6,1184.6 1062.1,1185.3 1063.6,1185 1065.1,1185.1 1066.6,1185.2 1068.1,1185.1 1069.6,1184.9 1071.1,1184.2 1072.6,1184.5 1074.1,1184.4 1075.6,1184.5 1077.1,1184.3 1078.6,1184.8 1080.1,1184.7 1081.6,1184.8 1083.1,1184.4 1084.6,1184.5 1086.1,1184.6 1087.6,1184.2 1089.1,1184 1090.6,1184.7 1092.1,1184.7 1093.6,1184.3 1095.1,1184 1096.6,1184.3 1098.1,1184.3 1099.6,1183.8 1101.1,1184.1 1102.6,1184.1 1104.1,1184.9 1105.6,1184.9 1107.1,1184.7 1108.6,1184.4 1110.1,1184.9 1111.6,1184.7 1113.1,1184.2 1114.6,1184.3 1116.1,1185.1 1117.6,1183.6 1119.1,1184.4 1120.6,1184.5 1122.1,1184.7 1123.6,1184.4 1125.1,1184.6 1126.6,1184.6 1128.1,1184.8 1129.6,1185.3 1131.1,1185.4 1132.6,1184.9 1134.1,1184.8 1135.6,1184.6 1137.1,1185 1138.6,1184.6 1140.1,1184.7 1141.6,1184.8 1143.1,1185.3 1144.6,1184.6 1146.1,1184.8 1147.6,1185.1 1149.1,1184.4 1150.6,1184.7 1152.1,1184.2 1153.6,1184.4 1155.1,1185 1156.6,1184.4 1158.1,1184.6 1159.6,1184.8 1161.1,1183.8 1162.6,1184.3 1164.1,1184 1165.6,1184.4 1167.1,1183.6 1168.6,1183.6 1170.1,1184 1171.6,1184 1173.1,1183.7 1174.6,1183.4 1176.1,1183.5 1177.6,1183.8 1179.1,1184.1 1180.6,1183.8 1182.1,1184.1 1183.6,1183.9 1185.1,1184.3 1186.6,1184.1 1188.1,1184.5 1189.6,1184.5 1191.1,1184.1 1192.6,1184.1 1194.1,1184.4 1195.6,1183.7 1197.1,1184.3 1198.6,1184.4 1200.1,1184.3 1201.6,1184.7 1203.1,1184.6 1204.6,1186 1206.1,1184.9 1207.6,1185.2 1209.1,1185.1 1210.6,1185.7 1212.1,1185.6 1213.6,1184.4 1215.1,1185 1216.6,1184.9 1218.1,1185.4 1219.6,1185.3 1221.1,1184.9 1222.6,1184.8 1224.1,1185.5 1225.6,1185.1 1227.1,1185.3 1228.6,1185.2 1230.1,1184.9 1231.6,1185.3 1233.1,1184.9 1234.6,1185.1 1236.1,1184.8 1237.6,1185.3 1239.1,1185.5 1240.6,1185.3 1242.1,1184.9 1243.6,1184.9 1245.1,1185.5 1246.6,1184.8 1248.1,1184.9 1249.6,1185.7 1251.1,1184.7 1252.6,1184.8 1254.1,1185.1 1255.6,1184.9 1257.1,1185.2 1258.6,1185.5 1260.1,1185.3 1261.6,1186.2 1263.1,1184.4 1264.6,1184.9 1266.1,1185.1 1267.6,1185.1 1269.1,1184.7 1270.6,1185.2 1272.1,1185.6 1273.6,1184.8 1275.1,1184.7 1276.6,1184.5 1278.1,1185.2 1279.6,1185.4 1281.1,1185.4 1282.6,1185.7 1284.1,1185.2 1285.6,1185 1287.1,1185.2 1288.6,1184.3 1290.1,1185.2 1291.6,1184.9 1293.1,1184.9 1294.6,1185.7 1296.1,1184.9 1297.6,1185.4 1299.1,1184.9 1300.6,1184.9 1302.1,1185 1303.6,1184.6 1305.1,1185.1 1306.6,1184.8 1308.1,1184.8 1309.6,1185.4 1311.1,1185 1312.6,1184.9 1314.1,1185.1 1315.6,1184.9 1317.1,1184.7 1318.6,1185.6 1320.1,1185.1 1321.6,1184.9 1323.1,1185.1 1324.6,1184.8 1326.1,1184.9 1327.6,1185.1 1329.1,1184.9 1330.6,1184.4 1332.1,1185 1333.6,1185.4 1335.1,1185.2 1336.6,1184.8 1338.1,1184 1339.6,1185.4 1341.1,1184.9 1342.6,1185.2 1344.1,1185.1 1345.6,1184.9 1347.1,1185.7 1348.6,1184.8 1350.1,1185.5 1351.6,1185.3 1353.1,1185.1 1354.6,1185.4 1356.1,1185 1357.6,1184.9 1359.1,1185.3 1360.6,1185.6 1362.1,1185.4 1363.6,1185.4 1365.1,1185.4 1366.6,1185.5 1368.1,1184.6 1369.6,1185 1371.1,1184.3 1372.6,1185 1374.1,1185.4 1375.6,1184.7 1377.1,1185.1 1378.6,1184.6 1380.1,1185 1381.6,1185.6 1383.1,1185.2 1384.6,1185.3 1386.1,1184.9 1387.6,1184.7 1389.1,1185.4 1390.6,1185.1 1392.1,1185.2 1393.6,1184.8 1395.1,1184.8 1396.6,1185.2 1398.1,1185.5 1399.6,1185.3 1401.1,1185.5 1402.6,1185 1404.1,1184.7 1405.6,1185 1407.1,1185.4 1408.6,1184.9 1410.1,1185.6 1411.6,1185.2 1413.1,1185.5 1414.6,1185.8 1416.1,1184.8 1417.6,1185.6 1419.1,1185.5 1420.6,1184.8 1422.1,1185.4 1423.6,1185.1 1425.1,1185.4 1426.6,1185.4 1428.1,1185.5 1429.6,1185.2 1431.1,1185.2 1432.6,1184.6 1434.1,1185.2 1435.6,1185.9 1437.1,1184.1 1438.6,1184.8 1440.1,1185 1441.6,1184.8 1443.1,1185.1 1444.6,1185.1 1446.1,1184.9 1447.6,1185 1449.1,1184.3 1450.6,1185.4 1452.1,1185.3 1453.6,1185.2 1455.1,1185.3 1456.6,1185.3 1458.1,1185.6 1459.6,1185 1461.1,1184.9 1462.6,1185.4 1464.1,1184.6 1465.6,1185.8 1467.1,1185.5 1468.6,1184.9 1470.1,1185.2 1471.6,1185.2 1473.1,1185.8 1474.6,1185.3 1476.1,1184.7 1477.6,1184.9 1479.1,1184.5 1480.6,1185.4 1482.1,1185.5 1483.6,1184.9 1485.1,1185.1 1486.6,1185.3 1488.1,1185.2 1489.6,1185.2 1491.1,1185 1492.6,1185.1 1494.1,1184.8 1495.6,1185.2 1497.1,1185.1 1498.6,1185 1500.1,1185 1501.6,1185.8 1503.1,1185 1504.6,1185 1506.1,1185.4 1507.6,1184.9 1509.1,1185.3 1510.6,1185.2 1512.1,1185 1513.6,1185 1515.1,1185.8 1516.6,1185.9 1518.1,1185.4 1519.6,1185.1 1521.1,1184.6 1522.6,1185.3 1524.1,1184.8 1525.6,1184.5 1527.1,1185.1 1528.6,1184.7 1530.1,1184.5 1531.6,1185.2 1533.1,1185.2 1534.6,1185.5 1536.1,1184.4 1537.6,1184.9 1539.1,1184.6 1540.6,1184.7 1542.1,1185.4 1543.6,1186 1545.1,1185.3 1546.6,1185.5 1548.1,1185.4 1549.6,1185.7 1551.1,1185.3 1552.6,1185.2 1554.1,1185 1555.6,1185 1557.1,1185.3 1558.6,1185 1560.1,1185.3 1561.6,1184.5 1563.1,1185.4 1564.6,1185 1566.1,1185 1567.6,1185.2 1569.1,1185.1 1570.6,1185 1572.1,1185.4 1573.6,1184.7 1575.1,1185.3 1576.6,1184.5 1578.1,1185.2 1579.6,1184.9 1581.1,1185.1 1582.6,1185.3 1584.1,1184.7 1585.6,1184.6 1587.1,1185.1 1588.6,1185 1590.1,1184.4 1591.6,1185.1 1593.1,1185 1594.6,1185.5 1596.1,1185.5 1597.6,1185.4 1599.1,1184.7 1600.6,1185.4 1602.1,1184.9 1603.6,1184.8 1605.1,1185.1 1606.6,1185.2 1608.1,1184.7 1609.6,1185.2 1611.1,1185.5 1612.6,1185.5 1614.1,1185.1 1615.6,1184.7 1617.1,1185 1618.6,1185 1620.1,1185.2 1621.6,1184.5 1623.1,1185.1 1624.6,1185.1 1626.1,1184.8 1627.6,1184.9 1629.1,1185.4 1630.6,1185.3 1632.1,1184.9 1633.6,1185.3 1635.1,1185.2 1636.6,1184.9 1638.1,1185 1639.6,1185.2 1641.1,1185.1 1642.6,1185 1644.1,1184.5 1645.6,1185 1647.1,1185.4 1648.6,1185.1 1650.1,1184.9 1651.6,1184.6 1653.1,1185.5 1654.6,1185.4 1656.1,1185.4 1657.6,1185.2 1659.1,1185 1660.6,1185.5 1662.1,1185.1 1663.6,1184.9 1665.1,1184.6 1666.6,1184.7 1668.1,1185.2 1669.6,1185.2 1671.1,1184.7 1672.6,1185.2 1674.1,1184.6 1675.6,1185.2 1677.1,1185.1 1678.6,1184.5 1680.1,1185.4 1681.6,1185.1 1683.1,1185.5 1684.6,1185.4 1686.1,1185.1 1687.6,1184.3 1689.1,1185.4 1690.6,1185.5 1692.1,1185.1 1693.6,1184.3 1695.1,1185.6 1696.6,1184.8 1698.1,1185.2 1699.6,1185.4 1701.1,1185.7 1702.6,1184.9 1704.1,1184.3 1705.6,1185 1707.1,1185 1708.6,1185.4 1710.1,1185.2 1711.6,1184.9 1713.1,1185.4 1714.6,1185.1 1716.1,1184.5 1717.6,1185.2 1719.1,1186 1720.6,1184.5 1722.1,1185 1723.6,1185.2 1725.1,1185.8 1726.6,1185.2 1728.1,1184.9 1729.6,1184.5 1731.1,1184.8 1732.6,1185.2 1734.1,1184.6 1735.6,1185.1 1737.1,1185.6 1738.6,1185.6 1740.1,1184.9 1741.6,1185.4 1743.1,1185.6 1744.6,1185.2 1746.1,1184.7 1747.6,1185.5 1749.1,1185.1 1750.6,1185.2 1752.1,1185.2 1753.6,1185.2 1755.1,1185.2 1756.6,1185.4 1758.1,1184.9 1759.6,1185.6 1761.1,1185.5 1762.6,1185.5 1764.1,1184.6 1765.6,1185.5 1767.1,1185.4 1768.6,1185.5 1770.1,1185.5 1771.6,1185.5 1773.1,1184.4 1774.6,1185.4 1776.1,1185.3 1777.6,1185.3 1779.1,1185.8 1780.6,1184.9 1782.1,1185.4 1783.6,1185.1 1785.1,1184.7 1786.6,1185.1 1788.1,1184.9 1789.6,1185.1 1791.1,1184.5 1792.6,1185 1794.1,1184.7 1795.6,1185.6 1797.1,1184.8 1798.6,1185.4 1800.1,1185.2 1801.6,1185.3 1803.1,1185.7 1804.6,1184.9 1806.1,1185.1 1807.6,1185.3 1809.1,1185.1 1810.6,1184.9 1812.1,1184.9 1813.6,1185.2 1815.1,1185.4 1816.6,1185.2 1818.1,1185 1819.6,1185.1 1821.1,1185.9 1822.6,1184.8 1824.1,1184.8 1825.6,1184.7 1827.1,1184.9 1828.6,1184.9 1830.1,1185.2 1831.6,1184.9 1833.1,1185.1 1834.6,1185.4 1836.1,1185.1 1837.6,1185.3 1839.1,1184.9 1840.6,1185.7 1842.1,1185.1 1843.6,1185.1 1845.1,1185 1846.6,1185.2 1848.1,1184.7 1849.6,1185.4 1851.1,1185.2 1852.6,1184.6 1854.1,1185.1 1855.6,1185.5 1857.1,1185.1 1858.6,1185.3 1860.1,1185.6 1861.6,1185.2 1863.1,1185.1 1864.6,1185.1 1866.1,1184.7 1867.6,1184.9 1869.1,1185.1 1870.6,1184.9 1872.1,1184.3 1873.6,1184.9 1875.1,1185.3 1876.6,1185.1 1878.1,1184.9 1879.6,1184.8 1881.1,1184.7 1882.6,1185.6 1884.1,1184.6 1885.6,1185.5 1887.1,1184.8 1888.6,1185.2 1890.1,1184.4 1891.6,1186 1893.1,1185.4 1894.6,1185.4 1896.1,1185.2 1897.6,1184.9 1899.1,1185.4 1900.6,1184.9 1902.1,1184.3 1903.6,1184.8 1905.1,1185.3 1906.6,1184.8 1908.1,1185.3 1909.6,1185.2 1911.1,1185.2 1912.6,1185.3 1914.1,1185.1 1915.6,1185.3 1917.1,1185.3 1918.6,1185 1920.1,1185 1921.6,1185.5 1923.1,1184.9 1924.6,1184.7 1926.1,1185.7 1927.6,1184.9 1929.1,1184.8 1930.6,1185.2 1932.1,1185.3 1933.6,1184.8 1935.1,1185.3 1936.6,1185.3 1938.1,1184.6 1939.6,1185.4 1941.1,1184.7 1942.6,1185.7 1944.1,1184.7 1945.6,1185.3 1947.1,1185.1 1948.6,1185.7 1950.1,1185.3 1951.6,1185.5 1953.1,1185.2 1954.6,1185.1 1956.1,1185.4 1957.6,1185.1 1959.1,1185.1 1960.6,1185.2 1962.1,1185.1 1963.6,1184.9 1965.1,1184.6 1966.6,1185.5 1968.1,1185.2 1969.6,1185.4 1971.1,1185.2 1972.6,1185.5 1974.1,1185.3 1975.6,1184.9 1977.1,1185.2 1978.6,1185.4 1980.1,1184.8 1981.6,1185.3 1983.1,1185.6 1984.6,1185.6 1986.1,1185.4 1987.6,1185.7 1989.1,1185.2 1990.6,1185 1992.1,1185.6 1993.6,1185.1 1995.1,1185.3 1996.6,1184.8 1998.1,1185.2 1999.6,1185 2001.1,1185.3 2002.6,1185.6 2004.1,1184.4 2005.6,1185.2 2007.1,1185.4 2008.6,1184.5 2010.1,1185.2 2011.6,1185.5 2013.1,1184.8 2014.6,1184.9 2016.1,1185.2 2017.6,1184.7 2019.1,1184.8 2020.6,1185 2022.1,1186 2023.6,1184.9 2025.1,1185.3 2026.6,1185.4 2028.1,1185.1 2029.6,1185.4 2031.1,1186.1 2032.6,1185.6 2034.1,1185 2035.6,1184.8 2037.1,1184.8 2038.6,1185.3 2040.1,1185 2041.6,1185.1 2043.1,1185.5 2044.6,1185.3 2046.1,1184.7 2047.6,1184.8 2049.1,1185.5 2050.6,1185.2 2052.1,1185.1 2053.6,1185 2055.1,1185.7 2056.6,1185.2 2058.1,1184.9 2059.6,1185 2061.1,1185.2 2062.6,1185.4 2064.1,1185.3 2065.6,1185.2 2067.1,1184.8 2068.6,1184.8 2070.1,1185.1 2071.6,1184.9 2073.1,1184.9 2074.6,1185.2 2076.1,1185 2077.6,1186.3 2079.1,1184.9 2080.6,1185.2 2082.1,1185.3 2083.6,1185.4 2085.1,1184.9 2086.6,1185.2 2088.1,1185.5 2089.6,1184.6 2091.1,1185 2092.6,1185.3 2094.1,1184.8 2095.6,1185 2097.1,1185.5 2098.6,1185.3 2100.1,1184.8 2101.6,1185.5 2103.1,1185.4 2104.6,1185.2 2106.1,1185 2107.6,1185.1 2109.1,1185.2 2110.6,1184.2 2112.1,1185.3 2113.6,1185.3 2115.1,1184.5 2116.6,1183.9 2118.1,1183.2 2119.6,1182.1 2121.1,1182.6 2122.6,1183.5 2124.1,1183.8 2125.6,1185 2127.1,1185.6 2128.6,1185.2 2130.1,1185.2 2131.6,1184.8 2133.1,1184.8 2134.6,1184.8 2136.1,1184.7 2137.6,1185.2 2139.1,1185.2 2140.6,1185.7 2142.1,1185.2 2143.6,1184.4 2145.1,1184.7 2146.6,1184.6 2148.1,1184.9 2149.6,1185.4 2151.1,1184.8 2152.6,1184.9 2154.1,1184.8 2155.6,1185 2157.1,1185.1 2158.6,1184.8 2160.1,1185.5 2161.6,1185.1 2163.1,1184.1 2164.6,1184.7 2166.1,1185.1 2167.6,1184.6 2169.1,1185.2 2170.6,1185.3 2172.1,1184.8 2173.6,1185.1 2175.1,1185.5 2176.6,1184.8 2178.1,1185.4 2179.6,1185.4 2181.1,1185.6 2182.6,1185 2184.1,1184.9 2185.6,1185.3 2187.1,1185.2 2188.6,1184.5 2190.1,1184.4 2191.6,1185.1 2193.1,1185.1 2194.6,1185.4 2196.1,1184.8 2197.6,1185 2199.1,1184.8 2200.6,1185.7 2202.1,1184.7 2203.6,1185.2 2205.1,1185.8 2206.6,1185.1 2208.1,1184.9 2209.6,1184.8 2211.1,1185.8 2212.6,1184.9 2214.1,1185.1 2215.6,1185.6 2217.1,1185.1 2218.6,1184.8 2220.1,1185.5 2221.6,1185.2 2223.1,1185.4 2224.6,1184.7 2226.1,1184.9 2227.6,1184.8 2229.1,1185.2 2230.6,1184.8 2232.1,1183.8 2233.6,1182.1" fill="none" stroke="#00ff00" stroke-width="4.5" stroke-linejoin="round"/>
</g>
<g clip-path="url(#c4)">
<polyline points="202.5,1596.8 203.5,1594.6 204.5,1591.1 205.5,1587.7 206.5,1584 207.5,1577.9 208.5,1569.3 209.5,1560.3 210.5,1554.9 211.5,1553.2 212.5,1560.1 213.5,1573.5 214.5,1591.3 215.5,1603.6 216.5,1609.4 217.5,1610.7 218.5,1611.1 219.5,1611.5 220.5,1612 221.5,1612.4 222.5,1612.8 223.5,1613 224.5,1612.8 225.5,1612.2 226.5,1611.4 227.5,1610.5 228.5,1609.7 229.5,1608.9 230.5,1608.8 231.5,1609.6 232.5,1610.6 233.5,1610.8 234.5,1609.9 235.5,1609 236.5,1608.9 237.5,1609.4 238.5,1609.4 239.5,1609 240.5,1608.8 241.5,1608.7 242.5,1607.7 243.5,1605.4 244.5,1601 245.5,1593.3 246.5,1582 247.5,1571.5 248.5,1565.4 249.5,1563.6 250.5,1567.1 251.5,1577.6 252.5,1593.5 253.5,1607.4 254.5,1614.9 255.5,1616.8 256.5,1614.7 257.5,1603.7 258.5,1590.6 259.5,1580.2 260.5,1578 261.5,1579.9 262.5,1584.1 263.5,1590.2 264.5,1595.5 265.5,1599.7 266.5,1602 267.5,1601.1 268.5,1597 269.5,1590.9 270.5,1586.7 271.5,1584.7 272.5,1584.7 273.5,1585.7 274.5,1588.4 275.5,1592.5 276.5,1596.9 277.5,1600.3 278.5,1602.9 279.5,1604.9 280.5,1606.9 281.5,1607.8 282.5,1607.6 283.5,1603.5 284.5,1595.6 285.5,1584 286.5,1573 287.5,1566.2 288.5,1563.6 289.5,1565.1 290.5,1569.2 291.5,1573.5 292.5,1576.4 293.5,1576.3 294.5,1574.4 295.5,1571.6 296.5,1568.9 297.5,1568.1 298.5,1573.2 299.5,1583.6 300.5,1595.1 301.5,1602.4 302.5,1605.4 303.5,1606.7 304.5,1605.8 305.5,1601.2 306.5,1593.3 307.5,1583.9 308.5,1577.3 309.5,1574.7 310.5,1575.6 311.5,1578.4 312.5,1582.4 313.5,1586.5 314.5,1589.8 315.5,1593.1 316.5,1594.9 317.5,1593.8 318.5,1590.1 319.5,1586.1 320.5,1582.9 321.5,1575.4 322.5,1568.4 323.5,1562.3 324.5,1563.2 325.5,1568.1 326.5,1576.8 327.5,1587.3 328.5,1596.1 329.5,1603 330.5,1608.4 331.5,1613.3 332.5,1616.4 333.5,1617.9 334.5,1617.2 335.5,1614.5 336.5,1609.8 337.5,1603.7 338.5,1598.1 339.5,1594.4 340.5,1592.5 341.5,1592.1 342.5,1592.1 343.5,1593 344.5,1594.6 345.5,1596.9 346.5,1598.7 347.5,1599.5 348.5,1592.6 349.5,1567.6 350.5,1527.6 351.5,1494.4 352.5,1479 353.5,1474.9 354.5,1463.4 355.5,1446.6 356.5,1433.5 357.5,1426.3 358.5,1422.6 359.5,1419.2 360.5,1417.5 361.5,1430.7 362.5,1469 363.5,1507.8 364.5,1533.3 365.5,1533.7 366.5,1533.6 367.5,1533.2 368.5,1533 369.5,1533.2 370.5,1537 371.5,1544.5 372.5,1554.1 373.5,1562.3 374.5,1570.1 375.5,1580.3 376.5,1591.8 377.5,1600 378.5,1603.5 379.5,1601.9 380.5,1596.2 381.5,1586.1 382.5,1573.6 383.5,1564.3 384.5,1558.1 385.5,1555.6 386.5,1550.2 387.5,1539.5 388.5,1529.1 389.5,1522.7 390.5,1524.5 391.5,1532.5 392.5,1546.7 393.5,1566.1 394.5,1586.3 395.5,1602 396.5,1611.5 397.5,1614.3 398.5,1614.9 399.5,1609.9 400.5,1601.2 401.5,1592 402.5,1586.9 403.5,1583 404.5,1577 405.5,1570.4 406.5,1559.1 407.5,1542.4 408.5,1523.4 409.5,1510.9 410.5,1506.7 411.5,1506.5 412.5,1508.4 413.5,1518.7 414.5,1536.9 415.5,1556 416.5,1568.8 417.5,1573.9 418.5,1576.7 419.5,1577.5 420.5,1574.9 421.5,1569.3 422.5,1563.8" fill="none" stroke="#000" stroke-width="1.2" stroke-linejoin="round"/>
<polyline points="444,1593.5 445.2,1589.1 446.4,1582.5 447.6,1576.9 448.8,1573.5 450,1572.3 451.2,1572.9 452.4,1573.9 453.6,1574.7 454.8,1574 456,1572.2 457.2,1570.5 458.4,1569.6 459.6,1571.4 460.8,1575.7 462,1581.8 463.2,1587.8 464.4,1591.2 465.6,1592.9 466.8,1590.1 468,1582.8 469.2,1574.6 470.4,1569.1 471.6,1570.7 472.8,1578.2 474,1589.4 475.2,1601 476.4,1608.5 477.6,1612.4 478.8,1609.9 480,1605.1 481.2,1599.9 482.4,1596.7 483.6,1593.7 484.8,1589.6 486,1579.4 487.2,1558.7 488.4,1535.6 489.6,1519.5 490.8,1514.7 492,1512.7 493.2,1511.3 494.4,1512 495.6,1514.9 496.8,1519.7 498,1524.5 499.2,1528 500.4,1525.6 501.6,1515.5 502.8,1503.5 504,1495.2 505.2,1501.3 506.4,1524.8 507.6,1562.4 508.8,1593.9 510,1611.3 511.2,1614.6 512.4,1616.2 513.6,1616.4 514.8,1616.1 516,1615.4 517.2,1614.5 518.4,1614.3 519.6,1614.6 520.8,1614.9 522,1614.6 523.2,1613.8 524.4,1612.7 525.6,1610.4 526.8,1607.1 528,1603.6 529.2,1601.5 530.4,1601 531.6,1603.3 532.8,1607.6 534,1612.4 535.2,1615.4 536.4,1616.3 537.6,1616.4 538.8,1616 540,1615.6 541.2,1615.4 542.4,1615.5 543.6,1615.9 544.8,1616.6 546,1617.4 547.2,1618.3 548.4,1619.2 549.6,1619.8 550.8,1620.1 552,1620.1 553.2,1620.1 554.4,1620.2 555.6,1620.4 556.8,1620.6 558,1620.8 559.2,1621 560.4,1621 561.6,1621 562.8,1620.7 564,1620.4 565.2,1619.7 566.4,1618.8 567.6,1617.5 568.8,1616.3 570,1615 571.2,1613.7 572.4,1612.7 573.6,1612.1 574.8,1611.9 576,1612.6 577.2,1614 578.4,1616.2 579.6,1617.9 580.8,1618.8 582,1619 583.2,1619.1 584.4,1619.2 585.6,1619 586.8,1618.5 588,1617.8 589.2,1617.1 590.4,1616.4 591.6,1616 592.8,1615.7 594,1615.7 595.2,1615.7 596.4,1615.7 597.6,1615.7 598.8,1615.7 600,1615.7 601.2,1615.9 602.4,1616.1 603.6,1616.4 604.8,1617 606,1617.9 607.2,1619.2 608.4,1620.5 609.6,1621.3 610.8,1621.7 612,1621.7 613.2,1621.7 614.4,1621.7 615.6,1621.2 616.8,1619.8 618,1617.7 619.2,1615.1 620.4,1613.3 621.6,1612.2 622.8,1612 624,1612.7 625.2,1614.1 626.4,1616.3 627.6,1618.5 628.8,1620.2 630,1621.3 631.2,1621.7 632.4,1620.9 633.6,1619.1 634.8,1616.2 636,1613.1 637.2,1610.6 638.4,1608.7 639.6,1607.6 640.8,1607 642,1606.8 643.2,1606.8 644.4,1606.2 645.6,1605.1 646.8,1604 648,1603.5 649.2,1605 650.4,1610.2 651.6,1615.7 652.8,1619.9 654,1620.4 655.2,1620.6 656.4,1620.7 657.6,1620.9 658.8,1621 660,1620.6 661.2,1619.6 662.4,1618.1 663.6,1616.8 664.8,1616 666,1615.8 667.2,1615.9 668.4,1616 669.6,1616 670.8,1614.8 672,1611.9 673.2,1609 674.4,1607.5 675.6,1607.5 676.8,1608.5 678,1610.8 679.2,1614.6 680.4,1618.1 681.6,1620.3 682.8,1621.1 684,1621.3 685.2,1621.5 686.4,1621.6 687.6,1621.7 688.8,1621.8 690,1621.9 691.2,1622 692.4,1622.1 693.6,1622.1 694.8,1622.2 696,1621.5 697.2,1619.4 698.4,1616 699.6,1612.1 700.8,1609.1 702,1607.2 703.2,1606.2 704.4,1605.4 705.6,1605 706.8,1605.1 708,1605.9 709.2,1607.3 710.4,1609.6 711.6,1612.2 712.8,1614.8 714,1617.4 715.2,1619.2 716.4,1620.3 717.6,1620.5 718.8,1620.1 720,1619.3 721.2,1618.2 722.4,1617.5 723.6,1617.2 724.8,1617.2 726,1617.2 727.2,1617.2 728.4,1616.7 729.6,1615.5 730.8,1613.7 732,1611.6 733.2,1609.1 734.4,1605.9 735.6,1602.3 736.8,1598.8 738,1595.4 739.2,1592.1 740.4,1589.4 741.6,1587.3 742.8,1585.9 744,1585.2 745.2,1585.1 746.4,1585.7 747.6,1587.6 748.8,1590.3 750,1592.9 751.2,1594.2 752.4,1594.7 753.6,1595.6 754.8,1597.3 756,1600.1 757.2,1603.9 758.4,1608.3 759.6,1611.3 760.8,1612.8 762,1612.8 763.2,1612.3 764.4,1610.4 765.6,1607 766.8,1602.7 768,1598.4 769.2,1595.1 770.4,1593.3 771.6,1592.9 772.8,1593.9 774,1596.9 775.2,1601.7 776.4,1607.3 777.6,1612.8 778.8,1617.6 780,1620.5 781.2,1621.4 782.4,1621.1 783.6,1620.5 784.8,1619.6 786,1618.7 787.2,1617.7 788.4,1617.2 789.6,1617 790.8,1617.2 792,1617.9 793.2,1619 794.4,1620.2 795.6,1620.8 796.8,1620.9 798,1620.4 799.2,1619.7 800.4,1618.6 801.6,1617.9 802.8,1617.7 804,1618.2 805.2,1618.9 806.4,1619.8 807.6,1620.6 808.8,1621 810,1621.2 811.2,1621.2 812.4,1620.7 813.6,1619.5 814.8,1618.2 816,1617.2 817.2,1616.9 818.4,1616.5 819.6,1616.2 820.8,1615.5 822,1613.6 823.2,1610.4 824.4,1606.5 825.6,1602.9 826.8,1599.6 828,1596.7 829.2,1594.6 830.4,1593.4 831.6,1593.1 832.8,1593.4 834,1594.1 835.2,1595.2 836.4,1596 837.6,1596.5 838.8,1596.5 840,1596.3 841.2,1596 842.4,1596 843.6,1596.3 844.8,1597.2 846,1598.5 847.2,1600.2 848.4,1601.7 849.6,1602.5 850.8,1602.8 852,1602.1 853.2,1600.8 854.4,1599.3 855.6,1598.2 856.8,1598 858,1598.6 859.2,1600.1 860.4,1602.3 861.6,1604.5 862.8,1606.1 864,1607.2 865.2,1608 866.4,1608.8 867.6,1609.8 868.8,1611.1 870,1612.1 871.2,1612.7 872.4,1612.8 873.6,1612.8 874.8,1612.8 876,1612.9 877.2,1613.4 878.4,1614.3 879.6,1615.6 880.8,1616.8 882,1617.5 883.2,1617.3 884.4,1616.3 885.6,1615.3 886.8,1613.2 888,1609.7 889.2,1606.2 890.4,1604.2 891.6,1604 892.8,1604.4 894,1605.6 895.2,1607.4 896.4,1609.6 897.6,1612.3 898.8,1615.2 900,1618.1 901.2,1620 902.4,1621 903.6,1621 904.8,1620.9 906,1620.8 907.2,1620.7 908.4,1620.8 909.6,1621.2 910.8,1621.6 912,1622 913.2,1622.5 914.4,1622.8 915.6,1623 916.8,1623 918,1623 919.2,1623 920.4,1623 921.6,1622.6 922.8,1621.1 924,1618.4 925.2,1615 926.4,1612.4 927.6,1610.8 928.8,1610.2 930,1609.9 931.2,1611.1 932.4,1613.7 933.6,1617.3 934.8,1619.7 936,1620.8 937.2,1620.8 938.4,1620.2 939.6,1618.4 940.8,1615.5 942,1612 943.2,1609.1 944.4,1606.9 945.6,1605.4 946.8,1604.1 948,1603.3 949.2,1603.1 950.4,1603.8 951.6,1605.8 952.8,1609 954,1612.2 955.2,1614 956.4,1614.6 957.6,1612.9 958.8,1609.1 960,1603.3 961.2,1597.5 962.4,1593.7 963.6,1591.8 964.8,1591.9 966,1592.7 967.2,1594.2 968.4,1595.4 969.6,1596 970.8,1594.7 972,1591.9 973.2,1587.4 974.4,1584.1 975.6,1582.5 976.8,1582.5 978,1584.4 979.2,1589.1 980.4,1595.4 981.6,1599.8 982.8,1601.5 984,1601.3 985.2,1600.6 986.4,1599.8 987.6,1600.2 988.8,1602.3 990,1604.4 991.2,1605.7 992.4,1604.9 993.6,1601.5 994.8,1596.3 996,1590.9 997.2,1587.2 998.4,1585 999.6,1583.5 1000.8,1582.9 1002,1582.5 1003.2,1582.1 1004.4,1581.8 1005.6,1582 1006.8,1582.7 1008,1583.9 1009.2,1585.5 1010.4,1587.8 1011.6,1591.2 1012.8,1596.2 1014,1602.4 1015.2,1607.5 1016.4,1610.2 1017.6,1610.4 1018.8,1608.3 1020,1604.6 1021.2,1601 1022.4,1599.5 1023.6,1600.4 1024.8,1602.1 1026,1604.2 1027.2,1605.4 1028.4,1605.7 1029.6,1604.2 1030.8,1602.6 1032,1601 1033.2,1600.8 1034.4,1602.3 1035.6,1605.6 1036.8,1610 1038,1613 1039.2,1614.1 1040.4,1612.9 1041.6,1609.8 1042.8,1604.7 1044,1600.3 1045.2,1597.5 1046.4,1596.5 1047.6,1596.1 1048.8,1596 1050,1596.2 1051.2,1596.5 1052.4,1596.3 1053.6,1595.3 1054.8,1592.6 1056,1588.5 1057.2,1583.2 1058.4,1577.5 1059.6,1572.5 1060.8,1568.5 1062,1565.3 1063.2,1562.6 1064.4,1560.3 1065.6,1557.9 1066.8,1555 1068,1551.6 1069.2,1547.7 1070.4,1543.5 1071.6,1539.8 1072.8,1537.1 1074,1536 1075.2,1535.8 1076.4,1536.7 1077.6,1538 1078.8,1539.3 1080,1540 1081.2,1540.3 1082.4,1540.4 1083.6,1540.5 1084.8,1540.4 1086,1540.3 1087.2,1540.8 1088.4,1541.9 1089.6,1543.7 1090.8,1544.9 1092,1545.5 1093.2,1544.8 1094.4,1542.2 1095.6,1537.7 1096.8,1531.8 1098,1526.6 1099.2,1522.6 1100.4,1519.6 1101.6,1517.8 1102.8,1516.8 1104,1516.7 1105.2,1516.8 1106.4,1517.4 1107.6,1518.5 1108.8,1520 1110,1521.6 1111.2,1523.8 1112.4,1527.5 1113.6,1532.5 1114.8,1539.1 1116,1547.1 1117.2,1556.4 1118.4,1564.1 1119.6,1569.8 1120.8,1573.6 1122,1577.4 1123.2,1581.7 1124.4,1586.8 1125.6,1592.9 1126.8,1599.5 1128,1605.8 1129.2,1611.7 1130.4,1615.6 1131.6,1617.7 1132.8,1617.6 1134,1614.3 1135.2,1608.1 1136.4,1599.7 1137.6,1591.7 1138.8,1585 1140,1580.5 1141.2,1578.1 1142.4,1577.1 1143.6,1576 1144.8,1573.7 1146,1567.8 1147.2,1557.6 1148.4,1543.6 1149.6,1528.8 1150.8,1518.6 1152,1513.8 1153.2,1514.2 1154.4,1515.3 1155.6,1516.3 1156.8,1516.9 1158,1514.6 1159.2,1509.9 1160.4,1503.3 1161.6,1498.1 1162.8,1494.5 1164,1492.4 1165.2,1491 1166.4,1490.4 1167.6,1490.1 1168.8,1489.8 1170,1489.7 1171.2,1489.9 1172.4,1490.3 1173.6,1491.2 1174.8,1493.6 1176,1497.3 1177.2,1503 1178.4,1510.5 1179.6,1518.8 1180.8,1525.1 1182,1528.8 1183.2,1531.3 1184.4,1534.3 1185.6,1537.7 1186.8,1542 1188,1549.1 1189.2,1558.9 1190.4,1567.2 1191.6,1571.6 1192.8,1570.4 1194,1563.1 1195.2,1550.2 1196.4,1535.5 1197.6,1526.3 1198.8,1522.7 1200,1524 1201.2,1527.7 1202.4,1533.3 1203.6,1538.6 1204.8,1542.7 1206,1546 1207.2,1549.7 1208.4,1554.1 1209.6,1559.2 1210.8,1564.1 1212,1568.1 1213.2,1571.3 1214.4,1574.1 1215.6,1576.9 1216.8,1579.7 1218,1581.5 1219.2,1582.5 1220.4,1582.3 1221.6,1581.8 1222.8,1581.1 1224,1580.6 1225.2,1580.4 1226.4,1580.5 1227.6,1580.7 1228.8,1580.9 1230,1581.3 1231.2,1581.9 1232.4,1582.9 1233.6,1584.3 1234.8,1586.1 1236,1588.1 1237.2,1589.7 1238.4,1590.8 1239.6,1591.4 1240.8,1591.8 1242,1592.2 1243.2,1592.5 1244.4,1592.8 1245.6,1593.1 1246.8,1593.2 1248,1593.4 1249.2,1593.5 1250.4,1593.7 1251.6,1593.9 1252.8,1594 1254,1593.4 1255.2,1591.9 1256.4,1589.6 1257.6,1586.9 1258.8,1584.4 1260,1582.7 1261.2,1582 1262.4,1582.2 1263.6,1582.7 1264.8,1583.6 1266,1584.6 1267.2,1586.5 1268.4,1589.3 1269.6,1593.1 1270.8,1596.4 1272,1599 1273.2,1600.9 1274.4,1602.3 1275.6,1603.2 1276.8,1603.7 1278,1603.9 1279.2,1603.7 1280.4,1603.5 1281.6,1603.2 1282.8,1602.9 1284,1602.8 1285.2,1604 1286.4,1606.6 1287.6,1610.5 1288.8,1613.3 1290,1615.1 1291.2,1615.8 1292.4,1616.5 1293.6,1617.1 1294.8,1617.8 1296,1618.6 1297.2,1619.5 1298.4,1620.4 1299.6,1621 1300.8,1621.3 1302,1621.4 1303.2,1621.5 1304.4,1621.6 1305.6,1621.7 1306.8,1621.8 1308,1621.8 1309.2,1621.8 1310.4,1621.7 1311.6,1621.6 1312.8,1621.4 1314,1621.3 1315.2,1621.3 1316.4,1621.3 1317.6,1621.4 1318.8,1621.5 1320,1621.6 1321.2,1621.5 1322.4,1621.1 1323.6,1620.6 1324.8,1619.9 1326,1619.2 1327.2,1618.5 1328.4,1618.1 1329.6,1617.9 1330.8,1617.9 1332,1618 1333.2,1618.3 1334.4,1618.8 1335.6,1619.5 1336.8,1620 1338,1620.3 1339.2,1620.5 1340.4,1620.5 1341.6,1620.6 1342.8,1620.7 1344,1621.1 1345.2,1621.7 1346.4,1622.4 1347.6,1622.7 1348.8,1622.7 1350,1622.6 1351.2,1622.4 1352.4,1622.2 1353.6,1622 1354.8,1621.8 1356,1621 1357.2,1619.5 1358.4,1617.5 1359.6,1616.1 1360.8,1615.5 1362,1615.3 1363.2,1615.2 1364.4,1615.4 1365.6,1615.8 1366.8,1616.1 1368,1616.2 1369.2,1616 1370.4,1615.7 1371.6,1614.3 1372.8,1611.7 1374,1608.4 1375.2,1606.1 1376.4,1604.7 1377.6,1604.1 1378.8,1603.9 1380,1604.6 1381.2,1606.3 1382.4,1608.4 1383.6,1610.6 1384.8,1612.4 1386,1614.1 1387.2,1615.2 1388.4,1615.7 1389.6,1615.7 1390.8,1615.3 1392,1614.3 1393.2,1612.6 1394.4,1610.5 1395.6,1608.9 1396.8,1608.1 1398,1607.9 1399.2,1608 1400.4,1608.8 1401.6,1610.2 1402.8,1611.5 1404,1612.3 1405.2,1612.8 1406.4,1613.5 1407.6,1614.6 1408.8,1615.4 1410,1615.8 1411.2,1615.6 1412.4,1614.9 1413.6,1613.9 1414.8,1612.7 1416,1611.7 1417.2,1611.2 1418.4,1610.8 1419.6,1610.1 1420.8,1609 1422,1608 1423.2,1607.4 1424.4,1607.3 1425.6,1607.5 1426.8,1607.9 1428,1608.4 1429.2,1608.6 1430.4,1608.6 1431.6,1608.6 1432.8,1608.6 1434,1608.7 1435.2,1609 1436.4,1609.4 1437.6,1609.8 1438.8,1610 1440,1609.9 1441.2,1608.9 1442.4,1607.5 1443.6,1606.2 1444.8,1605.7 1446,1606 1447.2,1607.1 1448.4,1608.9 1449.6,1610.9 1450.8,1612 1452,1612.4 1453.2,1612.4 1454.4,1612.3 1455.6,1612.1 1456.8,1611.8 1458,1611.6 1459.2,1611.3 1460.4,1611 1461.6,1610.8 1462.8,1610.6 1464,1610.4 1465.2,1610.1 1466.4,1609.7 1467.6,1609.2 1468.8,1608.6 1470,1608.1 1471.2,1607.8 1472.4,1607.6 1473.6,1607.5 1474.8,1607.3 1476,1607.1 1477.2,1607 1478.4,1606.8 1479.6,1606.7 1480.8,1606.8 1482,1607 1483.2,1607.5 1484.4,1608.2 1485.6,1609.2 1486.8,1609.8 1488,1610 1489.2,1609.5 1490.4,1608 1491.6,1606 1492.8,1604.4 1494,1603.7 1495.2,1603.9 1496.4,1604.7 1497.6,1606.1 1498.8,1607.6 1500,1609.1 1501.2,1610.6 1502.4,1612.1 1503.6,1613.4 1504.8,1614.3 1506,1614.6 1507.2,1614.1 1508.4,1612.8 1509.6,1610.8 1510.8,1609 1512,1608.1 1513.2,1608 1514.4,1608.8 1515.6,1610.4 1516.8,1612.7 1518,1614.4 1519.2,1615.7 1520.4,1616.5 1521.6,1617.4 1522.8,1618.3 1524,1619.3 1525.2,1620.4 1526.4,1621.2 1527.6,1621.5 1528.8,1621.5 1530,1621.4 1531.2,1621.3 1532.4,1621.3 1533.6,1621.3 1534.8,1621.4 1536,1621.5 1537.2,1621.6 1538.4,1621.4 1539.6,1620.9 1540.8,1620.1 1542,1619.2 1543.2,1618.3 1544.4,1617.7 1545.6,1617.3 1546.8,1617.1 1548,1617 1549.2,1616.8 1550.4,1616.3 1551.6,1615.7 1552.8,1615 1554,1614.4 1555.2,1614.1 1556.4,1614 1557.6,1614 1558.8,1614.2 1560,1614.7 1561.2,1615.4 1562.4,1615.8 1563.6,1615.9 1564.8,1615.3 1566,1614.5 1567.2,1613.7 1568.4,1613.5 1569.6,1614.6 1570.8,1616.5 1572,1618.5 1573.2,1619.5 1574.4,1619.8 1575.6,1620.2 1576.8,1620.7 1578,1621.3 1579.2,1621.9 1580.4,1622.1 1581.6,1622 1582.8,1621.9 1584,1621.4 1585.2,1620.8 1586.4,1619.8 1587.6,1618.5 1588.8,1617 1590,1615.4 1591.2,1614.4 1592.4,1614 1593.6,1613.8 1594.8,1614.2 1596,1615.4 1597.2,1617.3 1598.4,1619.5 1599.6,1620.9 1600.8,1621.6 1602,1621.5 1603.2,1621.5 1604.4,1621.4 1605.6,1621.3 1606.8,1621.3 1608,1621.3 1609.2,1621.4 1610.4,1621.5 1611.6,1621.6 1612.8,1621 1614,1619.7 1615.2,1617.8 1616.4,1616.5 1617.6,1615.8 1618.8,1615.8 1620,1616.2 1621.2,1616.7 1622.4,1617.2 1623.6,1617.4 1624.8,1617.5 1626,1617.6 1627.2,1617.9 1628.4,1618.4 1629.6,1619.2 1630.8,1619.9 1632,1620.3 1633.2,1620.4 1634.4,1620.3 1635.6,1619.6 1636.8,1617.9 1638,1615.2 1639.2,1612.4 1640.4,1610.2 1641.6,1608.6 1642.8,1607.5 1644,1607 1645.2,1606.9 1646.4,1607.1 1647.6,1607.6 1648.8,1608.2 1650,1608.8 1651.2,1609.9 1652.4,1611.8 1653.6,1613.6 1654.8,1614.8 1656,1615 1657.2,1613.6 1658.4,1611 1659.6,1608.5 1660.8,1607.3 1662,1607.4 1663.2,1607.8 1664.4,1610.2 1665.6,1614.4 1666.8,1618.4 1668,1620.6 1669.2,1620.9 1670.4,1621 1671.6,1621.1 1672.8,1621.2 1674,1621.2 1675.2,1621.3 1676.4,1621.4 1677.6,1621.5 1678.8,1621.6 1680,1621.7 1681.2,1621.9 1682.4,1622.1 1683.6,1622.3 1684.8,1622.5 1686,1622.7 1687.2,1622.8 1688.4,1622.9 1689.6,1622.8 1690.8,1622.6 1692,1622.5 1693.2,1622.4 1694.4,1622.2 1695.6,1622.1 1696.8,1622 1698,1621.8 1699.2,1621.5 1700.4,1620.5 1701.6,1618.9 1702.8,1616.8 1704,1614.7 1705.2,1613.1 1706.4,1612.3 1707.6,1612.2 1708.8,1612.4 1710,1612.9 1711.2,1613.6 1712.4,1614.5 1713.6,1615.4 1714.8,1616.2 1716,1617.1 1717.2,1617.8 1718.4,1617.8 1719.6,1617.2 1720.8,1616.2 1722,1615.2 1723.2,1614.1 1724.4,1613.1 1725.6,1612.1 1726.8,1611.1 1728,1610.1 1729.2,1609.5 1730.4,1609.3 1731.6,1609.4 1732.8,1609.6 1734,1609.5 1735.2,1609.3 1736.4,1608.8 1737.6,1608.2 1738.8,1607.6 1740,1607 1741.2,1606.4 1742.4,1605.9 1743.6,1605.6 1744.8,1605.4 1746,1605.3 1747.2,1605.1 1748.4,1604.6 1749.6,1603.5 1750.8,1602.1 1752,1600.9 1753.2,1600.3 1754.4,1600.1 1755.6,1601.2 1756.8,1604 1758,1608.7 1759.2,1613.3 1760.4,1616.1 1761.6,1617.2 1762.8,1616.9 1764,1615.8 1765.2,1614.1 1766.4,1611.8 1767.6,1609.6 1768.8,1607.9 1770,1606.8 1771.2,1606.4 1772.4,1606 1773.6,1605.7 1774.8,1605.3 1776,1605 1777.2,1604.6 1778.4,1604.4 1779.6,1604.4 1780.8,1604.9 1782,1605.9 1783.2,1607.4 1784.4,1608.8 1785.6,1609.5 1786.8,1609.6 1788,1609.5 1789.2,1609.4 1790.4,1609.3 1791.6,1609.3 1792.8,1609.7 1794,1610.4 1795.2,1611.4 1796.4,1612.3 1797.6,1613.3 1798.8,1614.2 1800,1615.1 1801.2,1615.6 1802.4,1615.8 1803.6,1615.8 1804.8,1615.2 1806,1614 1807.2,1612.1 1808.4,1610.2 1809.6,1608.5 1810.8,1607.6 1812,1607.5 1813.2,1607.9 1814.4,1608.3 1815.6,1608.7 1816.8,1609.1 1818,1609.6 1819.2,1610 1820.4,1610.4 1821.6,1610.8 1822.8,1611.2 1824,1611.3 1825.2,1611.1 1826.4,1610.6 1827.6,1610 1828.8,1609.5 1830,1608.9 1831.2,1608.6 1832.4,1608.5 1833.6,1608.6 1834.8,1608.7 1836,1608.8 1837.2,1609 1838.4,1609.1 1839.6,1609.4 1840.8,1609.8 1842,1610.4 1843.2,1611 1844.4,1611.5 1845.6,1612.1 1846.8,1612.5 1848,1612.6 1849.2,1612.3 1850.4,1611.7 1851.6,1611.1 1852.8,1610.5 1854,1609.9 1855.2,1609.4 1856.4,1609.3 1857.6,1609.4 1858.8,1609.8 1860,1610.2 1861.2,1610.6 1862.4,1610.9 1863.6,1611 1864.8,1610.9 1866,1610.7 1867.2,1610.6 1868.4,1610.4 1869.6,1610.6 1870.8,1611.1 1872,1612 1873.2,1612.9 1874.4,1613.9 1875.6,1614.8 1876.8,1615.7 1878,1616 1879.2,1615.8 1880.4,1615 1881.6,1614.1 1882.8,1613.3 1884,1612.5 1885.2,1611.6 1886.4,1610.8 1887.6,1609.9 1888.8,1609.3 1890,1609 1891.2,1608.9 1892.4,1608.9 1893.6,1609 1894.8,1609.5 1896,1610.3 1897.2,1611.5 1898.4,1612.7 1899.6,1613.9 1900.8,1615 1902,1615.6 1903.2,1615.8 1904.4,1615.8 1905.6,1615.8 1906.8,1615.8 1908,1615.8 1909.2,1615.8 1910.4,1615.8 1911.6,1615.9 1912.8,1616.1 1914,1616.5 1915.2,1616.9 1916.4,1617 1917.6,1616.9 1918.8,1616.4 1920,1615.2 1921.2,1613.3 1922.4,1611.1 1923.6,1609.6 1924.8,1608.8 1926,1608.6 1927.2,1608.6 1928.4,1609.1 1929.6,1610.2 1930.8,1611.9 1932,1613.6 1933.2,1615.2 1934.4,1616.6 1935.6,1617.5 1936.8,1617.9 1938,1618.3 1939.2,1618.6 1940.4,1618.7 1941.6,1618.9 1942.8,1619 1944,1619.1 1945.2,1619.2 1946.4,1619.3 1947.6,1619.2 1948.8,1618.9 1950,1618.6 1951.2,1618.3 1952.4,1618.5 1953.6,1619.1 1954.8,1620.3 1956,1621.3 1957.2,1621.9 1958.4,1622.2 1959.6,1622.2 1960.8,1621.8 1962,1621.1 1963.2,1620.1 1964.4,1619.1 1965.6,1618.2 1966.8,1617.7 1968,1617.5 1969.2,1617.5 1970.4,1617.9 1971.6,1618.9 1972.8,1620.4 1974,1621.7 1975.2,1622.4 1976.4,1622.7 1977.6,1622.7 1978.8,1622.4 1980,1621.7 1981.2,1620.7 1982.4,1620 1983.6,1619.5 1984.8,1619.4 1986,1619.4 1987.2,1619.7 1988.4,1620.3 1989.6,1621.1 1990.8,1621.8 1992,1622.5 1993.2,1622.9 1994.4,1623 1995.6,1623 1996.8,1623 1998,1622.9 1999.2,1622.7 2000.4,1622.4 2001.6,1622.2 2002.8,1621.9 2004,1621.6 2005.2,1621.3 2006.4,1621.1 2007.6,1620.7 2008.8,1620.1 2010,1619.4 2011.2,1618.7 2012.4,1618.1 2013.6,1617.7 2014.8,1617.7 2016,1617.8 2017.2,1618.2 2018.4,1618.9 2019.6,1619.8 2020.8,1620.4 2022,1620.2 2023.2,1619 2024.4,1617.4 2025.6,1615.8 2026.8,1614.6 2028,1613.9 2029.2,1613.7 2030.4,1613.5 2031.6,1613.4 2032.8,1613.1 2034,1612.6 2035.2,1611.9 2036.4,1611.5 2037.6,1611.3 2038.8,1611.4 2040,1611.9 2041.2,1612.7 2042.4,1613.9 2043.6,1615.1 2044.8,1616.4 2046,1617.3 2047.2,1617.7 2048.4,1617.4 2049.6,1616.4 2050.8,1614.8 2052,1613 2053.2,1611.1 2054.4,1609.7 2055.6,1609 2056.8,1608.8 2058,1608.7 2059.2,1608.6 2060.4,1608.5 2061.6,1608.4 2062.8,1608.9 2064,1610.1 2065.2,1611.8 2066.4,1613.6 2067.6,1615.2 2068.8,1616.1 2070,1616.3 2071.2,1616.1 2072.4,1615.3 2073.6,1613.9 2074.8,1611.8 2076,1609.9 2077.2,1608.5 2078.4,1607.8 2079.6,1607.4 2080.8,1607.4 2082,1607.9 2083.2,1608.7 2084.4,1609.6 2085.6,1610.5 2086.8,1611 2088,1611.4 2089.2,1611.5 2090.4,1611.7 2091.6,1612.1 2092.8,1612.9 2094,1613.9 2095.2,1612.7 2096.4,1608.6 2097.6,1601.5 2098.8,1595.1 2100,1591.1 2101.2,1589.7 2102.4,1590.2 2103.6,1591.6 2104.8,1592.9 2106,1593.5 2107.2,1593.4 2108.4,1591.9 2109.6,1589.5 2110.8,1587.2 2112,1585.4 2113.2,1583.6 2114.4,1577.4 2115.6,1553.3 2116.8,1521.9 2118,1494.3 2119.2,1485.4 2120.4,1486.4 2121.6,1498.2 2122.8,1518.4 2124,1541.5 2125.2,1558.9 2126.4,1568 2127.6,1575.4 2128.8,1581.6 2130,1589.2 2131.2,1594 2132.4,1594.5 2133.6,1590.3 2134.8,1582.8 2136,1573 2137.2,1565.9 2138.4,1562 2139.6,1561.4 2140.8,1563.7 2142,1568.6 2143.2,1574.7 2144.4,1579.3 2145.6,1583.4 2146.8,1588.6 2148,1594.9 2149.2,1599 2150.4,1600.9 2151.6,1598.2 2152.8,1592.3 2154,1584.4 2155.2,1579.2 2156.4,1577.2 2157.6,1578.2 2158.8,1580.9 2160,1585.6 2161.2,1592 2162.4,1599.3 2163.6,1606.6 2164.8,1611.1 2166,1613 2167.2,1611.4 2168.4,1606.6 2169.6,1598.7 2170.8,1589.6 2172,1582.9 2173.2,1578.8 2174.4,1577.5 2175.6,1577 2176.8,1578.3 2178,1580.8 2179.2,1583.5 2180.4,1585.5 2181.6,1588.6 2182.8,1593.4 2184,1599.2 2185.2,1604.4 2186.4,1608.7 2187.6,1611 2188.8,1611.4 2190,1610.9 2191.2,1611.4 2192.4,1612.5 2193.6,1613.2 2194.8,1613.5 2196,1613.7 2197.2,1613.9 2198.4,1614.1 2199.6,1614.3 2200.8,1614.5 2202,1614.5 2203.2,1614.4 2204.4,1613.5 2205.6,1611.6 2206.8,1608.5 2208,1604.9 2209.2,1601.3 2210.4,1597.8 2211.6,1595.6 2212.8,1594.6 2214,1596.5 2215.2,1600.7 2216.4,1605.8 2217.6,1608.9 2218.8,1609.7 2220,1608.7 2221.2,1606.4 2222.4,1604.1" fill="none" stroke="#000" stroke-width="1.2" stroke-linejoin="round"/>
<polyline points="202.6,1622.5 204.6,1623.8 206.6,1623.1 208.6,1623.5 210.6,1624.3 212.6,1623.6 214.6,1624.3 216.6,1623.9 218.6,1624.4 220.6,1622.2 222.6,1622.4 224.6,1622 226.6,1623.6 228.6,1622.9 230.6,1623.9 232.6,1623.4 234.6,1623.2 236.6,1625 238.6,1623.6 240.6,1623.1 242.6,1622.2 244.6,1624.2 246.6,1624 248.6,1622.1 250.6,1623 252.6,1623.3 254.6,1621.6 256.6,1622.8 258.6,1624.4 260.6,1621.6 262.6,1623.5 264.6,1624.8 266.6,1622.5 268.6,1622.7 270.6,1623.3 272.6,1623.6 274.6,1623.5 276.6,1621.7 278.6,1622.4 280.6,1623.2 282.6,1622.8 284.6,1624.1 286.6,1622.8 288.6,1622.8 290.6,1624.8 292.6,1623 294.6,1622.2 296.6,1623.1 298.6,1622.9 300.6,1623.7 302.6,1623.5 304.6,1622.8 306.6,1622.8 308.6,1622.6 310.6,1624.3 312.6,1624.9 314.6,1623 316.6,1623.6 318.6,1623.4 320.6,1622.6 322.6,1622.6 324.6,1622.7 326.6,1621.4 328.6,1622.4 330.6,1623.5 332.6,1623.9 334.6,1622.9 336.6,1622.8 338.6,1623.7 340.6,1624.9 342.6,1622.3 344.6,1622.4 346.6,1622.7 348.6,1623.6 350.6,1622.3 352.6,1623.5 354.6,1622.5 356.6,1623.6 358.6,1622.8 360.6,1622.7 362.6,1623.8 364.6,1622 366.6,1622.4 368.6,1623.8 370.6,1623.8 372.6,1623.3 374.6,1621.1 376.6,1623.7 378.6,1623.4 380.6,1622.8 382.6,1621.3 384.6,1623.8 386.6,1624.7 388.6,1623.6 390.6,1624.3 392.6,1622.5 394.6,1623.3 396.6,1622.5 398.6,1622.1 400.6,1622.8 402.6,1622.3 404.6,1622.4 406.6,1622.4 408.6,1622.7 410.6,1622.8 412.6,1623.2 414.6,1622 416.6,1623.4 418.6,1621.5 420.6,1623.2 422.6,1623.2" fill="none" stroke="#ff0000" stroke-width="4.2" stroke-linejoin="round"/>
<polyline points="444,1621 446,1622.8 448,1624.1 450,1623.5 452,1622.7 454,1622.6 456,1623.4 458,1623.2 460,1623.8 462,1623.2 464,1623.9 466,1623.5 468,1622.4 470,1622.2 472,1622.6 474,1623.5 476,1622.3 478,1623.9 480,1621.7 482,1622.9 484,1622.3 486,1623.4 488,1623.2 490,1623 492,1622 494,1622.3 496,1622.5 498,1624 500,1622.5 502,1623.6 504,1623.9 506,1622.3 508,1622.6 510,1621.1 512,1622.7 514,1623.7 516,1622.2 518,1623.4 520,1623.4 522,1623.2 524,1622.9 526,1623.2 528,1622.9 530,1623 532,1623.9 534,1622.9 536,1622.9 538,1623.2 540,1623.2 542,1623.4 544,1622.8 546,1622.7 548,1622.8 550,1623.4 552,1623.5 554,1622.8 556,1622.9 558,1623.1 560,1622.8 562,1622.9 564,1623.4 566,1622.7 568,1623.2 570,1623.5 572,1622.7 574,1623.5 576,1623.1 578,1622.9 580,1623.4 582,1623.1 584,1623 586,1622.9 588,1622.8 590,1622.9 592,1623 594,1623.4 596,1623 598,1623.2 600,1623 602,1623.3 604,1623.1 606,1623.5 608,1623.2 610,1622.5 612,1623.1 614,1622.9 616,1623.4 618,1623.1 620,1623.4 622,1623.4 624,1622.9 626,1623 628,1623.1 630,1622.7 632,1624.3 634,1623.3 636,1622.7 638,1622.6 640,1623.1 642,1623 644,1622.6 646,1622.5 648,1623.1 650,1622.9 652,1623.2 654,1623.1 656,1623.5 658,1622.5 660,1623.3 662,1622.8 664,1622.8 666,1623.4 668,1622.4 670,1623.1 672,1623 674,1623.5 676,1622.6 678,1623.2 680,1623.3 682,1623.1 684,1623.1 686,1623 688,1622.6 690,1622.9 692,1622.4 694,1623.4 696,1623.4 698,1622.6 700,1623.5 702,1623 704,1622.6 706,1622.8 708,1623.3 710,1623.1 712,1622.7 714,1623.3 716,1623 718,1622.9 720,1622.7 722,1623.3 724,1623.4 726,1622.7 728,1623 730,1623 732,1623.2 734,1622.7 736,1623.8 738,1623.2 740,1623.4 742,1623 744,1623.8 746,1623.3 748,1622.5 750,1623.4 752,1623.1 754,1622.7 756,1623.1 758,1622.8 760,1623.3 762,1623.3 764,1622.6 766,1623.3 768,1623.5 770,1622.2 772,1623.6 774,1623.3 776,1623.4 778,1623.6 780,1623.1 782,1622.8 784,1623.2 786,1623 788,1623.3 790,1622.3 792,1623 794,1624 796,1623.2 798,1623.4 800,1623.2 802,1623 804,1623.4 806,1623.4 808,1623 810,1623 812,1623.3 814,1622.8 816,1622.8 818,1623.5 820,1623.5 822,1623 824,1623.6 826,1623.4 828,1623.2 830,1622.9 832,1623.4 834,1622.9 836,1623.1 838,1622.9 840,1623.5 842,1623.1 844,1623.1 846,1623.3 848,1624 850,1623.5 852,1622.6 854,1623.1 856,1623.1 858,1622.9 860,1622.8 862,1623.7 864,1623.4 866,1623.4 868,1623.2 870,1623.4 872,1623.3 874,1623.2 876,1623 878,1622.8 880,1622.9 882,1623.1 884,1622.8 886,1623.2 888,1622.8 890,1623.4 892,1622.6 894,1623.2 896,1623.5 898,1623.4 900,1622.9 902,1623.6 904,1623.1 906,1623.2 908,1623.1 910,1622.5 912,1623.3 914,1623.3 916,1623.4 918,1622.8 920,1623.4 922,1622.9 924,1622.7 926,1622.7 928,1623.2 930,1623 932,1623.6 934,1623.4 936,1623.5 938,1623 940,1622.7 942,1622.5 944,1623 946,1623.5 948,1623.5 950,1622.5 952,1623.2 954,1623.3 956,1622.8 958,1623.1 960,1622.8 962,1623.2 964,1623.2 966,1623 968,1623.1 970,1622.9 972,1623.1 974,1622 976,1623.3 978,1623.5 980,1622.6 982,1623 984,1623.3 986,1622.9 988,1622.9 990,1623.1 992,1623.4 994,1622.6 996,1623.2 998,1623.3 1000,1622.6 1002,1623.2 1004,1623.6 1006,1623.1 1008,1623 1010,1623.6 1012,1622.9 1014,1623 1016,1623.6 1018,1623.7 1020,1622.7 1022,1623 1024,1623.3 1026,1623.5 1028,1623.3 1030,1622.9 1032,1623.4 1034,1622.3 1036,1623.1 1038,1623.4 1040,1623.5 1042,1623.3 1044,1622.6 1046,1623.4 1048,1622.9 1050,1622.9 1052,1623.5 1054,1622.4 1056,1623.9 1058,1623.4 1060,1623.4 1062,1623 1064,1623.3 1066,1623.3 1068,1623.2 1070,1622.6 1072,1623.3 1074,1623.2 1076,1623.4 1078,1623.2 1080,1623.2 1082,1623.2 1084,1622.6 1086,1622.5 1088,1623.1 1090,1622.9 1092,1623.3 1094,1622.7 1096,1622.9 1098,1623.3 1100,1623.1 1102,1622.8 1104,1623.3 1106,1623.2 1108,1622.7 1110,1622.9 1112,1623.2 1114,1623 1116,1623 1118,1622.9 1120,1622.2 1122,1623.3 1124,1623.2 1126,1623.1 1128,1622.5 1130,1623 1132,1623.1 1134,1623 1136,1623.1 1138,1622.3 1140,1623.3 1142,1623.3 1144,1623.3 1146,1623.5 1148,1623.2 1150,1623.6 1152,1622.7 1154,1623.3 1156,1623 1158,1623.6 1160,1622.9 1162,1622.9 1164,1622.9 1166,1623.3 1168,1622.8 1170,1623.4 1172,1623.3 1174,1623.1 1176,1623.1 1178,1622.9 1180,1623.7 1182,1623.4 1184,1622.7 1186,1623.4 1188,1622.7 1190,1623.2 1192,1623.3 1194,1623 1196,1622.9 1198,1623.2 1200,1623.3 1202,1623.1 1204,1623.2 1206,1622.6 1208,1623 1210,1622.7 1212,1623.1 1214,1622.7 1216,1622.8 1218,1622.7 1220,1622.9 1222,1622.9 1224,1623 1226,1623.2 1228,1622.7 1230,1623.6 1232,1622.9 1234,1622.8 1236,1623.1 1238,1622.9 1240,1622.9 1242,1623.1 1244,1622.6 1246,1623.4 1248,1622.5 1250,1622.8 1252,1623.4 1254,1623.4 1256,1623.1 1258,1622.5 1260,1622.9 1262,1622.8 1264,1622.8 1266,1622.9 1268,1623.2 1270,1623.3 1272,1623.1 1274,1622.7 1276,1623 1278,1623.1 1280,1623.3 1282,1622.8 1284,1622.9 1286,1622.8 1288,1622.6 1290,1623.2 1292,1622.8 1294,1623.4 1296,1623.3 1298,1623 1300,1623.1 1302,1622.9 1304,1623.1 1306,1623.1 1308,1623.5 1310,1622.9 1312,1623.4 1314,1623.3 1316,1623.2 1318,1622.7 1320,1622.7 1322,1623.1 1324,1623.1 1326,1622.6 1328,1623.7 1330,1623.1 1332,1623 1334,1623.3 1336,1622.8 1338,1622.3 1340,1623 1342,1622.8 1344,1623.1 1346,1623.1 1348,1622.5 1350,1622.8 1352,1623.4 1354,1623.6 1356,1623.1 1358,1623.1 1360,1623.2 1362,1623.2 1364,1624 1366,1623.7 1368,1622.9 1370,1623 1372,1623.5 1374,1623.3 1376,1623.4 1378,1623.3 1380,1622.8 1382,1622.7 1384,1622.6 1386,1622.9 1388,1623.3 1390,1622.9 1392,1623.8 1394,1622.6 1396,1623 1398,1623.5 1400,1623.8 1402,1622.8 1404,1623.2 1406,1623.4 1408,1622.4 1410,1623.4 1412,1623.2 1414,1623 1416,1623.4 1418,1623.1 1420,1622.8 1422,1623.6 1424,1622.9 1426,1623.6 1428,1622.3 1430,1623.4 1432,1623 1434,1623.2 1436,1623.2 1438,1623.5 1440,1622.8 1442,1623 1444,1623 1446,1623.3 1448,1623.1 1450,1623.2 1452,1623.2 1454,1622.5 1456,1623 1458,1623.1 1460,1623.2 1462,1624 1464,1623.4 1466,1623.6 1468,1623 1470,1623.4 1472,1623.7 1474,1623 1476,1622.9 1478,1622.6 1480,1622.7 1482,1623.7 1484,1622.6 1486,1623.1 1488,1623.4 1490,1623.2 1492,1623.2 1494,1623.1 1496,1623.5 1498,1622.6 1500,1623 1502,1623.1 1504,1622.5 1506,1622.9 1508,1623 1510,1623.6 1512,1622.9 1514,1623.5 1516,1622.9 1518,1623.7 1520,1623 1522,1623.5 1524,1624.1 1526,1623.5 1528,1623.6 1530,1622.7 1532,1623.3 1534,1623.4 1536,1623 1538,1623.2 1540,1622.7 1542,1622.9 1544,1622.7 1546,1622.6 1548,1623.4 1550,1622.8 1552,1623.2 1554,1623.8 1556,1623.5 1558,1622.9 1560,1623 1562,1622.9 1564,1623.1 1566,1623.7 1568,1623.7 1570,1622.9 1572,1622.6 1574,1623.5 1576,1622.3 1578,1623.3 1580,1622.3 1582,1623.2 1584,1623.2 1586,1623 1588,1622.7 1590,1623.3 1592,1623.3 1594,1623.2 1596,1623.9 1598,1623 1600,1622.9 1602,1623.6 1604,1624.2 1606,1622.9 1608,1623 1610,1622.9 1612,1623.2 1614,1623.4 1616,1622.9 1618,1623 1620,1622.8 1622,1623.2 1624,1623 1626,1623.2 1628,1623 1630,1623.2 1632,1622.5 1634,1622.9 1636,1623 1638,1623.2 1640,1622.7 1642,1622.9 1644,1623.4 1646,1623.3 1648,1622.9 1650,1623.1 1652,1623 1654,1623.2 1656,1623 1658,1622.8 1660,1623.1 1662,1622.6 1664,1623.3 1666,1623.4 1668,1623.4 1670,1622.6 1672,1623.1 1674,1623.4 1676,1623.2 1678,1623.2 1680,1623.2 1682,1623.4 1684,1623.1 1686,1622.5 1688,1623.2 1690,1623.9 1692,1623.4 1694,1623.3 1696,1623.8 1698,1622.8 1700,1622.8 1702,1623 1704,1623.3 1706,1623.7 1708,1623.5 1710,1623.1 1712,1623.6 1714,1623.2 1716,1623.2 1718,1623.1 1720,1622.8 1722,1623 1724,1622.8 1726,1622.4 1728,1622.8 1730,1623.6 1732,1623 1734,1622.6 1736,1623.2 1738,1624 1740,1623.1 1742,1624 1744,1623.3 1746,1622.4 1748,1623.2 1750,1623.9 1752,1623.3 1754,1622.7 1756,1623.3 1758,1623.6 1760,1622.6 1762,1623.2 1764,1623.3 1766,1623.5 1768,1623 1770,1622.8 1772,1623.4 1774,1623.3 1776,1623.1 1778,1623 1780,1623.4 1782,1623 1784,1623.9 1786,1623 1788,1623.6 1790,1623.5 1792,1623.3 1794,1623.1 1796,1623.5 1798,1623.2 1800,1622.8 1802,1623.2 1804,1623.3 1806,1622.5 1808,1623.5 1810,1622.5 1812,1623.2 1814,1623.1 1816,1622.5 1818,1623 1820,1622.7 1822,1623.2 1824,1622.9 1826,1623.2 1828,1623.2 1830,1623.5 1832,1622.8 1834,1623.7 1836,1622.4 1838,1622.7 1840,1622.9 1842,1622.5 1844,1622.5 1846,1623.2 1848,1622.5 1850,1622.8 1852,1623.4 1854,1623.5 1856,1623 1858,1623.3 1860,1623.4 1862,1623.3 1864,1623 1866,1622.8 1868,1622.6 1870,1623.6 1872,1623.3 1874,1623 1876,1623.1 1878,1623.4 1880,1623.4 1882,1623.1 1884,1622.7 1886,1623.4 1888,1622.9 1890,1622.6 1892,1623.6 1894,1623.7 1896,1623.2 1898,1623.1 1900,1623.1 1902,1623 1904,1622.9 1906,1622.8 1908,1622.8 1910,1622.9 1912,1623 1914,1623.1 1916,1623.2 1918,1622.7 1920,1623.3 1922,1622.7 1924,1622.7 1926,1623.2 1928,1622.5 1930,1623 1932,1622.4 1934,1622.9 1936,1623.3 1938,1623.4 1940,1622.7 1942,1622.7 1944,1623.6 1946,1623.2 1948,1623.6 1950,1622.5 1952,1623.6 1954,1623.2 1956,1622.7 1958,1623.1 1960,1623.6 1962,1623.3 1964,1622.7 1966,1622.5 1968,1623.5 1970,1623 1972,1622.8 1974,1622.9 1976,1622.8 1978,1622.6 1980,1623 1982,1623.2 1984,1622.6 1986,1623.5 1988,1622.8 1990,1623.2 1992,1623.4 1994,1623.4 1996,1623.6 1998,1622.5 2000,1622.4 2002,1622.5 2004,1622.9 2006,1623.2 2008,1622.7 2010,1622.7 2012,1622.9 2014,1622.9 2016,1623.8 2018,1622.7 2020,1623.7 2022,1623.9 2024,1623 2026,1623 2028,1623 2030,1622.8 2032,1622.9 2034,1622.6 2036,1623.2 2038,1623.4 2040,1622.8 2042,1623.4 2044,1622.9 2046,1622.8 2048,1623.1 2050,1623 2052,1623.7 2054,1623.6 2056,1623.6 2058,1623.4 2060,1622.6 2062,1622.9 2064,1623 2066,1623.7 2068,1622.8 2070,1623.5 2072,1622.4 2074,1622.9 2076,1623 2078,1623.5 2080,1623.4 2082,1623.1 2084,1623.3 2086,1622.6 2088,1622.5 2090,1623.5 2092,1624.1 2094,1623.5 2096,1622.9 2098,1623.3 2100,1622.5 2102,1623 2104,1623 2106,1623.6 2108,1623.2 2110,1623.4 2112,1622.6 2114,1623 2116,1622.8 2118,1623.4 2120,1623.2 2122,1623.2 2124,1622.4 2126,1623.7 2128,1623 2130,1623.1 2132,1624 2134,1623.6 2136,1623.2 2138,1623.4 2140,1622.6 2142,1622.8 2144,1623.4 2146,1622.9 2148,1623 2150,1622.6 2152,1622.9 2154,1622.9 2156,1622.9 2158,1623.7 2160,1623.1 2162,1623.1 2164,1623.5 2166,1623 2168,1623.3 2170,1622.4 2172,1623 2174,1623.3 2176,1622.8 2178,1623.3 2180,1623 2182,1623.3 2184,1623.5 2186,1623 2188,1622.7 2190,1622.7 2192,1623.1 2194,1623.1 2196,1622.5 2198,1623.4 2200,1623.5 2202,1623.1 2204,1623.2 2206,1623.2 2208,1622.8 2210,1623.1 2212,1623.2 2214,1623 2216,1622.6 2218,1622.6 2220,1622.9" fill="none" stroke="#ff0000" stroke-width="4.2" stroke-linejoin="round"/>
<path d="M352 1623.4L355.2 1378.7L358.6 1378.7L361.8 1623.4ZM316.4 1623.4V1598H322.1V1623.4ZM376.9 1623.4V1581.4H381.3V1623.4ZM383.7 1623.4V1557.4H388.6V1623.4ZM404.8 1623.4V1607.9H408.7V1623.4ZM410.5 1623.4V1600.2H414.1V1623.4ZM420.3 1623.4V1583.6H424.3V1623.4ZM251.9 1623.4V1609H258.1V1623.4ZM236.2 1623.4V1617.9H240.6V1623.4ZM449.5 1623.4V1619H454.8V1623.4ZM479.2 1623.4V1611.3H484.9V1623.4ZM499.1 1623.4V1576.9H503.5V1623.4ZM504 1623.4V1609H507.5V1623.4ZM349.2 1623.4V1610.1H353.6V1623.4ZM360.7 1623.4V1607.9H364.2V1623.4ZM397.7 1623.4V1615.7H401.2V1623.4ZM416.1 1623.4V1613.5H419.6V1623.4ZM472.5 1623.4V1619.4H476.1V1623.4ZM2119 1623.4L2120.7 1404.2L2122.5 1404.2L2124.2 1623.4ZM2114.8 1623.4V1593H2117.8V1623.4Z" fill="#ff0000" stroke="#ff0000" stroke-width="2.2" stroke-linejoin="round"/>
</g>
<line x1="202.6" y1="448.3" x2="2234.6" y2="448.3" stroke="#0000ff" stroke-width="4.1" stroke-dasharray="4.1 3.9"/>
<rect x="1826.3" y="171.4" width="388.4" height="38.9" fill="#fff" stroke="#262626" stroke-width="1.1"/>
<line x1="1832.4" y1="190.9" x2="1894.5" y2="190.9" stroke="#ff0000" stroke-width="1.1" />
<text x="1899.8" y="201.7" class="lg" fill="#000">Ne</text>
<line x1="1941.7" y1="190.9" x2="2003.3" y2="190.9" stroke="#00ffff" stroke-width="4.2" />
<text x="2009.4" y="201.7" class="lg" fill="#000">bNe</text>
<line x1="2066.6" y1="190.9" x2="2128.2" y2="190.9" stroke="#ff00ff" stroke-width="4.2" />
<text x="2134.8" y="201.7" class="lg" fill="#000">2*bNe</text>
<rect x="1706.3" y="469.4" width="508.4" height="39" fill="#fff" stroke="#262626" stroke-width="1.1"/>
<line x1="1713.6" y1="488.9" x2="1774.9" y2="488.9" stroke="#ff0000" stroke-width="4.2" />
<text x="1781" y="499.7" class="lg" fill="#000">ROD</text>
<line x1="1847.5" y1="488.9" x2="1908.8" y2="488.9" stroke="#000" stroke-width="4.2" />
<text x="1914.9" y="499.7" class="lg" fill="#000">RODI10s</text>
<line x1="2031.3" y1="488.9" x2="2093.9" y2="488.9" stroke="#00ff00" stroke-width="4.2" />
<text x="2100" y="499.7" class="lg" fill="#000">RODI20s</text>
<rect x="1681.5" y="768.5" width="533" height="37.7" fill="#fff" stroke="#262626" stroke-width="1.1"/>
<line x1="1687.8" y1="787.4" x2="1749.5" y2="787.4" stroke="#ff0000" stroke-width="4.2" />
<text x="1755.2" y="798.1" class="lg" fill="#000"><tspan class="dl2" textLength="20.5" lengthAdjust="spacingAndGlyphs">&#916;</tspan><tspan dx="4.3">&#8203;</tspan>Ne10s</text>
<line x1="1863.5" y1="787.4" x2="1925.1" y2="787.4" stroke="#000" stroke-width="4.2" />
<text x="1931.9" y="798.1" class="lg" fill="#000"><tspan class="dl2" textLength="20.5" lengthAdjust="spacingAndGlyphs">&#916;</tspan><tspan dx="4.3">&#8203;</tspan>Ne20s</text>
<line x1="2040.6" y1="787.4" x2="2102.5" y2="787.4" stroke="#00ff00" stroke-width="4.2" />
<text x="2108.5" y="798.1" class="lg" fill="#000"><tspan class="dl2" textLength="20.5" lengthAdjust="spacingAndGlyphs">&#916;</tspan><tspan dx="4.3">&#8203;</tspan>Ne40s</text>
<rect x="1517.4" y="1066.5" width="696.7" height="38.2" fill="#fff" stroke="#262626" stroke-width="1.1"/>
<line x1="1523.4" y1="1085.6" x2="1585.6" y2="1085.6" stroke="#ff0000" stroke-width="1.1" />
<text x="1591.6" y="1096.4" class="lg" fill="#000"><tspan class="nb2" textLength="19.5" lengthAdjust="spacingAndGlyphs">&#8711;</tspan><tspan dx="4.6">&#8203;</tspan>Ne@20km</text>
<line x1="1749.8" y1="1085.6" x2="1811.4" y2="1085.6" stroke="#000" stroke-width="4.2" />
<text x="1818.9" y="1096.4" class="lg" fill="#000"><tspan class="nb2" textLength="19.5" lengthAdjust="spacingAndGlyphs">&#8711;</tspan><tspan dx="4.6">&#8203;</tspan>Ne@50km</text>
<line x1="1975.4" y1="1085.6" x2="2037.5" y2="1085.6" stroke="#00ff00" stroke-width="4.2" />
<text x="2045" y="1096.4" class="lg" fill="#000"><tspan class="nb2" textLength="19.5" lengthAdjust="spacingAndGlyphs">&#8711;</tspan><tspan dx="4.6">&#8203;</tspan>Ne@100km</text>
<text x="1219.4" y="134.2" text-anchor="middle" class="ti" fill="#000" xml:space="preserve">20170907  Sat_A</text>
<text x="248.1" y="549.6" class="fac">FAC</text>
<rect x="2235.2" y="497.3" width="652.6" height="462" fill="#fff"/>
<g clip-path="url(#mc)"><g filter="url(#bl)">
<path d="M2217.1 473.2h154.4v13.1h-154.4zM2788.1 473.2h118.1v13.1h-118.1zM2217.1 486h154.4v13.1h-154.4zM2788.1 486h118.1v13.1h-118.1zM2217.1 498.7h154.4v13.1h-154.4zM2788.1 498.7h118.1v13.1h-118.1zM2217.1 511.5h172.5v13.1h-172.5zM2770 511.5h136.3v13.1h-136.3zM2334.9 524.3h63.7v13.1h-63.7zM2760.9 524.3h63.7v13.1h-63.7zM2380.2 537.1h27.5v13.1h-27.5zM2751.8 537.1h27.5v13.1h-27.5zM2389.3 549.8h18.4v13.1h-18.4zM2751.8 549.8h18.4v13.1h-18.4zM2389.3 562.6h27.5v13.1h-27.5zM2751.8 562.6h18.4v13.1h-18.4zM2398.3 575.4h18.4v13.1h-18.4zM2751.8 575.4h9.4v13.1h-9.4zM2398.3 588.1h18.4v13.1h-18.4zM2742.8 588.1h18.4v13.1h-18.4zM2398.3 600.9h18.4v13.1h-18.4zM2742.8 600.9h9.4v13.1h-9.4zM2398.3 613.7h18.4v13.1h-18.4zM2733.7 613.7h9.4v13.1h-9.4zM2398.3 626.4h18.4v13.1h-18.4zM2724.7 626.4h9.4v13.1h-9.4zM2398.3 639.2h18.4v13.1h-18.4zM2407.4 652h9.4v13.1h-9.4zM2416.5 664.8h9.4v13.1h-9.4zM2706.5 664.8h9.4v13.1h-9.4zM2425.5 677.5h9.4v13.1h-9.4zM2706.5 677.5h9.4v13.1h-9.4zM2479.9 690.3h9.4v13.1h-9.4zM2525.2 690.3h27.5v13.1h-27.5zM2570.6 703.1h9.4v13.1h-9.4zM2570.6 715.8h9.4v13.1h-9.4zM2715.6 715.8h9.4v13.1h-9.4zM2489 728.6h9.4v13.1h-9.4zM2724.7 728.6h9.4v13.1h-9.4zM2733.7 741.4h9.4v13.1h-9.4zM2742.8 754.1h9.4v13.1h-9.4zM2452.7 766.9h9.4v13.1h-9.4zM2742.8 766.9h9.4v13.1h-9.4zM2443.7 779.7h9.4v13.1h-9.4zM2742.8 779.7h9.4v13.1h-9.4zM2742.8 792.5h9.4v13.1h-9.4zM2742.8 805.2h9.4v13.1h-9.4zM2416.5 818h9.4v13.1h-9.4zM2751.8 818h9.4v13.1h-9.4zM2407.4 830.8h9.4v13.1h-9.4zM2751.8 830.8h9.4v13.1h-9.4zM2407.4 843.5h9.4v13.1h-9.4zM2751.8 843.5h18.4v13.1h-18.4zM2407.4 856.3h9.4v13.1h-9.4zM2760.9 856.3h9.4v13.1h-9.4zM2407.4 869.1h9.4v13.1h-9.4zM2751.8 869.1h18.4v13.1h-18.4zM2407.4 881.8h9.4v13.1h-9.4zM2751.8 881.8h18.4v13.1h-18.4zM2398.3 894.6h18.4v13.1h-18.4zM2751.8 894.6h18.4v13.1h-18.4zM2389.3 907.4h18.4v13.1h-18.4zM2751.8 907.4h27.5v13.1h-27.5zM2353 920.1h45.6v13.1h-45.6zM2760.9 920.1h54.7v13.1h-54.7zM2217.1 932.9h172.5v13.1h-172.5zM2770 932.9h136.3v13.1h-136.3zM2217.1 945.7h154.4v13.1h-154.4zM2788.1 945.7h118.1v13.1h-118.1zM2217.1 958.5h154.4v13.1h-154.4zM2788.1 958.5h118.1v13.1h-118.1zM2217.1 971.2h154.4v13.1h-154.4zM2788.1 971.2h118.1v13.1h-118.1z" fill="#0050ff"/>
<path d="M2371.2 473.2h36.6v13.1h-36.6zM2751.8 473.2h36.6v13.1h-36.6zM2371.2 486h36.6v13.1h-36.6zM2751.8 486h36.6v13.1h-36.6zM2371.2 498.7h36.6v13.1h-36.6zM2751.8 498.7h36.6v13.1h-36.6zM2389.3 511.5h18.4v13.1h-18.4zM2751.8 511.5h18.4v13.1h-18.4zM2398.3 524.3h18.4v13.1h-18.4zM2742.8 524.3h18.4v13.1h-18.4zM2407.4 537.1h9.4v13.1h-9.4zM2742.8 537.1h9.4v13.1h-9.4zM2407.4 549.8h18.4v13.1h-18.4zM2733.7 549.8h18.4v13.1h-18.4zM2416.5 562.6h9.4v13.1h-9.4zM2733.7 562.6h18.4v13.1h-18.4zM2416.5 575.4h9.4v13.1h-9.4zM2733.7 575.4h18.4v13.1h-18.4zM2416.5 588.1h9.4v13.1h-9.4zM2733.7 588.1h9.4v13.1h-9.4zM2416.5 600.9h9.4v13.1h-9.4zM2733.7 600.9h9.4v13.1h-9.4zM2416.5 613.7h9.4v13.1h-9.4zM2724.7 613.7h9.4v13.1h-9.4zM2416.5 626.4h9.4v13.1h-9.4zM2715.6 626.4h9.4v13.1h-9.4zM2416.5 639.2h9.4v13.1h-9.4zM2715.6 639.2h9.4v13.1h-9.4zM2416.5 652h9.4v13.1h-9.4zM2706.5 652h9.4v13.1h-9.4zM2425.5 664.8h9.4v13.1h-9.4zM2434.6 677.5h9.4v13.1h-9.4zM2470.9 677.5h18.4v13.1h-18.4zM2489 690.3h36.6v13.1h-36.6zM2552.4 690.3h9.4v13.1h-9.4zM2706.5 690.3h9.4v13.1h-9.4zM2706.5 703.1h9.4v13.1h-9.4zM2561.5 728.6h9.4v13.1h-9.4zM2733.7 754.1h9.4v13.1h-9.4zM2733.7 766.9h9.4v13.1h-9.4zM2733.7 779.7h9.4v13.1h-9.4zM2434.6 792.5h9.4v13.1h-9.4zM2733.7 792.5h9.4v13.1h-9.4zM2425.5 805.2h9.4v13.1h-9.4zM2733.7 805.2h9.4v13.1h-9.4zM2425.5 818h9.4v13.1h-9.4zM2742.8 818h9.4v13.1h-9.4zM2416.5 830.8h9.4v13.1h-9.4zM2742.8 830.8h9.4v13.1h-9.4zM2416.5 843.5h9.4v13.1h-9.4zM2742.8 843.5h9.4v13.1h-9.4zM2416.5 856.3h9.4v13.1h-9.4zM2751.8 856.3h9.4v13.1h-9.4zM2416.5 869.1h9.4v13.1h-9.4zM2742.8 869.1h9.4v13.1h-9.4zM2416.5 881.8h9.4v13.1h-9.4zM2742.8 881.8h9.4v13.1h-9.4zM2416.5 894.6h9.4v13.1h-9.4zM2742.8 894.6h9.4v13.1h-9.4zM2407.4 907.4h18.4v13.1h-18.4zM2742.8 907.4h9.4v13.1h-9.4zM2398.3 920.1h18.4v13.1h-18.4zM2742.8 920.1h18.4v13.1h-18.4zM2389.3 932.9h18.4v13.1h-18.4zM2751.8 932.9h18.4v13.1h-18.4zM2371.2 945.7h36.6v13.1h-36.6zM2751.8 945.7h36.6v13.1h-36.6zM2371.2 958.5h36.6v13.1h-36.6zM2751.8 958.5h36.6v13.1h-36.6zM2371.2 971.2h36.6v13.1h-36.6zM2751.8 971.2h36.6v13.1h-36.6z" fill="#0040ff"/>
<path d="M2407.4 473.2h18.4v13.1h-18.4zM2733.7 473.2h18.4v13.1h-18.4zM2407.4 486h18.4v13.1h-18.4zM2733.7 486h18.4v13.1h-18.4zM2407.4 498.7h18.4v13.1h-18.4zM2733.7 498.7h18.4v13.1h-18.4zM2407.4 511.5h18.4v13.1h-18.4zM2733.7 511.5h18.4v13.1h-18.4zM2416.5 524.3h18.4v13.1h-18.4zM2724.7 524.3h18.4v13.1h-18.4zM2416.5 537.1h18.4v13.1h-18.4zM2724.7 537.1h18.4v13.1h-18.4zM2425.5 549.8h9.4v13.1h-9.4zM2724.7 549.8h9.4v13.1h-9.4zM2425.5 562.6h9.4v13.1h-9.4zM2724.7 562.6h9.4v13.1h-9.4zM2425.5 575.4h9.4v13.1h-9.4zM2724.7 575.4h9.4v13.1h-9.4zM2425.5 588.1h9.4v13.1h-9.4zM2724.7 588.1h9.4v13.1h-9.4zM2425.5 600.9h9.4v13.1h-9.4zM2715.6 600.9h18.4v13.1h-18.4zM2425.5 613.7h9.4v13.1h-9.4zM2715.6 613.7h9.4v13.1h-9.4zM2425.5 626.4h9.4v13.1h-9.4zM2425.5 639.2h9.4v13.1h-9.4zM2706.5 639.2h9.4v13.1h-9.4zM2425.5 652h18.4v13.1h-18.4zM2434.6 664.8h9.4v13.1h-9.4zM2489 664.8h9.4v13.1h-9.4zM2697.5 664.8h9.4v13.1h-9.4zM2443.7 677.5h27.5v13.1h-27.5zM2489 677.5h9.4v13.1h-9.4zM2697.5 677.5h9.4v13.1h-9.4zM2561.5 690.3h9.4v13.1h-9.4zM2579.6 703.1h9.4v13.1h-9.4zM2579.6 715.8h9.4v13.1h-9.4zM2706.5 715.8h9.4v13.1h-9.4zM2715.6 728.6h9.4v13.1h-9.4zM2516.2 741.4h27.5v13.1h-27.5zM2724.7 741.4h9.4v13.1h-9.4zM2724.7 754.1h9.4v13.1h-9.4zM2724.7 766.9h9.4v13.1h-9.4zM2724.7 779.7h9.4v13.1h-9.4zM2443.7 792.5h9.4v13.1h-9.4zM2724.7 792.5h9.4v13.1h-9.4zM2434.6 805.2h9.4v13.1h-9.4zM2724.7 805.2h9.4v13.1h-9.4zM2724.7 818h18.4v13.1h-18.4zM2425.5 830.8h9.4v13.1h-9.4zM2733.7 830.8h9.4v13.1h-9.4zM2425.5 843.5h9.4v13.1h-9.4zM2425.5 856.3h9.4v13.1h-9.4zM2742.8 856.3h9.4v13.1h-9.4zM2425.5 869.1h9.4v13.1h-9.4zM2425.5 881.8h9.4v13.1h-9.4zM2733.7 881.8h9.4v13.1h-9.4zM2425.5 894.6h9.4v13.1h-9.4zM2733.7 894.6h9.4v13.1h-9.4zM2425.5 907.4h9.4v13.1h-9.4zM2724.7 907.4h18.4v13.1h-18.4zM2416.5 920.1h18.4v13.1h-18.4zM2733.7 920.1h9.4v13.1h-9.4zM2407.4 932.9h18.4v13.1h-18.4zM2733.7 932.9h18.4v13.1h-18.4zM2407.4 945.7h18.4v13.1h-18.4zM2733.7 945.7h18.4v13.1h-18.4zM2407.4 958.5h18.4v13.1h-18.4zM2733.7 958.5h18.4v13.1h-18.4zM2407.4 971.2h18.4v13.1h-18.4zM2733.7 971.2h18.4v13.1h-18.4z" fill="#0030ff"/>
<path d="M2425.5 473.2h9.4v13.1h-9.4zM2724.7 473.2h9.4v13.1h-9.4zM2425.5 486h9.4v13.1h-9.4zM2724.7 486h9.4v13.1h-9.4zM2425.5 498.7h9.4v13.1h-9.4zM2724.7 498.7h9.4v13.1h-9.4zM2425.5 511.5h18.4v13.1h-18.4zM2715.6 511.5h18.4v13.1h-18.4zM2434.6 524.3h9.4v13.1h-9.4zM2715.6 524.3h9.4v13.1h-9.4zM2434.6 537.1h9.4v13.1h-9.4zM2715.6 537.1h9.4v13.1h-9.4zM2434.6 549.8h9.4v13.1h-9.4zM2715.6 549.8h9.4v13.1h-9.4zM2434.6 562.6h9.4v13.1h-9.4zM2715.6 562.6h9.4v13.1h-9.4zM2434.6 575.4h9.4v13.1h-9.4zM2715.6 575.4h9.4v13.1h-9.4zM2434.6 588.1h18.4v13.1h-18.4zM2715.6 588.1h9.4v13.1h-9.4zM2434.6 600.9h18.4v13.1h-18.4zM2706.5 600.9h9.4v13.1h-9.4zM2434.6 613.7h18.4v13.1h-18.4zM2706.5 613.7h9.4v13.1h-9.4zM2434.6 626.4h18.4v13.1h-18.4zM2706.5 626.4h9.4v13.1h-9.4zM2434.6 639.2h18.4v13.1h-18.4zM2443.7 652h9.4v13.1h-9.4zM2697.5 652h9.4v13.1h-9.4zM2443.7 664.8h9.4v13.1h-9.4zM2479.9 664.8h9.4v13.1h-9.4zM2498.1 664.8h9.4v13.1h-9.4zM2498.1 677.5h9.4v13.1h-9.4zM2570.6 690.3h9.4v13.1h-9.4zM2697.5 690.3h9.4v13.1h-9.4zM2697.5 703.1h9.4v13.1h-9.4zM2570.6 728.6h9.4v13.1h-9.4zM2479.9 741.4h9.4v13.1h-9.4zM2498.1 741.4h18.4v13.1h-18.4zM2543.4 741.4h9.4v13.1h-9.4zM2715.6 741.4h9.4v13.1h-9.4zM2715.6 754.1h9.4v13.1h-9.4zM2461.8 766.9h9.4v13.1h-9.4zM2715.6 766.9h9.4v13.1h-9.4zM2452.7 779.7h9.4v13.1h-9.4zM2715.6 779.7h9.4v13.1h-9.4zM2715.6 792.5h9.4v13.1h-9.4zM2443.7 805.2h9.4v13.1h-9.4zM2715.6 805.2h9.4v13.1h-9.4zM2434.6 818h9.4v13.1h-9.4zM2434.6 830.8h9.4v13.1h-9.4zM2724.7 830.8h9.4v13.1h-9.4zM2434.6 843.5h9.4v13.1h-9.4zM2733.7 843.5h9.4v13.1h-9.4zM2434.6 856.3h9.4v13.1h-9.4zM2733.7 856.3h9.4v13.1h-9.4zM2434.6 869.1h9.4v13.1h-9.4zM2733.7 869.1h9.4v13.1h-9.4zM2434.6 881.8h9.4v13.1h-9.4zM2724.7 881.8h9.4v13.1h-9.4zM2434.6 894.6h9.4v13.1h-9.4zM2724.7 894.6h9.4v13.1h-9.4zM2434.6 907.4h9.4v13.1h-9.4zM2715.6 907.4h9.4v13.1h-9.4zM2434.6 920.1h9.4v13.1h-9.4zM2715.6 920.1h18.4v13.1h-18.4zM2425.5 932.9h18.4v13.1h-18.4zM2715.6 932.9h18.4v13.1h-18.4zM2425.5 945.7h9.4v13.1h-9.4zM2724.7 945.7h9.4v13.1h-9.4zM2425.5 958.5h9.4v13.1h-9.4zM2724.7 958.5h9.4v13.1h-9.4zM2425.5 971.2h9.4v13.1h-9.4zM2724.7 971.2h9.4v13.1h-9.4z" fill="#0020ff"/>
<path d="M2434.6 473.2h18.4v13.1h-18.4zM2706.5 473.2h18.4v13.1h-18.4zM2434.6 486h18.4v13.1h-18.4zM2706.5 486h18.4v13.1h-18.4zM2434.6 498.7h18.4v13.1h-18.4zM2706.5 498.7h18.4v13.1h-18.4zM2443.7 511.5h9.4v13.1h-9.4zM2706.5 511.5h9.4v13.1h-9.4zM2443.7 524.3h9.4v13.1h-9.4zM2706.5 524.3h9.4v13.1h-9.4zM2443.7 537.1h9.4v13.1h-9.4zM2706.5 537.1h9.4v13.1h-9.4zM2443.7 549.8h18.4v13.1h-18.4zM2706.5 549.8h9.4v13.1h-9.4zM2443.7 562.6h18.4v13.1h-18.4zM2706.5 562.6h9.4v13.1h-9.4zM2443.7 575.4h18.4v13.1h-18.4zM2706.5 575.4h9.4v13.1h-9.4zM2452.7 588.1h9.4v13.1h-9.4zM2706.5 588.1h9.4v13.1h-9.4zM2452.7 600.9h9.4v13.1h-9.4zM2697.5 600.9h9.4v13.1h-9.4zM2452.7 613.7h9.4v13.1h-9.4zM2697.5 613.7h9.4v13.1h-9.4zM2452.7 626.4h9.4v13.1h-9.4zM2697.5 626.4h9.4v13.1h-9.4zM2452.7 639.2h9.4v13.1h-9.4zM2697.5 639.2h9.4v13.1h-9.4zM2452.7 652h9.4v13.1h-9.4zM2489 652h18.4v13.1h-18.4zM2688.4 652h9.4v13.1h-9.4zM2452.7 664.8h27.5v13.1h-27.5zM2507.1 664.8h9.4v13.1h-9.4zM2688.4 664.8h9.4v13.1h-9.4zM2507.1 677.5h27.5v13.1h-27.5zM2688.4 677.5h9.4v13.1h-9.4zM2579.6 690.3h9.4v13.1h-9.4zM2588.7 703.1h9.4v13.1h-9.4zM2588.7 715.8h9.4v13.1h-9.4zM2697.5 715.8h9.4v13.1h-9.4zM2579.6 728.6h9.4v13.1h-9.4zM2706.5 728.6h9.4v13.1h-9.4zM2489 741.4h9.4v13.1h-9.4zM2552.4 741.4h9.4v13.1h-9.4zM2706.5 741.4h9.4v13.1h-9.4zM2470.9 754.1h9.4v13.1h-9.4zM2706.5 754.1h9.4v13.1h-9.4zM2706.5 766.9h9.4v13.1h-9.4zM2461.8 779.7h9.4v13.1h-9.4zM2697.5 779.7h18.4v13.1h-18.4zM2452.7 792.5h9.4v13.1h-9.4zM2697.5 792.5h18.4v13.1h-18.4zM2452.7 805.2h9.4v13.1h-9.4zM2706.5 805.2h9.4v13.1h-9.4zM2443.7 818h9.4v13.1h-9.4zM2715.6 818h9.4v13.1h-9.4zM2443.7 830.8h9.4v13.1h-9.4zM2443.7 843.5h9.4v13.1h-9.4zM2724.7 843.5h9.4v13.1h-9.4zM2443.7 856.3h9.4v13.1h-9.4zM2724.7 856.3h9.4v13.1h-9.4zM2443.7 869.1h9.4v13.1h-9.4zM2724.7 869.1h9.4v13.1h-9.4zM2443.7 881.8h9.4v13.1h-9.4zM2715.6 881.8h9.4v13.1h-9.4zM2443.7 894.6h18.4v13.1h-18.4zM2715.6 894.6h9.4v13.1h-9.4zM2443.7 907.4h9.4v13.1h-9.4zM2706.5 907.4h9.4v13.1h-9.4zM2443.7 920.1h9.4v13.1h-9.4zM2706.5 920.1h9.4v13.1h-9.4zM2443.7 932.9h9.4v13.1h-9.4zM2706.5 932.9h9.4v13.1h-9.4zM2434.6 945.7h18.4v13.1h-18.4zM2706.5 945.7h18.4v13.1h-18.4zM2434.6 958.5h18.4v13.1h-18.4zM2706.5 958.5h18.4v13.1h-18.4zM2434.6 971.2h18.4v13.1h-18.4zM2706.5 971.2h18.4v13.1h-18.4z" fill="#0010ff"/>
<path d="M2452.7 473.2h18.4v13.1h-18.4zM2688.4 473.2h18.4v13.1h-18.4zM2452.7 486h18.4v13.1h-18.4zM2688.4 486h18.4v13.1h-18.4zM2452.7 498.7h18.4v13.1h-18.4zM2688.4 498.7h18.4v13.1h-18.4zM2452.7 511.5h18.4v13.1h-18.4zM2688.4 511.5h18.4v13.1h-18.4zM2452.7 524.3h18.4v13.1h-18.4zM2688.4 524.3h18.4v13.1h-18.4zM2452.7 537.1h18.4v13.1h-18.4zM2697.5 537.1h9.4v13.1h-9.4zM2461.8 549.8h9.4v13.1h-9.4zM2697.5 549.8h9.4v13.1h-9.4zM2461.8 562.6h9.4v13.1h-9.4zM2697.5 562.6h9.4v13.1h-9.4zM2461.8 575.4h9.4v13.1h-9.4zM2697.5 575.4h9.4v13.1h-9.4zM2461.8 588.1h9.4v13.1h-9.4zM2688.4 588.1h18.4v13.1h-18.4zM2461.8 600.9h9.4v13.1h-9.4zM2688.4 600.9h9.4v13.1h-9.4zM2461.8 613.7h9.4v13.1h-9.4zM2688.4 613.7h9.4v13.1h-9.4zM2461.8 626.4h9.4v13.1h-9.4zM2688.4 626.4h9.4v13.1h-9.4zM2461.8 639.2h9.4v13.1h-9.4zM2688.4 639.2h9.4v13.1h-9.4zM2461.8 652h27.5v13.1h-27.5zM2507.1 652h18.4v13.1h-18.4zM2516.2 664.8h18.4v13.1h-18.4zM2679.3 664.8h9.4v13.1h-9.4zM2534.3 677.5h36.6v13.1h-36.6zM2588.7 690.3h9.4v13.1h-9.4zM2688.4 690.3h9.4v13.1h-9.4zM2688.4 703.1h9.4v13.1h-9.4zM2688.4 715.8h9.4v13.1h-9.4zM2588.7 728.6h9.4v13.1h-9.4zM2697.5 728.6h9.4v13.1h-9.4zM2561.5 741.4h18.4v13.1h-18.4zM2697.5 741.4h9.4v13.1h-9.4zM2479.9 754.1h9.4v13.1h-9.4zM2697.5 754.1h9.4v13.1h-9.4zM2470.9 766.9h9.4v13.1h-9.4zM2688.4 766.9h18.4v13.1h-18.4zM2470.9 779.7h9.4v13.1h-9.4zM2688.4 779.7h9.4v13.1h-9.4zM2461.8 792.5h9.4v13.1h-9.4zM2688.4 792.5h9.4v13.1h-9.4zM2461.8 805.2h9.4v13.1h-9.4zM2697.5 805.2h9.4v13.1h-9.4zM2452.7 818h18.4v13.1h-18.4zM2706.5 818h9.4v13.1h-9.4zM2452.7 830.8h9.4v13.1h-9.4zM2715.6 830.8h9.4v13.1h-9.4zM2452.7 843.5h9.4v13.1h-9.4zM2715.6 843.5h9.4v13.1h-9.4zM2452.7 856.3h9.4v13.1h-9.4zM2452.7 869.1h9.4v13.1h-9.4zM2715.6 869.1h9.4v13.1h-9.4zM2452.7 881.8h18.4v13.1h-18.4zM2461.8 894.6h9.4v13.1h-9.4zM2697.5 894.6h18.4v13.1h-18.4zM2452.7 907.4h18.4v13.1h-18.4zM2697.5 907.4h9.4v13.1h-9.4zM2452.7 920.1h18.4v13.1h-18.4zM2688.4 920.1h18.4v13.1h-18.4zM2452.7 932.9h18.4v13.1h-18.4zM2688.4 932.9h18.4v13.1h-18.4zM2452.7 945.7h18.4v13.1h-18.4zM2688.4 945.7h18.4v13.1h-18.4zM2452.7 958.5h18.4v13.1h-18.4zM2688.4 958.5h18.4v13.1h-18.4zM2452.7 971.2h18.4v13.1h-18.4zM2688.4 971.2h18.4v13.1h-18.4z" fill="#0000ff"/>
<path d="M2470.9 473.2h27.5v13.1h-27.5zM2661.2 473.2h27.5v13.1h-27.5zM2470.9 486h27.5v13.1h-27.5zM2661.2 486h27.5v13.1h-27.5zM2470.9 498.7h27.5v13.1h-27.5zM2661.2 498.7h27.5v13.1h-27.5zM2470.9 511.5h27.5v13.1h-27.5zM2661.2 511.5h27.5v13.1h-27.5zM2470.9 524.3h27.5v13.1h-27.5zM2670.3 524.3h18.4v13.1h-18.4zM2470.9 537.1h18.4v13.1h-18.4zM2679.3 537.1h18.4v13.1h-18.4zM2470.9 549.8h18.4v13.1h-18.4zM2688.4 549.8h9.4v13.1h-9.4zM2470.9 562.6h18.4v13.1h-18.4zM2688.4 562.6h9.4v13.1h-9.4zM2470.9 575.4h18.4v13.1h-18.4zM2688.4 575.4h9.4v13.1h-9.4zM2470.9 588.1h27.5v13.1h-27.5zM2679.3 588.1h9.4v13.1h-9.4zM2470.9 600.9h27.5v13.1h-27.5zM2661.2 600.9h27.5v13.1h-27.5zM2470.9 613.7h36.6v13.1h-36.6zM2661.2 613.7h27.5v13.1h-27.5zM2470.9 626.4h54.7v13.1h-54.7zM2661.2 626.4h27.5v13.1h-27.5zM2470.9 639.2h81.9v13.1h-81.9zM2670.3 639.2h18.4v13.1h-18.4zM2525.2 652h45.6v13.1h-45.6zM2670.3 652h18.4v13.1h-18.4zM2534.3 664.8h45.6v13.1h-45.6zM2670.3 664.8h9.4v13.1h-9.4zM2570.6 677.5h27.5v13.1h-27.5zM2679.3 677.5h9.4v13.1h-9.4zM2597.8 690.3h9.4v13.1h-9.4zM2679.3 690.3h9.4v13.1h-9.4zM2597.8 703.1h9.4v13.1h-9.4zM2679.3 703.1h9.4v13.1h-9.4zM2597.8 715.8h9.4v13.1h-9.4zM2597.8 728.6h9.4v13.1h-9.4zM2688.4 728.6h9.4v13.1h-9.4zM2579.6 741.4h18.4v13.1h-18.4zM2688.4 741.4h9.4v13.1h-9.4zM2489 754.1h90.9v13.1h-90.9zM2679.3 754.1h18.4v13.1h-18.4zM2479.9 766.9h54.7v13.1h-54.7zM2679.3 766.9h9.4v13.1h-9.4zM2479.9 779.7h18.4v13.1h-18.4zM2670.3 779.7h18.4v13.1h-18.4zM2470.9 792.5h27.5v13.1h-27.5zM2670.3 792.5h18.4v13.1h-18.4zM2470.9 805.2h18.4v13.1h-18.4zM2679.3 805.2h18.4v13.1h-18.4zM2470.9 818h9.4v13.1h-9.4zM2688.4 818h18.4v13.1h-18.4zM2461.8 830.8h18.4v13.1h-18.4zM2706.5 830.8h9.4v13.1h-9.4zM2461.8 843.5h9.4v13.1h-9.4zM2461.8 856.3h9.4v13.1h-9.4zM2715.6 856.3h9.4v13.1h-9.4zM2461.8 869.1h18.4v13.1h-18.4zM2470.9 881.8h9.4v13.1h-9.4zM2706.5 881.8h9.4v13.1h-9.4zM2470.9 894.6h18.4v13.1h-18.4zM2688.4 894.6h9.4v13.1h-9.4zM2470.9 907.4h18.4v13.1h-18.4zM2670.3 907.4h27.5v13.1h-27.5zM2470.9 920.1h27.5v13.1h-27.5zM2661.2 920.1h27.5v13.1h-27.5zM2470.9 932.9h27.5v13.1h-27.5zM2661.2 932.9h27.5v13.1h-27.5zM2470.9 945.7h27.5v13.1h-27.5zM2661.2 945.7h27.5v13.1h-27.5zM2470.9 958.5h27.5v13.1h-27.5zM2661.2 958.5h27.5v13.1h-27.5zM2470.9 971.2h27.5v13.1h-27.5zM2661.2 971.2h27.5v13.1h-27.5z" fill="#0000ef"/>
<path d="M2498.1 473.2h163.5v13.1h-163.5zM2498.1 486h163.5v13.1h-163.5zM2498.1 498.7h163.5v13.1h-163.5zM2498.1 511.5h163.5v13.1h-163.5zM2498.1 524.3h172.5v13.1h-172.5zM2489 537.1h72.8v13.1h-72.8zM2652.1 537.1h27.5v13.1h-27.5zM2489 549.8h27.5v13.1h-27.5zM2679.3 549.8h9.4v13.1h-9.4zM2489 562.6h18.4v13.1h-18.4zM2679.3 562.6h9.4v13.1h-9.4zM2489 575.4h36.6v13.1h-36.6zM2670.3 575.4h18.4v13.1h-18.4zM2498.1 588.1h81.9v13.1h-81.9zM2634 588.1h45.6v13.1h-45.6zM2498.1 600.9h163.5v13.1h-163.5zM2507.1 613.7h154.4v13.1h-154.4zM2525.2 626.4h136.3v13.1h-136.3zM2552.4 639.2h118.1v13.1h-118.1zM2570.6 652h100v13.1h-100zM2579.6 664.8h90.9v13.1h-90.9zM2597.8 677.5h36.6v13.1h-36.6zM2661.2 677.5h18.4v13.1h-18.4zM2606.8 690.3h18.4v13.1h-18.4zM2670.3 690.3h9.4v13.1h-9.4zM2606.8 703.1h18.4v13.1h-18.4zM2670.3 703.1h9.4v13.1h-9.4zM2606.8 715.8h18.4v13.1h-18.4zM2670.3 715.8h18.4v13.1h-18.4zM2606.8 728.6h18.4v13.1h-18.4zM2679.3 728.6h9.4v13.1h-9.4zM2597.8 741.4h27.5v13.1h-27.5zM2670.3 741.4h18.4v13.1h-18.4zM2579.6 754.1h100v13.1h-100zM2534.3 766.9h145.3v13.1h-145.3zM2498.1 779.7h172.5v13.1h-172.5zM2498.1 792.5h172.5v13.1h-172.5zM2489 805.2h190.6v13.1h-190.6zM2479.9 818h36.6v13.1h-36.6zM2543.4 818h145.3v13.1h-145.3zM2479.9 830.8h9.4v13.1h-9.4zM2579.6 830.8h54.7v13.1h-54.7zM2697.5 830.8h9.4v13.1h-9.4zM2470.9 843.5h18.4v13.1h-18.4zM2588.7 843.5h36.6v13.1h-36.6zM2706.5 843.5h9.4v13.1h-9.4zM2470.9 856.3h18.4v13.1h-18.4zM2588.7 856.3h27.5v13.1h-27.5zM2706.5 856.3h9.4v13.1h-9.4zM2479.9 869.1h18.4v13.1h-18.4zM2579.6 869.1h45.6v13.1h-45.6zM2706.5 869.1h9.4v13.1h-9.4zM2479.9 881.8h36.6v13.1h-36.6zM2543.4 881.8h100v13.1h-100zM2688.4 881.8h18.4v13.1h-18.4zM2489 894.6h199.7v13.1h-199.7zM2489 907.4h181.6v13.1h-181.6zM2498.1 920.1h163.5v13.1h-163.5zM2498.1 932.9h163.5v13.1h-163.5zM2498.1 945.7h163.5v13.1h-163.5zM2498.1 958.5h163.5v13.1h-163.5zM2498.1 971.2h163.5v13.1h-163.5z" fill="#0000df"/>
<path d="M2217.1 524.3h118.1v13.1h-118.1zM2824.4 524.3h81.9v13.1h-81.9zM2217.1 537.1h163.5v13.1h-163.5zM2779 537.1h127.2v13.1h-127.2zM2217.1 549.8h172.5v13.1h-172.5zM2770 549.8h136.3v13.1h-136.3zM2334.9 562.6h54.7v13.1h-54.7zM2770 562.6h54.7v13.1h-54.7zM2353 575.4h45.6v13.1h-45.6zM2760.9 575.4h45.6v13.1h-45.6zM2362.1 588.1h36.6v13.1h-36.6zM2760.9 588.1h27.5v13.1h-27.5zM2362.1 600.9h36.6v13.1h-36.6zM2751.8 600.9h27.5v13.1h-27.5zM2371.2 613.7h27.5v13.1h-27.5zM2742.8 613.7h9.4v13.1h-9.4zM2380.2 626.4h18.4v13.1h-18.4zM2733.7 626.4h9.4v13.1h-9.4zM2389.3 639.2h9.4v13.1h-9.4zM2724.7 639.2h9.4v13.1h-9.4zM2398.3 652h9.4v13.1h-9.4zM2407.4 664.8h9.4v13.1h-9.4zM2470.9 690.3h9.4v13.1h-9.4zM2715.6 703.1h9.4v13.1h-9.4zM2479.9 728.6h9.4v13.1h-9.4zM2498.1 728.6h9.4v13.1h-9.4zM2552.4 728.6h9.4v13.1h-9.4zM2733.7 728.6h9.4v13.1h-9.4zM2470.9 741.4h9.4v13.1h-9.4zM2742.8 741.4h9.4v13.1h-9.4zM2461.8 754.1h9.4v13.1h-9.4zM2751.8 754.1h9.4v13.1h-9.4zM2751.8 766.9h9.4v13.1h-9.4zM2751.8 779.7h9.4v13.1h-9.4zM2425.5 792.5h9.4v13.1h-9.4zM2751.8 792.5h9.4v13.1h-9.4zM2416.5 805.2h9.4v13.1h-9.4zM2751.8 805.2h18.4v13.1h-18.4zM2398.3 818h18.4v13.1h-18.4zM2760.9 818h18.4v13.1h-18.4zM2389.3 830.8h18.4v13.1h-18.4zM2760.9 830.8h18.4v13.1h-18.4zM2398.3 843.5h9.4v13.1h-9.4zM2770 843.5h18.4v13.1h-18.4zM2398.3 856.3h9.4v13.1h-9.4zM2770 856.3h18.4v13.1h-18.4zM2398.3 869.1h9.4v13.1h-9.4zM2770 869.1h18.4v13.1h-18.4zM2389.3 881.8h18.4v13.1h-18.4zM2770 881.8h18.4v13.1h-18.4zM2371.2 894.6h27.5v13.1h-27.5zM2770 894.6h45.6v13.1h-45.6zM2217.1 907.4h172.5v13.1h-172.5zM2779 907.4h127.2v13.1h-127.2zM2217.1 920.1h136.3v13.1h-136.3zM2815.3 920.1h90.9v13.1h-90.9z" fill="#0060ff"/>
<path d="M2561.5 537.1h90.9v13.1h-90.9zM2516.2 549.8h36.6v13.1h-36.6zM2661.2 549.8h18.4v13.1h-18.4zM2507.1 562.6h27.5v13.1h-27.5zM2670.3 562.6h9.4v13.1h-9.4zM2525.2 575.4h36.6v13.1h-36.6zM2652.1 575.4h18.4v13.1h-18.4zM2579.6 588.1h54.7v13.1h-54.7zM2634 677.5h27.5v13.1h-27.5zM2624.9 690.3h45.6v13.1h-45.6zM2624.9 703.1h45.6v13.1h-45.6zM2624.9 715.8h45.6v13.1h-45.6zM2624.9 728.6h54.7v13.1h-54.7zM2624.9 741.4h45.6v13.1h-45.6zM2516.2 818h27.5v13.1h-27.5zM2489 830.8h90.9v13.1h-90.9zM2634 830.8h63.7v13.1h-63.7zM2489 843.5h100v13.1h-100zM2624.9 843.5h18.4v13.1h-18.4zM2697.5 843.5h9.4v13.1h-9.4zM2489 856.3h100v13.1h-100zM2615.9 856.3h27.5v13.1h-27.5zM2498.1 869.1h81.9v13.1h-81.9zM2624.9 869.1h27.5v13.1h-27.5zM2697.5 869.1h9.4v13.1h-9.4zM2516.2 881.8h27.5v13.1h-27.5zM2643.1 881.8h45.6v13.1h-45.6z" fill="#0000cf"/>
<path d="M2552.4 549.8h36.6v13.1h-36.6zM2624.9 549.8h36.6v13.1h-36.6zM2534.3 562.6h27.5v13.1h-27.5zM2652.1 562.6h18.4v13.1h-18.4zM2561.5 575.4h90.9v13.1h-90.9zM2643.1 843.5h27.5v13.1h-27.5zM2679.3 843.5h18.4v13.1h-18.4zM2643.1 856.3h18.4v13.1h-18.4zM2688.4 856.3h18.4v13.1h-18.4zM2652.1 869.1h45.6v13.1h-45.6z" fill="#0000bf"/>
<path d="M2588.7 549.8h36.6v13.1h-36.6zM2561.5 562.6h90.9v13.1h-90.9zM2670.3 843.5h9.4v13.1h-9.4zM2661.2 856.3h27.5v13.1h-27.5z" fill="#0000af"/>
<path d="M2217.1 562.6h118.1v13.1h-118.1zM2824.4 562.6h81.9v13.1h-81.9zM2217.1 575.4h136.3v13.1h-136.3zM2806.2 575.4h100v13.1h-100zM2280.5 588.1h81.9v13.1h-81.9zM2788.1 588.1h54.7v13.1h-54.7zM2325.8 600.9h36.6v13.1h-36.6zM2779 600.9h18.4v13.1h-18.4zM2344 613.7h27.5v13.1h-27.5zM2751.8 613.7h18.4v13.1h-18.4zM2362.1 626.4h18.4v13.1h-18.4zM2371.2 639.2h18.4v13.1h-18.4zM2389.3 652h9.4v13.1h-9.4zM2715.6 652h9.4v13.1h-9.4zM2398.3 664.8h9.4v13.1h-9.4zM2416.5 677.5h9.4v13.1h-9.4zM2443.7 690.3h27.5v13.1h-27.5zM2715.6 690.3h9.4v13.1h-9.4zM2470.9 703.1h36.6v13.1h-36.6zM2561.5 703.1h9.4v13.1h-9.4zM2751.8 741.4h9.4v13.1h-9.4zM2760.9 754.1h9.4v13.1h-9.4zM2760.9 766.9h9.4v13.1h-9.4zM2760.9 779.7h9.4v13.1h-9.4zM2760.9 792.5h9.4v13.1h-9.4zM2398.3 805.2h18.4v13.1h-18.4zM2770 805.2h9.4v13.1h-9.4zM2380.2 818h18.4v13.1h-18.4zM2779 818h9.4v13.1h-9.4zM2371.2 830.8h18.4v13.1h-18.4zM2779 830.8h27.5v13.1h-27.5zM2380.2 843.5h18.4v13.1h-18.4zM2788.1 843.5h27.5v13.1h-27.5zM2380.2 856.3h18.4v13.1h-18.4zM2788.1 856.3h27.5v13.1h-27.5zM2380.2 869.1h18.4v13.1h-18.4zM2788.1 869.1h36.6v13.1h-36.6zM2362.1 881.8h27.5v13.1h-27.5zM2788.1 881.8h63.7v13.1h-63.7zM2217.1 894.6h154.4v13.1h-154.4zM2815.3 894.6h90.9v13.1h-90.9z" fill="#0070ff"/>
<path d="M2217.1 588.1h63.7v13.1h-63.7zM2842.5 588.1h63.7v13.1h-63.7zM2307.7 600.9h18.4v13.1h-18.4zM2797.2 600.9h27.5v13.1h-27.5zM2325.8 613.7h18.4v13.1h-18.4zM2770 613.7h27.5v13.1h-27.5zM2344 626.4h18.4v13.1h-18.4zM2742.8 626.4h9.4v13.1h-9.4zM2362.1 639.2h9.4v13.1h-9.4zM2733.7 639.2h9.4v13.1h-9.4zM2380.2 652h9.4v13.1h-9.4zM2715.6 664.8h9.4v13.1h-9.4zM2407.4 677.5h9.4v13.1h-9.4zM2715.6 677.5h9.4v13.1h-9.4zM2434.6 690.3h9.4v13.1h-9.4zM2470.9 715.8h27.5v13.1h-27.5zM2561.5 715.8h9.4v13.1h-9.4zM2724.7 715.8h9.4v13.1h-9.4zM2470.9 728.6h9.4v13.1h-9.4zM2507.1 728.6h9.4v13.1h-9.4zM2543.4 728.6h9.4v13.1h-9.4zM2742.8 728.6h9.4v13.1h-9.4zM2760.9 741.4h9.4v13.1h-9.4zM2770 754.1h9.4v13.1h-9.4zM2770 766.9h9.4v13.1h-9.4zM2416.5 792.5h9.4v13.1h-9.4zM2380.2 805.2h18.4v13.1h-18.4zM2779 805.2h9.4v13.1h-9.4zM2344 818h36.6v13.1h-36.6zM2788.1 818h18.4v13.1h-18.4zM2344 830.8h27.5v13.1h-27.5zM2806.2 830.8h18.4v13.1h-18.4zM2353 843.5h27.5v13.1h-27.5zM2815.3 843.5h27.5v13.1h-27.5zM2362.1 856.3h18.4v13.1h-18.4zM2815.3 856.3h36.6v13.1h-36.6zM2353 869.1h27.5v13.1h-27.5zM2824.4 869.1h45.6v13.1h-45.6zM2217.1 881.8h45.6v13.1h-45.6zM2316.8 881.8h45.6v13.1h-45.6zM2851.5 881.8h54.7v13.1h-54.7z" fill="#0080ff"/>
<path d="M2217.1 600.9h18.4v13.1h-18.4zM2253.3 600.9h18.4v13.1h-18.4zM2851.5 600.9h36.6v13.1h-36.6zM2298.6 613.7h9.4v13.1h-9.4zM2824.4 613.7h9.4v13.1h-9.4zM2307.7 626.4h9.4v13.1h-9.4zM2788.1 626.4h18.4v13.1h-18.4zM2316.8 639.2h18.4v13.1h-18.4zM2353 652h9.4v13.1h-9.4zM2724.7 664.8h9.4v13.1h-9.4zM2398.3 677.5h9.4v13.1h-9.4zM2724.7 677.5h9.4v13.1h-9.4zM2452.7 703.1h9.4v13.1h-9.4zM2525.2 703.1h9.4v13.1h-9.4zM2543.4 703.1h9.4v13.1h-9.4zM2507.1 715.8h9.4v13.1h-9.4zM2552.4 715.8h9.4v13.1h-9.4zM2452.7 728.6h9.4v13.1h-9.4zM2452.7 741.4h9.4v13.1h-9.4zM2779 741.4h9.4v13.1h-9.4zM2797.2 754.1h9.4v13.1h-9.4zM2797.2 766.9h9.4v13.1h-9.4zM2217.1 779.7h18.4v13.1h-18.4zM2860.6 779.7h27.5v13.1h-27.5zM2235.2 792.5h163.5v13.1h-163.5zM2851.5 792.5h9.4v13.1h-9.4zM2887.8 792.5h18.4v13.1h-18.4zM2289.6 805.2h18.4v13.1h-18.4zM2806.2 805.2h63.7v13.1h-63.7zM2298.6 818h9.4v13.1h-9.4zM2842.5 818h9.4v13.1h-9.4zM2289.6 830.8h9.4v13.1h-9.4zM2851.5 830.8h9.4v13.1h-9.4zM2235.2 843.5h45.6v13.1h-45.6zM2887.8 843.5h18.4v13.1h-18.4z" fill="#00afff"/>
<path d="M2235.2 600.9h18.4v13.1h-18.4zM2887.8 600.9h18.4v13.1h-18.4zM2289.6 613.7h9.4v13.1h-9.4zM2833.4 613.7h9.4v13.1h-9.4zM2298.6 626.4h9.4v13.1h-9.4zM2806.2 626.4h9.4v13.1h-9.4zM2307.7 639.2h9.4v13.1h-9.4zM2751.8 639.2h9.4v13.1h-9.4zM2344 652h9.4v13.1h-9.4zM2371.2 664.8h9.4v13.1h-9.4zM2416.5 690.3h9.4v13.1h-9.4zM2733.7 690.3h9.4v13.1h-9.4zM2534.3 703.1h9.4v13.1h-9.4zM2733.7 703.1h9.4v13.1h-9.4zM2452.7 715.8h9.4v13.1h-9.4zM2806.2 754.1h9.4v13.1h-9.4zM2806.2 766.9h9.4v13.1h-9.4zM2235.2 779.7h27.5v13.1h-27.5zM2788.1 779.7h9.4v13.1h-9.4zM2851.5 779.7h9.4v13.1h-9.4zM2887.8 779.7h18.4v13.1h-18.4zM2788.1 792.5h9.4v13.1h-9.4zM2842.5 792.5h9.4v13.1h-9.4zM2217.1 805.2h18.4v13.1h-18.4zM2262.4 805.2h27.5v13.1h-27.5zM2869.7 805.2h18.4v13.1h-18.4zM2289.6 818h9.4v13.1h-9.4zM2851.5 818h9.4v13.1h-9.4zM2217.1 830.8h9.4v13.1h-9.4zM2280.5 830.8h9.4v13.1h-9.4zM2860.6 830.8h18.4v13.1h-18.4z" fill="#00bfff"/>
<path d="M2271.5 600.9h18.4v13.1h-18.4zM2842.5 600.9h9.4v13.1h-9.4zM2307.7 613.7h9.4v13.1h-9.4zM2806.2 613.7h18.4v13.1h-18.4zM2316.8 626.4h9.4v13.1h-9.4zM2770 626.4h18.4v13.1h-18.4zM2334.9 639.2h9.4v13.1h-9.4zM2742.8 639.2h9.4v13.1h-9.4zM2362.1 652h9.4v13.1h-9.4zM2380.2 664.8h9.4v13.1h-9.4zM2516.2 703.1h9.4v13.1h-9.4zM2733.7 715.8h9.4v13.1h-9.4zM2461.8 728.6h9.4v13.1h-9.4zM2525.2 728.6h9.4v13.1h-9.4zM2751.8 728.6h9.4v13.1h-9.4zM2452.7 754.1h9.4v13.1h-9.4zM2788.1 754.1h9.4v13.1h-9.4zM2443.7 766.9h9.4v13.1h-9.4zM2788.1 766.9h9.4v13.1h-9.4zM2779 779.7h9.4v13.1h-9.4zM2217.1 792.5h18.4v13.1h-18.4zM2398.3 792.5h9.4v13.1h-9.4zM2779 792.5h9.4v13.1h-9.4zM2860.6 792.5h27.5v13.1h-27.5zM2307.7 805.2h27.5v13.1h-27.5zM2797.2 805.2h9.4v13.1h-9.4zM2307.7 818h18.4v13.1h-18.4zM2824.4 818h18.4v13.1h-18.4zM2298.6 830.8h18.4v13.1h-18.4zM2842.5 830.8h9.4v13.1h-9.4zM2217.1 843.5h18.4v13.1h-18.4zM2280.5 843.5h36.6v13.1h-36.6zM2860.6 843.5h27.5v13.1h-27.5zM2235.2 856.3h90.9v13.1h-90.9zM2887.8 856.3h18.4v13.1h-18.4zM2262.4 869.1h45.6v13.1h-45.6z" fill="#009fff"/>
<path d="M2289.6 600.9h18.4v13.1h-18.4zM2824.4 600.9h18.4v13.1h-18.4zM2316.8 613.7h9.4v13.1h-9.4zM2797.2 613.7h9.4v13.1h-9.4zM2325.8 626.4h18.4v13.1h-18.4zM2751.8 626.4h18.4v13.1h-18.4zM2344 639.2h18.4v13.1h-18.4zM2371.2 652h9.4v13.1h-9.4zM2724.7 652h9.4v13.1h-9.4zM2389.3 664.8h9.4v13.1h-9.4zM2425.5 690.3h9.4v13.1h-9.4zM2724.7 690.3h9.4v13.1h-9.4zM2461.8 703.1h9.4v13.1h-9.4zM2507.1 703.1h9.4v13.1h-9.4zM2552.4 703.1h9.4v13.1h-9.4zM2724.7 703.1h9.4v13.1h-9.4zM2461.8 715.8h9.4v13.1h-9.4zM2498.1 715.8h9.4v13.1h-9.4zM2516.2 728.6h9.4v13.1h-9.4zM2534.3 728.6h9.4v13.1h-9.4zM2461.8 741.4h9.4v13.1h-9.4zM2770 741.4h9.4v13.1h-9.4zM2779 754.1h9.4v13.1h-9.4zM2779 766.9h9.4v13.1h-9.4zM2434.6 779.7h9.4v13.1h-9.4zM2770 779.7h9.4v13.1h-9.4zM2407.4 792.5h9.4v13.1h-9.4zM2770 792.5h9.4v13.1h-9.4zM2334.9 805.2h45.6v13.1h-45.6zM2788.1 805.2h9.4v13.1h-9.4zM2325.8 818h18.4v13.1h-18.4zM2806.2 818h18.4v13.1h-18.4zM2316.8 830.8h27.5v13.1h-27.5zM2824.4 830.8h18.4v13.1h-18.4zM2316.8 843.5h36.6v13.1h-36.6zM2842.5 843.5h18.4v13.1h-18.4zM2217.1 856.3h18.4v13.1h-18.4zM2325.8 856.3h36.6v13.1h-36.6zM2851.5 856.3h36.6v13.1h-36.6zM2217.1 869.1h45.6v13.1h-45.6zM2307.7 869.1h45.6v13.1h-45.6zM2869.7 869.1h36.6v13.1h-36.6zM2262.4 881.8h54.7v13.1h-54.7z" fill="#008fff"/>
<path d="M2217.1 613.7h45.6v13.1h-45.6zM2869.7 613.7h36.6v13.1h-36.6zM2262.4 626.4h9.4v13.1h-9.4zM2833.4 626.4h9.4v13.1h-9.4zM2271.5 639.2h9.4v13.1h-9.4zM2779 639.2h9.4v13.1h-9.4zM2742.8 652h9.4v13.1h-9.4zM2407.4 690.3h9.4v13.1h-9.4zM2751.8 715.8h9.4v13.1h-9.4zM2770 728.6h9.4v13.1h-9.4zM2226.1 766.9h9.4v13.1h-9.4zM2878.7 766.9h9.4v13.1h-9.4zM2307.7 779.7h9.4v13.1h-9.4zM2416.5 779.7h9.4v13.1h-9.4z" fill="#00ffff"/>
<path d="M2262.4 613.7h9.4v13.1h-9.4zM2860.6 613.7h9.4v13.1h-9.4zM2271.5 626.4h9.4v13.1h-9.4zM2824.4 626.4h9.4v13.1h-9.4zM2280.5 639.2h9.4v13.1h-9.4zM2770 639.2h9.4v13.1h-9.4zM2325.8 652h9.4v13.1h-9.4zM2362.1 664.8h9.4v13.1h-9.4zM2733.7 664.8h9.4v13.1h-9.4zM2742.8 690.3h9.4v13.1h-9.4zM2434.6 703.1h9.4v13.1h-9.4zM2742.8 703.1h9.4v13.1h-9.4zM2797.2 741.4h9.4v13.1h-9.4zM2833.4 754.1h9.4v13.1h-9.4zM2434.6 766.9h9.4v13.1h-9.4zM2289.6 779.7h18.4v13.1h-18.4zM2815.3 779.7h9.4v13.1h-9.4zM2226.1 818h36.6v13.1h-36.6zM2878.7 818h27.5v13.1h-27.5z" fill="#00efff"/>
<path d="M2271.5 613.7h9.4v13.1h-9.4zM2851.5 613.7h9.4v13.1h-9.4zM2280.5 626.4h9.4v13.1h-9.4zM2289.6 639.2h9.4v13.1h-9.4zM2334.9 652h9.4v13.1h-9.4zM2389.3 677.5h9.4v13.1h-9.4zM2733.7 677.5h9.4v13.1h-9.4zM2443.7 715.8h9.4v13.1h-9.4zM2525.2 715.8h18.4v13.1h-18.4zM2443.7 728.6h9.4v13.1h-9.4zM2443.7 741.4h9.4v13.1h-9.4zM2443.7 754.1h9.4v13.1h-9.4zM2824.4 754.1h9.4v13.1h-9.4zM2217.1 766.9h9.4v13.1h-9.4zM2869.7 766.9h9.4v13.1h-9.4zM2280.5 779.7h9.4v13.1h-9.4zM2806.2 779.7h9.4v13.1h-9.4zM2824.4 779.7h18.4v13.1h-18.4zM2806.2 792.5h27.5v13.1h-27.5zM2217.1 818h9.4v13.1h-9.4zM2262.4 818h18.4v13.1h-18.4zM2869.7 818h9.4v13.1h-9.4zM2244.3 830.8h18.4v13.1h-18.4zM2896.9 830.8h9.4v13.1h-9.4z" fill="#00dfff"/>
<path d="M2280.5 613.7h9.4v13.1h-9.4zM2842.5 613.7h9.4v13.1h-9.4zM2289.6 626.4h9.4v13.1h-9.4zM2815.3 626.4h9.4v13.1h-9.4zM2298.6 639.2h9.4v13.1h-9.4zM2760.9 639.2h9.4v13.1h-9.4zM2733.7 652h9.4v13.1h-9.4zM2443.7 703.1h9.4v13.1h-9.4zM2516.2 715.8h9.4v13.1h-9.4zM2543.4 715.8h9.4v13.1h-9.4zM2742.8 715.8h9.4v13.1h-9.4zM2760.9 728.6h9.4v13.1h-9.4zM2788.1 741.4h9.4v13.1h-9.4zM2815.3 754.1h9.4v13.1h-9.4zM2815.3 766.9h54.7v13.1h-54.7zM2262.4 779.7h18.4v13.1h-18.4zM2425.5 779.7h9.4v13.1h-9.4zM2797.2 779.7h9.4v13.1h-9.4zM2842.5 779.7h9.4v13.1h-9.4zM2797.2 792.5h9.4v13.1h-9.4zM2833.4 792.5h9.4v13.1h-9.4zM2235.2 805.2h27.5v13.1h-27.5zM2887.8 805.2h18.4v13.1h-18.4zM2280.5 818h9.4v13.1h-9.4zM2860.6 818h9.4v13.1h-9.4zM2226.1 830.8h18.4v13.1h-18.4zM2262.4 830.8h18.4v13.1h-18.4zM2878.7 830.8h18.4v13.1h-18.4z" fill="#00cfff"/>
<path d="M2217.1 626.4h9.4v13.1h-9.4zM2860.6 626.4h18.4v13.1h-18.4zM2253.3 639.2h9.4v13.1h-9.4zM2788.1 639.2h9.4v13.1h-9.4zM2307.7 652h9.4v13.1h-9.4zM2751.8 652h9.4v13.1h-9.4zM2353 664.8h9.4v13.1h-9.4zM2742.8 664.8h9.4v13.1h-9.4zM2380.2 677.5h9.4v13.1h-9.4zM2751.8 690.3h9.4v13.1h-9.4zM2751.8 703.1h9.4v13.1h-9.4zM2806.2 741.4h9.4v13.1h-9.4zM2235.2 766.9h9.4v13.1h-9.4zM2887.8 766.9h9.4v13.1h-9.4zM2325.8 779.7h18.4v13.1h-18.4zM2407.4 779.7h9.4v13.1h-9.4z" fill="#20ffdf"/>
<path d="M2226.1 626.4h36.6v13.1h-36.6zM2842.5 626.4h18.4v13.1h-18.4zM2878.7 626.4h27.5v13.1h-27.5zM2262.4 639.2h9.4v13.1h-9.4zM2316.8 652h9.4v13.1h-9.4zM2742.8 677.5h9.4v13.1h-9.4zM2425.5 703.1h9.4v13.1h-9.4zM2434.6 715.8h9.4v13.1h-9.4zM2434.6 728.6h9.4v13.1h-9.4zM2434.6 741.4h9.4v13.1h-9.4zM2434.6 754.1h9.4v13.1h-9.4zM2842.5 754.1h9.4v13.1h-9.4zM2316.8 779.7h9.4v13.1h-9.4z" fill="#10ffef"/>
<path d="M2217.1 639.2h9.4v13.1h-9.4zM2869.7 639.2h9.4v13.1h-9.4zM2280.5 652h9.4v13.1h-9.4zM2760.9 664.8h9.4v13.1h-9.4zM2770 690.3h9.4v13.1h-9.4zM2407.4 703.1h9.4v13.1h-9.4zM2770 703.1h9.4v13.1h-9.4zM2416.5 715.8h9.4v13.1h-9.4zM2416.5 728.6h9.4v13.1h-9.4zM2824.4 741.4h9.4v13.1h-9.4zM2416.5 754.1h9.4v13.1h-9.4z" fill="#80ff80"/>
<path d="M2226.1 639.2h9.4v13.1h-9.4zM2806.2 639.2h9.4v13.1h-9.4zM2878.7 639.2h9.4v13.1h-9.4zM2760.9 652h9.4v13.1h-9.4zM2751.8 664.8h9.4v13.1h-9.4zM2760.9 690.3h9.4v13.1h-9.4zM2760.9 703.1h9.4v13.1h-9.4zM2815.3 741.4h9.4v13.1h-9.4zM2425.5 754.1h9.4v13.1h-9.4z" fill="#50ffaf"/>
<path d="M2235.2 639.2h9.4v13.1h-9.4zM2887.8 639.2h9.4v13.1h-9.4zM2298.6 652h9.4v13.1h-9.4zM2751.8 677.5h9.4v13.1h-9.4zM2398.3 690.3h9.4v13.1h-9.4zM2416.5 703.1h9.4v13.1h-9.4zM2425.5 715.8h9.4v13.1h-9.4zM2425.5 728.6h9.4v13.1h-9.4zM2425.5 741.4h9.4v13.1h-9.4zM2253.3 766.9h9.4v13.1h-9.4zM2353 779.7h45.6v13.1h-45.6z" fill="#40ffbf"/>
<path d="M2244.3 639.2h9.4v13.1h-9.4zM2797.2 639.2h9.4v13.1h-9.4zM2896.9 639.2h9.4v13.1h-9.4zM2760.9 715.8h9.4v13.1h-9.4zM2779 728.6h9.4v13.1h-9.4zM2851.5 754.1h9.4v13.1h-9.4zM2244.3 766.9h9.4v13.1h-9.4zM2425.5 766.9h9.4v13.1h-9.4zM2896.9 766.9h9.4v13.1h-9.4zM2344 779.7h9.4v13.1h-9.4zM2398.3 779.7h9.4v13.1h-9.4z" fill="#30ffcf"/>
<path d="M2815.3 639.2h9.4v13.1h-9.4zM2770 652h9.4v13.1h-9.4zM2371.2 677.5h9.4v13.1h-9.4zM2760.9 677.5h9.4v13.1h-9.4zM2416.5 741.4h9.4v13.1h-9.4zM2271.5 766.9h9.4v13.1h-9.4z" fill="#70ff8f"/>
<path d="M2824.4 639.2h9.4v13.1h-9.4zM2779 652h9.4v13.1h-9.4zM2334.9 664.8h9.4v13.1h-9.4zM2770 677.5h9.4v13.1h-9.4zM2389.3 690.3h9.4v13.1h-9.4zM2779 715.8h9.4v13.1h-9.4zM2217.1 754.1h9.4v13.1h-9.4zM2869.7 754.1h9.4v13.1h-9.4zM2280.5 766.9h9.4v13.1h-9.4zM2407.4 766.9h9.4v13.1h-9.4z" fill="#8fff70"/>
<path d="M2833.4 639.2h18.4v13.1h-18.4zM2860.6 639.2h9.4v13.1h-9.4zM2271.5 652h9.4v13.1h-9.4zM2770 664.8h9.4v13.1h-9.4zM2779 690.3h9.4v13.1h-9.4zM2797.2 728.6h9.4v13.1h-9.4zM2407.4 741.4h9.4v13.1h-9.4zM2289.6 766.9h9.4v13.1h-9.4z" fill="#9fff60"/>
<path d="M2851.5 639.2h9.4v13.1h-9.4zM2262.4 652h9.4v13.1h-9.4zM2788.1 652h9.4v13.1h-9.4zM2362.1 677.5h9.4v13.1h-9.4zM2779 703.1h9.4v13.1h-9.4zM2407.4 715.8h9.4v13.1h-9.4zM2407.4 728.6h9.4v13.1h-9.4zM2833.4 741.4h9.4v13.1h-9.4zM2407.4 754.1h9.4v13.1h-9.4zM2398.3 766.9h9.4v13.1h-9.4z" fill="#afff50"/>
<path d="M2217.1 652h9.4v13.1h-9.4zM2824.4 652h9.4v13.1h-9.4zM2869.7 652h9.4v13.1h-9.4zM2289.6 664.8h9.4v13.1h-9.4zM2815.3 690.3h9.4v13.1h-9.4zM2806.2 703.1h9.4v13.1h-9.4zM2380.2 715.8h9.4v13.1h-9.4zM2371.2 728.6h9.4v13.1h-9.4zM2860.6 741.4h9.4v13.1h-9.4z" fill="#ffbf00"/>
<path d="M2226.1 652h9.4v13.1h-9.4zM2815.3 652h9.4v13.1h-9.4zM2878.7 652h9.4v13.1h-9.4zM2371.2 690.3h9.4v13.1h-9.4zM2806.2 690.3h9.4v13.1h-9.4zM2380.2 728.6h9.4v13.1h-9.4zM2244.3 754.1h9.4v13.1h-9.4zM2896.9 754.1h9.4v13.1h-9.4z" fill="#ffdf00"/>
<path d="M2235.2 652h9.4v13.1h-9.4zM2887.8 652h9.4v13.1h-9.4zM2797.2 690.3h9.4v13.1h-9.4zM2389.3 703.1h9.4v13.1h-9.4zM2797.2 715.8h9.4v13.1h-9.4zM2389.3 728.6h9.4v13.1h-9.4zM2815.3 728.6h9.4v13.1h-9.4zM2851.5 741.4h9.4v13.1h-9.4zM2235.2 754.1h9.4v13.1h-9.4zM2887.8 754.1h9.4v13.1h-9.4zM2334.9 766.9h18.4v13.1h-18.4zM2371.2 766.9h9.4v13.1h-9.4z" fill="#ffff00"/>
<path d="M2244.3 652h9.4v13.1h-9.4zM2896.9 652h9.4v13.1h-9.4zM2316.8 664.8h9.4v13.1h-9.4zM2788.1 677.5h9.4v13.1h-9.4zM2380.2 690.3h9.4v13.1h-9.4zM2788.1 703.1h9.4v13.1h-9.4zM2398.3 715.8h9.4v13.1h-9.4zM2842.5 741.4h9.4v13.1h-9.4zM2398.3 754.1h9.4v13.1h-9.4z" fill="#dfff20"/>
<path d="M2253.3 652h9.4v13.1h-9.4zM2797.2 652h9.4v13.1h-9.4zM2788.1 690.3h9.4v13.1h-9.4zM2788.1 715.8h9.4v13.1h-9.4zM2398.3 728.6h9.4v13.1h-9.4zM2806.2 728.6h9.4v13.1h-9.4zM2398.3 741.4h9.4v13.1h-9.4zM2226.1 754.1h9.4v13.1h-9.4zM2878.7 754.1h9.4v13.1h-9.4zM2307.7 766.9h9.4v13.1h-9.4zM2389.3 766.9h9.4v13.1h-9.4z" fill="#cfff30"/>
<path d="M2289.6 652h9.4v13.1h-9.4zM2344 664.8h9.4v13.1h-9.4zM2770 715.8h9.4v13.1h-9.4zM2788.1 728.6h9.4v13.1h-9.4zM2860.6 754.1h9.4v13.1h-9.4zM2262.4 766.9h9.4v13.1h-9.4zM2416.5 766.9h9.4v13.1h-9.4z" fill="#60ff9f"/>
<path d="M2806.2 652h9.4v13.1h-9.4zM2788.1 664.8h9.4v13.1h-9.4zM2353 677.5h9.4v13.1h-9.4zM2316.8 766.9h18.4v13.1h-18.4zM2380.2 766.9h9.4v13.1h-9.4z" fill="#efff10"/>
<path d="M2833.4 652h9.4v13.1h-9.4zM2362.1 690.3h9.4v13.1h-9.4zM2815.3 715.8h9.4v13.1h-9.4zM2262.4 754.1h9.4v13.1h-9.4zM2371.2 754.1h9.4v13.1h-9.4z" fill="#ffaf00"/>
<path d="M2842.5 652h9.4v13.1h-9.4zM2860.6 652h9.4v13.1h-9.4zM2280.5 664.8h9.4v13.1h-9.4zM2815.3 664.8h9.4v13.1h-9.4zM2334.9 677.5h9.4v13.1h-9.4zM2815.3 677.5h9.4v13.1h-9.4zM2371.2 703.1h9.4v13.1h-9.4zM2815.3 703.1h9.4v13.1h-9.4zM2371.2 715.8h9.4v13.1h-9.4zM2833.4 728.6h9.4v13.1h-9.4zM2371.2 741.4h9.4v13.1h-9.4zM2271.5 754.1h9.4v13.1h-9.4z" fill="#ff9f00"/>
<path d="M2851.5 652h9.4v13.1h-9.4zM2271.5 664.8h9.4v13.1h-9.4zM2824.4 690.3h9.4v13.1h-9.4zM2362.1 728.6h9.4v13.1h-9.4zM2217.1 741.4h9.4v13.1h-9.4zM2869.7 741.4h9.4v13.1h-9.4zM2280.5 754.1h9.4v13.1h-9.4zM2362.1 754.1h9.4v13.1h-9.4z" fill="#ff8f00"/>
<path d="M2217.1 664.8h9.4v13.1h-9.4zM2860.6 664.8h18.4v13.1h-18.4zM2289.6 677.5h9.4v13.1h-9.4zM2851.5 677.5h9.4v13.1h-9.4zM2325.8 690.3h9.4v13.1h-9.4zM2860.6 690.3h9.4v13.1h-9.4zM2217.1 703.1h18.4v13.1h-18.4zM2334.9 703.1h9.4v13.1h-9.4zM2851.5 703.1h36.6v13.1h-36.6zM2307.7 715.8h18.4v13.1h-18.4zM2851.5 715.8h9.4v13.1h-9.4zM2325.8 728.6h9.4v13.1h-9.4zM2253.3 741.4h18.4v13.1h-18.4zM2334.9 741.4h9.4v13.1h-9.4z" fill="#ff3000"/>
<path d="M2226.1 664.8h9.4v13.1h-9.4zM2851.5 664.8h9.4v13.1h-9.4zM2878.7 664.8h9.4v13.1h-9.4zM2298.6 677.5h9.4v13.1h-9.4zM2842.5 677.5h9.4v13.1h-9.4zM2334.9 690.3h9.4v13.1h-9.4zM2344 703.1h9.4v13.1h-9.4zM2325.8 715.8h9.4v13.1h-9.4zM2842.5 715.8h9.4v13.1h-9.4zM2334.9 728.6h9.4v13.1h-9.4zM2860.6 728.6h9.4v13.1h-9.4zM2244.3 741.4h9.4v13.1h-9.4zM2344 741.4h9.4v13.1h-9.4zM2896.9 741.4h9.4v13.1h-9.4z" fill="#ff4000"/>
<path d="M2235.2 664.8h9.4v13.1h-9.4zM2842.5 664.8h9.4v13.1h-9.4zM2887.8 664.8h9.4v13.1h-9.4zM2307.7 677.5h9.4v13.1h-9.4zM2851.5 690.3h9.4v13.1h-9.4zM2842.5 703.1h9.4v13.1h-9.4zM2334.9 715.8h9.4v13.1h-9.4zM2344 728.6h9.4v13.1h-9.4zM2235.2 741.4h9.4v13.1h-9.4zM2887.8 741.4h9.4v13.1h-9.4z" fill="#ff5000"/>
<path d="M2244.3 664.8h18.4v13.1h-18.4zM2833.4 664.8h9.4v13.1h-9.4zM2896.9 664.8h9.4v13.1h-9.4zM2316.8 677.5h9.4v13.1h-9.4zM2833.4 677.5h9.4v13.1h-9.4zM2344 690.3h9.4v13.1h-9.4zM2842.5 690.3h9.4v13.1h-9.4zM2353 703.1h9.4v13.1h-9.4zM2833.4 703.1h9.4v13.1h-9.4zM2344 715.8h9.4v13.1h-9.4zM2833.4 715.8h9.4v13.1h-9.4zM2851.5 728.6h9.4v13.1h-9.4zM2226.1 741.4h9.4v13.1h-9.4zM2353 741.4h9.4v13.1h-9.4zM2878.7 741.4h9.4v13.1h-9.4zM2307.7 754.1h36.6v13.1h-36.6z" fill="#ff6000"/>
<path d="M2262.4 664.8h9.4v13.1h-9.4zM2824.4 664.8h9.4v13.1h-9.4zM2325.8 677.5h9.4v13.1h-9.4zM2824.4 677.5h9.4v13.1h-9.4zM2353 690.3h9.4v13.1h-9.4zM2833.4 690.3h9.4v13.1h-9.4zM2362.1 703.1h9.4v13.1h-9.4zM2824.4 703.1h9.4v13.1h-9.4zM2362.1 715.8h9.4v13.1h-9.4zM2824.4 715.8h9.4v13.1h-9.4zM2842.5 728.6h9.4v13.1h-9.4zM2362.1 741.4h9.4v13.1h-9.4zM2289.6 754.1h9.4v13.1h-9.4zM2353 754.1h9.4v13.1h-9.4z" fill="#ff8000"/>
<path d="M2298.6 664.8h9.4v13.1h-9.4zM2806.2 664.8h9.4v13.1h-9.4zM2344 677.5h9.4v13.1h-9.4zM2806.2 677.5h9.4v13.1h-9.4zM2380.2 703.1h9.4v13.1h-9.4zM2806.2 715.8h9.4v13.1h-9.4zM2824.4 728.6h9.4v13.1h-9.4zM2380.2 741.4h9.4v13.1h-9.4zM2253.3 754.1h9.4v13.1h-9.4zM2380.2 754.1h9.4v13.1h-9.4z" fill="#ffcf00"/>
<path d="M2307.7 664.8h9.4v13.1h-9.4zM2797.2 664.8h9.4v13.1h-9.4zM2797.2 677.5h9.4v13.1h-9.4zM2797.2 703.1h9.4v13.1h-9.4zM2389.3 715.8h9.4v13.1h-9.4zM2389.3 741.4h9.4v13.1h-9.4zM2389.3 754.1h9.4v13.1h-9.4zM2353 766.9h18.4v13.1h-18.4z" fill="#ffef00"/>
<path d="M2325.8 664.8h9.4v13.1h-9.4zM2779 664.8h9.4v13.1h-9.4zM2779 677.5h9.4v13.1h-9.4zM2398.3 703.1h9.4v13.1h-9.4zM2298.6 766.9h9.4v13.1h-9.4z" fill="#bfff40"/>
<path d="M2217.1 677.5h54.7v13.1h-54.7zM2869.7 677.5h36.6v13.1h-36.6zM2226.1 690.3h9.4v13.1h-9.4zM2298.6 690.3h18.4v13.1h-18.4zM2878.7 690.3h9.4v13.1h-9.4zM2280.5 703.1h36.6v13.1h-36.6zM2217.1 715.8h18.4v13.1h-18.4zM2253.3 715.8h27.5v13.1h-27.5zM2869.7 715.8h18.4v13.1h-18.4zM2226.1 728.6h18.4v13.1h-18.4zM2307.7 728.6h9.4v13.1h-9.4zM2878.7 728.6h18.4v13.1h-18.4zM2289.6 741.4h27.5v13.1h-27.5z" fill="#ff1000"/>
<path d="M2271.5 677.5h18.4v13.1h-18.4zM2860.6 677.5h9.4v13.1h-9.4zM2217.1 690.3h9.4v13.1h-9.4zM2316.8 690.3h9.4v13.1h-9.4zM2869.7 690.3h9.4v13.1h-9.4zM2235.2 703.1h45.6v13.1h-45.6zM2316.8 703.1h18.4v13.1h-18.4zM2887.8 703.1h18.4v13.1h-18.4zM2280.5 715.8h27.5v13.1h-27.5zM2860.6 715.8h9.4v13.1h-9.4zM2217.1 728.6h9.4v13.1h-9.4zM2316.8 728.6h9.4v13.1h-9.4zM2869.7 728.6h9.4v13.1h-9.4zM2271.5 741.4h18.4v13.1h-18.4zM2316.8 741.4h18.4v13.1h-18.4z" fill="#ff2000"/>
<path d="M2235.2 690.3h63.7v13.1h-63.7zM2887.8 690.3h18.4v13.1h-18.4zM2235.2 715.8h18.4v13.1h-18.4zM2887.8 715.8h18.4v13.1h-18.4zM2244.3 728.6h63.7v13.1h-63.7zM2896.9 728.6h9.4v13.1h-9.4z" fill="#ff0000"/>
<path d="M2353 715.8h9.4v13.1h-9.4zM2353 728.6h9.4v13.1h-9.4zM2298.6 754.1h9.4v13.1h-9.4zM2344 754.1h9.4v13.1h-9.4z" fill="#ff7000"/>
</g></g>
<path d="M2289.6 497.3V959.3M2344 497.3V959.3M2398.3 497.3V959.3M2452.7 497.3V959.3M2507.1 497.3V959.3M2561.5 497.3V959.3M2615.9 497.3V959.3M2670.3 497.3V959.3M2724.7 497.3V959.3M2779 497.3V959.3M2833.4 497.3V959.3M2235.2 881.8H2887.8M2235.2 805.2H2887.8M2235.2 728.6H2887.8M2235.2 652H2887.8M2235.2 575.4H2887.8" stroke="#000" stroke-width="0.9" stroke-dasharray="1.3 3.9" fill="none" opacity="0.75"/>
<path d="M2257 561.3L2257.6 556.5L2260.6 554.2L2264.9 552L2268.9 549L2272.9 544.2L2277.8 546.5L2285 545.1L2291.9 548.2L2298.6 552.8L2305.9 550.8L2311.9 554.7L2317.9 558.1L2323.2 552.5L2329.5 549.3L2335.7 548.4L2341.1 552.7L2347.1 552.8L2353 553.7L2356.1 555L2359.3 555.1L2362.5 555.9L2365.7 554.9L2371.6 553.4L2377.5 554.6L2383.4 553.5L2389.3 553.7L2390.7 549.4L2391.1 544.7L2392.7 547.3L2394.7 549.2L2396.4 551.6L2398.3 553.7L2400.7 553.8L2403 553.2L2405.1 551.5L2407.4 551.1L2409.5 555L2412.9 556.2L2410.6 558L2408.8 560.9L2406.4 562.2L2403.8 562.6L2401.9 566.4L2399.1 568.8L2396.1 570.7L2392.9 571.5L2392.6 575.8L2390.2 578.4L2392 580.7L2393.8 583L2396.9 585.6L2400.5 586.2L2404.1 585.1L2407.4 587.4L2409.8 590.8L2412.9 593.2L2414.5 596.8L2417.4 597.8L2417.1 593.5L2418.3 589.4L2421.1 587.8L2422.8 584.3L2421.6 580.7L2419.2 578.7L2420.3 574L2421 569.2L2423.2 568.9L2425.2 567.5L2427.3 568.6L2429.2 570.3L2430.6 572.5L2432.5 573.8L2433.3 576.8L2435.5 577.9L2437.7 577.9L2439.8 578.2L2441.7 576.6L2443.7 575.4L2444.9 578L2446.3 580.7L2448.2 582.3L2450 584.3L2452.6 586.9L2455.6 588.3L2457.4 592L2460 594.5L2458.1 595.8L2456.3 597.2L2455.1 600.1L2452.7 600.4L2449.7 600.4L2446.8 598.7L2443.8 599L2441 600.4L2439.5 602.6L2437.6 604.2L2435.9 606.1L2434.6 608.6L2437.1 607L2439.2 604.6L2441.8 603.2L2444.6 603.5L2445.7 606.6L2444.6 609.8L2447.5 612.6L2450.9 612.4L2448.7 612.8L2446.5 614L2444.1 614.6L2442.8 617.5L2440.8 616.2L2438.7 616.3L2436.7 617L2434.6 617.5L2433.7 622.1L2429.8 620.8L2427.4 625.2L2424.8 629L2423.7 634.1L2424.6 638.7L2421.6 639.5L2419.2 642.3L2417.4 646.9L2414.1 649.4L2414.7 652.3L2415.2 655.2L2416.5 657.8L2416.5 660.9L2414.7 664.2L2414.2 659.7L2411.6 657.1L2410.1 654.8L2409.2 652L2405.6 651.1L2402 651.2L2399.7 651.5L2398.3 654L2394.8 652.8L2391.1 653.3L2387.8 655.2L2385.1 658.4L2384 661.3L2383.7 664.6L2384.5 667.8L2384.4 671.1L2386.4 676L2388.4 680.8L2390.3 682.2L2391.9 684.1L2393.8 682.8L2395.6 681.4L2396.7 678.2L2397.4 675L2400.5 673.3L2403.8 673.9L2404.3 677.6L2403.7 681.2L2402.9 684.7L2401.4 687.7L2403.7 688L2405.8 686.9L2408 687.4L2409.8 689.5L2409.8 692.5L2411.1 694.9L2410.6 697.7L2410.1 700.5L2412.6 702.1L2413.8 705.6L2417.4 704.3L2419.1 706.4L2421.4 706.9L2420.1 709.4L2418.1 708.7L2416.5 706.9L2415.6 710.2L2413.8 707.3L2411 707.4L2408.8 704.7L2406.1 703.1L2405.9 698.1L2402.9 695.4L2399 695.5L2395.6 692.8L2392.2 691.4L2390.2 687.2L2387.9 687.4L2385.7 688L2383 688.1L2380.3 688.3L2378.2 685.7L2376.6 682.6L2373.8 678.7L2370.3 676.2L2370.3 673L2370.6 669.9L2369 666.9L2366.7 665L2364.8 662.3L2363 659.6L2362.1 657.1L2361 654.8L2359 654L2357.6 652L2355.4 650.1L2353.6 647.6L2355.1 649.9L2357.1 651.1L2357.2 654.1L2357.2 657.1L2357.8 660.7L2358.8 664.2L2360.1 667.7L2362.6 669.3L2360 667.8L2358.1 664.8L2355.6 663.3L2355.7 659.5L2354.4 657L2353 654.5L2351.7 651.9L2349.5 651.2L2348.5 648.4L2349 645.3L2345.8 643.4L2343.1 640.5L2340.7 636.8L2339.4 632.3L2337.5 629.1L2336.4 625.2L2337 621.5L2336.2 617.9L2336.2 614.2L2336.7 610.6L2338.6 608.2L2338.9 604.7L2336.4 603.8L2334.9 600.9L2333 596.3L2329.5 594.5L2327.1 591.8L2324.9 588.6L2321.8 585.8L2319.5 581.7L2316.6 579.2L2313.1 578.7L2309.5 577.2L2305.9 575.4L2303.6 576.6L2301.1 576.3L2299.2 574.3L2296.8 573.3L2293.7 574.3L2290.5 575.4L2288 575.9L2286 577.9L2283.1 577.9L2282.3 581.7L2278.5 581.5L2275.1 583.8L2272.6 584L2270.3 585L2268 586.1L2266 588.1L2267.6 586.2L2269.2 584.2L2271.1 582.4L2271.5 579.2L2269.9 577.3L2267.8 576.6L2265 575.1L2262.4 572.8L2263.6 570.2L2264.2 567.2L2267 565.6L2269.6 563.9L2266 564.6L2262.4 563.6L2259.9 561.6L2257 561.3M2429.2 528.9L2431.6 526.5L2434.4 528L2435.7 524.7L2438.2 523L2441.9 522.4L2445.5 521.5L2449.2 521L2452.7 519.2L2459.6 516.7L2466.1 512.7L2473.1 514.3L2479.9 516.6L2486.7 514.8L2493.4 512.8L2500.4 512.9L2507.1 515.3L2511.8 512.4L2517 512.2L2522.2 514.2L2525.2 520.4L2527.5 523.2L2528.9 526.8L2527.7 529.5L2525.7 530.8L2524.5 533.2L2523.4 535.8L2522.4 540.2L2521.6 544.7L2518.8 545.9L2518 549.8L2515.1 550.4L2512.1 550.2L2509.5 552L2507.1 554.4L2504.1 554.3L2501.1 555.4L2499.6 559.7L2496.2 560.5L2492.7 562.6L2489 563.9L2487.7 566.9L2487 570.3L2486.2 574.1L2483.6 575.4L2481.4 574L2479.2 573.2L2476.8 573.2L2474.5 572.8L2472.4 570.5L2471.4 566.9L2469.3 564.8L2467.2 562.6L2466.8 559.5L2466.9 556.5L2465.3 554.3L2463.6 552.4L2462.8 548.5L2461.8 544.7L2460.1 542.3L2458 540.6L2456.3 538.1L2454.5 535.8L2450.4 535.1L2446.3 536.5L2442 537.9L2438.2 534.5L2436.2 532.3L2434.1 530.4L2431.4 531.2L2429.2 528.9M2416.5 540.4L2418.1 542.7L2419.5 545.1L2421.9 544.9L2423.7 542.7L2427.3 544.7L2431 546.2L2435.4 544.7L2438.2 549.8L2441.4 550L2444.1 552.5L2446.9 554.4L2449.1 557.5L2447.1 561.8L2445.5 566.4L2442.1 569.2L2438.2 569L2435.2 569.5L2432.5 567.7L2429.3 567.6L2427.4 563.9L2423.8 562.9L2420.1 562.6L2422 559.9L2424.3 558L2426.2 554.6L2429.2 554.9L2425.7 558.4L2421.5 558.9L2418.8 554.5L2416.5 549.8L2412.7 551.8L2409.2 549.2L2406 545.1L2402 547.3L2400 544.3L2398.3 540.9L2402.8 542.4L2407.4 542.1L2411.9 540.8L2416.5 540.4M2349.4 547.3L2351.8 547.1L2354.3 546.9L2355.9 544.1L2358.5 543.4L2361.7 543.6L2364.8 543.2L2367.9 541.6L2371.2 542.2L2372.9 544.3L2374.3 546.8L2376.8 547.1L2378.4 549.8L2375.1 548.2L2371.9 550L2369 552.4L2365.7 553.1L2362.4 555.9L2358.9 558.4L2356.7 553.5L2353 551.1L2351 549.6L2349.4 547.3M2398.3 533.2L2403.4 534.9L2407.5 530.3L2412 532.3L2416.5 534.5L2419.2 533.9L2421.6 532.1L2423.4 529.3L2425.5 526.8L2430.9 521.5L2436.2 516L2442.8 516.1L2449.1 519.2L2445.4 518.1L2441.7 519.3L2437.7 520.3L2434.6 516.6L2428.9 524.7L2421.2 521.4L2414.3 519.7L2407.4 519.2L2404.3 520.5L2401.1 521.9L2398 523.4L2394.7 524.3L2397.3 528.1L2398.3 533.2M2334.9 544.7L2337.3 542.9L2338.7 539.7L2341.4 540.3L2344 538.8L2346.7 539.4L2348.9 537L2351.1 538.9L2353 541.4L2349.8 542.5L2347.6 546L2344.7 543.6L2341.3 543.9L2338.2 546.1L2334.9 544.7M2389.3 537.1L2393.3 532.9L2398.2 533.4L2402.6 536L2407.4 535.8L2409.2 538.3L2411.8 538.4L2414.1 538L2416.5 537.6L2410.8 536.8L2405.4 534.5L2399.8 535.8L2394.7 539.6L2392.1 537.7L2389.3 537.1M2349.4 535.8L2352.5 533.6L2355.4 531L2358.2 535.1L2362.1 533.7L2364.4 533.8L2366.7 534.4L2368.7 536.5L2371.2 535.8L2368.5 537.1L2365.7 537.6L2362.5 536.7L2359.3 536L2355.9 535.4L2353 538.3L2351.2 537L2349.4 535.8M2403.8 565.1L2405.8 561.2L2409.2 561.3L2412.5 562.8L2415.6 565.1L2413.6 567.8L2411 569L2407.1 568.3L2403.8 565.1M2454.5 606.8L2456.5 604.9L2458.5 603.2L2458.8 599.9L2460 597.1L2460.8 601L2460.3 605.1L2462.4 608.2L2465.4 608.6L2463.1 608.5L2460.9 609.1L2457.5 609L2454.5 606.8M2407.4 672.4L2409.7 671.9L2411.9 670.7L2414.1 669.9L2416.5 669.9L2419.3 670.8L2422.2 669.8L2423.9 673L2425.5 676.2L2427 677.5L2424 677.2L2421 678L2420.4 674.1L2417.7 672.8L2415.4 674L2412.9 673.7L2410.2 672.8L2407.4 672.4M2426.6 681.4L2427.8 678.6L2430.1 677.8L2433.4 677L2436.4 679.3L2437.5 681.9L2434.5 681.1L2431.9 683.4L2429.2 682.7L2426.6 681.4M2421.4 706.9L2424.6 705.7L2424.6 701L2427.7 699.2L2431 698L2431.9 701.8L2435.1 700.6L2438.2 699.2L2441.6 701.8L2445.5 701.8L2449.1 701.8L2451.1 704.1L2452.7 706.9L2455.5 709.9L2458.2 713.3L2460.5 712.6L2462.9 713L2465.1 714.3L2467.2 715.8L2467.7 719L2469.2 721.5L2470.1 724.4L2470.9 727.3L2472.8 729.1L2474.5 731.2L2476.3 733L2477.4 735.7L2479.5 734.3L2481.7 735L2485.2 737.2L2489 736.3L2491.5 739.3L2494.4 741.4L2496.4 743.7L2498.1 746.5L2496.7 748.7L2496.2 751.6L2495.4 754.2L2494.4 756.7L2493.7 761.5L2490.8 764.4L2489.5 769.3L2489.9 774.6L2488.3 779.6L2487.2 784.8L2484.5 786.3L2481.7 787.3L2480.1 789.3L2478 790.2L2476.8 793.2L2474.5 793.7L2474.1 797.7L2473 801.4L2471.4 803.8L2469.6 805.9L2468.1 808.5L2467.2 811.6L2466.2 815.5L2463.6 817.5L2460.9 816.8L2458.2 816.7L2455.5 820.5L2457.3 822.5L2458.2 825.7L2455.8 825.7L2453.6 826.9L2451.3 827.2L2449.1 828.2L2448.2 833.3L2445.9 834.6L2443.7 833.3L2446.4 837.1L2443.8 839.4L2442.8 843.5L2441.1 845.2L2439.1 846.1L2440.5 848.2L2442.2 849.9L2440.6 851.9L2439.5 854.6L2438.3 857.2L2436.4 858.9L2437.3 862.7L2440.7 864.4L2442.8 868.6L2439.9 868.1L2437.3 869.8L2434.6 866.6L2431 866.5L2428.7 863L2425.5 861.4L2424.5 858.4L2424.8 855.1L2424.3 851.9L2424.6 848.6L2427.8 846.1L2428.3 841L2428 835.9L2427.9 830.8L2429.2 827.1L2428.6 823.1L2429.5 820.3L2431.3 818.7L2431.9 815.8L2431.9 812.9L2431.9 809.7L2432.3 806.5L2432.3 803.3L2431.9 800.1L2432.2 796.8L2432.5 793.6L2432.6 790.1L2434.1 787.3L2434.4 784.5L2434.7 781.6L2435.4 778.5L2434.1 775.8L2431.8 772.9L2429.2 770.7L2426.3 767.5L2423.4 764.4L2422.4 760.6L2421.2 757.1L2420.2 753.3L2418.3 750.3L2419.3 747.1L2418.4 743.8L2416.4 742L2414.1 741.4L2415.5 739L2416.5 736.3L2415.5 733.7L2414.7 731.2L2415.1 728.2L2416.5 726L2419.2 722.2L2421.4 718.4L2419.7 714.7L2421 710.7L2421.4 706.9M2450.9 860.1L2453.6 858.9L2456.4 859.6L2454.5 862.2L2450.9 860.1M2529.8 691.1L2529.5 688L2529 685L2530.9 683.2L2531.6 680.1L2530.7 675L2532.9 671.1L2535.1 667.1L2537.3 662.9L2537.9 657.9L2540.3 653.9L2543.7 652L2543.8 648.5L2545.2 645.6L2546.7 643.5L2548.8 642.5L2549.4 639.7L2550.6 637.2L2554.2 638L2557.9 638.7L2560 637.1L2562.4 636.7L2564.7 636L2566.9 634.6L2570.3 636.2L2573.3 633.6L2576.4 632.3L2579.6 633.3L2579.3 638.1L2581.4 641.8L2580.2 642.3L2582.5 642.6L2584.3 644.7L2586.3 646.6L2588.7 646.1L2591.1 646.1L2593.6 646.3L2596.1 647.2L2597.8 649.9L2597.8 645.6L2600.2 646L2602.5 644.5L2605.2 644.7L2606.8 647.6L2608.8 647.1L2610.7 646.1L2612.1 648.4L2614.1 649.4L2617.1 649.4L2620.1 648.7L2623.7 648.9L2622.7 651.8L2620.4 652.5L2622.6 654.5L2623.4 658.1L2624.4 661.3L2624.9 664.8L2625 667.9L2625.8 670.9L2627.8 672.4L2629.1 675L2629.2 679.2L2631.6 681.6L2633.2 685.1L2632.2 689L2633.6 691.7L2635.6 693.3L2637.6 694.8L2639.4 696.7L2640.4 699.7L2643.8 699.1L2647.1 697.6L2650.5 697.2L2654 698L2654.3 701.8L2653.4 705.7L2651.3 708.7L2649.4 711.8L2648.5 715.8L2647.6 719.2L2645.9 721.9L2643.5 723.1L2641.3 724.8L2639.2 727.4L2637.9 730.9L2635.8 733.4L2634 736.3L2632.9 740.6L2632.2 745.2L2632.9 748.3L2634.6 750.5L2634.3 753.6L2634.9 756.7L2635.2 761.8L2634.9 766.9L2632.7 770.5L2629.5 772.3L2627.1 775.6L2624.9 779.2L2626.3 781.4L2626.7 784.3L2626.5 787.2L2625.9 789.9L2623.2 792.1L2621 795L2620.2 798.8L2620.4 802.7L2617.8 805.4L2615.9 809.1L2613.5 808.8L2611.4 810.3L2609.1 811.9L2608.6 815.4L2605.9 814.7L2603.1 815.4L2600.5 816.7L2597.8 817.5L2594.7 815.4L2594.1 810.3L2591.7 808.1L2589.2 805.8L2589.6 801.6L2588.7 797.6L2588.4 794.5L2589.2 791.7L2589.4 788.4L2587.8 786.1L2587.3 782.7L2585.5 780.3L2584.3 777.5L2583.3 774.6L2583.4 769.8L2586.4 767.5L2586 763.4L2586.3 759.2L2586.3 755.3L2585.4 751.6L2583.1 747.7L2583.3 742.6L2582 740.2L2580.1 739L2578.9 736.5L2578.4 733.7L2579.3 728.7L2579.1 723.5L2578.7 718.4L2575.5 718L2572.4 717.6L2571 714.5L2568.8 712.5L2565.9 713.3L2563.1 712.6L2560.8 715.1L2557.9 715.8L2555.3 715.1L2552.7 715.1L2550.1 715.6L2547.9 717.6L2545.8 714.2L2543.8 710.6L2540.7 709.2L2537.9 706.9L2535.9 703.9L2534.3 700.5L2532.3 699.2L2530.7 697.2L2530 694.2L2529.8 691.1M2650.9 759.2L2653.2 763.1L2652.9 768.2L2654.4 774.8L2654.7 781.7L2651.4 786.8L2647.6 791.2L2645.2 791.8L2643.1 793.7L2642 789L2640 784.8L2639.6 781L2641 777.8L2641.5 774.3L2641.8 770.7L2644.3 769L2646.7 766.9L2648.4 762.7L2650.9 759.2M2545.2 630.3L2545.2 627.2L2546.3 624.5L2545.6 621.7L2545.2 618.8L2548.5 620.1L2551.7 621.8L2555.2 620.7L2557.9 617.5L2559.1 614.5L2559.1 611.1L2556.8 607.1L2553.3 605.2L2556.2 606.6L2558.8 604.2L2561.6 600.5L2565.1 598.3L2566.9 596.9L2568.8 595.8L2570.5 594.3L2572.6 593.8L2574.2 592.1L2576 590.7L2577.1 587L2576.9 583L2580.5 581.7L2579.1 584.7L2579.6 588.1L2583.3 590.2L2586.9 590.7L2589 590.9L2591.1 591.2L2593.2 590.4L2595 588.9L2597 586.3L2599.6 586.9L2600.5 581.7L2602.7 583.6L2605 581.7L2604.1 577.1L2606.1 576.1L2608.2 576.4L2610.2 575.3L2612.3 576.1L2615.9 575.4L2613.6 576.2L2611.3 576.3L2608.9 576.3L2606.8 574.8L2603.6 574L2600.5 572.8L2600.5 567.7L2604.1 565.5L2607.4 562.6L2604.2 562.4L2601.4 560.5L2599.2 563L2596.4 563.1L2595.7 567L2593.2 569L2592.9 572.8L2595 575.4L2593.6 579.6L2591.4 583L2589.9 585.2L2587.8 585.6L2584.7 586.9L2584.1 581.8L2581.8 577.9L2578.7 578.1L2576 580L2573.5 579.1L2571.1 577.9L2570.1 574.2L2570.6 570.3L2572.3 567.4L2574.3 564.8L2577 564.6L2579.6 563.9L2581.6 561.4L2583.1 558.4L2585.5 556.6L2587.8 554.9L2589.9 553.7L2592.2 553.4L2593.8 551L2595.9 549.8L2599 550.9L2602.1 550.9L2604.9 549L2607.7 547.3L2610.2 548.6L2612.8 548.1L2615.4 547.8L2617.7 549.8L2621.3 551.6L2625 553.1L2628.8 553.5L2632.4 555L2635.8 557.5L2634 560L2632 558.2L2629.6 557.6L2627.2 557.9L2624.9 558.8L2621.3 558.8L2623.2 561.5L2624.9 564.4L2628.6 565.1L2631.7 564.1L2634.9 563.9L2637.7 560.7L2641.3 560L2641.8 557.1L2641.3 554.2L2645.4 554.2L2649.4 552.2L2653.7 550.4L2657.6 553.7L2660.8 554.6L2663.9 556.4L2667.1 555.2L2670.3 553.7L2673 554.5L2675.8 553.5L2678.6 553.1L2681.1 551.6L2683.4 549.5L2685.7 547.3L2683 543.4L2685.3 541.4L2687.9 540.4L2690.8 540.1L2692.9 542.9L2694.9 546.4L2698 547.3L2696.2 550.7L2695.6 554.9L2694.5 550.5L2693.8 546L2696.5 544.9L2699.3 544.7L2701.2 543.1L2703 541.3L2705.2 541.6L2707.4 540.9L2710 544L2713.4 543.4L2716.3 541.8L2719.2 540.1L2719.2 537.1L2723.8 533.5L2728.9 532.6L2733.9 536.1L2739.2 533.7L2742.1 533.8L2745 534.4L2747.1 531.4L2750 530.2L2754.3 527.5L2759 528.1L2762.4 532.5L2766.3 535.8L2765.2 540.6L2761.7 541.5L2758.6 542.1L2755.5 541.4L2758.3 541.4L2760.9 539.9L2763.6 539.1L2766.3 540.4L2772 545.6L2778.8 545.7L2785.1 542.4L2791.7 543.4L2795.1 543.9L2797.2 547.8L2802 548.2L2806.1 544.5L2810.6 542.4L2815.3 542.9L2819.8 544.5L2824.4 544.1L2829.1 543.2L2833.4 546L2838.1 544.9L2842.7 546.4L2847.3 547.8L2851.5 550.6L2856.1 553.5L2860.5 556.5L2864.6 552L2869.7 551.1L2873.5 553.1L2876.9 550.2L2880.6 550.3L2884.2 551.6L2887.8 552.9M2887.8 562.6L2885.1 563.6L2882.4 563.9L2884.4 566L2886 569L2882.3 572.3L2878.3 574.6L2874 575.2L2869.7 575.4L2867.5 580.5L2865.5 585.9L2862.1 582L2857.9 580.5L2856.6 584.4L2855.2 588.1L2853 591.2L2851.1 594.7L2848.2 596.1L2845.6 598.3L2843.6 595.7L2844.3 592L2843.7 588.8L2843.4 585.6L2844.2 582.1L2845.1 578.6L2847.5 577.2L2849.7 575.4L2852.6 575.6L2855.5 575.5L2857.3 572.4L2858.8 569L2856 572.1L2852.8 573.9L2849.4 572.4L2846.1 571L2843.9 573.6L2842.5 577.1L2836.4 574.3L2831.6 568.1L2825.6 571.3L2820.7 577.1L2816.8 579.2L2812.6 580.3L2810.4 585.5L2806.8 588.9L2808.9 590.9L2811.4 591L2813.8 591.6L2816.2 592.5L2816.3 595.9L2816.2 599.3L2815.7 602.6L2815.7 606L2813.3 608.1L2811.3 611L2808.4 612.2L2807.1 616.2L2804.1 618.2L2800.8 618.3L2798.5 620.4L2796.3 622.6L2794.4 624.9L2792.6 627.2L2793.1 630.3L2792.4 633.2L2793.8 635.5L2795.9 636.7L2793.5 639L2790.8 640.5L2790.1 636.7L2790.8 632.8L2789.4 629.8L2787.6 627.2L2784.3 626.1L2781.8 629L2783.6 625.2L2781.3 624.1L2779 625.1L2777.4 627.5L2775.4 629L2777.2 633.3L2780.5 631.8L2783.6 634.1L2780.3 636.4L2777.8 640L2777.7 643.2L2779.5 645.3L2781.2 646.8L2782.3 649.4L2781.5 652.8L2781.8 656.3L2780 660.8L2777.2 664.2L2774.2 666.7L2771.8 670.4L2768.9 670.5L2766.3 672.4L2763.5 672.3L2761.3 675L2757.8 673.2L2755.4 676.5L2753.1 680.1L2755 681.5L2756.7 683.5L2757.9 686.1L2758.5 689L2759 693.5L2759.6 698L2757.7 700.7L2755.1 702L2753.5 704.3L2751.8 706.4L2751.5 702.5L2749.3 700.1L2747.3 697.4L2744.2 694.4L2743 697.8L2741.5 701L2742.6 705.5L2743.7 710L2745.4 711.7L2747.2 713.1L2747.6 716.2L2749.1 718.4L2750.1 721.6L2750.4 725L2748 722.7L2745.1 721.4L2744.1 717.4L2743.3 713.3L2741.6 710.3L2739.7 707.4L2739.5 702.6L2740.2 698L2740.6 694.9L2739.2 692.5L2738 689.9L2738.4 687L2736.4 687.9L2734.3 688.2L2734.4 683.9L2732.4 680.6L2730.1 677.4L2728.3 673.7L2725.6 671.6L2723.4 673.4L2721 672.9L2718.8 676.2L2716.1 677.3L2713.5 679.2L2711.8 682.4L2710.7 686.2L2709.3 689L2706.9 689.5L2707.9 692.7L2707.1 695.9L2706.4 699L2706.5 702.3L2704.1 704.9L2702 707.9L2701.9 703.3L2699.3 700.5L2697.3 697L2695 693.9L2694.6 689.5L2693.8 685.2L2694.5 680L2693.3 675L2690.8 674.8L2688.4 675.5L2687.5 671.1L2684.9 668.7L2683 665.3L2680.8 664L2678.5 663L2676.1 662.8L2673.9 664.2L2671.9 662.7L2669.7 662.1L2667.7 663.5L2665.4 663L2663.9 659.6L2660.4 657.5L2656.7 658.4L2654.5 655.1L2652.1 652L2648.5 652L2650.2 653.9L2651.3 656.6L2650.7 660.3L2653 662.2L2654.9 666.5L2657.1 666.3L2659.4 666.8L2661.3 663.9L2663.6 661.7L2664.3 666.5L2666.9 669.2L2669.9 671.1L2668.2 675.7L2666.3 680.1L2663.5 681.3L2661.2 683.9L2659.3 688.2L2655.8 688.5L2653.2 688.6L2651.8 691.6L2649.8 693.1L2647.6 694.1L2645.6 693.3L2643.6 692.5L2641.9 694.1L2640.4 696.2L2640.3 691.6L2638.5 687.7L2635.6 686.4L2633.5 683.2L2634.2 678.7L2632.2 675L2631.3 672.1L2631.7 669L2630.1 666.9L2628.6 664.8L2626.9 660L2624.6 655.8L2623.9 652.4L2623.7 648.9L2625.6 646.5L2626.4 643L2625.9 639.4L2626.8 635.9L2623.7 638.1L2620.4 636.4L2616.8 635.4L2613.9 634.1L2611 634.6L2609.4 631.5L2609.2 627.7L2611.9 626.6L2614.1 623.9L2616.4 624.5L2618.6 623.4L2620.6 622.5L2622.7 622.4L2624.7 622L2626.8 622.1L2629.2 621.2L2631.8 621.9L2634.2 622.5L2636.7 622.6L2634.8 618.9L2632.2 616.2L2629.5 612.4L2627.2 613.1L2624.9 612.4L2622.2 614.7L2621.3 611.1L2619.3 609.6L2617.2 610.3L2615.1 611.9L2613.7 614.4L2612.3 617.6L2612.3 621.3L2610.7 623.4L2608.6 624.4L2605 624.7L2604.1 627.7L2605 631.5L2603.2 635.4L2600.1 632.8L2597.8 628.8L2596.8 623.9L2596.5 621.3L2594.5 619.7L2592.2 618.8L2590.1 617.1L2588.7 614.4L2586.3 612.1L2584 615.5L2584.8 618.7L2586.9 620.6L2590.5 621.8L2592.8 623.8L2595 625.9L2592.3 625.2L2591.4 629L2590.5 631.5L2590 626.4L2586.7 624.7L2583.8 621.8L2582.6 618.6L2580.2 617.5L2577.5 615.2L2574.6 616.2L2572.4 618.8L2569.8 619.1L2567.3 618.3L2567.3 621.6L2565 624.7L2562 626.4L2560.6 630.8L2557.9 634.6L2554.9 635.8L2551.9 636.4L2550.1 634.6L2547.8 634.8L2545.5 634.1L2545.2 630.3M2235.2 552.9L2237.7 552.4L2239.8 554.3L2242 555.2L2244.3 556.2L2246.4 557.9L2248.4 560.2L2250.8 560.5L2253.3 560L2251.1 563.6L2247.9 564.4L2245.4 563.7L2243 564.9L2240.9 563.1L2238.8 561.3L2235.2 562.6M2650.3 609.8L2653.5 609.3L2656.7 609.1L2657.6 613.7L2654 614.9L2655 617.8L2656.7 620.1L2658.9 621.7L2659.4 625.2L2657.7 629L2658.5 633.3L2655.7 632.9L2653 634.1L2650.3 630.3L2651.2 625.2L2649.8 621.5L2647.6 618.8L2646.7 613.7L2648.1 610.9L2650.3 609.8M2667.5 611.1L2669.8 611.3L2672.1 611.1L2672.1 616.2L2669.8 616.3L2667.5 617L2668 614.1L2667.5 611.1M2750 597.1L2753 595.9L2755.5 593.2L2758.7 591L2760.4 586.3L2759.8 589.6L2758.2 592L2756.1 594.4L2753.7 595.8L2750 597.1M2551.5 600.9L2554.8 600.1L2557.4 597.1L2560.7 596.8L2563.9 597.8L2564.6 594L2563 591.3L2561 589.4L2558.5 588.9L2557.9 585.6L2558.2 581.5L2556.3 580.6L2554.2 581.2L2555.7 578.9L2552.1 579.2L2550.3 584L2550.7 587.3L2552.8 588.6L2554.3 590.5L2556.1 592L2553.3 592.7L2553.7 595.8L2552.1 596.3L2554.1 596.7L2556.1 597.3L2554 599.7L2551.5 600.9M2550.6 595.3L2550.6 590.7L2547.9 587.6L2546 590.3L2543.4 590.2L2543.4 593.1L2544.3 595.8L2547.5 596.4L2550.6 595.3M2518 561.3L2521.6 559L2524.6 559.8L2527.1 562.3L2529.3 559.1L2532.5 558.8L2534.8 560.5L2536.8 562.6L2534.8 564.4L2532.7 566L2530.4 567.2L2528 566.7L2524.2 567.1L2520.7 565.4L2518 561.3M2581.4 525.6L2583.8 525.7L2586.1 526.5L2588.4 526L2590.5 524.3L2594.5 526.4L2598.7 526.3L2602.4 522.9L2606.8 523.5L2604.9 524.4L2603.3 526.4L2601.5 527.6L2599.6 528.6L2597.6 528.9L2595.6 529.6L2594 531.2L2592.3 532.7L2589 531.7L2586 529.4L2583.2 528.6L2581.4 525.6M2654.9 546L2656.4 544.1L2658 542.2L2660 541.2L2662.1 541.4L2664 539L2666.5 538.7L2667.9 535.7L2670.3 534.5L2674.2 536.4L2678.2 537.5L2682.1 535.4L2685.7 532.5L2683.3 535.9L2680.6 538.5L2677.2 538.7L2673.9 538.3L2672.2 541.1L2670 543.1L2667.6 544.6L2665.7 547.3L2663.4 546.3L2661.7 548.7L2659.6 548.7L2657.6 548L2654.9 546M2733.7 526.8L2735.9 525.2L2737.9 523L2740.2 521.5L2742.8 521.7L2745.2 522.5L2747.6 523.2L2750.1 524.1L2751.8 526.8L2749.9 529L2747.7 530.9L2745.2 530.5L2742.8 529.4L2740.4 529.7L2738 529.5L2735.9 528.2L2733.7 526.8M2809.9 535.8L2812.9 535.9L2815.5 538.1L2817.4 534.3L2820.7 534.5L2823.9 534.6L2827.1 535.6L2830.2 537.2L2833.4 537.1L2830.2 532.4L2825.6 532.3L2823.6 538.3L2818.9 539.6L2816.7 537.8L2814.2 538.5L2811.8 537.9L2809.9 535.8M2797.2 648.7L2800 647.2L2800.4 643L2798.6 641.8L2801.7 638.4L2804.9 637.9L2808 637.2L2809.9 633.3L2813.5 631.5L2813.9 627.7L2815.3 624.4L2818 623.1L2818.9 627.7L2818.2 630.4L2817.1 632.8L2816.7 637.9L2813.1 640L2809.5 640.5L2807.5 643L2804.4 640.5L2800.8 642.3L2800.3 645.3L2799.9 648.4L2797.2 648.7M2815.7 622.4L2815.8 618L2817.6 615.7L2818.6 612.6L2821.3 616.1L2824.9 617.5L2823.3 620.1L2821.1 621.3L2819.1 621.1L2817.1 620.3L2815.7 622.4M2818.9 611.1L2819.2 606L2819.3 600.9L2819.3 595.4L2819.8 589.9L2820.2 593.2L2821.6 595.8L2822.2 599L2821.6 602.2L2821.9 605.6L2820.7 608.6L2818.9 611.1M2779.4 669.9L2781 667.4L2781.8 664.2L2782.5 666L2781.5 669.3L2780.5 672.4L2779.4 669.9M2758.5 679.3L2761.8 677.5L2762.7 678.8L2760 681.9L2758.5 679.3M2706.2 704.3L2708.5 706.2L2709.8 709.4L2708.3 712.8L2706.5 713.3L2706.9 708.8L2706.2 704.3M2779.9 681.4L2783 681.6L2783.5 685.1L2781.8 687.7L2785.1 690.3L2786.3 695.4L2785.4 696.2L2782.7 692.8L2780.3 691.6L2779 687.7L2779.7 684.6L2779.9 681.4M2782.7 710.7L2783.6 708.1L2785.4 706.4L2786.8 703.9L2789 703.6L2789.2 706.9L2790.8 709.4L2789 714L2786.3 712L2782.7 710.7M2782.7 698.5L2785.4 700.5L2788.1 696.7L2789 701.8L2786.9 703.6L2784.5 704.3L2783.6 701.4L2782.7 698.5M2774.1 706.9L2776.3 703.5L2778.1 699.7M2759.1 724.8L2761.2 722.9L2763.6 722.2L2765.6 720.6L2767.3 718.4L2770.4 716L2771.8 711.2L2774 714.7L2777.2 715.3L2776.1 720.7L2775 726L2775.5 729.4L2774.4 732.5L2773.6 735.6L2772.3 738.3L2770.2 737.9L2768.2 737.5L2765.9 736.8L2763.6 736.3L2760.9 732.4L2760 728.6L2759.1 724.8M2734.3 714.6L2736.4 717.1L2739.2 718.4L2741.7 721.2L2744.6 723.5L2746.7 723.9L2748.2 726.1L2748.9 728.8L2750 731.2L2751.6 734.1L2753.7 736.3L2753.2 739.8L2753.3 743.4L2751.2 742.4L2749.1 741.4L2747.4 737.5L2744.6 735.5L2743.6 732.8L2741.7 731.5L2740.9 728.8L2740.4 726L2741.3 721.7L2739.7 717.8L2736.8 716.7L2734.3 714.6M2752.4 746L2755.3 745L2758.2 745.7L2760.5 745.9L2762.7 745.2L2765.8 747.3L2769.1 748.5L2768.7 750.6L2766.7 751L2764.7 751.4L2762.7 750.7L2760.9 749.5L2757.9 747.7L2754.6 747.5L2752.4 746M2770.9 749.8L2774.1 748.2L2777.2 750.3L2780.9 750.8L2784.5 750.1L2788.1 750L2791.7 750.1L2789.4 753.2L2786.3 754.1L2785.2 751.1L2782.8 750.5L2780.4 750.8L2779 753.6L2775.5 752.1L2771.8 751.3L2770.9 749.8M2778.1 742.6L2776.5 739.8L2777.2 736.3L2778 731.7L2779 727.3L2781.6 725.2L2784.5 726L2788.1 724.8L2785.4 727.8L2782.7 727.3L2779.9 727.3L2780.8 732.4L2784.5 731.2L2782.1 735L2783.5 737.3L2784.5 740.1L2782.7 741.4L2780.8 737.5L2779.6 742.6L2778.1 742.6M2792.6 723.5L2793.3 726.2L2794.4 728.6L2793.5 730.6L2793 726M2799 730.6L2801.7 731.2L2804.4 730.6L2805.3 733.9L2806.2 737L2808.9 734.9L2811.7 732.9L2814.7 732.6L2817.1 735.2L2820.7 737.5L2824.4 739.3L2827.1 741.3L2829.4 743.9L2828 746L2829.5 748.3L2830.9 750.7L2832.7 752.7L2834.3 754.9L2831.6 754.7L2828.9 754.1L2826.9 749.9L2823.4 748.3L2821.6 751.1L2818.9 752.1L2816.3 750L2813.5 749L2812.5 745.9L2811.7 742.6L2809 741L2806.2 739.8L2804.1 740L2802.2 738.8L2803.5 735L2801 733.2L2799 730.6M2830.7 742.6L2833.8 740.6L2837 739.3L2837.4 741.4L2835.6 743.5L2833.4 744.4L2830.7 742.6M2842.5 745.2L2845.4 746.6L2847.9 749L2850.6 749.9L2852.5 752.9L2855.2 755.4M2863.3 766.9L2865.6 769.3L2866 773.3M2858.8 780.2L2861.8 782.3L2864.2 785.6M2882.9 773.3L2885.3 774.6M2767.6 786.1L2767 790.8L2768.5 795L2770.3 796.7L2770.9 799.6L2770.4 802.4L2770 805.2L2771.3 807.7L2772.1 810.7L2770.3 812.8L2770 816.2L2772.6 817.5L2775.4 818L2778 819.1L2780.5 817.3L2782.8 815.8L2785.4 815.2L2788.6 813L2791.5 816L2793.8 813.1L2795.3 809.3L2797.3 808.6L2799.3 809.1L2801.6 811.6L2804.4 812.4L2806.7 814L2807.3 817.5L2810.1 816.7L2810.8 812.9L2811.3 816.1L2811.7 819.3L2814.3 821.9L2816.2 825.7L2818.8 827.1L2821.6 827.7L2824.1 828.7L2826.7 828.2L2830 825.7L2833.4 823.9L2835.1 819.2L2835.8 814.2L2837.6 809.9L2838.9 805.2L2839.1 800.1L2839.2 795L2837.4 790.7L2834.9 787.3L2833.4 783.8L2831.6 780.4L2828.9 779.4L2826.7 776.9L2826.2 771.5L2824.9 766.4L2821.6 764.4L2820.6 760.3L2819.8 756.2L2818.5 758.7L2818 761.8L2818.6 764.7L2818.5 767.7L2817.3 770.2L2817.1 773.3L2814 773.3L2812.3 771.5L2811.6 768.6L2809.7 767.4L2807.7 766.9L2808 763L2809.5 759.8L2808 756.9L2806.1 754.5L2803.3 754.7L2801.7 758L2799.4 759.2L2797.7 761.8L2796.3 766.9L2793.2 764.4L2790.9 763.8L2789 765.6L2787.7 768.2L2786.9 771.2L2785.1 773L2783.2 774.6L2780.3 777.4L2777.2 779.7L2774.3 779.4L2771.8 781.7L2769.5 783.5L2767.6 786.1M2823.8 832.5L2827 831.2L2830.2 833.1L2829.8 838.4L2827.1 840L2824.9 837.1L2823.8 832.5M2874.6 816.7L2876.5 820.4L2879.6 821.8L2882.6 822.4L2885.1 824.9L2883.6 827L2882.4 829.5L2880.7 832L2879.3 834.8L2878.4 830.2L2876.6 829L2878.2 824.4L2877.1 819.9L2874.6 816.7M2874.6 832.3L2877.5 835.1L2875.2 836.9L2874.7 840.5L2872.5 842.3L2871.5 845.6L2869.5 847.9L2867 847.6L2863.3 845.6L2865.7 844.1L2867 841L2869.7 838.9L2872 835.9L2874.6 832.3M2235.2 943.9L2242 941.5L2249 939.5L2255.9 941.6L2262.4 945.7L2267.8 952.1L2274.7 953.7L2280.9 949.6L2286 943.1L2287.2 939.9L2289.2 937.5L2290.9 934.6L2293.2 932.9L2288.6 934.1L2286.3 928.2L2282.3 928.8L2278.7 926.5L2282.7 928L2285.9 924.3L2289.6 923.5L2293.2 922.7L2296.9 921.5L2300.3 919.3L2304.1 918.3L2307.7 920.1L2312.3 920.3L2316.8 919.9L2321.3 918.4L2325.8 918.4L2330.4 919.2L2334.9 918.8L2339.4 917.3L2344 917.6L2347.5 915.1L2351.3 916.4L2354.7 918.5L2358.5 918.9L2362.7 919.8L2365.5 915.4L2369.3 916.7L2373 915L2376.7 915L2380.2 913L2382.7 912.5L2384.7 914.4L2387 914.6L2389.3 915L2392.4 917.1L2395.6 918.3L2399.1 917.8L2402 915L2405.4 912.3L2409.3 912.1L2413 913.7L2416.5 915.8L2418.9 916.2L2421.4 916.2L2423.7 914.8L2425.5 912.5L2427.8 910.6L2430 908.4L2432.4 906.9L2434.6 904.8L2435.3 901.7L2436.6 899L2438.6 897.1L2441 897.2L2443.4 897L2444.8 894.1L2447 894.9L2449.1 893.3L2451.2 892.9L2453.3 892.3L2455.3 891.3L2457.3 890.3L2455.6 892.1L2454.5 894.6L2451.6 895.9L2449.1 898.4L2446.9 902.5L2443.7 904.8L2445.1 907.7L2447.5 908.3L2448.9 910.8L2450.9 912.5L2451.8 916.3L2452.7 920.1L2451 924L2450 928.2L2446.9 927.4L2443.7 927.8L2438.1 926.3L2432.4 926.9L2427.1 929.6L2421.9 932.9L2424.3 933.7L2426.3 935.7L2428.7 935.6L2431 936.8L2436.5 937.3L2441.7 939.9L2447.2 939.4L2452.7 939.8L2458.3 940.5L2463.6 938.2L2469 939.2L2474.5 938L2477.9 935.6L2481.6 934.7L2485.3 933.7L2489 932.9L2492.1 931.4L2495.4 931.7L2498.5 930.2L2501.7 929.1L2504.2 926.8L2506.7 924.5L2509.6 923.2L2512.6 922.7L2516.2 922.3L2518.6 918.3L2522 917.6L2525.2 916.3L2529 916.4L2532.7 914.7L2535.9 911.9L2539.7 911.2L2542.9 914.4L2546.7 915.7L2549.4 912L2552.4 908.7L2557.1 907.9L2561.4 905.5L2566.1 905.7L2570.6 907.4L2575.3 907.8L2579.7 910.4L2584.3 909.1L2588.7 906.9L2593.2 908.3L2597.7 909.8L2602.2 908.8L2606.8 908.1L2610.4 906.6L2614.1 907L2617.8 906.4L2621.3 904.8L2624.4 906.7L2627.5 908.5L2630.9 907.9L2634 906.1L2638.8 907.7L2643.6 905.8L2647.8 902.6L2652.1 899.7L2654.4 898.8L2656.7 898.4L2659 898.5L2661.2 897.2L2663.8 897.3L2665.6 899.8L2667.8 901.1L2670.3 901L2673.9 900L2677.5 900.7L2681.2 900.9L2684.8 901.8L2687 905.5L2690.2 907.4L2693.8 907.5L2697.5 906.9L2700.5 906.4L2702.9 903.5L2706.4 904.8L2709.4 901.9L2712.5 900.3L2715.6 898.4L2720.3 900.5L2724.6 897.1L2729.2 897.5L2733.7 897.2L2738.3 896.7L2742.8 898.3L2747.1 894.8L2751.8 897.2L2756.7 898.7L2760.8 902.5L2766.1 902.8L2770 897.7L2774.5 898.9L2779 898.7L2783.5 896L2788.1 897.9L2792.6 897.5L2797.2 897.4L2801.7 894.5L2806.2 897.2L2809.6 897.6L2812.8 896L2815.6 898.6L2818.9 899.7L2822.2 902.7L2826.1 902L2829.7 903.4L2833.4 903.5L2838.2 903.4L2842.3 907.1L2846.9 909L2851.5 907.4L2855.3 909.1L2858.4 912.6L2862.1 911.4L2866 911.2L2869.7 912.5L2868.8 915.7L2867.2 918.2L2864.8 918.2L2862.4 918.9L2859 921.7L2857 926.5L2853.5 928.5L2851.5 932.9L2853.7 934.8L2855.9 936.5L2858.8 936.1L2860.6 939.3L2862.7 943.9L2866.3 945.7L2869.6 943.5L2873.3 943.1L2876.7 940.1L2880.6 940.9L2884.3 941.9L2887.8 943.9M2423.7 904.8L2426.7 904.1L2429.4 902.3L2431.9 904.4L2434.6 906.1L2433.7 910.3L2436.4 912.5L2434.1 912.8L2431.8 912.5L2429.5 912.3L2427.4 913.8L2426.6 908.5L2423.7 904.8M2278.7 677L2280.5 678.8M2266 588.1L2263.8 589.5L2261.8 591.3L2259.3 590L2257 592L2254.7 589.6L2251.9 590.7L2249.2 591.5L2247.9 595L2245.5 595.2L2243.5 597.1L2241.1 596.7L2238.8 596.3M2826.2 614.9L2828.6 614.4L2829.3 611L2831.4 611L2833.4 610.3L2835.9 607.5L2838.9 606L2841.9 604.4L2843.4 600.4M2576.5 623.9L2579.1 623.9L2578.7 628.5L2576.9 629L2576.5 623.9M2577.3 619.8L2578.7 619L2578.4 622.6L2577.3 619.8M2584.2 631.5L2587 632.8L2589.6 631L2588.9 634.9L2586.6 633L2584.2 631.5M2604.3 637.9L2606.6 639L2609 638.7M2620.2 639.2L2624 637.7L2622.6 640L2620.2 639.2M2658.3 696.4L2660.3 696.7M2419.6 681.9L2423.2 682.6M2439.7 681.9L2442.4 682.1M2328.9 598.9L2332.4 597.2L2334.9 600.9L2337.6 604.7L2335.6 602.6L2333.1 603.5L2330.9 601.3L2328.9 598.9M2320.4 590.7L2322.6 593.2M2281.4 581.7L2283.3 580.2L2285.4 581.2M2250.2 566.4L2252.7 567.3L2255.1 567.2M2376.6 542.2L2378.9 544L2381.3 542.7L2383.8 542.5L2385.7 540.1L2384.8 545.5L2382.4 546.4L2380.2 544.7L2378.9 541.9L2376.6 542.2M2388.4 539.6L2390.7 539.7L2392.9 539.4L2395.3 538.1L2397.4 540.1L2394.7 543.4L2392 544.1L2389.3 543.4L2388.4 539.6M2387.5 524.3L2391.1 524.3L2394.8 523.9L2398.5 523.5L2402 521.7L2402.8 524.3L2403.8 526.8L2401.5 528.1L2399.2 526.7L2397.1 528.4L2394.7 528.1L2392.7 528.5L2390.7 527.7L2389.5 525.2L2387.5 524.3M2373 533.2L2375.6 534.8L2378.5 535.3L2381.2 534.3L2383.8 532.7L2383.8 537.1L2380.3 536L2376.6 535.8L2374.9 534.3L2373 533.2M2686.6 854.3L2689.3 855" stroke="#000" stroke-width="1" fill="none" stroke-linejoin="round"/>
<g clip-path="url(#mf)">
<path d="M2872 636.4L2872.6 636.4L2873.2 636.4L2873.7 636.4L2874.3 636.5L2874.8 636.5L2875.4 636.5L2876 636.6L2876.5 636.6L2877.1 636.7L2877.6 636.7L2878.2 636.8L2878.7 636.9L2879.3 637L2879.8 637.1L2880.4 637.2L2880.9 637.3L2881.5 637.4L2882 637.5L2882.6 637.6L2883.1 637.8L2883.7 637.9L2884.2 638L2884.8 638.2L2885.3 638.4L2885.8 638.5L2886.4 638.7L2886.9 638.9L2887.4 639.1L2887.8 639.2M2235.2 639.2L2235.4 639.2L2235.9 639.4L2236.4 639.6L2236.9 639.9L2237.5 640.1L2238 640.3L2238.5 640.5L2239 640.8L2239.5 641L2240 641.2L2240.5 641.5L2241 641.8L2241.5 642L2242 642.3L2242.5 642.6L2243 642.9L2243.5 643.1L2243.9 643.4L2244.4 643.7L2244.9 644L2245.4 644.4L2245.8 644.7L2246.3 645L2246.8 645.3L2247.2 645.7L2247.7 646L2248.1 646.3L2248.6 646.7L2249 647L2249.5 647.4L2249.9 647.8L2250.3 648.1L2250.8 648.5L2251.2 648.9L2251.6 649.3L2252 649.7L2252.5 650.1L2252.9 650.5L2253.3 650.9L2253.7 651.3L2254.1 651.7L2254.5 652.1L2254.9 652.5L2255.2 653L2255.6 653.4L2256 653.8L2256.4 654.3L2256.8 654.7L2257.1 655.2L2257.5 655.6L2257.9 656.1L2258.2 656.5L2258.6 657L2258.9 657.5L2259.3 657.9L2259.6 658.4L2259.9 658.9L2260.3 659.4L2260.6 659.9L2260.9 660.4L2261.2 660.8L2261.5 661.3L2261.9 661.8L2262.2 662.4L2262.5 662.9L2262.8 663.4L2263.1 663.9L2263.4 664.4L2263.6 664.9L2263.9 665.5L2264.2 666L2264.5 666.5L2264.8 667.1L2265 667.6L2265.3 668.1L2265.5 668.7L2265.8 669.2L2266 669.8L2266.3 670.3L2266.5 670.9L2266.8 671.4L2267 672L2267.2 672.6L2267.5 673.1L2267.7 673.7L2267.9 674.3L2268.1 674.8L2268.3 675.4L2268.5 676L2268.7 676.6L2268.9 677.2L2269.1 677.7L2269.3 678.3L2269.5 678.9L2269.7 679.5L2269.9 680.1L2270.1 680.7L2270.2 681.3L2270.4 681.9L2270.6 682.5L2270.7 683.1L2270.9 683.7L2271 684.3L2271.2 684.9L2271.3 685.5L2271.5 686.1L2271.6 686.7L2271.7 687.3L2271.9 687.9L2272 688.6L2272.1 689.2L2272.2 689.8L2272.4 690.4L2272.5 691L2272.6 691.7L2272.7 692.3L2272.8 692.9L2272.9 693.5L2273 694.2L2273.1 694.8L2273.2 695.4L2273.2 696L2273.3 696.7L2273.4 697.3L2273.5 697.9L2273.5 698.6L2273.6 699.2L2273.7 699.8L2273.7 700.5L2273.8 701.1L2273.8 701.7L2273.9 702.4L2273.9 703L2273.9 703.6L2274 704.3L2274 704.9L2274 705.5L2274.1 706.2L2274.1 706.8L2274.1 707.5L2274.1 708.1L2274.1 708.7L2274.1 709.4L2274.2 710L2274.2 710.6L2274.2 711.3L2274.1 711.9L2274.1 712.6L2274.1 713.2L2274.1 713.8L2274.1 714.5L2274.1 715.1L2274 715.8L2274 716.4L2274 717L2273.9 717.7L2273.9 718.3L2273.9 718.9L2273.8 719.6L2273.8 720.2L2273.7 720.8L2273.7 721.5L2273.6 722.1L2273.5 722.7L2273.5 723.4L2273.4 724L2273.3 724.6L2273.2 725.3L2273.2 725.9L2273.1 726.5L2273 727.1L2272.9 727.8L2272.8 728.4L2272.7 729L2272.6 729.6L2272.5 730.3L2272.4 730.9L2272.3 731.5L2272.2 732.1L2272.1 732.7L2271.9 733.3L2271.8 734L2271.7 734.6L2271.6 735.2L2271.4 735.8L2271.3 736.4L2271.2 737L2271 737.6L2270.9 738.2L2270.7 738.8L2270.6 739.4L2270.4 740L2270.2 740.6L2270.1 741.2L2269.9 741.8L2269.7 742.4L2269.6 743L2269.4 743.6L2269.2 744.2L2269 744.8L2268.8 745.3L2268.6 745.9L2268.5 746.5L2268.3 747.1L2268.1 747.6L2267.9 748.2L2267.6 748.8L2267.4 749.4L2267.2 749.9L2267 750.5L2266.8 751L2266.6 751.6L2266.3 752.2L2266.1 752.7L2265.9 753.3L2265.6 753.8L2265.4 754.4L2265.2 754.9L2264.9 755.4L2264.7 756L2264.4 756.5L2264.2 757L2263.9 757.6L2263.6 758.1L2263.4 758.6L2263.1 759.1L2262.8 759.7L2262.6 760.2L2262.3 760.7L2262 761.2L2261.7 761.7L2261.4 762.2L2261.1 762.7L2260.8 763.2L2260.5 763.7L2260.2 764.2L2259.9 764.6L2259.6 765.1L2259.3 765.6L2259 766.1L2258.7 766.6L2258.4 767L2258 767.5L2257.7 767.9L2257.4 768.4L2257 768.8L2256.7 769.3L2256.4 769.7L2256 770.2L2255.7 770.6L2255.3 771L2255 771.5L2254.6 771.9L2254.3 772.3L2253.9 772.7L2253.6 773.1L2253.2 773.6L2252.8 774L2252.4 774.4L2252.1 774.8L2251.7 775.1L2251.3 775.5L2250.9 775.9L2250.5 776.3L2250.2 776.7L2249.8 777L2249.4 777.4L2249 777.7L2248.6 778.1L2248.2 778.5L2247.8 778.8L2247.4 779.1L2246.9 779.5L2246.5 779.8L2246.1 780.1L2245.7 780.4L2245.3 780.8L2244.9 781.1L2244.4 781.4L2244 781.7L2243.6 782L2243.1 782.3L2242.7 782.5L2242.3 782.8L2241.8 783.1L2241.4 783.4L2240.9 783.6L2240.5 783.9L2240.1 784.1L2239.6 784.4L2239.2 784.6L2238.7 784.9L2238.2 785.1L2237.8 785.3L2237.3 785.6L2236.9 785.8L2236.4 786L2235.9 786.2L2235.5 786.4L2235.2 786.5M2887.8 786.5L2887.6 786.6L2887.1 786.8L2886.7 786.9L2886.2 787.1L2885.7 787.3L2885.2 787.4L2884.8 787.6L2884.3 787.8L2883.8 787.9L2883.3 788L2882.8 788.2L2882.4 788.3L2881.9 788.4L2881.4 788.6L2880.9 788.7L2880.4 788.8L2879.9 788.9L2879.4 789L2878.9 789L2878.5 789.1L2878 789.2L2877.5 789.3L2877 789.3L2876.5 789.4L2876 789.4L2875.5 789.5L2875 789.5L2874.5 789.6L2874 789.6L2873.5 789.6L2873 789.6L2872.5 789.6L2872 789.6L2871.5 789.6L2871 789.6L2870.5 789.6L2870 789.6L2869.6 789.6L2869.1 789.5L2868.6 789.5L2868.1 789.4L2867.6 789.4L2867.1 789.3L2866.6 789.3L2866.1 789.2L2865.6 789.1L2865.1 789L2864.6 789L2864.1 788.9L2863.6 788.8L2863.2 788.7L2862.7 788.6L2862.2 788.4L2861.7 788.3L2861.2 788.2L2860.7 788L2860.3 787.9L2859.8 787.8L2859.3 787.6L2858.8 787.4L2858.3 787.3L2857.9 787.1L2857.4 786.9L2856.9 786.8L2856.5 786.6L2856 786.4L2855.5 786.2L2855.1 786L2854.6 785.8L2854.1 785.6L2853.7 785.3L2853.2 785.1L2852.8 784.9L2852.3 784.6L2851.9 784.4L2851.4 784.1L2851 783.9L2850.5 783.6L2850.1 783.4L2849.6 783.1L2849.2 782.8L2848.7 782.5L2848.3 782.3L2847.9 782L2847.5 781.7L2847 781.4L2846.6 781.1L2846.2 780.8L2845.8 780.4L2845.3 780.1L2844.9 779.8L2844.5 779.5L2844.1 779.1L2843.7 778.8L2843.3 778.5L2842.9 778.1L2842.5 777.7L2842.1 777.4L2841.7 777L2841.3 776.7L2840.9 776.3L2840.5 775.9L2840.1 775.5L2839.8 775.1L2839.4 774.8L2839 774.4L2838.6 774L2838.3 773.6L2837.9 773.1L2837.5 772.7L2837.2 772.3L2836.8 771.9L2836.5 771.5L2836.1 771L2835.8 770.6L2835.4 770.2L2835.1 769.7L2834.7 769.3L2834.4 768.8L2834.1 768.4L2833.7 767.9L2833.4 767.5L2833.1 767L2832.8 766.6L2832.5 766.1L2832.1 765.6L2831.8 765.1L2831.5 764.6L2831.2 764.2L2830.9 763.7L2830.6 763.2L2830.3 762.7L2830 762.2L2829.8 761.7L2829.5 761.2L2829.2 760.7L2828.9 760.2L2828.6 759.7L2828.4 759.1L2828.1 758.6L2827.8 758.1L2827.6 757.6L2827.3 757L2827 756.5L2826.8 756L2826.5 755.4L2826.3 754.9L2826.1 754.4L2825.8 753.8L2825.6 753.3L2825.3 752.7L2825.1 752.2L2824.9 751.6L2824.7 751L2824.4 750.5L2824.2 749.9L2824 749.4L2823.8 748.8L2823.6 748.2L2823.4 747.6L2823.2 747.1L2823 746.5L2822.8 745.9L2822.6 745.3L2822.4 744.8L2822.2 744.2L2822.1 743.6L2821.9 743L2821.7 742.4L2821.5 741.8L2821.4 741.2L2821.2 740.6L2821.1 740L2820.9 739.4L2820.7 738.8L2820.6 738.2L2820.5 737.6L2820.3 737L2820.2 736.4L2820 735.8L2819.9 735.2L2819.8 734.6L2819.6 734L2819.5 733.3L2819.4 732.7L2819.3 732.1L2819.2 731.5L2819.1 730.9L2818.9 730.3L2818.8 729.6L2818.7 729L2818.6 728.4L2818.6 727.8L2818.5 727.1L2818.4 726.5L2818.3 725.9L2818.2 725.3L2818.1 724.6L2818.1 724L2818 723.4L2817.9 722.7L2817.9 722.1L2817.8 721.5L2817.7 720.8L2817.7 720.2L2817.6 719.6L2817.6 718.9L2817.6 718.3L2817.5 717.7L2817.5 717L2817.4 716.4L2817.4 715.8L2817.4 715.1L2817.4 714.5L2817.3 713.8L2817.3 713.2L2817.3 712.6L2817.3 711.9L2817.3 711.3L2817.3 710.6L2817.3 710L2817.3 709.4L2817.3 708.7L2817.3 708.1L2817.3 707.5L2817.4 706.8L2817.4 706.2L2817.4 705.5L2817.4 704.9L2817.5 704.3L2817.5 703.6L2817.6 703L2817.6 702.4L2817.6 701.7L2817.7 701.1L2817.7 700.5L2817.8 699.8L2817.9 699.2L2817.9 698.6L2818 697.9L2818.1 697.3L2818.1 696.7L2818.2 696L2818.3 695.4L2818.4 694.8L2818.5 694.2L2818.6 693.5L2818.7 692.9L2818.8 692.3L2818.9 691.7L2819 691L2819.1 690.4L2819.2 689.8L2819.3 689.2L2819.5 688.6L2819.6 687.9L2819.7 687.3L2819.8 686.7L2820 686.1L2820.1 685.5L2820.3 684.9L2820.4 684.3L2820.6 683.7L2820.7 683.1L2820.9 682.5L2821.1 681.9L2821.2 681.3L2821.4 680.7L2821.6 680.1L2821.8 679.5L2821.9 678.9L2822.1 678.3L2822.3 677.7L2822.5 677.2L2822.7 676.6L2822.9 676L2823.1 675.4L2823.3 674.8L2823.5 674.3L2823.8 673.7L2824 673.1L2824.2 672.6L2824.4 672L2824.7 671.4L2824.9 670.9L2825.2 670.3L2825.4 669.8L2825.7 669.2L2825.9 668.7L2826.2 668.1L2826.4 667.6L2826.7 667.1L2827 666.5L2827.3 666L2827.5 665.5L2827.8 664.9L2828.1 664.4L2828.4 663.9L2828.7 663.4L2829 662.9L2829.3 662.4L2829.6 661.8L2829.9 661.3L2830.2 660.8L2830.5 660.4L2830.9 659.9L2831.2 659.4L2831.5 658.9L2831.9 658.4L2832.2 657.9L2832.5 657.5L2832.9 657L2833.2 656.5L2833.6 656.1L2834 655.6L2834.3 655.2L2834.7 654.7L2835.1 654.3L2835.4 653.8L2835.8 653.4L2836.2 653L2836.6 652.5L2837 652.1L2837.4 651.7L2837.8 651.3L2838.2 650.9L2838.6 650.5L2839 650.1L2839.4 649.7L2839.8 649.3L2840.3 648.9L2840.7 648.5L2841.1 648.1L2841.6 647.8L2842 647.4L2842.4 647L2842.9 646.7L2843.3 646.3L2843.8 646L2844.2 645.7L2844.7 645.3L2845.2 645L2845.6 644.7L2846.1 644.4L2846.6 644L2847 643.7L2847.5 643.4L2848 643.1L2848.5 642.9L2849 642.6L2849.5 642.3L2850 642L2850.4 641.8L2850.9 641.5L2851.5 641.2L2852 641L2852.5 640.8L2853 640.5L2853.5 640.3L2854 640.1L2854.5 639.9L2855 639.6L2855.6 639.4L2856.1 639.2L2856.6 639.1L2857.2 638.9L2857.7 638.7L2858.2 638.5L2858.8 638.4L2859.3 638.2L2859.8 638L2860.4 637.9L2860.9 637.8L2861.5 637.6L2862 637.5L2862.6 637.4L2863.1 637.3L2863.7 637.2L2864.2 637.1L2864.8 637L2865.3 636.9L2865.9 636.8L2866.4 636.7L2867 636.7L2867.5 636.6L2868.1 636.6L2868.7 636.5L2869.2 636.5L2869.8 636.5L2870.3 636.4L2870.9 636.4L2871.5 636.4L2872 636.4" stroke="#ffff00" stroke-width="4.2" fill="none" stroke-linejoin="round"/>
<path d="M2872 559.8L2874 559.8L2875.9 559.8L2877.8 559.9L2879.8 560L2881.7 560.1L2883.6 560.2L2885.5 560.4L2887.4 560.5L2887.8 560.6M2235.2 560.6L2236.7 560.7L2238.5 561L2240.4 561.2L2242.2 561.5L2244.1 561.8L2245.9 562.1L2247.6 562.4L2249.4 562.7L2251.1 563.1L2252.9 563.5L2254.6 563.9L2256.2 564.3L2257.9 564.8L2259.5 565.3L2261.1 565.8L2262.7 566.3L2264.2 566.8L2265.7 567.3L2267.2 567.9L2268.7 568.4L2270.2 569L2271.6 569.6L2273 570.3L2274.3 570.9L2275.7 571.5L2277 572.2L2278.3 572.9L2279.5 573.6L2280.8 574.3L2282 575L2283.2 575.7L2284.3 576.4L2285.5 577.2L2286.6 577.9L2287.7 578.7L2288.7 579.5L2289.8 580.3L2290.8 581.1L2291.8 581.9L2292.8 582.7L2293.7 583.5L2294.6 584.4L2295.6 585.2L2296.5 586.1L2297.3 586.9L2298.2 587.8L2299 588.7L2299.8 589.6L2300.6 590.5L2301.4 591.4L2302.2 592.3L2302.9 593.2L2303.6 594.1L2304.3 595L2305 595.9L2305.7 596.9L2306.4 597.8L2307 598.8L2307.6 599.7L2308.3 600.7L2308.9 601.6L2309.5 602.6L2310 603.6L2310.6 604.5L2311.1 605.5L2311.7 606.5L2312.2 607.5L2312.7 608.5L2313.2 609.5L2313.7 610.5L2314.2 611.5L2314.7 612.5L2315.1 613.5L2315.6 614.5L2316 615.5L2316.4 616.5L2316.8 617.6L2317.2 618.6L2317.6 619.6L2318 620.7L2318.4 621.7L2318.8 622.7L2319.1 623.8L2319.5 624.8L2319.8 625.8L2320.1 626.9L2320.5 627.9L2320.8 629L2321.1 630L2321.4 631.1L2321.7 632.2L2322 633.2L2322.2 634.3L2322.5 635.3L2322.8 636.4L2323 637.5L2323.3 638.5L2323.5 639.6L2323.8 640.7L2324 641.7L2324.2 642.8L2324.5 643.9L2324.7 645L2324.9 646.1L2325.1 647.1L2325.3 648.2L2325.5 649.3L2325.6 650.4L2325.8 651.5L2326 652.5L2326.2 653.6L2326.3 654.7L2326.5 655.8L2326.6 656.9L2326.8 658L2326.9 659.1L2327.1 660.2L2327.2 661.3L2327.3 662.4L2327.5 663.5L2327.6 664.6L2327.7 665.6L2327.8 666.7L2327.9 667.8L2328 668.9L2328.1 670L2328.2 671.1L2328.3 672.2L2328.4 673.3L2328.4 674.4L2328.5 675.5L2328.6 676.6L2328.7 677.7L2328.7 678.8L2328.8 679.9L2328.8 681.1L2328.9 682.2L2328.9 683.3L2329 684.4L2329 685.5L2329.1 686.6L2329.1 687.7L2329.1 688.8L2329.2 689.9L2329.2 691L2329.2 692.1L2329.2 693.2L2329.2 694.3L2329.2 695.4L2329.2 696.5L2329.2 697.6L2329.2 698.7L2329.2 699.8L2329.2 700.9L2329.2 702.1L2329.2 703.2L2329.2 704.3L2329.1 705.4L2329.1 706.5L2329.1 707.6L2329 708.7L2329 709.8L2329 710.9L2328.9 712L2328.9 713.1L2328.8 714.2L2328.8 715.3L2328.7 716.4L2328.7 717.5L2328.6 718.6L2328.5 719.7L2328.5 720.8L2328.4 721.9L2328.3 723L2328.2 724.1L2328.1 725.2L2328 726.3L2328 727.4L2327.9 728.5L2327.8 729.6L2327.7 730.7L2327.6 731.8L2327.4 732.9L2327.3 734L2327.2 735.1L2327.1 736.2L2327 737.3L2326.9 738.4L2326.7 739.5L2326.6 740.6L2326.5 741.6L2326.3 742.7L2326.2 743.8L2326 744.9L2325.9 746L2325.7 747.1L2325.6 748.2L2325.4 749.2L2325.2 750.3L2325.1 751.4L2324.9 752.5L2324.7 753.6L2324.5 754.6L2324.4 755.7L2324.2 756.8L2324 757.9L2323.8 758.9L2323.6 760L2323.4 761.1L2323.2 762.1L2323 763.2L2322.7 764.3L2322.5 765.3L2322.3 766.4L2322.1 767.5L2321.8 768.5L2321.6 769.6L2321.4 770.6L2321.1 771.7L2320.9 772.7L2320.6 773.8L2320.3 774.8L2320.1 775.9L2319.8 776.9L2319.5 778L2319.3 779L2319 780.1L2318.7 781.1L2318.4 782.1L2318.1 783.2L2317.8 784.2L2317.5 785.2L2317.2 786.3L2316.8 787.3L2316.5 788.3L2316.2 789.3L2315.8 790.3L2315.5 791.4L2315.2 792.4L2314.8 793.4L2314.4 794.4L2314.1 795.4L2313.7 796.4L2313.3 797.4L2313 798.4L2312.6 799.4L2312.2 800.4L2311.8 801.4L2311.4 802.4L2310.9 803.3L2310.5 804.3L2310.1 805.3L2309.7 806.3L2309.2 807.2L2308.8 808.2L2308.3 809.1L2307.9 810.1L2307.4 811.1L2306.9 812L2306.4 813L2305.9 813.9L2305.4 814.8L2304.9 815.8L2304.4 816.7L2303.9 817.6L2303.4 818.5L2302.8 819.5L2302.3 820.4L2301.7 821.3L2301.1 822.2L2300.6 823.1L2300 824L2299.4 824.8L2298.8 825.7L2298.2 826.6L2297.6 827.5L2296.9 828.3L2296.3 829.2L2295.7 830.1L2295 830.9L2294.3 831.7L2293.7 832.6L2293 833.4L2292.3 834.2L2291.6 835L2290.8 835.9L2290.1 836.7L2289.4 837.5L2288.6 838.2L2287.9 839L2287.1 839.8L2286.3 840.6L2285.5 841.3L2284.7 842.1L2283.9 842.8L2283.1 843.5L2282.2 844.3L2281.4 845L2280.5 845.7L2279.6 846.4L2278.7 847.1L2277.9 847.8L2276.9 848.4L2276 849.1L2275.1 849.8L2274.1 850.4L2273.2 851L2272.2 851.7L2271.2 852.3L2270.2 852.9L2269.2 853.5L2268.2 854L2267.2 854.6L2266.1 855.2L2265.1 855.7L2264 856.3L2262.9 856.8L2261.8 857.3L2260.7 857.8L2259.6 858.3L2258.5 858.7L2257.4 859.2L2256.2 859.7L2255.1 860.1L2253.9 860.5L2252.7 860.9L2251.5 861.3L2250.3 861.7L2249.1 862L2247.9 862.4L2246.7 862.7L2245.4 863.1L2244.2 863.4L2242.9 863.7L2241.7 863.9L2240.4 864.2L2239.1 864.4L2237.9 864.7L2236.6 864.9L2235.3 865.1L2235.2 865.1M2887.8 865.1L2886.6 865.3L2885.3 865.4L2884 865.6L2882.6 865.7L2881.3 865.9L2880 866L2878.7 866.1L2877.4 866.1L2876 866.2L2874.7 866.2L2873.4 866.3L2872 866.3L2870.7 866.3L2869.4 866.2L2868 866.2L2866.7 866.1L2865.4 866.1L2864.1 866L2862.7 865.9L2861.4 865.7L2860.1 865.6L2858.8 865.4L2857.5 865.3L2856.2 865.1L2854.9 864.9L2853.6 864.7L2852.3 864.4L2851 864.2L2849.8 863.9L2848.5 863.7L2847.3 863.4L2846 863.1L2844.8 862.7L2843.6 862.4L2842.3 862L2841.1 861.7L2839.9 861.3L2838.7 860.9L2837.6 860.5L2836.4 860.1L2835.2 859.7L2834.1 859.2L2833 858.7L2831.8 858.3L2830.7 857.8L2829.6 857.3L2828.5 856.8L2827.4 856.3L2826.4 855.7L2825.3 855.2L2824.3 854.6L2823.3 854L2822.2 853.5L2821.2 852.9L2820.2 852.3L2819.2 851.7L2818.3 851L2817.3 850.4L2816.4 849.8L2815.4 849.1L2814.5 848.4L2813.6 847.8L2812.7 847.1L2811.8 846.4L2810.9 845.7L2810.1 845L2809.2 844.3L2808.4 843.5L2807.6 842.8L2806.7 842.1L2805.9 841.3L2805.2 840.6L2804.4 839.8L2803.6 839L2802.8 838.2L2802.1 837.5L2801.3 836.7L2800.6 835.9L2799.9 835L2799.2 834.2L2798.5 833.4L2797.8 832.6L2797.1 831.7L2796.5 830.9L2795.8 830.1L2795.2 829.2L2794.5 828.3L2793.9 827.5L2793.3 826.6L2792.7 825.7L2792.1 824.8L2791.5 824L2790.9 823.1L2790.3 822.2L2789.7 821.3L2789.2 820.4L2788.6 819.5L2788.1 818.5L2787.6 817.6L2787 816.7L2786.5 815.8L2786 814.8L2785.5 813.9L2785 813L2784.5 812L2784.1 811.1L2783.6 810.1L2783.1 809.1L2782.7 808.2L2782.2 807.2L2781.8 806.3L2781.4 805.3L2780.9 804.3L2780.5 803.3L2780.1 802.4L2779.7 801.4L2779.3 800.4L2778.9 799.4L2778.5 798.4L2778.1 797.4L2777.7 796.4L2777.4 795.4L2777 794.4L2776.6 793.4L2776.3 792.4L2775.9 791.4L2775.6 790.3L2775.3 789.3L2774.9 788.3L2774.6 787.3L2774.3 786.3L2774 785.2L2773.7 784.2L2773.4 783.2L2773.1 782.1L2772.8 781.1L2772.5 780.1L2772.2 779L2771.9 778L2771.7 776.9L2771.4 775.9L2771.1 774.8L2770.9 773.8L2770.6 772.7L2770.3 771.7L2770.1 770.6L2769.9 769.6L2769.6 768.5L2769.4 767.5L2769.2 766.4L2768.9 765.3L2768.7 764.3L2768.5 763.2L2768.3 762.1L2768.1 761.1L2767.9 760L2767.7 758.9L2767.5 757.9L2767.3 756.8L2767.1 755.7L2766.9 754.6L2766.7 753.6L2766.6 752.5L2766.4 751.4L2766.2 750.3L2766.1 749.2L2765.9 748.2L2765.7 747.1L2765.6 746L2765.4 744.9L2765.3 743.8L2765.1 742.7L2765 741.6L2764.9 740.6L2764.7 739.5L2764.6 738.4L2764.5 737.3L2764.4 736.2L2764.2 735.1L2764.1 734L2764 732.9L2763.9 731.8L2763.8 730.7L2763.7 729.6L2763.6 728.5L2763.5 727.4L2763.4 726.3L2763.3 725.2L2763.2 724.1L2763.2 723L2763.1 721.9L2763 720.8L2762.9 719.7L2762.9 718.6L2762.8 717.5L2762.7 716.4L2762.7 715.3L2762.6 714.2L2762.6 713.1L2762.5 712L2762.5 710.9L2762.5 709.8L2762.4 708.7L2762.4 707.6L2762.3 706.5L2762.3 705.4L2762.3 704.3L2762.3 703.2L2762.3 702.1L2762.2 700.9L2762.2 699.8L2762.2 698.7L2762.2 697.6L2762.2 696.5L2762.2 695.4L2762.2 694.3L2762.3 693.2L2762.3 692.1L2762.3 691L2762.3 689.9L2762.3 688.8L2762.4 687.7L2762.4 686.6L2762.4 685.5L2762.5 684.4L2762.5 683.3L2762.6 682.2L2762.6 681.1L2762.7 679.9L2762.7 678.8L2762.8 677.7L2762.9 676.6L2762.9 675.5L2763 674.4L2763.1 673.3L2763.2 672.2L2763.3 671.1L2763.4 670L2763.5 668.9L2763.6 667.8L2763.7 666.7L2763.8 665.6L2763.9 664.6L2764 663.5L2764.1 662.4L2764.3 661.3L2764.4 660.2L2764.5 659.1L2764.7 658L2764.8 656.9L2765 655.8L2765.1 654.7L2765.3 653.6L2765.5 652.5L2765.6 651.5L2765.8 650.4L2766 649.3L2766.2 648.2L2766.4 647.1L2766.6 646.1L2766.8 645L2767 643.9L2767.2 642.8L2767.4 641.7L2767.7 640.7L2767.9 639.6L2768.2 638.5L2768.4 637.5L2768.7 636.4L2768.9 635.3L2769.2 634.3L2769.5 633.2L2769.8 632.2L2770.1 631.1L2770.4 630L2770.7 629L2771 627.9L2771.3 626.9L2771.7 625.8L2772 624.8L2772.3 623.8L2772.7 622.7L2773.1 621.7L2773.4 620.7L2773.8 619.6L2774.2 618.6L2774.6 617.6L2775 616.5L2775.5 615.5L2775.9 614.5L2776.3 613.5L2776.8 612.5L2777.3 611.5L2777.7 610.5L2778.2 609.5L2778.7 608.5L2779.2 607.5L2779.8 606.5L2780.3 605.5L2780.9 604.5L2781.4 603.6L2782 602.6L2782.6 601.6L2783.2 600.7L2783.8 599.7L2784.4 598.8L2785.1 597.8L2785.7 596.9L2786.4 595.9L2787.1 595L2787.8 594.1L2788.6 593.2L2789.3 592.3L2790.1 591.4L2790.8 590.5L2791.6 589.6L2792.4 588.7L2793.3 587.8L2794.1 586.9L2795 586.1L2795.9 585.2L2796.8 584.4L2797.7 583.5L2798.7 582.7L2799.7 581.9L2800.7 581.1L2801.7 580.3L2802.7 579.5L2803.8 578.7L2804.9 577.9L2806 577.2L2807.1 576.4L2808.3 575.7L2809.5 575L2810.7 574.3L2811.9 573.6L2813.2 572.9L2814.5 572.2L2815.8 571.5L2817.1 570.9L2818.5 570.3L2819.9 569.6L2821.3 569L2822.7 568.4L2824.2 567.9L2825.7 567.3L2827.2 566.8L2828.8 566.3L2830.4 565.8L2832 565.3L2833.6 564.8L2835.2 564.3L2836.9 563.9L2838.6 563.5L2840.3 563.1L2842.1 562.7L2843.8 562.4L2845.6 562.1L2847.4 561.8L2849.2 561.5L2851.1 561.2L2852.9 561L2854.8 560.7L2856.7 560.5L2858.6 560.4L2860.5 560.2L2862.4 560.1L2864.3 560L2866.2 559.9L2868.2 559.8L2870.1 559.8L2872 559.8" stroke="#ffff00" stroke-width="4.2" fill="none" stroke-linejoin="round"/>
<path d="M2545.7 514.3L2537.2 514.4L2528.8 514.5L2520.6 514.8L2512.8 515.1L2505.2 515.6L2498.1 516.1L2491.5 516.7L2485.3 517.4L2479.5 518.1L2474.2 518.9L2469.3 519.7L2464.7 520.6L2460.5 521.5L2456.7 522.4L2453.1 523.4L2449.8 524.4L2446.8 525.4L2444 526.5L2441.3 527.5L2438.9 528.6L2436.6 529.7L2434.5 530.8L2432.6 531.9L2430.7 533.1L2429 534.2L2427.4 535.4L2425.9 536.5L2424.4 537.7L2423.1 538.9L2421.8 540L2420.6 541.2L2419.4 542.4L2418.4 543.6L2417.3 544.8L2416.3 546L2415.4 547.2L2414.5 548.4L2413.7 549.6L2412.9 550.8L2412.1 552L2411.3 553.3L2410.6 554.5L2409.9 555.7L2409.3 556.9L2408.7 558.2L2408.1 559.4L2407.5 560.6L2406.9 561.9L2406.4 563.1L2405.9 564.3L2405.3 565.6L2404.9 566.8L2404.4 568.1L2403.9 569.3L2403.5 570.6L2403.1 571.8L2402.7 573L2402.3 574.3L2401.9 575.5L2401.5 576.8L2401.1 578L2400.8 579.3L2400.4 580.5L2400.1 581.8L2399.7 583L2399.4 584.3L2399.1 585.5L2398.8 586.8L2398.5 588.1L2398.2 589.3L2397.9 590.6L2397.7 591.8L2397.4 593.1L2397.1 594.3L2396.9 595.6L2396.6 596.8L2396.4 598.1L2396.1 599.4L2395.9 600.6L2395.7 601.9L2395.4 603.1L2395.2 604.4L2395 605.7L2394.8 606.9L2394.6 608.2L2394.4 609.4L2394.2 610.7L2394 612L2393.8 613.2L2393.6 614.5L2393.4 615.8L2393.2 617L2393 618.3L2392.8 619.5L2392.7 620.8L2392.5 622.1L2392.3 623.3L2392.1 624.6L2392 625.9L2391.8 627.1L2391.7 628.4L2391.5 629.7L2391.3 630.9L2391.2 632.2L2391 633.5L2390.9 634.7L2390.7 636L2390.6 637.3L2390.4 638.5L2390.3 639.8L2390.2 641.1L2390 642.3L2389.9 643.6L2389.7 644.9L2389.6 646.1L2389.5 647.4L2389.3 648.7L2389.2 649.9L2389.1 651.2L2388.9 652.5L2388.8 653.7L2388.7 655L2388.6 656.3L2388.4 657.5L2388.3 658.8L2388.2 660.1L2388.1 661.3L2388 662.6L2387.8 663.9L2387.7 665.1L2387.6 666.4L2387.5 667.7L2387.4 668.9L2387.3 670.2L2387.1 671.5L2387 672.7L2386.9 674L2386.8 675.3L2386.7 676.6L2386.6 677.8L2386.5 679.1L2386.4 680.4L2386.3 681.6L2386.2 682.9L2386.1 684.2L2386 685.4L2385.8 686.7L2385.7 688L2385.6 689.2L2385.5 690.5L2385.4 691.8L2385.3 693.1L2385.2 694.3L2385.1 695.6L2385 696.9L2384.9 698.1L2384.8 699.4L2384.7 700.7L2384.6 701.9L2384.5 703.2L2384.4 704.5L2384.3 705.7L2384.2 707L2384.1 708.3L2384 709.6L2383.9 710.8L2383.8 712.1L2383.7 713.4L2383.6 714.6L2383.5 715.9L2383.4 717.2L2383.4 718.4L2383.3 719.7L2383.2 721L2383.1 722.3L2383 723.5L2382.9 724.8L2382.8 726.1L2382.7 727.3L2382.6 728.6L2382.5 729.9L2382.4 731.1L2382.3 732.4L2382.2 733.7L2382.1 734.9L2382 736.2L2381.9 737.5L2381.8 738.8L2381.7 740L2381.6 741.3L2381.5 742.6L2381.4 743.8L2381.3 745.1L2381.2 746.4L2381.1 747.6L2381 748.9L2380.9 750.2L2380.8 751.5L2380.7 752.7L2380.6 754L2380.5 755.3L2380.4 756.5L2380.3 757.8L2380.2 759.1L2380.1 760.3L2380 761.6L2379.9 762.9L2379.8 764.1L2379.7 765.4L2379.6 766.7L2379.5 768L2379.4 769.2L2379.3 770.5L2379.2 771.8L2379.1 773L2379 774.3L2378.9 775.6L2378.8 776.8L2378.7 778.1L2378.6 779.4L2378.5 780.6L2378.3 781.9L2378.2 783.2L2378.1 784.5L2378 785.7L2377.9 787L2377.8 788.3L2377.7 789.5L2377.6 790.8L2377.4 792.1L2377.3 793.3L2377.2 794.6L2377.1 795.9L2377 797.1L2376.8 798.4L2376.7 799.7L2376.6 800.9L2376.5 802.2L2376.3 803.5L2376.2 804.7L2376.1 806L2376 807.3L2375.8 808.5L2375.7 809.8L2375.6 811.1L2375.4 812.3L2375.3 813.6L2375.1 814.9L2375 816.1L2374.9 817.4L2374.7 818.7L2374.6 819.9L2374.4 821.2L2374.3 822.5L2374.1 823.7L2374 825L2373.8 826.3L2373.7 827.5L2373.5 828.8L2373.3 830.1L2373.2 831.3L2373 832.6L2372.8 833.9L2372.7 835.1L2372.5 836.4L2372.3 837.7L2372.1 838.9L2372 840.2L2371.8 841.4L2371.6 842.7L2371.4 844L2371.2 845.2L2371 846.5L2370.8 847.8L2370.6 849L2370.4 850.3L2370.2 851.5L2369.9 852.8L2369.7 854.1L2369.5 855.3L2369.3 856.6L2369 857.8L2368.8 859.1L2368.5 860.4L2368.3 861.6L2368 862.9L2367.8 864.1L2367.5 865.4L2367.2 866.6L2366.9 867.9L2366.6 869.1L2366.3 870.4L2366 871.7L2365.7 872.9L2365.4 874.2L2365.1 875.4L2364.7 876.7L2364.4 877.9L2364 879.2L2363.7 880.4L2363.3 881.7L2362.9 882.9L2362.5 884.2L2362.1 885.4L2361.7 886.6L2361.2 887.9L2360.8 889.1L2360.3 890.4L2359.8 891.6L2359.3 892.9L2358.8 894.1L2358.2 895.3L2357.7 896.6L2357.1 897.8L2356.5 899L2355.9 900.3L2355.2 901.5L2354.5 902.7L2353.8 903.9L2353.1 905.2L2352.3 906.4L2351.5 907.6L2350.6 908.8L2349.7 910L2348.8 911.2L2347.8 912.4L2346.8 913.6L2345.7 914.8L2344.6 916L2343.4 917.2L2342.1 918.3L2340.7 919.5L2339.3 920.7L2337.8 921.8L2336.2 923L2334.4 924.1L2332.6 925.3L2330.6 926.4L2328.5 927.5L2326.2 928.6L2323.8 929.7L2321.2 930.7L2318.4 931.8L2315.3 932.8L2312 933.8L2308.5 934.8L2304.6 935.7L2300.4 936.6L2295.9 937.5L2291 938.3L2285.6 939.1L2279.9 939.8L2273.7 940.5L2267 941.1L2259.9 941.6L2252.4 942.1L2244.5 942.4L2236.3 942.7L2235.2 942.7M2887.8 942.7L2880.5 942.8L2872 942.9L2863.5 942.8L2855.1 942.7L2846.9 942.4L2839.1 942.1L2831.5 941.6L2824.4 941.1L2817.8 940.5L2811.6 939.8L2805.8 939.1L2800.5 938.3L2795.6 937.5L2791 936.6L2786.8 935.7L2783 934.8L2779.4 933.8L2776.1 932.8L2773.1 931.8L2770.3 930.7L2767.6 929.7L2765.2 928.6L2762.9 927.5L2760.8 926.4L2758.9 925.3L2757 924.1L2755.3 923L2753.7 921.8L2752.2 920.7L2750.7 919.5L2749.4 918.3L2748.1 917.2L2746.9 916L2745.7 914.8L2744.7 913.6L2743.6 912.4L2742.6 911.2L2741.7 910L2740.8 908.8L2740 907.6L2739.2 906.4L2738.4 905.2L2737.6 903.9L2736.9 902.7L2736.2 901.5L2735.6 900.3L2735 899L2734.4 897.8L2733.8 896.6L2733.2 895.3L2732.7 894.1L2732.2 892.9L2731.6 891.6L2731.2 890.4L2730.7 889.1L2730.2 887.9L2729.8 886.6L2729.4 885.4L2729 884.2L2728.6 882.9L2728.2 881.7L2727.8 880.4L2727.4 879.2L2727.1 877.9L2726.7 876.7L2726.4 875.4L2726 874.2L2725.7 872.9L2725.4 871.7L2725.1 870.4L2724.8 869.1L2724.5 867.9L2724.2 866.6L2724 865.4L2723.7 864.1L2723.4 862.9L2723.2 861.6L2722.9 860.4L2722.7 859.1L2722.4 857.8L2722.2 856.6L2722 855.3L2721.7 854.1L2721.5 852.8L2721.3 851.5L2721.1 850.3L2720.9 849L2720.7 847.8L2720.5 846.5L2720.3 845.2L2720.1 844L2719.9 842.7L2719.7 841.4L2719.5 840.2L2719.3 838.9L2719.1 837.7L2719 836.4L2718.8 835.1L2718.6 833.9L2718.4 832.6L2718.3 831.3L2718.1 830.1L2718 828.8L2717.8 827.5L2717.6 826.3L2717.5 825L2717.3 823.7L2717.2 822.5L2717 821.2L2716.9 819.9L2716.7 818.7L2716.6 817.4L2716.5 816.1L2716.3 814.9L2716.2 813.6L2716 812.3L2715.9 811.1L2715.8 809.8L2715.6 808.5L2715.5 807.3L2715.4 806L2715.2 804.7L2715.1 803.5L2715 802.2L2714.9 800.9L2714.7 799.7L2714.6 798.4L2714.5 797.1L2714.4 795.9L2714.3 794.6L2714.1 793.3L2714 792.1L2713.9 790.8L2713.8 789.5L2713.7 788.3L2713.6 787L2713.4 785.7L2713.3 784.5L2713.2 783.2L2713.1 781.9L2713 780.6L2712.9 779.4L2712.8 778.1L2712.7 776.8L2712.6 775.6L2712.5 774.3L2712.4 773L2712.3 771.8L2712.1 770.5L2712 769.2L2711.9 768L2711.8 766.7L2711.7 765.4L2711.6 764.1L2711.5 762.9L2711.4 761.6L2711.3 760.3L2711.2 759.1L2711.1 757.8L2711 756.5L2710.9 755.3L2710.8 754L2710.7 752.7L2710.6 751.5L2710.5 750.2L2710.4 748.9L2710.3 747.6L2710.2 746.4L2710.1 745.1L2710 743.8L2709.9 742.6L2709.8 741.3L2709.7 740L2709.7 738.8L2709.6 737.5L2709.5 736.2L2709.4 734.9L2709.3 733.7L2709.2 732.4L2709.1 731.1L2709 729.9L2708.9 728.6L2708.8 727.3L2708.7 726.1L2708.6 724.8L2708.5 723.5L2708.4 722.3L2708.3 721L2708.2 719.7L2708.1 718.4L2708 717.2L2707.9 715.9L2707.8 714.6L2707.7 713.4L2707.6 712.1L2707.5 710.8L2707.4 709.6L2707.3 708.3L2707.2 707L2707.1 705.7L2707 704.5L2706.9 703.2L2706.8 701.9L2706.7 700.7L2706.6 699.4L2706.5 698.1L2706.4 696.9L2706.3 695.6L2706.2 694.3L2706.1 693.1L2706 691.8L2705.9 690.5L2705.8 689.2L2705.7 688L2705.6 686.7L2705.5 685.4L2705.4 684.2L2705.3 682.9L2705.2 681.6L2705.1 680.4L2705 679.1L2704.9 677.8L2704.8 676.6L2704.6 675.3L2704.5 674L2704.4 672.7L2704.3 671.5L2704.2 670.2L2704.1 668.9L2704 667.7L2703.9 666.4L2703.7 665.1L2703.6 663.9L2703.5 662.6L2703.4 661.3L2703.3 660.1L2703.1 658.8L2703 657.5L2702.9 656.3L2702.8 655L2702.6 653.7L2702.5 652.5L2702.4 651.2L2702.3 649.9L2702.1 648.7L2702 647.4L2701.9 646.1L2701.7 644.9L2701.6 643.6L2701.4 642.3L2701.3 641.1L2701.2 639.8L2701 638.5L2700.9 637.3L2700.7 636L2700.6 634.7L2700.4 633.5L2700.3 632.2L2700.1 630.9L2700 629.7L2699.8 628.4L2699.6 627.1L2699.5 625.9L2699.3 624.6L2699.1 623.3L2699 622.1L2698.8 620.8L2698.6 619.5L2698.4 618.3L2698.3 617L2698.1 615.8L2697.9 614.5L2697.7 613.2L2697.5 612L2697.3 610.7L2697.1 609.4L2696.9 608.2L2696.7 606.9L2696.5 605.7L2696.2 604.4L2696 603.1L2695.8 601.9L2695.6 600.6L2695.3 599.4L2695.1 598.1L2694.8 596.8L2694.6 595.6L2694.3 594.3L2694.1 593.1L2693.8 591.8L2693.5 590.6L2693.2 589.3L2692.9 588.1L2692.6 586.8L2692.3 585.5L2692 584.3L2691.7 583L2691.4 581.8L2691 580.5L2690.7 579.3L2690.3 578L2690 576.8L2689.6 575.5L2689.2 574.3L2688.8 573L2688.4 571.8L2688 570.6L2687.5 569.3L2687.1 568.1L2686.6 566.8L2686.1 565.6L2685.6 564.3L2685.1 563.1L2684.5 561.9L2684 560.6L2683.4 559.4L2682.8 558.2L2682.2 556.9L2681.5 555.7L2680.8 554.5L2680.1 553.3L2679.4 552L2678.6 550.8L2677.8 549.6L2676.9 548.4L2676 547.2L2675.1 546L2674.1 544.8L2673.1 543.6L2672 542.4L2670.9 541.2L2669.7 540L2668.4 538.9L2667 537.7L2665.6 536.5L2664.1 535.4L2662.5 534.2L2660.7 533.1L2658.9 531.9L2656.9 530.8L2654.8 529.7L2652.5 528.6L2650.1 527.5L2647.5 526.5L2644.7 525.4L2641.6 524.4L2638.3 523.4L2634.8 522.4L2630.9 521.5L2626.7 520.6L2622.2 519.7L2617.3 518.9L2611.9 518.1L2606.2 517.4L2600 516.7L2593.3 516.1L2586.2 515.6L2578.7 515.1L2570.8 514.8L2562.6 514.5L2554.2 514.4L2545.7 514.3" stroke="#ffff00" stroke-width="4.2" fill="none" stroke-linejoin="round"/>
<path d="M2545.7 590.9L2543.1 591L2540.4 591.1L2537.8 591.2L2535.1 591.5L2532.5 591.8L2529.9 592.1L2527.3 592.5L2524.7 593L2522.2 593.5L2519.7 594.1L2517.3 594.8L2514.8 595.5L2512.4 596.3L2510.1 597.1L2507.8 598L2505.5 598.9L2503.3 599.9L2501.1 600.9L2499 602L2497 603.2L2494.9 604.3L2492.9 605.5L2491 606.8L2489.1 608.1L2487.3 609.4L2485.5 610.8L2483.8 612.2L2482.1 613.7L2480.4 615.1L2478.9 616.6L2477.3 618.2L2475.8 619.7L2474.3 621.3L2472.9 623L2471.5 624.6L2470.2 626.3L2468.9 628L2467.6 629.7L2466.4 631.5L2465.2 633.2L2464 635L2462.9 636.8L2461.8 638.7L2460.7 640.5L2459.7 642.4L2458.7 644.2L2457.8 646.1L2456.8 648.1L2455.9 650L2455.1 651.9L2454.2 653.9L2453.4 655.8L2452.6 657.8L2451.8 659.8L2451.1 661.8L2450.3 663.8L2449.6 665.8L2449 667.9L2448.3 669.9L2447.7 672L2447.1 674L2446.5 676.1L2445.9 678.2L2445.4 680.3L2444.8 682.4L2444.3 684.5L2443.8 686.6L2443.3 688.7L2442.9 690.8L2442.4 692.9L2442 695.1L2441.6 697.2L2441.2 699.3L2440.8 701.5L2440.4 703.6L2440.1 705.8L2439.8 708L2439.4 710.1L2439.1 712.3L2438.8 714.5L2438.6 716.6L2438.3 718.8L2438.1 721L2437.8 723.2L2437.6 725.4L2437.4 727.6L2437.2 729.8L2437 732L2436.9 734.2L2436.7 736.4L2436.6 738.6L2436.4 740.8L2436.3 743L2436.2 745.2L2436.2 747.4L2436.1 749.6L2436 751.8L2436 754L2435.9 756.3L2435.9 758.5L2435.9 760.7L2435.9 762.9L2436 765.1L2436 767.3L2436.1 769.5L2436.1 771.7L2436.2 773.9L2436.3 776.1L2436.4 778.4L2436.6 780.6L2436.7 782.8L2436.9 785L2437.1 787.2L2437.3 789.4L2437.5 791.6L2437.7 793.7L2438 795.9L2438.2 798.1L2438.5 800.3L2438.8 802.5L2439.2 804.7L2439.5 806.8L2439.9 809L2440.3 811.1L2440.7 813.3L2441.1 815.5L2441.6 817.6L2442.1 819.7L2442.6 821.9L2443.2 824L2443.8 826.1L2444.4 828.2L2445 830.3L2445.7 832.4L2446.4 834.5L2447.1 836.5L2447.9 838.6L2448.7 840.7L2449.6 842.7L2450.5 844.7L2451.4 846.7L2452.4 848.7L2453.5 850.7L2454.6 852.7L2455.7 854.6L2456.9 856.5L2458.1 858.4L2459.4 860.3L2460.8 862.2L2462.3 864L2463.8 865.8L2465.3 867.6L2467 869.4L2468.7 871.1L2470.5 872.8L2472.4 874.5L2474.4 876.1L2476.4 877.7L2478.6 879.3L2480.8 880.8L2483.2 882.2L2485.6 883.6L2488.2 885L2490.8 886.3L2493.6 887.6L2496.4 888.8L2499.4 889.9L2502.5 890.9L2505.7 891.9L2508.9 892.9L2512.3 893.7L2515.8 894.5L2519.3 895.1L2522.9 895.7L2526.6 896.2L2530.4 896.7L2534.2 897L2538 897.2L2541.9 897.4L2545.7 897.4L2549.6 897.4L2553.5 897.2L2557.3 897L2561.1 896.7L2564.8 896.2L2568.5 895.7L2572.2 895.1L2575.7 894.5L2579.2 893.7L2582.5 892.9L2585.8 891.9L2589 890.9L2592 889.9L2595 888.8L2597.9 887.6L2600.6 886.3L2603.3 885L2605.8 883.6L2608.3 882.2L2610.6 880.8L2612.9 879.3L2615 877.7L2617.1 876.1L2619.1 874.5L2620.9 872.8L2622.8 871.1L2624.5 869.4L2626.1 867.6L2627.7 865.8L2629.2 864L2630.6 862.2L2632 860.3L2633.3 858.4L2634.6 856.5L2635.8 854.6L2636.9 852.7L2638 850.7L2639 848.7L2640 846.7L2641 844.7L2641.9 842.7L2642.7 840.7L2643.5 838.6L2644.3 836.5L2645.1 834.5L2645.8 832.4L2646.4 830.3L2647.1 828.2L2647.7 826.1L2648.3 824L2648.8 821.9L2649.3 819.7L2649.8 817.6L2650.3 815.5L2650.8 813.3L2651.2 811.1L2651.6 809L2651.9 806.8L2652.3 804.7L2652.6 802.5L2652.9 800.3L2653.2 798.1L2653.5 795.9L2653.8 793.7L2654 791.6L2654.2 789.4L2654.4 787.2L2654.6 785L2654.7 782.8L2654.9 780.6L2655 778.4L2655.1 776.1L2655.2 773.9L2655.3 771.7L2655.4 769.5L2655.5 767.3L2655.5 765.1L2655.5 762.9L2655.5 760.7L2655.5 758.5L2655.5 756.3L2655.5 754L2655.4 751.8L2655.4 749.6L2655.3 747.4L2655.2 745.2L2655.1 743L2655 740.8L2654.9 738.6L2654.8 736.4L2654.6 734.2L2654.4 732L2654.3 729.8L2654.1 727.6L2653.9 725.4L2653.6 723.2L2653.4 721L2653.2 718.8L2652.9 716.6L2652.6 714.5L2652.3 712.3L2652 710.1L2651.7 708L2651.4 705.8L2651 703.6L2650.7 701.5L2650.3 699.3L2649.9 697.2L2649.5 695.1L2649 692.9L2648.6 690.8L2648.1 688.7L2647.7 686.6L2647.2 684.5L2646.6 682.4L2646.1 680.3L2645.6 678.2L2645 676.1L2644.4 674L2643.8 672L2643.1 669.9L2642.5 667.9L2641.8 665.8L2641.1 663.8L2640.4 661.8L2639.6 659.8L2638.9 657.8L2638.1 655.8L2637.2 653.9L2636.4 651.9L2635.5 650L2634.6 648.1L2633.7 646.1L2632.7 644.2L2631.7 642.4L2630.7 640.5L2629.7 638.7L2628.6 636.8L2627.4 635L2626.3 633.2L2625.1 631.5L2623.9 629.7L2622.6 628L2621.3 626.3L2620 624.6L2618.6 623L2617.1 621.3L2615.7 619.7L2614.2 618.2L2612.6 616.6L2611 615.1L2609.4 613.7L2607.7 612.2L2605.9 610.8L2604.2 609.4L2602.3 608.1L2600.4 606.8L2598.5 605.5L2596.5 604.3L2594.5 603.2L2592.4 602L2590.3 600.9L2588.1 599.9L2585.9 598.9L2583.7 598L2581.4 597.1L2579 596.3L2576.6 595.5L2574.2 594.8L2571.7 594.1L2569.2 593.5L2566.7 593L2564.2 592.5L2561.6 592.1L2559 591.8L2556.3 591.5L2553.7 591.2L2551.1 591.1L2548.4 591L2545.7 590.9" stroke="#000" stroke-width="5.4" fill="none" stroke-linejoin="round"/>
<path d="M2545.7 667.6L2544.7 667.6L2543.7 667.6L2542.8 667.7L2541.8 667.8L2540.8 667.9L2539.8 668L2538.8 668.2L2537.8 668.3L2536.9 668.5L2535.9 668.8L2534.9 669L2534 669.3L2533 669.6L2532 669.9L2531.1 670.3L2530.2 670.6L2529.2 671L2528.3 671.4L2527.4 671.9L2526.5 672.3L2525.6 672.8L2524.7 673.3L2523.8 673.8L2522.9 674.4L2522 674.9L2521.2 675.5L2520.3 676.1L2519.5 676.8L2518.6 677.4L2517.8 678.1L2517 678.7L2516.2 679.5L2515.4 680.2L2514.6 680.9L2513.8 681.7L2513.1 682.4L2512.3 683.2L2511.6 684.1L2510.9 684.9L2510.2 685.7L2509.5 686.6L2508.8 687.5L2508.1 688.4L2507.4 689.3L2506.8 690.2L2506.2 691.1L2505.5 692.1L2504.9 693L2504.3 694L2503.7 695L2503.2 696L2502.6 697L2502.1 698.1L2501.5 699.1L2501 700.2L2500.5 701.2L2500 702.3L2499.5 703.4L2499 704.5L2498.6 705.6L2498.1 706.7L2497.7 707.8L2497.3 709L2496.9 710.1L2496.5 711.3L2496.1 712.4L2495.8 713.6L2495.4 714.8L2495.1 716L2494.8 717.2L2494.4 718.4L2494.2 719.6L2493.9 720.8L2493.6 722L2493.3 723.2L2493.1 724.5L2492.9 725.7L2492.6 726.9L2492.4 728.2L2492.3 729.4L2492.1 730.7L2491.9 731.9L2491.8 733.2L2491.6 734.5L2491.5 735.7L2491.4 737L2491.3 738.3L2491.2 739.5L2491.1 740.8L2491.1 742.1L2491 743.4L2491 744.6L2491 745.9L2491 747.2L2491 748.5L2491 749.7L2491.1 751L2491.1 752.3L2491.2 753.6L2491.3 754.8L2491.4 756.1L2491.5 757.4L2491.6 758.6L2491.8 759.9L2491.9 761.2L2492.1 762.4L2492.3 763.7L2492.5 764.9L2492.7 766.2L2492.9 767.4L2493.2 768.6L2493.4 769.9L2493.7 771.1L2494 772.3L2494.3 773.5L2494.6 774.7L2494.9 775.9L2495.3 777.1L2495.6 778.3L2496 779.5L2496.4 780.6L2496.8 781.8L2497.2 782.9L2497.7 784.1L2498.1 785.2L2498.6 786.3L2499.1 787.4L2499.6 788.5L2500.1 789.6L2500.7 790.7L2501.2 791.7L2501.8 792.8L2502.4 793.8L2503 794.8L2503.6 795.9L2504.2 796.8L2504.9 797.8L2505.6 798.8L2506.2 799.7L2506.9 800.7L2507.7 801.6L2508.4 802.5L2509.1 803.4L2509.9 804.2L2510.7 805.1L2511.5 805.9L2512.3 806.7L2513.1 807.5L2514 808.3L2514.8 809.1L2515.7 809.8L2516.6 810.5L2517.5 811.2L2518.4 811.9L2519.3 812.5L2520.3 813.2L2521.2 813.8L2522.2 814.3L2523.2 814.9L2524.1 815.4L2525.2 816L2526.2 816.4L2527.2 816.9L2528.2 817.3L2529.3 817.8L2530.3 818.1L2531.4 818.5L2532.5 818.8L2533.5 819.2L2534.6 819.4L2535.7 819.7L2536.8 819.9L2537.9 820.1L2539 820.3L2540.1 820.5L2541.2 820.6L2542.4 820.7L2543.5 820.7L2544.6 820.8L2545.7 820.8L2546.9 820.8L2548 820.7L2549.1 820.7L2550.2 820.6L2551.3 820.5L2552.4 820.3L2553.5 820.1L2554.6 819.9L2555.7 819.7L2556.8 819.4L2557.9 819.2L2559 818.8L2560.1 818.5L2561.1 818.1L2562.2 817.8L2563.2 817.3L2564.3 816.9L2565.3 816.4L2566.3 816L2567.3 815.4L2568.3 814.9L2569.3 814.3L2570.2 813.8L2571.2 813.2L2572.1 812.5L2573.1 811.9L2574 811.2L2574.9 810.5L2575.8 809.8L2576.6 809.1L2577.5 808.3L2578.3 807.5L2579.2 806.7L2580 805.9L2580.8 805.1L2581.5 804.2L2582.3 803.4L2583.1 802.5L2583.8 801.6L2584.5 800.7L2585.2 799.7L2585.9 798.8L2586.6 797.8L2587.2 796.8L2587.8 795.9L2588.5 794.8L2589.1 793.8L2589.7 792.8L2590.2 791.7L2590.8 790.7L2591.3 789.6L2591.8 788.5L2592.3 787.4L2592.8 786.3L2593.3 785.2L2593.8 784.1L2594.2 782.9L2594.6 781.8L2595 780.6L2595.4 779.5L2595.8 778.3L2596.2 777.1L2596.5 775.9L2596.9 774.7L2597.2 773.5L2597.5 772.3L2597.8 771.1L2598 769.9L2598.3 768.6L2598.5 767.4L2598.8 766.2L2599 764.9L2599.2 763.7L2599.4 762.4L2599.5 761.2L2599.7 759.9L2599.8 758.6L2600 757.4L2600.1 756.1L2600.2 754.8L2600.2 753.6L2600.3 752.3L2600.4 751L2600.4 749.7L2600.4 748.5L2600.5 747.2L2600.5 745.9L2600.4 744.6L2600.4 743.4L2600.4 742.1L2600.3 740.8L2600.2 739.5L2600.2 738.3L2600.1 737L2600 735.7L2599.8 734.5L2599.7 733.2L2599.5 731.9L2599.4 730.7L2599.2 729.4L2599 728.2L2598.8 726.9L2598.6 725.7L2598.4 724.5L2598.1 723.2L2597.9 722L2597.6 720.8L2597.3 719.6L2597 718.4L2596.7 717.2L2596.4 716L2596 714.8L2595.7 713.6L2595.3 712.4L2594.9 711.3L2594.6 710.1L2594.2 709L2593.7 707.8L2593.3 706.7L2592.9 705.6L2592.4 704.5L2591.9 703.4L2591.5 702.3L2591 701.2L2590.5 700.2L2589.9 699.1L2589.4 698.1L2588.9 697L2588.3 696L2587.7 695L2587.1 694L2586.5 693L2585.9 692.1L2585.3 691.1L2584.7 690.2L2584 689.3L2583.3 688.4L2582.7 687.5L2582 686.6L2581.3 685.7L2580.6 684.9L2579.9 684.1L2579.1 683.2L2578.4 682.4L2577.6 681.7L2576.8 680.9L2576.1 680.2L2575.3 679.5L2574.5 678.7L2573.7 678.1L2572.8 677.4L2572 676.8L2571.2 676.1L2570.3 675.5L2569.4 674.9L2568.6 674.4L2567.7 673.8L2566.8 673.3L2565.9 672.8L2565 672.3L2564.1 671.9L2563.2 671.4L2562.2 671L2561.3 670.6L2560.4 670.3L2559.4 669.9L2558.5 669.6L2557.5 669.3L2556.5 669L2555.6 668.8L2554.6 668.5L2553.6 668.3L2552.6 668.2L2551.7 668L2550.7 667.9L2549.7 667.8L2548.7 667.7L2547.7 667.6L2546.7 667.6L2545.7 667.6" stroke="#000" stroke-width="5.4" fill="none" stroke-linejoin="round"/>
<polyline points="2235.2,537.8 2240.7,538.6 2246.2,539.4 2251.7,540.4 2257.2,541.4 2262.6,542.5 2268.1,543.7 2273.6,544.9 2279.1,546.3 2284.6,547.8 2290.1,549.5 2295.5,551.3 2301,553.1 2306.5,554.8 2312,556.3 2317.5,557.8 2323,559.2 2328.4,560.6 2333.9,562 2339.4,563.3 2344.9,564.6 2350.4,565.8 2355.9,567.1 2361.3,568.4 2366.8,569.6 2372.3,570.7 2377.8,571.6 2383.3,572.3 2388.8,572.8 2394.2,573.4 2399.7,573.8 2405.2,574 2410.7,574 2416.2,573.7 2421.7,573 2427.1,572.2 2432.6,571.3 2438.1,570.3 2443.6,569.3 2449.1,568 2454.6,566.6 2460,565 2465.5,563.4 2471,561.6 2476.5,559.4 2482,557 2487.5,554.8 2492.9,553 2498.4,551.9 2503.9,551.2 2509.4,550.6 2514.9,550.1 2520.4,549.5 2525.8,549 2531.3,548.2 2536.8,547.4 2542.3,546.5 2547.8,545.5 2553.3,544.7 2558.7,543.9 2564.2,543.3 2569.7,542.8 2575.2,542.3 2580.7,541.9 2586.2,541.5 2591.6,541.1 2597.1,540.7 2602.6,540.4 2608.1,540.1 2613.6,539.9 2619.1,539.6 2624.5,539.4 2630,539.2 2635.5,539 2641,538.8 2646.5,538.6 2652,538.5 2657.4,538.3 2662.9,538.1 2668.4,538 2673.9,537.8 2679.4,537.6 2684.9,537.4 2690.3,537.2 2695.8,537 2701.3,536.8 2706.8,536.6 2712.3,536.4 2717.8,536.3 2723.2,536.1 2728.7,536 2734.2,535.8 2739.7,535.7 2745.2,535.5 2750.7,535.4 2756.1,535.3 2761.6,535.1 2767.1,535 2772.6,535 2778.1,534.9 2783.6,534.9 2789.1,534.9 2794.5,534.9 2800,534.9 2805.5,534.9 2811,534.9 2816.5,534.9 2822,534.9 2827.4,534.9 2832.9,534.9 2838.4,534.9 2843.9,535 2849.4,535.3 2854.9,535.6 2860.3,535.9 2865.8,536.4 2871.3,536.9 2876.8,537.4 2882.3,538 2887.8,538.6" fill="none" stroke="#19f5f5" stroke-width="4.6" stroke-dasharray="4.2 4.4"/>
<polyline points="2235.2,724.4 2240.7,725.1 2246.2,725.9 2251.7,726.6 2257.2,727.4 2262.6,728.1 2268.1,728.9 2273.6,729.7 2279.1,730.6 2284.6,731.4 2290.1,732.3 2295.5,733.2 2301,734.1 2306.5,735 2312,736 2317.5,736.9 2323,737.9 2328.4,738.9 2333.9,739.9 2339.4,740.9 2344.9,742 2350.4,743.2 2355.9,744.3 2361.3,745.4 2366.8,746.6 2372.3,747.7 2377.8,748.8 2383.3,749.8 2388.8,750.9 2394.2,752.2 2399.7,753.5 2405.2,754.8 2410.7,756 2416.2,757.1 2421.7,758 2427.1,758.6 2432.6,758.8 2438.1,758.4 2443.6,756.8 2449.1,754.6 2454.6,752.1 2460,748.7 2465.5,744.5 2471,739.8 2476.5,734.6 2482,728.5 2487.5,721.7 2492.9,712 2498.4,702.1 2503.9,699.1 2509.4,697.6 2514.9,696.5 2520.4,695.8 2525.8,695.5 2531.3,695.4 2536.8,695.5 2542.3,695.6 2547.8,695.8 2553.3,696 2558.7,696.2 2564.2,696.4 2569.7,696.7 2575.2,697.1 2580.7,697.4 2586.2,697.7 2591.6,698.1 2597.1,698.8 2602.6,699.8 2608.1,701 2613.6,702.3 2619.1,703.7 2624.5,705.1 2630,706.5 2635.5,707.7 2641,708.7 2646.5,709.5 2652,709.9 2657.4,709.9 2662.9,709.9 2668.4,709.8 2673.9,709.6 2679.4,709.4 2684.9,709.3 2690.3,709 2695.8,708.8 2701.3,708.6 2706.8,708.5 2712.3,708.3 2717.8,708.2 2723.2,708.1 2728.7,708.1 2734.2,708.1 2739.7,708.2 2745.2,708.3 2750.7,708.4 2756.1,708.5 2761.6,708.6 2767.1,708.8 2772.6,708.9 2778.1,709.1 2783.6,709.3 2789.1,709.5 2794.5,709.7 2800,709.9 2805.5,710.2 2811,710.6 2816.5,711 2822,711.5 2827.4,712 2832.9,712.6 2838.4,713.3 2843.9,714 2849.4,714.7 2854.9,715.5 2860.3,716.4 2865.8,717.4 2871.3,718.6 2876.8,719.9 2882.3,721.2 2887.8,722.6" fill="none" stroke="#19f5f5" stroke-width="4.6" stroke-dasharray="4.2 4.4"/>
<polyline points="2235.2,898.3 2240.7,900.7 2246.2,903 2251.7,905.3 2257.2,907.6 2262.6,909.8 2268.1,912.1 2273.6,914.3 2279.1,916.6 2284.6,918.8 2290.1,921.1 2295.5,923.3 2301,925.5 2306.5,927.6 2312,929.7 2317.5,931.9 2323,934.1 2328.4,936.4 2333.9,938.4 2339.4,940.2 2344.9,941.5 2350.4,942.3 2355.9,943.1 2361.3,943.7 2366.8,944.3 2372.3,944.7 2377.8,945.1 2383.3,945.4 2388.8,945.7 2394.2,946 2399.7,946.3 2405.2,946.5 2410.7,946.7 2416.2,946.9 2421.7,947 2427.1,947.2 2432.6,947.2 2438.1,947.2 2443.6,947.2 2449.1,947.2 2454.6,947.2 2460,947.2 2465.5,947.1 2471,947.1 2476.5,947 2482,947 2487.5,946.9 2492.9,946.8 2498.4,946.7 2503.9,946.6 2509.4,946.5 2514.9,946.3 2520.4,945.8 2525.8,945.1 2531.3,944.3 2536.8,943.6 2542.3,943.1 2547.8,942.5 2553.3,942 2558.7,941.4 2564.2,940.8 2569.7,940.1 2575.2,939.4 2580.7,938.5 2586.2,937.4 2591.6,935.9 2597.1,934.1 2602.6,932.1 2608.1,929.9 2613.6,927.6 2619.1,925.3 2624.5,922.9 2630,920.3 2635.5,917.6 2641,914.7 2646.5,911.8 2652,908.9 2657.4,906 2662.9,902.9 2668.4,899.8 2673.9,896.6 2679.4,893.5 2684.9,890.5 2690.3,887.8 2695.8,885.2 2701.3,882.5 2706.8,879.8 2712.3,877.4 2717.8,875.3 2723.2,873.7 2728.7,872.8 2734.2,872.1 2739.7,871.5 2745.2,870.9 2750.7,870.5 2756.1,870.2 2761.6,870.1 2767.1,870.1 2772.6,870.2 2778.1,870.4 2783.6,870.7 2789.1,871.1 2794.5,871.5 2800,871.9 2805.5,872.5 2811,873.3 2816.5,874.3 2822,875.4 2827.4,876.5 2832.9,877.7 2838.4,878.9 2843.9,880.2 2849.4,881.5 2854.9,883 2860.3,884.4 2865.8,886 2871.3,887.6 2876.8,889.3 2882.3,891.1 2887.8,892.9" fill="none" stroke="#19f5f5" stroke-width="4.6" stroke-dasharray="4.2 4.4"/>
<polyline points="2369.8,505.6 2391,505.6 2407,505.6 2439.4,507.7 2463.5,514.2 2481.2,522.2 2489.3,531.9 2494.1,543.1 2496.5,551.2 2499,570.5 2500.6,601.1 2501.4,649.4 2501.4,698.9 2500.1,747.2 2499.7,796.9 2499.7,845.8 2500.5,868 2502.9,894.3 2507.9,917.3 2516.1,930.5 2526,938.7 2537.5,943.6 2550.6,947.7 2570,950.4 2600,951.2 2615.6,951.4" fill="none" stroke="#ff0d0d" stroke-width="4.4" stroke-linejoin="round"/>
<line x1="2618" y1="951.4" x2="2640" y2="951.4" stroke="#ff0d0d" stroke-width="4.4" stroke-dasharray="8 2 1.6 2.4 1.7 3 3.3 0"/>
</g>
<rect x="2235.2" y="497.3" width="652.6" height="462" fill="none" stroke="#262626" stroke-width="1.1"/>
<circle cx="2647.2" cy="951.5" r="13.3" fill="none" stroke="#ff00ff" stroke-width="1.1" clip-path="url(#me)"/>
<rect x="2640" y="932.4" width="26.8" height="31" fill="#fff"/>
<text x="2654.2" y="960" text-anchor="middle" class="se">E</text>
<rect x="2344" y="486.9" width="26.1" height="37.9" fill="#fff"/>
<text x="2356.6" y="513.4" text-anchor="middle" class="se">S</text>
<circle cx="2391.1" cy="505.7" r="13.7" fill="#ff00ff"/>
<circle cx="2495.9" cy="550.8" r="13.7" fill="#ff00ff"/>
<circle cx="2500.3" cy="600.2" r="13.7" fill="#ff00ff"/>
<circle cx="2501.1" cy="649.2" r="13.7" fill="#ff00ff"/>
<circle cx="2501.1" cy="698.6" r="13.7" fill="#ff00ff"/>
<circle cx="2500.1" cy="747.2" r="13.7" fill="#ff00ff"/>
<circle cx="2499.7" cy="796.9" r="13.7" fill="#ff00ff"/>
<circle cx="2499.7" cy="845.8" r="13.7" fill="#ff00ff"/>
<circle cx="2502.6" cy="895.4" r="13.7" fill="#ff00ff"/>
<circle cx="2537" cy="942.9" r="13.7" fill="#ff00ff"/>
<text x="2407.2" y="516.3" class="ml">00:10</text>
<text x="2516.4" y="610.8" class="ml">00:20</text>
<text x="2517.2" y="709.2" class="ml">00:30</text>
<text x="2515.8" y="807.5" class="ml">00:40</text>
<text x="2518.7" y="906" class="ml">00:50</text>
<text x="2561.5" y="482.8" text-anchor="middle" class="mt" fill="#000">20170907--01:00:00</text>
</svg>
</body></html>
